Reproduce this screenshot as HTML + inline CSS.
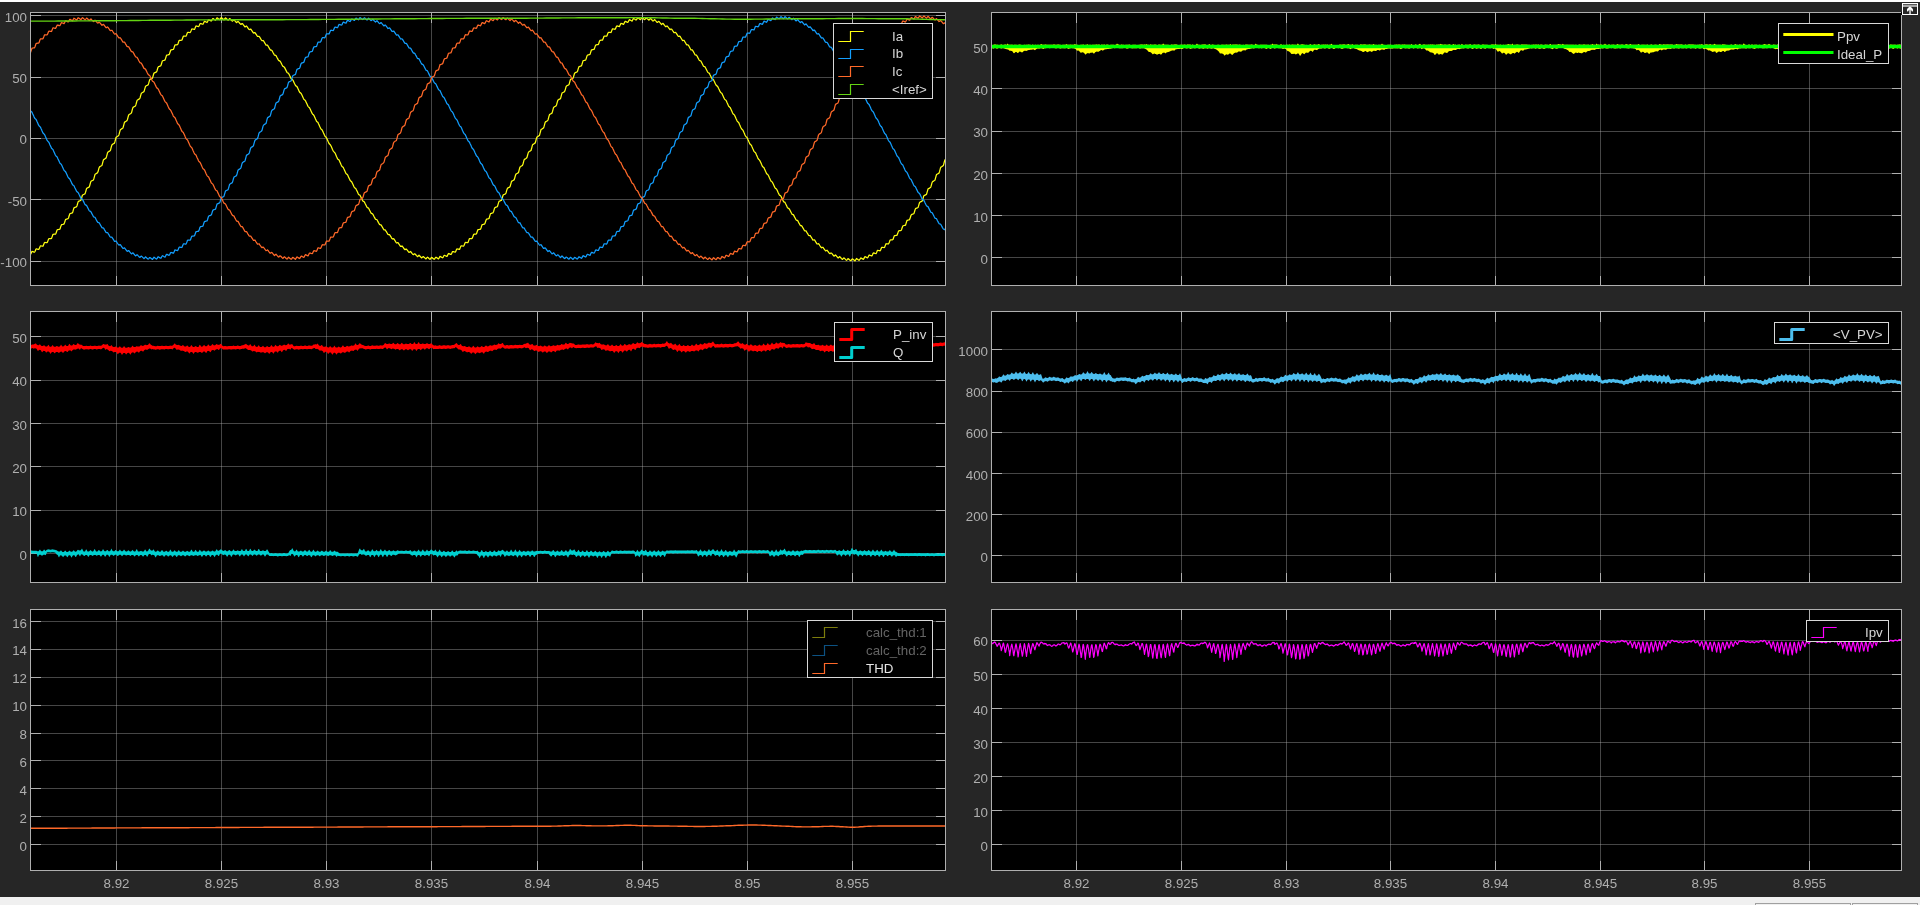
<!DOCTYPE html>
<html lang="en"><head><meta charset="utf-8"><title>Scope</title>
<style>html,body{margin:0;padding:0;background:#262626;overflow:hidden}
body{width:1920px;height:905px;position:relative;font-family:"Liberation Sans", sans-serif}
svg{position:absolute;left:0;top:0;display:block;will-change:transform}
svg text{font-family:"Liberation Sans", sans-serif;white-space:pre}
</style></head><body>
<svg width="1920" height="905" viewBox="0 0 1920 905">
<rect x="0" y="0" width="1920" height="2" fill="#fff"/>
<rect x="0" y="897" width="1920" height="8" fill="#f0f0f0"/>
<g shape-rendering="crispEdges"><rect x="1755.5" y="903.5" width="95" height="4" fill="#f0f0f0" stroke="#a0a0a0"/><rect x="1852.5" y="903.5" width="65" height="4" fill="#f0f0f0" stroke="#a0a0a0"/></g>
<defs>
<clipPath id="a1"><rect x="31" y="13" width="914" height="272"/></clipPath>
<clipPath id="a2"><rect x="31" y="312" width="914" height="270"/></clipPath>
<clipPath id="a3"><rect x="31" y="610" width="914" height="260"/></clipPath>
<clipPath id="a4"><rect x="992" y="13" width="909" height="272"/></clipPath>
<clipPath id="a5"><rect x="992" y="312" width="909" height="270"/></clipPath>
<clipPath id="a6"><rect x="992" y="610" width="909" height="260"/></clipPath>
</defs>
<rect x="30" y="12" width="916" height="274" fill="#000"/>
<g shape-rendering="crispEdges" stroke-width="1" fill="none"><g stroke="#afafaf" stroke-opacity="0.4"><line x1="116.5" y1="13" x2="116.5" y2="285"/><line x1="221.5" y1="13" x2="221.5" y2="285"/><line x1="326.5" y1="13" x2="326.5" y2="285"/><line x1="431.5" y1="13" x2="431.5" y2="285"/><line x1="537.5" y1="13" x2="537.5" y2="285"/><line x1="642.5" y1="13" x2="642.5" y2="285"/><line x1="747.5" y1="13" x2="747.5" y2="285"/><line x1="852.5" y1="13" x2="852.5" y2="285"/><line x1="31" y1="15.5" x2="945" y2="15.5"/><line x1="31" y1="77.5" x2="945" y2="77.5"/><line x1="31" y1="138.5" x2="945" y2="138.5"/><line x1="31" y1="199.5" x2="945" y2="199.5"/><line x1="31" y1="261.5" x2="945" y2="261.5"/></g></g>
<rect x="30" y="311" width="916" height="272" fill="#000"/>
<g shape-rendering="crispEdges" stroke-width="1" fill="none"><g stroke="#afafaf" stroke-opacity="0.4"><line x1="116.5" y1="312" x2="116.5" y2="582"/><line x1="221.5" y1="312" x2="221.5" y2="582"/><line x1="326.5" y1="312" x2="326.5" y2="582"/><line x1="431.5" y1="312" x2="431.5" y2="582"/><line x1="537.5" y1="312" x2="537.5" y2="582"/><line x1="642.5" y1="312" x2="642.5" y2="582"/><line x1="747.5" y1="312" x2="747.5" y2="582"/><line x1="852.5" y1="312" x2="852.5" y2="582"/><line x1="31" y1="336.5" x2="945" y2="336.5"/><line x1="31" y1="380.5" x2="945" y2="380.5"/><line x1="31" y1="423.5" x2="945" y2="423.5"/><line x1="31" y1="466.5" x2="945" y2="466.5"/><line x1="31" y1="510.5" x2="945" y2="510.5"/><line x1="31" y1="553.5" x2="945" y2="553.5"/></g></g>
<rect x="30" y="609" width="916" height="262" fill="#000"/>
<g shape-rendering="crispEdges" stroke-width="1" fill="none"><g stroke="#afafaf" stroke-opacity="0.4"><line x1="116.5" y1="610" x2="116.5" y2="870"/><line x1="221.5" y1="610" x2="221.5" y2="870"/><line x1="326.5" y1="610" x2="326.5" y2="870"/><line x1="431.5" y1="610" x2="431.5" y2="870"/><line x1="537.5" y1="610" x2="537.5" y2="870"/><line x1="642.5" y1="610" x2="642.5" y2="870"/><line x1="747.5" y1="610" x2="747.5" y2="870"/><line x1="852.5" y1="610" x2="852.5" y2="870"/><line x1="31" y1="621.5" x2="945" y2="621.5"/><line x1="31" y1="649.5" x2="945" y2="649.5"/><line x1="31" y1="677.5" x2="945" y2="677.5"/><line x1="31" y1="705.5" x2="945" y2="705.5"/><line x1="31" y1="733.5" x2="945" y2="733.5"/><line x1="31" y1="760.5" x2="945" y2="760.5"/><line x1="31" y1="788.5" x2="945" y2="788.5"/><line x1="31" y1="816.5" x2="945" y2="816.5"/><line x1="31" y1="844.5" x2="945" y2="844.5"/></g></g>
<rect x="991" y="12" width="911" height="274" fill="#000"/>
<g shape-rendering="crispEdges" stroke-width="1" fill="none"><g stroke="#afafaf" stroke-opacity="0.4"><line x1="1076.5" y1="13" x2="1076.5" y2="285"/><line x1="1181.5" y1="13" x2="1181.5" y2="285"/><line x1="1286.5" y1="13" x2="1286.5" y2="285"/><line x1="1390.5" y1="13" x2="1390.5" y2="285"/><line x1="1495.5" y1="13" x2="1495.5" y2="285"/><line x1="1600.5" y1="13" x2="1600.5" y2="285"/><line x1="1704.5" y1="13" x2="1704.5" y2="285"/><line x1="1809.5" y1="13" x2="1809.5" y2="285"/><line x1="992" y1="46.5" x2="1901" y2="46.5"/><line x1="992" y1="88.5" x2="1901" y2="88.5"/><line x1="992" y1="131.5" x2="1901" y2="131.5"/><line x1="992" y1="173.5" x2="1901" y2="173.5"/><line x1="992" y1="215.5" x2="1901" y2="215.5"/><line x1="992" y1="257.5" x2="1901" y2="257.5"/></g></g>
<rect x="991" y="311" width="911" height="272" fill="#000"/>
<g shape-rendering="crispEdges" stroke-width="1" fill="none"><g stroke="#afafaf" stroke-opacity="0.4"><line x1="1076.5" y1="312" x2="1076.5" y2="582"/><line x1="1181.5" y1="312" x2="1181.5" y2="582"/><line x1="1286.5" y1="312" x2="1286.5" y2="582"/><line x1="1390.5" y1="312" x2="1390.5" y2="582"/><line x1="1495.5" y1="312" x2="1495.5" y2="582"/><line x1="1600.5" y1="312" x2="1600.5" y2="582"/><line x1="1704.5" y1="312" x2="1704.5" y2="582"/><line x1="1809.5" y1="312" x2="1809.5" y2="582"/><line x1="992" y1="349.5" x2="1901" y2="349.5"/><line x1="992" y1="391.5" x2="1901" y2="391.5"/><line x1="992" y1="432.5" x2="1901" y2="432.5"/><line x1="992" y1="473.5" x2="1901" y2="473.5"/><line x1="992" y1="514.5" x2="1901" y2="514.5"/><line x1="992" y1="555.5" x2="1901" y2="555.5"/></g></g>
<rect x="991" y="609" width="911" height="262" fill="#000"/>
<g shape-rendering="crispEdges" stroke-width="1" fill="none"><g stroke="#afafaf" stroke-opacity="0.4"><line x1="1076.5" y1="610" x2="1076.5" y2="870"/><line x1="1181.5" y1="610" x2="1181.5" y2="870"/><line x1="1286.5" y1="610" x2="1286.5" y2="870"/><line x1="1390.5" y1="610" x2="1390.5" y2="870"/><line x1="1495.5" y1="610" x2="1495.5" y2="870"/><line x1="1600.5" y1="610" x2="1600.5" y2="870"/><line x1="1704.5" y1="610" x2="1704.5" y2="870"/><line x1="1809.5" y1="610" x2="1809.5" y2="870"/><line x1="992" y1="640.5" x2="1901" y2="640.5"/><line x1="992" y1="674.5" x2="1901" y2="674.5"/><line x1="992" y1="708.5" x2="1901" y2="708.5"/><line x1="992" y1="742.5" x2="1901" y2="742.5"/><line x1="992" y1="776.5" x2="1901" y2="776.5"/><line x1="992" y1="810.5" x2="1901" y2="810.5"/><line x1="992" y1="844.5" x2="1901" y2="844.5"/></g></g>
<g shape-rendering="crispEdges" stroke-width="1" fill="none" stroke="#afafaf"><line x1="116.5" y1="13" x2="116.5" y2="23"/><line x1="116.5" y1="276" x2="116.5" y2="285"/><line x1="221.5" y1="13" x2="221.5" y2="23"/><line x1="221.5" y1="276" x2="221.5" y2="285"/><line x1="326.5" y1="13" x2="326.5" y2="23"/><line x1="326.5" y1="276" x2="326.5" y2="285"/><line x1="431.5" y1="13" x2="431.5" y2="23"/><line x1="431.5" y1="276" x2="431.5" y2="285"/><line x1="537.5" y1="13" x2="537.5" y2="23"/><line x1="537.5" y1="276" x2="537.5" y2="285"/><line x1="642.5" y1="13" x2="642.5" y2="23"/><line x1="642.5" y1="276" x2="642.5" y2="285"/><line x1="747.5" y1="13" x2="747.5" y2="23"/><line x1="747.5" y1="276" x2="747.5" y2="285"/><line x1="852.5" y1="13" x2="852.5" y2="23"/><line x1="852.5" y1="276" x2="852.5" y2="285"/><line x1="31" y1="15.5" x2="41" y2="15.5"/><line x1="936" y1="15.5" x2="945" y2="15.5"/><line x1="31" y1="77.5" x2="41" y2="77.5"/><line x1="936" y1="77.5" x2="945" y2="77.5"/><line x1="31" y1="138.5" x2="41" y2="138.5"/><line x1="936" y1="138.5" x2="945" y2="138.5"/><line x1="31" y1="199.5" x2="41" y2="199.5"/><line x1="936" y1="199.5" x2="945" y2="199.5"/><line x1="31" y1="261.5" x2="41" y2="261.5"/><line x1="936" y1="261.5" x2="945" y2="261.5"/><rect x="30.5" y="12.5" width="915" height="273"/></g>
<g fill="#afafaf" font-size="13.33" text-anchor="end"><text x="27" y="22">100</text><text x="27" y="83">50</text><text x="27" y="144">0</text><text x="27" y="206">-50</text><text x="27" y="267">-100</text></g>
<g shape-rendering="crispEdges" stroke-width="1" fill="none" stroke="#afafaf"><line x1="116.5" y1="312" x2="116.5" y2="322"/><line x1="116.5" y1="573" x2="116.5" y2="582"/><line x1="221.5" y1="312" x2="221.5" y2="322"/><line x1="221.5" y1="573" x2="221.5" y2="582"/><line x1="326.5" y1="312" x2="326.5" y2="322"/><line x1="326.5" y1="573" x2="326.5" y2="582"/><line x1="431.5" y1="312" x2="431.5" y2="322"/><line x1="431.5" y1="573" x2="431.5" y2="582"/><line x1="537.5" y1="312" x2="537.5" y2="322"/><line x1="537.5" y1="573" x2="537.5" y2="582"/><line x1="642.5" y1="312" x2="642.5" y2="322"/><line x1="642.5" y1="573" x2="642.5" y2="582"/><line x1="747.5" y1="312" x2="747.5" y2="322"/><line x1="747.5" y1="573" x2="747.5" y2="582"/><line x1="852.5" y1="312" x2="852.5" y2="322"/><line x1="852.5" y1="573" x2="852.5" y2="582"/><line x1="31" y1="336.5" x2="41" y2="336.5"/><line x1="936" y1="336.5" x2="945" y2="336.5"/><line x1="31" y1="380.5" x2="41" y2="380.5"/><line x1="936" y1="380.5" x2="945" y2="380.5"/><line x1="31" y1="423.5" x2="41" y2="423.5"/><line x1="936" y1="423.5" x2="945" y2="423.5"/><line x1="31" y1="466.5" x2="41" y2="466.5"/><line x1="936" y1="466.5" x2="945" y2="466.5"/><line x1="31" y1="510.5" x2="41" y2="510.5"/><line x1="936" y1="510.5" x2="945" y2="510.5"/><line x1="31" y1="553.5" x2="41" y2="553.5"/><line x1="936" y1="553.5" x2="945" y2="553.5"/><rect x="30.5" y="311.5" width="915" height="271"/></g>
<g fill="#afafaf" font-size="13.33" text-anchor="end"><text x="27" y="343">50</text><text x="27" y="386">40</text><text x="27" y="430">30</text><text x="27" y="473">20</text><text x="27" y="516">10</text><text x="27" y="560">0</text></g>
<g shape-rendering="crispEdges" stroke-width="1" fill="none" stroke="#afafaf"><line x1="116.5" y1="610" x2="116.5" y2="620"/><line x1="116.5" y1="861" x2="116.5" y2="870"/><line x1="221.5" y1="610" x2="221.5" y2="620"/><line x1="221.5" y1="861" x2="221.5" y2="870"/><line x1="326.5" y1="610" x2="326.5" y2="620"/><line x1="326.5" y1="861" x2="326.5" y2="870"/><line x1="431.5" y1="610" x2="431.5" y2="620"/><line x1="431.5" y1="861" x2="431.5" y2="870"/><line x1="537.5" y1="610" x2="537.5" y2="620"/><line x1="537.5" y1="861" x2="537.5" y2="870"/><line x1="642.5" y1="610" x2="642.5" y2="620"/><line x1="642.5" y1="861" x2="642.5" y2="870"/><line x1="747.5" y1="610" x2="747.5" y2="620"/><line x1="747.5" y1="861" x2="747.5" y2="870"/><line x1="852.5" y1="610" x2="852.5" y2="620"/><line x1="852.5" y1="861" x2="852.5" y2="870"/><line x1="31" y1="621.5" x2="41" y2="621.5"/><line x1="936" y1="621.5" x2="945" y2="621.5"/><line x1="31" y1="649.5" x2="41" y2="649.5"/><line x1="936" y1="649.5" x2="945" y2="649.5"/><line x1="31" y1="677.5" x2="41" y2="677.5"/><line x1="936" y1="677.5" x2="945" y2="677.5"/><line x1="31" y1="705.5" x2="41" y2="705.5"/><line x1="936" y1="705.5" x2="945" y2="705.5"/><line x1="31" y1="733.5" x2="41" y2="733.5"/><line x1="936" y1="733.5" x2="945" y2="733.5"/><line x1="31" y1="760.5" x2="41" y2="760.5"/><line x1="936" y1="760.5" x2="945" y2="760.5"/><line x1="31" y1="788.5" x2="41" y2="788.5"/><line x1="936" y1="788.5" x2="945" y2="788.5"/><line x1="31" y1="816.5" x2="41" y2="816.5"/><line x1="936" y1="816.5" x2="945" y2="816.5"/><line x1="31" y1="844.5" x2="41" y2="844.5"/><line x1="936" y1="844.5" x2="945" y2="844.5"/><rect x="30.5" y="609.5" width="915" height="261"/></g>
<g fill="#afafaf" font-size="13.33" text-anchor="end"><text x="27" y="628">16</text><text x="27" y="655">14</text><text x="27" y="683">12</text><text x="27" y="711">10</text><text x="27" y="739">8</text><text x="27" y="767">6</text><text x="27" y="795">4</text><text x="27" y="823">2</text><text x="27" y="851">0</text></g><g fill="#afafaf" font-size="13.33" text-anchor="middle"><text x="116.5" y="888.1">8.92</text><text x="221.5" y="888.1">8.925</text><text x="326.5" y="888.1">8.93</text><text x="431.5" y="888.1">8.935</text><text x="537.5" y="888.1">8.94</text><text x="642.5" y="888.1">8.945</text><text x="747.5" y="888.1">8.95</text><text x="852.5" y="888.1">8.955</text></g>
<g shape-rendering="crispEdges" stroke-width="1" fill="none" stroke="#afafaf"><line x1="1076.5" y1="13" x2="1076.5" y2="23"/><line x1="1076.5" y1="276" x2="1076.5" y2="285"/><line x1="1181.5" y1="13" x2="1181.5" y2="23"/><line x1="1181.5" y1="276" x2="1181.5" y2="285"/><line x1="1286.5" y1="13" x2="1286.5" y2="23"/><line x1="1286.5" y1="276" x2="1286.5" y2="285"/><line x1="1390.5" y1="13" x2="1390.5" y2="23"/><line x1="1390.5" y1="276" x2="1390.5" y2="285"/><line x1="1495.5" y1="13" x2="1495.5" y2="23"/><line x1="1495.5" y1="276" x2="1495.5" y2="285"/><line x1="1600.5" y1="13" x2="1600.5" y2="23"/><line x1="1600.5" y1="276" x2="1600.5" y2="285"/><line x1="1704.5" y1="13" x2="1704.5" y2="23"/><line x1="1704.5" y1="276" x2="1704.5" y2="285"/><line x1="1809.5" y1="13" x2="1809.5" y2="23"/><line x1="1809.5" y1="276" x2="1809.5" y2="285"/><line x1="992" y1="46.5" x2="1002" y2="46.5"/><line x1="1892" y1="46.5" x2="1901" y2="46.5"/><line x1="992" y1="88.5" x2="1002" y2="88.5"/><line x1="1892" y1="88.5" x2="1901" y2="88.5"/><line x1="992" y1="131.5" x2="1002" y2="131.5"/><line x1="1892" y1="131.5" x2="1901" y2="131.5"/><line x1="992" y1="173.5" x2="1002" y2="173.5"/><line x1="1892" y1="173.5" x2="1901" y2="173.5"/><line x1="992" y1="215.5" x2="1002" y2="215.5"/><line x1="1892" y1="215.5" x2="1901" y2="215.5"/><line x1="992" y1="257.5" x2="1002" y2="257.5"/><line x1="1892" y1="257.5" x2="1901" y2="257.5"/><path d="M991.5 12.5 H1901 M1901.5 15 V285.5 H991.5 V12"/></g>
<g fill="#afafaf" font-size="13.33" text-anchor="end"><text x="988" y="53">50</text><text x="988" y="95">40</text><text x="988" y="137">30</text><text x="988" y="180">20</text><text x="988" y="222">10</text><text x="988" y="264">0</text></g>
<g shape-rendering="crispEdges" stroke-width="1" fill="none" stroke="#afafaf"><line x1="1076.5" y1="312" x2="1076.5" y2="322"/><line x1="1076.5" y1="573" x2="1076.5" y2="582"/><line x1="1181.5" y1="312" x2="1181.5" y2="322"/><line x1="1181.5" y1="573" x2="1181.5" y2="582"/><line x1="1286.5" y1="312" x2="1286.5" y2="322"/><line x1="1286.5" y1="573" x2="1286.5" y2="582"/><line x1="1390.5" y1="312" x2="1390.5" y2="322"/><line x1="1390.5" y1="573" x2="1390.5" y2="582"/><line x1="1495.5" y1="312" x2="1495.5" y2="322"/><line x1="1495.5" y1="573" x2="1495.5" y2="582"/><line x1="1600.5" y1="312" x2="1600.5" y2="322"/><line x1="1600.5" y1="573" x2="1600.5" y2="582"/><line x1="1704.5" y1="312" x2="1704.5" y2="322"/><line x1="1704.5" y1="573" x2="1704.5" y2="582"/><line x1="1809.5" y1="312" x2="1809.5" y2="322"/><line x1="1809.5" y1="573" x2="1809.5" y2="582"/><line x1="992" y1="349.5" x2="1002" y2="349.5"/><line x1="1892" y1="349.5" x2="1901" y2="349.5"/><line x1="992" y1="391.5" x2="1002" y2="391.5"/><line x1="1892" y1="391.5" x2="1901" y2="391.5"/><line x1="992" y1="432.5" x2="1002" y2="432.5"/><line x1="1892" y1="432.5" x2="1901" y2="432.5"/><line x1="992" y1="473.5" x2="1002" y2="473.5"/><line x1="1892" y1="473.5" x2="1901" y2="473.5"/><line x1="992" y1="514.5" x2="1002" y2="514.5"/><line x1="1892" y1="514.5" x2="1901" y2="514.5"/><line x1="992" y1="555.5" x2="1002" y2="555.5"/><line x1="1892" y1="555.5" x2="1901" y2="555.5"/><rect x="991.5" y="311.5" width="910" height="271"/></g>
<g fill="#afafaf" font-size="13.33" text-anchor="end"><text x="988" y="356">1000</text><text x="988" y="397">800</text><text x="988" y="438">600</text><text x="988" y="480">400</text><text x="988" y="521">200</text><text x="988" y="562">0</text></g>
<g shape-rendering="crispEdges" stroke-width="1" fill="none" stroke="#afafaf"><line x1="1076.5" y1="610" x2="1076.5" y2="620"/><line x1="1076.5" y1="861" x2="1076.5" y2="870"/><line x1="1181.5" y1="610" x2="1181.5" y2="620"/><line x1="1181.5" y1="861" x2="1181.5" y2="870"/><line x1="1286.5" y1="610" x2="1286.5" y2="620"/><line x1="1286.5" y1="861" x2="1286.5" y2="870"/><line x1="1390.5" y1="610" x2="1390.5" y2="620"/><line x1="1390.5" y1="861" x2="1390.5" y2="870"/><line x1="1495.5" y1="610" x2="1495.5" y2="620"/><line x1="1495.5" y1="861" x2="1495.5" y2="870"/><line x1="1600.5" y1="610" x2="1600.5" y2="620"/><line x1="1600.5" y1="861" x2="1600.5" y2="870"/><line x1="1704.5" y1="610" x2="1704.5" y2="620"/><line x1="1704.5" y1="861" x2="1704.5" y2="870"/><line x1="1809.5" y1="610" x2="1809.5" y2="620"/><line x1="1809.5" y1="861" x2="1809.5" y2="870"/><line x1="992" y1="640.5" x2="1002" y2="640.5"/><line x1="1892" y1="640.5" x2="1901" y2="640.5"/><line x1="992" y1="674.5" x2="1002" y2="674.5"/><line x1="1892" y1="674.5" x2="1901" y2="674.5"/><line x1="992" y1="708.5" x2="1002" y2="708.5"/><line x1="1892" y1="708.5" x2="1901" y2="708.5"/><line x1="992" y1="742.5" x2="1002" y2="742.5"/><line x1="1892" y1="742.5" x2="1901" y2="742.5"/><line x1="992" y1="776.5" x2="1002" y2="776.5"/><line x1="1892" y1="776.5" x2="1901" y2="776.5"/><line x1="992" y1="810.5" x2="1002" y2="810.5"/><line x1="1892" y1="810.5" x2="1901" y2="810.5"/><line x1="992" y1="844.5" x2="1002" y2="844.5"/><line x1="1892" y1="844.5" x2="1901" y2="844.5"/><rect x="991.5" y="609.5" width="910" height="261"/></g>
<g fill="#afafaf" font-size="13.33" text-anchor="end"><text x="988" y="646">60</text><text x="988" y="681">50</text><text x="988" y="715">40</text><text x="988" y="749">30</text><text x="988" y="783">20</text><text x="988" y="817">10</text><text x="988" y="851">0</text></g><g fill="#afafaf" font-size="13.33" text-anchor="middle"><text x="1076.5" y="888.1">8.92</text><text x="1181.5" y="888.1">8.925</text><text x="1286.5" y="888.1">8.93</text><text x="1390.5" y="888.1">8.935</text><text x="1495.5" y="888.1">8.94</text><text x="1600.5" y="888.1">8.945</text><text x="1704.5" y="888.1">8.95</text><text x="1809.5" y="888.1">8.955</text></g>
<polyline clip-path="url(#a1)" points="30.5,254.5 31,253.4 31.5,252.3 32,251.4 32.5,251.6 33,251.7 33.5,251.9 34,252.1 34.5,252.2 35,251.5 35.5,250.3 36,249.1 36.5,248.9 37,249 37.5,249.2 38,249.3 38.5,249.4 39,249.1 39.5,247.9 40,246.7 40.5,245.8 41,245.9 41.5,246 42,246.1 42.5,246.2 43,246.2 43.5,245.1 44,243.8 44.5,242.5 45,242.4 45.5,242.5 46,242.5 46.5,242.6 47,242.6 47.5,242 48,240.6 48.5,239.2 49,238.6 49.5,238.6 50,238.6 50.5,238.6 51,238.6 51.5,238.5 52,237.1 52.5,235.6 53,234.3 53.5,234.3 54,234.2 54.5,234.2 55,234.2 55.5,234.1 56,233.2 56.5,231.7 57,230.2 57.5,229.6 58,229.6 58.5,229.5 59,229.4 59.5,229.3 60,229 60.5,227.4 61,225.9 61.5,224.7 62,224.6 62.5,224.5 63,224.4 63.5,224.2 64,224.1 64.5,222.8 65,221.2 65.5,219.6 66,219.3 66.5,219.1 67,219 67.5,218.8 68,218.7 68.5,218 69,216.3 69.5,214.7 70,213.6 70.5,213.5 71,213.3 71.5,213.1 72,213 72.5,212.8 73,211.2 73.5,209.4 74,207.8 74.5,207.6 75,207.4 75.5,207.2 76,207 76.5,206.8 77,205.7 77.5,204 78,202.2 78.5,201.4 79,201.2 79.5,201 80,200.7 80.5,200.5 81,200.1 81.5,198.3 82,196.5 82.5,195 83,194.8 83.5,194.5 84,194.3 84.5,194 85,193.8 85.5,192.4 86,190.6 86.5,188.7 87,188.1 87.5,187.9 88,187.6 88.5,187.3 89,187.1 89.5,186.3 90,184.5 90.5,182.6 91,181.3 91.5,181 92,180.7 92.5,180.5 93,180.2 93.5,179.9 94,178.2 94.5,176.3 95,174.4 95.5,174 96,173.7 96.5,173.4 97,173.1 97.5,172.8 98,171.8 98.5,169.9 99,168 99.5,166.9 100,166.6 100.5,166.3 101,166 101.5,165.7 102,165.3 102.5,163.3 103,161.4 103.5,159.7 104,159.4 104.5,159.1 105,158.7 105.5,158.4 106,158.1 106.5,156.7 107,154.8 107.5,152.9 108,152.1 108.5,151.7 109,151.4 109.5,151.1 110,150.8 110.5,150.1 111,148.1 111.5,146.2 112,144.7 112.5,144.4 113,144 113.5,143.7 114,143.4 114.5,143.1 115,141.4 115.5,139.5 116,137.5 116.5,137 117,136.7 117.5,136.3 118,136 118.5,135.7 119,134.7 119.5,132.7 120,130.8 120.5,129.6 121,129.3 121.5,128.9 122,128.6 122.5,128.3 123,127.9 123.5,126 124,124.1 124.5,122.2 125,121.9 125.5,121.6 126,121.3 126.5,120.9 127,120.6 127.5,119.4 128,117.4 128.5,115.5 129,114.6 129.5,114.3 130,114 130.5,113.7 131,113.3 131.5,112.8 132,110.9 132.5,108.9 133,107.4 133.5,107.1 134,106.8 134.5,106.5 135,106.2 135.5,105.9 136,104.4 136.5,102.5 137,100.6 137.5,100 138,99.7 138.5,99.4 139,99.1 139.5,98.8 140,98 140.5,96.1 141,94.3 141.5,93 142,92.8 142.5,92.5 143,92.2 143.5,91.9 144,91.7 144.5,89.9 145,88.1 145.5,86.3 146,86 146.5,85.7 147,85.5 147.5,85.2 148,85 148.5,83.9 149,82.1 149.5,80.3 150,79.4 150.5,79.2 151,78.9 151.5,78.7 152,78.5 152.5,78.1 153,76.3 153.5,74.5 154,73 154.5,72.8 155,72.6 155.5,72.4 156,72.2 156.5,72 157,70.7 157.5,69 158,67.3 158.5,66.7 159,66.5 159.5,66.3 160,66.1 160.5,66 161,65.4 161.5,63.7 162,62 162.5,60.8 163,60.7 163.5,60.5 164,60.4 164.5,60.2 165,60.1 165.5,58.6 166,57 166.5,55.4 167,55.1 167.5,55 168,54.9 168.5,54.7 169,54.6 169.5,53.9 170,52.3 170.5,50.7 171,49.9 171.5,49.8 172,49.7 172.5,49.6 173,49.5 173.5,49.4 174,47.9 174.5,46.3 175,44.9 175.5,44.9 176,44.8 176.5,44.8 177,44.7 177.5,44.7 178,43.7 178.5,42.3 179,40.8 179.5,40.3 180,40.3 180.5,40.3 181,40.3 181.5,40.2 182,40 182.5,38.5 183,37.1 183.5,36.1 184,36.1 184.5,36.1 185,36.2 185.5,36.2 186,36.2 186.5,35.2 187,33.8 187.5,32.5 188,32.3 188.5,32.4 189,32.4 189.5,32.5 190,32.6 190.5,32.1 191,30.9 191.5,29.6 192,28.9 192.5,29 193,29.1 193.5,29.2 194,29.3 194.5,29.4 195,28.3 195.5,27.1 196,25.9 196.5,26 197,26.2 197.5,26.3 198,26.5 198.5,26.6 199,26.1 199.5,24.9 200,23.8 200.5,23.5 201,23.6 201.5,23.8 202,24 202.5,24.2 203,24.2 203.5,23.2 204,22.1 204.5,21.3 205,21.5 205.5,21.7 206,22 206.5,22.2 207,22.5 207.5,21.8 208,20.8 208.5,19.8 209,19.8 209.5,20.1 210,20.4 210.5,20.7 211,20.9 211.5,20.9 212,19.9 212.5,19 213,18.6 213.5,18.9 214,19.2 214.5,19.5 215,19.9 215.5,20.2 216,19.5 216.5,18.6 217,17.8 217.5,18.1 218,18.5 218.5,18.8 219,19.2 219.5,19.6 220,19.4 220.5,18.6 221,17.9 221.5,17.7 222,18.1 222.5,18.6 223,19 223.5,19.4 224,19.8 224.5,19.1 225,18.4 225.5,17.8 226,18.3 226.5,18.7 227,19.2 227.5,19.7 228,20.1 228.5,19.9 229,19.3 229.5,18.7 230,18.8 230.5,19.3 231,19.8 231.5,20.4 232,20.9 232.5,21.1 233,20.6 233.5,20 234,19.8 234.5,20.4 235,20.9 235.5,21.5 236,22 236.5,22.6 237,22.3 237.5,21.8 238,21.4 238.5,21.8 239,22.4 239.5,23 240,23.6 240.5,24.2 241,24.4 241.5,24 242,23.6 242.5,23.7 243,24.4 243.5,25 244,25.6 244.5,26.3 245,27 245.5,26.6 246,26.3 246.5,26 247,26.7 247.5,27.4 248,28.1 248.5,28.8 249,29.5 249.5,29.6 250,29.3 250.5,29.1 251,29.4 251.5,30.2 252,30.9 252.5,31.6 253,32.4 253.5,33 254,32.8 254.5,32.6 255,32.6 255.5,33.3 256,34.1 256.5,34.9 257,35.7 257.5,36.4 258,36.5 258.5,36.4 259,36.3 259.5,36.9 260,37.7 260.5,38.5 261,39.3 261.5,40.1 262,40.7 262.5,40.6 263,40.5 263.5,40.8 264,41.7 264.5,42.5 265,43.4 265.5,44.2 266,45.1 266.5,45.1 267,45.1 267.5,45.1 268,46 268.5,46.9 269,47.7 269.5,48.6 270,49.5 270.5,50 271,50 271.5,50.1 272,50.6 272.5,51.5 273,52.5 273.5,53.4 274,54.3 274.5,55.1 275,55.2 275.5,55.3 276,55.6 276.5,56.5 277,57.5 277.5,58.4 278,59.4 278.5,60.3 279,60.7 279.5,60.9 280,61.1 280.5,61.8 281,62.8 281.5,63.8 282,64.8 282.5,65.7 283,66.5 283.5,66.7 284,66.9 284.5,67.4 285,68.4 285.5,69.4 286,70.4 286.5,71.4 287,72.4 287.5,72.8 288,73 288.5,73.3 289,74.2 289.5,75.3 290,76.3 290.5,77.3 291,78.4 291.5,79.1 292,79.3 292.5,79.6 293,80.3 293.5,81.3 294,82.4 294.5,83.5 295,84.5 295.5,85.6 296,85.9 296.5,86.2 297,86.6 297.5,87.6 298,88.7 298.5,89.8 299,90.9 299.5,92 300,92.6 300.5,92.9 301,93.3 301.5,94.1 302,95.2 302.5,96.3 303,97.4 303.5,98.5 304,99.5 304.5,99.8 305,100.2 305.5,100.8 306,101.9 306.5,103 307,104.1 307.5,105.2 308,106.3 308.5,106.9 309,107.3 309.5,107.7 310,108.7 310.5,109.8 311,110.9 311.5,112 312,113.2 312.5,114 313,114.4 313.5,114.8 314,115.6 314.5,116.7 315,117.8 315.5,119 316,120.1 316.5,121.2 317,121.7 317.5,122.1 318,122.5 318.5,123.7 319,124.8 319.5,125.9 320,127.1 320.5,128.2 321,129 321.5,129.4 322,129.8 322.5,130.7 323,131.8 323.5,133 324,134.1 324.5,135.3 325,136.3 325.5,136.8 326,137.2 326.5,137.8 327,138.9 327.5,140 328,141.2 328.5,142.3 329,143.5 329.5,144.1 330,144.5 330.5,145 331,146 331.5,147.1 332,148.2 332.5,149.4 333,150.5 333.5,151.4 334,151.9 334.5,152.3 335,153 335.5,154.1 336,155.2 336.5,156.4 337,157.5 337.5,158.7 338,159.2 338.5,159.6 339,160 339.5,161.1 340,162.2 340.5,163.3 341,164.5 341.5,165.6 342,166.4 342.5,166.8 343,167.2 343.5,167.9 344,169.1 344.5,170.2 345,171.3 345.5,172.4 346,173.5 346.5,173.9 347,174.3 347.5,174.7 348,175.8 348.5,176.9 349,178 349.5,179.1 350,180.2 350.5,180.9 351,181.2 351.5,181.6 352,182.4 352.5,183.5 353,184.6 353.5,185.7 354,186.8 354.5,187.7 355,188 355.5,188.3 356,188.9 356.5,190 357,191 357.5,192.1 358,193.2 358.5,194.2 359,194.7 359.5,195 360,195.2 360.5,196.2 361,197.2 361.5,198.3 362,199.3 362.5,200.4 363,201.1 363.5,201.4 364,201.6 364.5,202.2 365,203.3 365.5,204.3 366,205.3 366.5,206.3 367,207.3 367.5,207.6 368,207.8 368.5,208 369,209 369.5,210 370,211 370.5,212 371,213 371.5,213.5 372,213.7 372.5,213.9 373,214.5 373.5,215.5 374,216.5 374.5,217.4 375,218.4 375.5,219.2 376,219.4 376.5,219.5 377,219.8 377.5,220.7 378,221.6 378.5,222.6 379,223.5 379.5,224.4 380,224.7 380.5,224.8 381,224.9 381.5,225.6 382,226.5 382.5,227.4 383,228.3 383.5,229.2 384,229.8 384.5,229.8 385,229.9 385.5,230.2 386,231.1 386.5,231.9 387,232.8 387.5,233.7 388,234.5 388.5,234.6 389,234.5 389.5,234.5 390,235.3 390.5,236.1 391,236.9 391.5,237.8 392,238.6 392.5,239 393,238.9 393.5,238.7 394,239.1 394.5,239.9 395,240.7 395.5,241.5 396,242.3 396.5,243 397,242.8 397.5,242.7 398,242.6 398.5,243.4 399,244.1 399.5,244.9 400,245.6 400.5,246.4 401,246.5 401.5,246.2 402,246 402.5,246.5 403,247.2 403.5,247.9 404,248.6 404.5,249.3 405,249.7 405.5,249.4 406,249.1 406.5,249.1 407,249.8 407.5,250.5 408,251.1 408.5,251.8 409,252.4 409.5,252.2 410,251.9 410.5,251.5 411,252 411.5,252.6 412,253.3 412.5,253.9 413,254.5 413.5,254.7 414,254.2 414.5,253.8 415,253.8 415.5,254.4 416,255 416.5,255.6 417,256.1 417.5,256.7 418,256.2 418.5,255.7 419,255.2 419.5,255.8 420,256.3 420.5,256.8 421,257.3 421.5,257.9 422,257.7 422.5,257.1 423,256.6 423.5,256.7 424,257.2 424.5,257.6 425,258.1 425.5,258.6 426,258.9 426.5,258.2 427,257.6 427.5,257.1 428,257.6 428.5,258 429,258.5 429.5,258.9 430,259.3 430.5,258.9 431,258.1 431.5,257.4 432,257.6 432.5,258 433,258.4 433.5,258.8 434,259.2 434.5,259.1 435,258.3 435.5,257.5 436,257.2 436.5,257.5 437,257.9 437.5,258.2 438,258.6 438.5,258.9 439,258.1 439.5,257.2 440,256.3 440.5,256.6 441,256.9 441.5,257.2 442,257.5 442.5,257.8 443,257.4 443.5,256.5 444,255.5 444.5,255.3 445,255.5 445.5,255.8 446,256 446.5,256.3 447,256.4 447.5,255.4 448,254.3 448.5,253.5 449,253.7 449.5,253.9 450,254.1 450.5,254.3 451,254.5 451.5,253.8 452,252.7 452.5,251.6 453,251.5 453.5,251.6 454,251.8 454.5,252 455,252.1 455.5,251.9 456,250.7 456.5,249.6 457,248.8 457.5,249 458,249.1 458.5,249.2 459,249.3 459.5,249.4 460,248.4 460.5,247.1 461,245.9 461.5,245.9 462,245.9 462.5,246 463,246.1 463.5,246.2 464,245.6 464.5,244.3 465,243 465.5,242.4 466,242.4 466.5,242.5 467,242.5 467.5,242.5 468,242.5 468.5,241.1 469,239.7 469.5,238.5 470,238.5 470.5,238.5 471,238.5 471.5,238.5 472,238.5 472.5,237.6 473,236.2 473.5,234.7 474,234.2 474.5,234.2 475,234.2 475.5,234.1 476,234.1 476.5,233.7 477,232.2 477.5,230.7 478,229.6 478.5,229.5 479,229.5 479.5,229.4 480,229.3 480.5,229.2 481,228 481.5,226.4 482,224.9 482.5,224.6 483,224.5 483.5,224.3 484,224.2 484.5,224.1 485,223.4 485.5,221.8 486,220.2 486.5,219.2 487,219.1 487.5,219 488,218.8 488.5,218.7 489,218.5 489.5,216.9 490,215.3 490.5,213.6 491,213.5 491.5,213.3 492,213.1 492.5,213 493,212.8 493.5,211.8 494,210.1 494.5,208.3 495,207.6 495.5,207.4 496,207.2 496.5,207 497,206.8 497.5,206.3 498,204.6 498.5,202.9 499,201.4 499.5,201.2 500,201 500.5,200.7 501,200.5 501.5,200.3 502,198.9 502.5,197.1 503,195.3 503.5,194.8 504,194.5 504.5,194.3 505,194 505.5,193.8 506,193 506.5,191.2 507,189.4 507.5,188.2 508,187.9 508.5,187.6 509,187.4 509.5,187.1 510,186.8 510.5,185.1 511,183.3 511.5,181.4 512,181.1 512.5,180.8 513,180.5 513.5,180.2 514,179.9 514.5,178.9 515,177 515.5,175.1 516,174.1 516.5,173.8 517,173.5 517.5,173.2 518,172.9 518.5,172.5 519,170.6 519.5,168.7 520,167 520.5,166.7 521,166.3 521.5,166 522,165.7 522.5,165.4 523,164 523.5,162.1 524,160.2 524.5,159.4 525,159.1 525.5,158.8 526,158.5 526.5,158.1 527,157.4 527.5,155.5 528,153.6 528.5,152.1 529,151.8 529.5,151.5 530,151.1 530.5,150.8 531,150.5 531.5,148.8 532,146.9 532.5,144.9 533,144.4 533.5,144.1 534,143.8 534.5,143.4 535,143.1 535.5,142.1 536,140.1 536.5,138.2 537,137 537.5,136.7 538,136.4 538.5,136 539,135.7 539.5,135.4 540,133.4 540.5,131.5 541,129.6 541.5,129.3 542,129 542.5,128.6 543,128.3 543.5,128 544,126.7 544.5,124.8 545,122.8 545.5,121.9 546,121.6 546.5,121.3 547,121 547.5,120.7 548,120 548.5,118.1 549,116.2 549.5,114.6 550,114.3 550.5,114 551,113.7 551.5,113.4 552,113.1 552.5,111.5 553,109.6 553.5,107.7 554,107.1 554.5,106.8 555,106.5 555.5,106.2 556,105.9 556.5,105 557,103.2 557.5,101.3 558,100 558.5,99.7 559,99.4 559.5,99.1 560,98.9 560.5,98.6 561,96.8 561.5,94.9 562,93.1 562.5,92.8 563,92.5 563.5,92.2 564,92 564.5,91.7 565,90.6 565.5,88.8 566,86.9 566.5,86 567,85.7 567.5,85.5 568,85.2 568.5,85 569,84.6 569.5,82.8 570,81 570.5,79.4 571,79.2 571.5,78.9 572,78.7 572.5,78.5 573,78.2 573.5,76.9 574,75.2 574.5,73.4 575,72.8 575.5,72.6 576,72.4 576.5,72.2 577,72 577.5,71.3 578,69.6 578.5,67.9 579,66.7 579.5,66.5 580,66.3 580.5,66.1 581,66 581.5,65.8 582,64.3 582.5,62.6 583,60.9 583.5,60.7 584,60.5 584.5,60.4 585,60.2 585.5,60.1 586,59.2 586.5,57.6 587,56 587.5,55.1 588,55 588.5,54.9 589,54.7 589.5,54.6 590,54.4 590.5,52.9 591,51.3 591.5,49.8 592,49.8 592.5,49.7 593,49.6 593.5,49.5 594,49.4 594.5,48.4 595,46.9 595.5,45.4 596,44.8 596.5,44.8 597,44.7 597.5,44.7 598,44.6 598.5,44.3 599,42.8 599.5,41.3 600,40.3 600.5,40.3 601,40.2 601.5,40.2 602,40.2 602.5,40.2 603,39.1 603.5,37.7 604,36.3 604.5,36.1 605,36.1 605.5,36.1 606,36.1 606.5,36.2 607,35.7 607.5,34.3 608,33 608.5,32.3 609,32.3 609.5,32.4 610,32.4 610.5,32.5 611,32.6 611.5,31.3 612,30.1 612.5,28.8 613,28.9 613.5,29 614,29.1 614.5,29.2 615,29.3 615.5,28.7 616,27.5 616.5,26.3 617,25.9 617.5,26.1 618,26.2 618.5,26.4 619,26.5 619.5,26.5 620,25.3 620.5,24.2 621,23.3 621.5,23.5 622,23.7 622.5,23.9 623,24.1 623.5,24.3 624,23.6 624.5,22.5 625,21.4 625.5,21.4 626,21.6 626.5,21.8 627,22.1 627.5,22.3 628,22.2 628.5,21.2 629,20.2 629.5,19.7 630,19.9 630.5,20.2 631,20.5 631.5,20.8 632,21.1 632.5,20.3 633,19.3 633.5,18.4 634,18.7 634.5,19 635,19.3 635.5,19.7 636,20 636.5,19.7 637,18.9 637.5,18.1 638,17.9 638.5,18.2 639,18.6 639.5,19 640,19.4 640.5,19.7 641,18.9 641.5,18.1 642,17.5 642.5,17.9 643,18.3 643.5,18.7 644,19.2 644.5,19.6 645,19.3 645.5,18.6 646,17.9 646.5,18 647,18.5 647.5,18.9 648,19.4 648.5,19.9 649,20.1 649.5,19.4 650,18.8 650.5,18.5 651,19 651.5,19.5 652,20 652.5,20.6 653,21.1 653.5,20.7 654,20.2 654.5,19.6 655,20 655.5,20.6 656,21.1 656.5,21.7 657,22.3 657.5,22.4 658,21.9 658.5,21.4 659,21.5 659.5,22.1 660,22.7 660.5,23.3 661,23.9 661.5,24.5 662,24.1 662.5,23.7 663,23.3 663.5,24 664,24.6 664.5,25.3 665,25.9 665.5,26.6 666,26.6 666.5,26.3 667,26 667.5,26.3 668,27 668.5,27.7 669,28.3 669.5,29 670,29.6 670.5,29.3 671,29 671.5,29 672,29.7 672.5,30.5 673,31.2 673.5,31.9 674,32.7 674.5,32.7 675,32.5 675.5,32.3 676,32.9 676.5,33.6 677,34.4 677.5,35.2 678,36 678.5,36.4 679,36.3 679.5,36.2 680,36.4 680.5,37.2 681,38 681.5,38.8 682,39.7 682.5,40.5 683,40.5 683.5,40.4 684,40.3 684.5,41.2 685,42 685.5,42.8 686,43.7 686.5,44.6 687,45 687.5,44.9 688,44.9 688.5,45.4 689,46.3 689.5,47.2 690,48.1 690.5,49 691,49.8 691.5,49.8 692,49.9 692.5,50.1 693,51 693.5,51.9 694,52.8 694.5,53.7 695,54.7 695.5,55 696,55.1 696.5,55.2 697,56 697.5,56.9 698,57.9 698.5,58.8 699,59.8 699.5,60.5 700,60.7 700.5,60.8 701,61.2 701.5,62.2 702,63.2 702.5,64.2 703,65.2 703.5,66.2 704,66.5 704.5,66.7 705,66.9 705.5,67.8 706,68.8 706.5,69.8 707,70.8 707.5,71.8 708,72.5 708.5,72.8 709,73 709.5,73.6 710,74.7 710.5,75.7 711,76.7 711.5,77.8 712,78.8 712.5,79.1 713,79.4 713.5,79.7 714,80.8 714.5,81.8 715,82.9 715.5,84 716,85 716.5,85.6 717,85.9 717.5,86.3 718,87.1 718.5,88.2 719,89.2 719.5,90.3 720,91.4 720.5,92.3 721,92.7 721.5,93 722,93.6 722.5,94.7 723,95.8 723.5,96.9 724,98 724.5,99.1 725,99.6 725.5,100 726,100.3 726.5,101.3 727,102.5 727.5,103.6 728,104.7 728.5,105.8 729,106.6 729.5,107 730,107.4 730.5,108.2 731,109.3 731.5,110.4 732,111.5 732.5,112.7 733,113.8 733.5,114.2 734,114.6 734.5,115.1 735,116.2 735.5,117.3 736,118.5 736.5,119.6 737,120.8 737.5,121.5 738,121.9 738.5,122.4 739,123.2 739.5,124.4 740,125.5 740.5,126.7 741,127.8 741.5,128.8 742,129.3 742.5,129.7 743,130.3 743.5,131.4 744,132.6 744.5,133.7 745,134.9 745.5,136 746,136.7 746.5,137.1 747,137.5 747.5,138.5 748,139.7 748.5,140.8 749,142 749.5,143.1 750,144.1 750.5,144.5 751,144.9 751.5,145.6 752,146.8 752.5,147.9 753,149.1 753.5,150.2 754,151.4 754.5,151.9 755,152.3 755.5,152.7 756,153.8 756.5,155 757,156.1 757.5,157.3 758,158.4 758.5,159.2 759,159.6 759.5,160.1 760,160.9 760.5,162 761,163.1 761.5,164.3 762,165.4 762.5,166.5 763,166.9 763.5,167.3 764,167.8 764.5,168.9 765,170 765.5,171.2 766,172.3 766.5,173.4 767,174.1 767.5,174.5 768,174.8 768.5,175.7 769,176.8 769.5,178 770,179.1 770.5,180.2 771,181.1 771.5,181.5 772,181.8 772.5,182.4 773,183.5 773.5,184.6 774,185.7 774.5,186.8 775,187.9 775.5,188.4 776,188.7 776.5,189 777,190 777.5,191.1 778,192.2 778.5,193.2 779,194.3 779.5,195.1 780,195.4 780.5,195.7 781,196.3 781.5,197.4 782,198.4 782.5,199.5 783,200.5 783.5,201.6 784,201.9 784.5,202.1 785,202.4 785.5,203.5 786,204.5 786.5,205.5 787,206.6 787.5,207.6 788,208.1 788.5,208.4 789,208.6 789.5,209.3 790,210.3 790.5,211.3 791,212.3 791.5,213.3 792,214.2 792.5,214.4 793,214.6 793.5,214.9 794,215.9 794.5,216.9 795,217.8 795.5,218.8 796,219.8 796.5,220.1 797,220.3 797.5,220.4 798,221.2 798.5,222.1 799,223.1 799.5,224 800,224.9 800.5,225.6 801,225.7 801.5,225.7 802,226.2 802.5,227.1 803,228 803.5,228.9 804,229.8 804.5,230.7 805,230.8 805.5,230.8 806,230.8 806.5,231.7 807,232.6 807.5,233.4 808,234.3 808.5,235.2 809,235.6 809.5,235.6 810,235.5 810.5,236 811,236.8 811.5,237.7 812,238.5 812.5,239.3 813,240.1 813.5,240 814,239.9 814.5,239.9 815,240.7 815.5,241.5 816,242.3 816.5,243.1 817,243.9 817.5,244 818,243.9 818.5,243.7 819,244.2 819.5,245 820,245.8 820.5,246.5 821,247.3 821.5,247.8 822,247.5 822.5,247.3 823,247.4 823.5,248.1 824,248.8 824.5,249.5 825,250.2 825.5,250.9 826,250.8 826.5,250.5 827,250.2 827.5,250.8 828,251.5 828.5,252.1 829,252.8 829.5,253.5 830,253.7 830.5,253.3 831,253 831.5,253.1 832,253.7 832.5,254.3 833,255 833.5,255.6 834,256.2 834.5,255.8 835,255.3 835.5,255 836,255.5 836.5,256.1 837,256.7 837.5,257.3 838,257.9 838.5,257.8 839,257.3 839.5,256.7 840,256.9 840.5,257.5 841,258 841.5,258.6 842,259.1 842.5,259.4 843,258.8 843.5,258.2 844,257.9 844.5,258.4 845,258.9 845.5,259.4 846,259.9 846.5,260.3 847,259.9 847.5,259.3 848,258.6 848.5,258.9 849,259.3 849.5,259.8 850,260.2 850.5,260.6 851,260.6 851.5,259.9 852,259.2 852.5,258.9 853,259.3 853.5,259.7 854,260.1 854.5,260.5 855,260.9 855.5,260.1 856,259.3 856.5,258.5 857,258.9 857.5,259.2 858,259.6 858.5,259.9 859,260.3 859.5,259.9 860,259.1 860.5,258.2 861,258 861.5,258.3 862,258.6 862.5,258.9 863,259.2 863.5,259.3 864,258.4 864.5,257.4 865,256.7 865.5,256.9 866,257.2 866.5,257.4 867,257.7 867.5,257.9 868,257.3 868.5,256.2 869,255.2 869.5,255.1 870,255.3 870.5,255.5 871,255.7 871.5,255.9 872,255.8 872.5,254.7 873,253.5 873.5,252.9 874,253.1 874.5,253.2 875,253.4 875.5,253.5 876,253.7 876.5,252.7 877,251.5 877.5,250.3 878,250.4 878.5,250.5 879,250.6 879.5,250.7 880,250.8 880.5,250.3 881,249.1 881.5,247.8 882,247.3 882.5,247.3 883,247.4 883.5,247.5 884,247.6 884.5,247.5 885,246.2 885.5,244.9 886,243.7 886.5,243.8 887,243.8 887.5,243.9 888,243.9 888.5,243.9 889,243 889.5,241.7 890,240.3 890.5,239.9 891,239.9 891.5,239.8 892,239.8 892.5,239.8 893,239.5 893.5,238 894,236.6 894.5,235.5 895,235.5 895.5,235.5 896,235.4 896.5,235.4 897,235.3 897.5,234.1 898,232.6 898.5,231.1 899,230.8 899.5,230.7 900,230.6 900.5,230.6 901,230.5 901.5,229.8 902,228.2 902.5,226.7 903,225.8 903.5,225.7 904,225.5 904.5,225.4 905,225.3 905.5,225.2 906,223.6 906.5,222 907,220.4 907.5,220.3 908,220.1 908.5,220 909,219.8 909.5,219.7 910,218.6 910.5,217 911,215.3 911.5,214.6 912,214.4 912.5,214.2 913,214 913.5,213.8 914,213.4 914.5,211.7 915,210 915.5,208.6 916,208.4 916.5,208.2 917,208 917.5,207.8 918,207.5 918.5,206.2 919,204.4 919.5,202.7 920,202.1 920.5,201.9 921,201.7 921.5,201.4 922,201.2 922.5,200.4 923,198.6 923.5,196.8 924,195.6 924.5,195.4 925,195.1 925.5,194.9 926,194.6 926.5,194.3 927,192.6 927.5,190.8 928,189 928.5,188.6 929,188.4 929.5,188.1 930,187.8 930.5,187.5 931,186.4 931.5,184.6 932,182.7 932.5,181.7 933,181.4 933.5,181.1 934,180.8 934.5,180.5 935,180.1 935.5,178.2 936,176.3 936.5,174.6 937,174.3 937.5,174 938,173.7 938.5,173.4 939,173.1 939.5,171.7 940,169.8 940.5,167.9 941,167.1 941.5,166.8 942,166.5 942.5,166.1 943,165.8 943.5,165.1 944,163.1 944.5,161.2 945,159.8 945.5,159.5 946,159.1" fill="none" stroke="#ffff11" stroke-width="1.25" stroke-linejoin="round" />
<polyline clip-path="url(#a1)" points="30.5,110.9 31,111.3 31.5,111.7 32,112.2 32.5,113.4 33,114.5 33.5,115.6 34,116.8 34.5,117.9 35,118.5 35.5,118.9 36,119.4 36.5,120.3 37,121.5 37.5,122.6 38,123.7 38.5,124.9 39,125.8 39.5,126.2 40,126.7 40.5,127.3 41,128.5 41.5,129.6 42,130.8 42.5,131.9 43,133 43.5,133.6 44,134 44.5,134.4 45,135.5 45.5,136.7 46,137.8 46.5,138.9 47,140.1 47.5,140.9 48,141.4 48.5,141.8 49,142.6 49.5,143.7 50,144.9 50.5,146 51,147.1 51.5,148.3 52,148.7 52.5,149.1 53,149.6 53.5,150.8 54,151.9 54.5,153 55,154.2 55.5,155.3 56,156 56.5,156.4 57,156.8 57.5,157.7 58,158.9 58.5,160 59,161.1 59.5,162.3 60,163.3 60.5,163.7 61,164.1 61.5,164.7 62,165.8 62.5,166.9 63,168 63.5,169.2 64,170.3 64.5,170.8 65,171.2 65.5,171.6 66,172.6 66.5,173.7 67,174.8 67.5,175.9 68,177 68.5,177.9 69,178.2 69.5,178.6 70,179.3 70.5,180.4 71,181.5 71.5,182.6 72,183.6 72.5,184.7 73,185.1 73.5,185.5 74,185.8 74.5,186.9 75,188 75.5,189 76,190.1 76.5,191.2 77,191.8 77.5,192.1 78,192.5 78.5,193.2 79,194.3 79.5,195.3 80,196.4 80.5,197.4 81,198.4 81.5,198.7 82,198.9 82.5,199.3 83,200.4 83.5,201.4 84,202.4 84.5,203.5 85,204.5 85.5,205 86,205.2 86.5,205.4 87,206.3 87.5,207.3 88,208.3 88.5,209.3 89,210.3 89.5,211 90,211.2 90.5,211.4 91,211.9 91.5,212.9 92,213.9 92.5,214.8 93,215.8 93.5,216.8 94,217 94.5,217.2 95,217.3 95.5,218.2 96,219.2 96.5,220.1 97,221.1 97.5,222 98,222.5 98.5,222.6 99,222.7 99.5,223.3 100,224.2 100.5,225.1 101,226 101.5,226.9 102,227.8 102.5,227.8 103,227.9 103.5,228 104,228.9 104.5,229.8 105,230.6 105.5,231.5 106,232.4 106.5,232.7 107,232.7 107.5,232.6 108,233.2 108.5,234.1 109,234.9 109.5,235.8 110,236.6 110.5,237.2 111,237.2 111.5,237.1 112,237.3 112.5,238.1 113,238.9 113.5,239.7 114,240.5 114.5,241.3 115,241.3 115.5,241.2 116,241 116.5,241.7 117,242.5 117.5,243.2 118,244 118.5,244.7 119,245.1 119.5,244.9 120,244.7 120.5,244.9 121,245.7 121.5,246.4 122,247.1 122.5,247.8 123,248.5 123.5,248.3 124,248 124.5,247.8 125,248.5 125.5,249.2 126,249.8 126.5,250.5 127,251.2 127.5,251.3 128,250.9 128.5,250.6 129,250.9 129.5,251.5 130,252.2 130.5,252.8 131,253.4 131.5,253.9 132,253.5 132.5,253.1 133,252.9 133.5,253.5 134,254.1 134.5,254.7 135,255.3 135.5,255.8 136,255.6 136.5,255.2 137,254.7 137.5,255 138,255.6 138.5,256.1 139,256.7 139.5,257.2 140,257.4 140.5,256.8 141,256.3 141.5,256.1 142,256.6 142.5,257.1 143,257.6 143.5,258.1 144,258.6 144.5,258.1 145,257.5 145.5,256.8 146,257.3 146.5,257.7 147,258.2 147.5,258.6 148,259.1 148.5,259 149,258.3 149.5,257.5 150,257.5 150.5,257.9 151,258.3 151.5,258.7 152,259.1 152.5,259.4 153,258.6 153.5,257.8 154,257.2 154.5,257.6 155,258 155.5,258.3 156,258.7 156.5,259.1 157,258.6 157.5,257.7 158,256.9 158.5,256.9 159,257.2 159.5,257.5 160,257.9 160.5,258.2 161,258.1 161.5,257.2 162,256.3 162.5,255.7 163,256 163.5,256.3 164,256.6 164.5,256.8 165,257.1 165.5,256.3 166,255.3 166.5,254.3 167,254.4 167.5,254.6 168,254.9 168.5,255.1 169,255.3 169.5,255 170,253.9 170.5,252.8 171,252.4 171.5,252.5 172,252.7 172.5,252.9 173,253.1 173.5,253.2 174,252.1 174.5,250.9 175,249.9 175.5,250 176,250.2 176.5,250.3 177,250.5 177.5,250.6 178,249.9 178.5,248.7 179,247.5 179.5,247.1 180,247.2 180.5,247.3 181,247.4 181.5,247.5 182,247.3 182.5,246.1 183,244.8 183.5,243.8 184,243.9 184.5,243.9 185,244 185.5,244 186,244.1 186.5,243 187,241.7 187.5,240.3 188,240.1 188.5,240.2 189,240.2 189.5,240.2 190,240.2 190.5,239.7 191,238.3 191.5,236.9 192,236 192.5,236 193,236 193.5,236 194,235.9 194.5,235.9 195,234.5 195.5,233 196,231.6 196.5,231.5 197,231.5 197.5,231.4 198,231.3 198.5,231.3 199,230.4 199.5,228.9 200,227.3 200.5,226.7 201,226.6 201.5,226.5 202,226.4 202.5,226.3 203,226 203.5,224.4 204,222.8 204.5,221.5 205,221.4 205.5,221.3 206,221.1 206.5,221 207,220.9 207.5,219.7 208,218 208.5,216.4 209,215.9 209.5,215.7 210,215.6 210.5,215.4 211,215.2 211.5,214.6 212,212.9 212.5,211.3 213,210.1 213.5,209.9 214,209.7 214.5,209.5 215,209.3 215.5,209.2 216,207.6 216.5,205.9 217,204.1 217.5,203.8 218,203.6 218.5,203.4 219,203.2 219.5,203 220,202 220.5,200.3 221,198.5 221.5,197.5 222,197.3 222.5,197.1 223,196.8 223.5,196.6 224,196.2 224.5,194.4 225,192.6 225.5,191 226,190.7 226.5,190.5 227,190.2 227.5,190 228,189.7 228.5,188.4 229,186.6 229.5,184.7 230,184 230.5,183.7 231,183.4 231.5,183.2 232,182.9 232.5,182.2 233,180.4 233.5,178.5 234,177.1 234.5,176.8 235,176.5 235.5,176.2 236,175.9 236.5,175.6 237,174 237.5,172.1 238,170.2 238.5,169.7 239,169.4 239.5,169.1 240,168.8 240.5,168.5 241,167.5 241.5,165.6 242,163.7 242.5,162.5 243,162.2 243.5,161.9 244,161.6 244.5,161.3 245,160.9 245.5,159 246,157.1 246.5,155.2 247,154.9 247.5,154.6 248,154.3 248.5,153.9 249,153.6 249.5,152.4 250,150.4 250.5,148.5 251,147.6 251.5,147.2 252,146.9 252.5,146.6 253,146.3 253.5,145.7 254,143.7 254.5,141.8 255,140.2 255.5,139.9 256,139.5 256.5,139.2 257,138.9 257.5,138.5 258,137 258.5,135.1 259,133.1 259.5,132.5 260,132.1 260.5,131.8 261,131.5 261.5,131.1 262,130.3 262.5,128.3 263,126.4 263.5,125.1 264,124.8 264.5,124.4 265,124.1 265.5,123.8 266,123.5 266.5,121.7 267,119.7 267.5,117.8 268,117.4 268.5,117.1 269,116.8 269.5,116.5 270,116.2 270.5,115 271,113.1 271.5,111.2 272,110.2 272.5,109.9 273,109.6 273.5,109.3 274,109 274.5,108.5 275,106.6 275.5,104.7 276,103 276.5,102.7 277,102.4 277.5,102.1 278,101.8 278.5,101.6 279,100.2 279.5,98.3 280,96.4 280.5,95.7 281,95.4 281.5,95.2 282,94.9 282.5,94.6 283,93.9 283.5,92.1 284,90.2 284.5,88.9 285,88.6 285.5,88.3 286,88.1 286.5,87.8 287,87.6 287.5,86 288,84.2 288.5,82.3 289,81.9 289.5,81.7 290,81.5 290.5,81.2 291,81 291.5,80.1 292,78.3 292.5,76.5 293,75.5 293.5,75.3 294,75 294.5,74.8 295,74.6 295.5,74.4 296,72.6 296.5,70.9 297,69.3 297.5,69.1 298,68.9 298.5,68.7 299,68.5 299.5,68.3 300,67.2 300.5,65.5 301,63.8 301.5,63.1 302,62.9 302.5,62.8 303,62.6 303.5,62.4 304,62 304.5,60.3 305,58.7 305.5,57.4 306,57.3 306.5,57.1 307,57 307.5,56.9 308,56.7 308.5,55.4 309,53.8 309.5,52.3 310,51.9 310.5,51.8 311,51.7 311.5,51.6 312,51.5 312.5,50.9 313,49.3 313.5,47.8 314,46.8 314.5,46.8 315,46.7 315.5,46.6 316,46.6 316.5,46.5 317,45.1 317.5,43.6 318,42.1 318.5,42.1 319,42 319.5,42 320,42 320.5,42 321,41.2 321.5,39.7 322,38.3 322.5,37.7 323,37.7 323.5,37.7 324,37.7 324.5,37.8 325,37.6 325.5,36.2 326,34.9 326.5,33.8 327,33.8 327.5,33.8 328,33.9 328.5,33.9 329,34 329.5,33.1 330,31.8 330.5,30.5 331,30.2 331.5,30.3 332,30.4 332.5,30.5 333,30.6 333.5,30.3 334,29 334.5,27.8 335,27.1 335.5,27.2 336,27.3 336.5,27.4 337,27.6 337.5,27.7 338,26.7 338.5,25.5 339,24.4 339.5,24.5 340,24.6 340.5,24.8 341,25 341.5,25.1 342,24.7 342.5,23.6 343,22.5 343.5,22.1 344,22.3 344.5,22.6 345,22.8 345.5,23 346,23.2 346.5,22.1 347,21.1 347.5,20.2 348,20.5 348.5,20.7 349,21 349.5,21.3 350,21.5 350.5,21 351,20.1 351.5,19.1 352,19.1 352.5,19.4 353,19.7 353.5,20 354,20.3 354.5,20.3 355,19.5 355.5,18.6 356,18.1 356.5,18.4 357,18.8 357.5,19.1 358,19.5 358.5,19.8 359,19.2 359.5,18.4 360,17.7 360.5,17.9 361,18.3 361.5,18.7 362,19.1 362.5,19.5 363,19.4 363.5,18.7 364,18 364.5,17.8 365,18.2 365.5,18.7 366,19.1 366.5,19.6 367,20 367.5,19.4 368,18.8 368.5,18.2 369,18.6 369.5,19.1 370,19.6 370.5,20.1 371,20.6 371.5,20.5 372,19.9 372.5,19.4 373,19.5 373.5,20 374,20.5 374.5,21.1 375,21.6 375.5,22 376,21.5 376.5,21 377,20.7 377.5,21.3 378,21.9 378.5,22.5 379,23.1 379.5,23.6 380,23.5 380.5,23 381,22.6 381.5,23 382,23.7 382.5,24.3 383,24.9 383.5,25.5 384,25.9 384.5,25.5 385,25.1 385.5,25.2 386,25.8 386.5,26.5 387,27.2 387.5,27.9 388,28.5 388.5,28.3 389,28 389.5,27.8 390,28.4 390.5,29.1 391,29.9 391.5,30.6 392,31.3 392.5,31.5 393,31.3 393.5,31.1 394,31.4 394.5,32.2 395,32.9 395.5,33.7 396,34.4 396.5,35.1 397,35 397.5,34.8 398,34.8 398.5,35.6 399,36.4 399.5,37.2 400,38 400.5,38.8 401,39 401.5,38.9 402,38.8 402.5,39.4 403,40.2 403.5,41 404,41.9 404.5,42.7 405,43.3 405.5,43.3 406,43.3 406.5,43.5 407,44.4 407.5,45.2 408,46.1 408.5,47 409,47.9 409.5,48 410,48 410.5,48.1 411,48.9 411.5,49.8 412,50.7 412.5,51.6 413,52.5 413.5,53.1 414,53.2 414.5,53.2 415,53.7 415.5,54.7 416,55.6 416.5,56.5 417,57.5 417.5,58.4 418,58.6 418.5,58.7 419,58.9 419.5,59.8 420,60.8 420.5,61.8 421,62.8 421.5,63.7 422,64.2 422.5,64.4 423,64.6 423.5,65.3 424,66.3 424.5,67.3 425,68.3 425.5,69.3 426,70.2 426.5,70.4 427,70.6 427.5,71 428,72 428.5,73.1 429,74.1 429.5,75.1 430,76.2 430.5,76.6 431,76.9 431.5,77.1 432,78 432.5,79.1 433,80.1 433.5,81.2 434,82.2 434.5,83 435,83.3 435.5,83.6 436,84.2 436.5,85.3 437,86.4 437.5,87.4 438,88.5 438.5,89.6 439,90 439.5,90.3 440,90.6 440.5,91.7 441,92.8 441.5,93.9 442,95 442.5,96.1 443,96.8 443.5,97.1 444,97.5 444.5,98.3 445,99.4 445.5,100.5 446,101.6 446.5,102.7 447,103.8 447.5,104.1 448,104.5 448.5,105 449,106.2 449.5,107.3 450,108.4 450.5,109.5 451,110.6 451.5,111.2 452,111.6 452.5,112.1 453,113 453.5,114.1 454,115.3 454.5,116.4 455,117.5 455.5,118.4 456,118.9 456.5,119.3 457,120 457.5,121.1 458,122.2 458.5,123.4 459,124.5 459.5,125.6 460,126.2 460.5,126.6 461,127 461.5,128.1 462,129.2 462.5,130.4 463,131.5 463.5,132.7 464,133.5 464.5,133.9 465,134.4 465.5,135.2 466,136.3 466.5,137.4 467,138.6 467.5,139.7 468,140.8 468.5,141.3 469,141.7 469.5,142.2 470,143.4 470.5,144.5 471,145.6 471.5,146.8 472,147.9 472.5,148.6 473,149 473.5,149.5 474,150.4 474.5,151.5 475,152.7 475.5,153.8 476,154.9 476.5,155.9 477,156.3 477.5,156.8 478,157.4 478.5,158.5 479,159.6 479.5,160.8 480,161.9 480.5,163 481,163.6 481.5,164 482,164.4 482.5,165.4 483,166.5 483.5,167.7 484,168.8 484.5,169.9 485,170.7 485.5,171.1 486,171.5 486.5,172.2 487,173.3 487.5,174.5 488,175.6 488.5,176.7 489,177.8 489.5,178.2 490,178.5 490.5,178.9 491,180 491.5,181.1 492,182.2 492.5,183.3 493,184.4 493.5,185.1 494,185.4 494.5,185.7 495,186.5 495.5,187.6 496,188.7 496.5,189.8 497,190.8 497.5,191.8 498,192.1 498.5,192.4 499,192.9 499.5,193.9 500,195 500.5,196 501,197.1 501.5,198.1 502,198.6 502.5,198.9 503,199.2 503.5,200 504,201.1 504.5,202.1 505,203.1 505.5,204.2 506,204.9 506.5,205.2 507,205.4 507.5,205.9 508,206.9 508.5,207.9 509,209 509.5,210 510,211 510.5,211.2 511,211.4 511.5,211.6 512,212.6 512.5,213.5 513,214.5 513.5,215.5 514,216.5 514.5,217 515,217.2 515.5,217.3 516,217.9 516.5,218.8 517,219.8 517.5,220.7 518,221.7 518.5,222.6 519,222.7 519.5,222.8 520,222.9 520.5,223.9 521,224.8 521.5,225.7 522,226.6 522.5,227.5 523,227.9 523.5,227.9 524,227.9 524.5,228.6 525,229.5 525.5,230.3 526,231.2 526.5,232.1 527,232.7 527.5,232.7 528,232.7 528.5,233 529,233.8 529.5,234.6 530,235.5 530.5,236.3 531,237.2 531.5,237.2 532,237.2 532.5,237.1 533,237.8 533.5,238.6 534,239.4 534.5,240.2 535,241 535.5,241.4 536,241.3 536.5,241.1 537,241.4 537.5,242.2 538,243 538.5,243.7 539,244.5 539.5,245.2 540,245 540.5,244.8 541,244.7 541.5,245.4 542,246.1 542.5,246.9 543,247.6 543.5,248.3 544,248.4 544.5,248.2 545,247.9 545.5,248.2 546,248.9 546.5,249.6 547,250.3 547.5,251 548,251.5 548.5,251.1 549,250.8 549.5,250.7 550,251.3 550.5,251.9 551,252.6 551.5,253.2 552,253.8 552.5,253.7 553,253.3 553.5,252.8 554,253.3 554.5,253.9 555,254.5 555.5,255.1 556,255.6 556.5,255.8 557,255.4 557.5,254.9 558,254.8 558.5,255.4 559,255.9 559.5,256.5 560,257 560.5,257.6 561,257.1 561.5,256.5 562,255.9 562.5,256.4 563,257 563.5,257.5 564,258 564.5,258.5 565,258.4 565.5,257.7 566,257.1 566.5,257.1 567,257.6 567.5,258 568,258.5 568.5,258.9 569,259.2 569.5,258.5 570,257.8 570.5,257.3 571,257.7 571.5,258.1 572,258.5 572.5,259 573,259.4 573.5,258.9 574,258.2 574.5,257.4 575,257.5 575.5,257.8 576,258.2 576.5,258.6 577,258.9 577.5,258.9 578,258.1 578.5,257.2 579,256.8 579.5,257.1 580,257.4 580.5,257.7 581,258 581.5,258.3 582,257.6 582.5,256.6 583,255.7 583.5,255.9 584,256.2 584.5,256.4 585,256.7 585.5,257 586,256.7 586.5,255.7 587,254.7 587.5,254.3 588,254.5 588.5,254.7 589,255 589.5,255.2 590,255.4 590.5,254.3 591,253.2 591.5,252.3 592,252.4 592.5,252.6 593,252.8 593.5,253 594,253.2 594.5,252.5 595,251.4 595.5,250.2 596,249.9 596.5,250.1 597,250.2 597.5,250.4 598,250.5 598.5,250.3 599,249.1 599.5,247.9 600,247 600.5,247.2 601,247.3 601.5,247.3 602,247.4 602.5,247.5 603,246.5 603.5,245.2 604,243.9 604.5,243.8 605,243.9 605.5,243.9 606,244 606.5,244 607,243.5 607.5,242.2 608,240.8 608.5,240.1 609,240.1 609.5,240.1 610,240.1 610.5,240.2 611,240.2 611.5,238.8 612,237.4 612.5,236 613,236 613.5,236 614,235.9 614.5,235.9 615,235.9 615.5,235.1 616,233.6 616.5,232.1 617,231.5 617.5,231.4 618,231.4 618.5,231.3 619,231.3 619.5,231 620,229.5 620.5,227.9 621,226.7 621.5,226.6 622,226.5 622.5,226.4 623,226.3 623.5,226.2 624,225 624.5,223.4 625,221.8 625.5,221.4 626,221.3 626.5,221.1 627,221 627.5,220.9 628,220.3 628.5,218.6 629,217 629.5,215.9 630,215.7 630.5,215.6 631,215.4 631.5,215.3 632,215.1 632.5,213.6 633,211.9 633.5,210.2 634,209.9 634.5,209.8 635,209.6 635.5,209.4 636,209.2 636.5,208.3 637,206.5 637.5,204.8 638,203.9 638.5,203.7 639,203.5 639.5,203.2 640,203 640.5,202.7 641,200.9 641.5,199.2 642,197.6 642.5,197.3 643,197.1 643.5,196.9 644,196.6 644.5,196.4 645,195.1 645.5,193.3 646,191.5 646.5,190.8 647,190.5 647.5,190.3 648,190 648.5,189.8 649,189.1 649.5,187.3 650,185.4 650.5,184.1 651,183.8 651.5,183.5 652,183.2 652.5,182.9 653,182.7 653.5,181.1 654,179.2 654.5,177.3 655,176.9 655.5,176.6 656,176.3 656.5,176 657,175.7 657.5,174.7 658,172.8 658.5,170.9 659,169.8 659.5,169.5 660,169.2 660.5,168.9 661,168.6 661.5,168.2 662,166.3 662.5,164.4 663,162.6 663.5,162.3 664,162 664.5,161.6 665,161.3 665.5,161 666,159.7 666.5,157.8 667,155.9 667.5,155 668,154.7 668.5,154.3 669,154 669.5,153.7 670,153.1 670.5,151.1 671,149.2 671.5,147.6 672,147.3 672.5,147 673,146.6 673.5,146.3 674,146 674.5,144.4 675,142.5 675.5,140.5 676,139.9 676.5,139.6 677,139.2 677.5,138.9 678,138.6 678.5,137.7 679,135.7 679.5,133.8 680,132.5 680.5,132.2 681,131.8 681.5,131.5 682,131.2 682.5,130.8 683,129 683.5,127.1 684,125.1 684.5,124.8 685,124.4 685.5,124.1 686,123.8 686.5,123.5 687,122.3 687.5,120.4 688,118.4 688.5,117.4 689,117.1 689.5,116.8 690,116.5 690.5,116.1 691,115.7 691.5,113.7 692,111.8 692.5,110.2 693,109.8 693.5,109.5 694,109.2 694.5,108.9 695,108.6 695.5,107.2 696,105.3 696.5,103.4 697,102.7 697.5,102.4 698,102.1 698.5,101.8 699,101.5 699.5,100.7 700,98.9 700.5,97 701,95.6 701.5,95.3 702,95.1 702.5,94.8 703,94.5 703.5,94.2 704,92.6 704.5,90.7 705,88.9 705.5,88.5 706,88.2 706.5,87.9 707,87.7 707.5,87.4 708,86.4 708.5,84.6 709,82.8 709.5,81.8 710,81.5 710.5,81.3 711,81 711.5,80.8 712,80.5 712.5,78.7 713,76.9 713.5,75.3 714,75 714.5,74.8 715,74.6 715.5,74.4 716,74.1 716.5,73 717,71.2 717.5,69.5 718,68.8 718.5,68.6 719,68.4 719.5,68.2 720,68 720.5,67.5 721,65.8 721.5,64.1 722,62.8 722.5,62.6 723,62.4 723.5,62.2 724,62.1 724.5,61.9 725,60.6 725.5,58.9 726,57.3 726.5,56.9 727,56.7 727.5,56.6 728,56.4 728.5,56.3 729,55.6 729.5,54 730,52.4 730.5,51.5 731,51.3 731.5,51.2 732,51.1 732.5,51 733,50.9 733.5,49.4 734,47.9 734.5,46.3 735,46.3 735.5,46.2 736,46.1 736.5,46 737,46 737.5,45.1 738,43.6 738.5,42.1 739,41.5 739.5,41.5 740,41.4 740.5,41.4 741,41.4 741.5,41.1 742,39.7 742.5,38.3 743,37.1 743.5,37.1 744,37.1 744.5,37.1 745,37.1 745.5,37.1 746,36.1 746.5,34.7 747,33.4 747.5,33.1 748,33.1 748.5,33.2 749,33.2 749.5,33.3 750,32.9 750.5,31.6 751,30.3 751.5,29.5 752,29.6 752.5,29.6 753,29.7 753.5,29.8 754,29.9 754.5,28.8 755,27.5 755.5,26.3 756,26.4 756.5,26.5 757,26.6 757.5,26.7 758,26.9 758.5,26.4 759,25.2 759.5,24 760,23.6 760.5,23.7 761,23.9 761.5,24.1 762,24.2 762.5,24.3 763,23.2 763.5,22.1 764,21.2 764.5,21.4 765,21.6 765.5,21.8 766,22 766.5,22.3 767,21.7 767.5,20.6 768,19.6 768.5,19.5 769,19.7 769.5,20 770,20.3 770.5,20.5 771,20.5 771.5,19.5 772,18.6 772.5,18 773,18.3 773.5,18.6 774,18.9 774.5,19.2 775,19.5 775.5,18.9 776,18 776.5,17.1 777,17.3 777.5,17.7 778,18 778.5,18.4 779,18.7 779.5,18.6 780,17.8 780.5,17 781,16.7 781.5,17.1 782,17.5 782.5,17.9 783,18.3 783.5,18.7 784,18 784.5,17.3 785,16.6 785.5,17.1 786,17.5 786.5,17.9 787,18.4 787.5,18.8 788,18.6 788.5,18 789,17.3 789.5,17.4 790,17.9 790.5,18.4 791,18.9 791.5,19.4 792,19.7 792.5,19.1 793,18.5 793.5,18.2 794,18.7 794.5,19.3 795,19.8 795.5,20.3 796,20.9 796.5,20.6 797,20.1 797.5,19.6 798,20 798.5,20.6 799,21.2 799.5,21.7 800,22.3 800.5,22.6 801,22.1 801.5,21.7 802,21.7 802.5,22.3 803,23 803.5,23.6 804,24.2 804.5,24.9 805,24.6 805.5,24.2 806,23.9 806.5,24.5 807,25.2 807.5,25.8 808,26.5 808.5,27.2 809,27.4 809.5,27.1 810,26.8 810.5,27.1 811,27.8 811.5,28.5 812,29.2 812.5,29.9 813,30.6 813.5,30.3 814,30.1 814.5,30.1 815,30.8 815.5,31.6 816,32.3 816.5,33.1 817,33.8 817.5,34 818,33.8 818.5,33.7 819,34.2 819.5,35 820,35.8 820.5,36.6 821,37.4 821.5,38 822,37.9 822.5,37.8 823,38 823.5,38.9 824,39.7 824.5,40.5 825,41.4 825.5,42.2 826,42.3 826.5,42.3 827,42.3 827.5,43 828,43.9 828.5,44.8 829,45.7 829.5,46.6 830,47.1 830.5,47.1 831,47.1 831.5,47.6 832,48.5 832.5,49.4 833,50.3 833.5,51.2 834,52.1 834.5,52.2 835,52.3 835.5,52.5 836,53.4 836.5,54.3 837,55.3 837.5,56.2 838,57.2 838.5,57.6 839,57.8 839.5,57.9 840,58.6 840.5,59.6 841,60.6 841.5,61.5 842,62.5 842.5,63.3 843,63.5 843.5,63.7 844,64.1 844.5,65.1 845,66.1 845.5,67.1 846,68.1 846.5,69.1 847,69.5 847.5,69.8 848,70 848.5,70.9 849,71.9 849.5,73 850,74 850.5,75 851,75.8 851.5,76.1 852,76.3 852.5,77 853,78 853.5,79.1 854,80.1 854.5,81.2 855,82.2 855.5,82.6 856,82.9 856.5,83.2 857,84.3 857.5,85.4 858,86.5 858.5,87.5 859,88.6 859.5,89.3 860,89.6 860.5,90 861,90.8 861.5,91.9 862,93 862.5,94.1 863,95.2 863.5,96.2 864,96.6 864.5,96.9 865,97.4 865.5,98.6 866,99.7 866.5,100.8 867,101.9 867.5,103 868,103.6 868.5,104 869,104.4 869.5,105.4 870,106.5 870.5,107.6 871,108.8 871.5,109.9 872,110.8 872.5,111.2 873,111.6 873.5,112.3 874,113.4 874.5,114.6 875,115.7 875.5,116.9 876,118 876.5,118.5 877,119 877.5,119.4 878,120.5 878.5,121.6 879,122.8 879.5,123.9 880,125.1 880.5,125.9 881,126.3 881.5,126.8 882,127.6 882.5,128.8 883,129.9 883.5,131.1 884,132.2 884.5,133.3 885,133.8 885.5,134.2 886,134.7 886.5,135.9 887,137.1 887.5,138.2 888,139.4 888.5,140.5 889,141.2 889.5,141.7 890,142.1 890.5,143.1 891,144.2 891.5,145.4 892,146.5 892.5,147.7 893,148.7 893.5,149.1 894,149.5 894.5,150.2 895,151.3 895.5,152.5 896,153.6 896.5,154.8 897,155.9 897.5,156.5 898,156.9 898.5,157.4 899,158.4 899.5,159.6 900,160.7 900.5,161.9 901,163 901.5,163.9 902,164.3 902.5,164.7 903,165.4 903.5,166.6 904,167.7 904.5,168.8 905,170 905.5,171.1 906,171.5 906.5,171.9 907,172.4 907.5,173.5 908,174.6 908.5,175.7 909,176.8 909.5,178 910,178.7 910.5,179 911,179.4 911.5,180.3 912,181.4 912.5,182.5 913,183.6 913.5,184.7 914,185.7 914.5,186 915,186.4 915.5,186.9 916,188 916.5,189.1 917,190.1 917.5,191.2 918,192.3 918.5,192.8 919,193.1 919.5,193.5 920,194.4 920.5,195.4 921,196.5 921.5,197.6 922,198.6 922.5,199.4 923,199.7 923.5,200 924,200.6 924.5,201.6 925,202.7 925.5,203.7 926,204.8 926.5,205.8 927,206.1 927.5,206.4 928,206.6 928.5,207.6 929,208.6 929.5,209.6 930,210.6 930.5,211.7 931,212.3 931.5,212.5 932,212.7 932.5,213.3 933,214.3 933.5,215.3 934,216.3 934.5,217.2 935,218.2 935.5,218.3 936,218.5 936.5,218.7 937,219.7 937.5,220.7 938,221.6 938.5,222.6 939,223.5 939.5,223.9 940,224 940.5,224.1 941,224.8 941.5,225.7 942,226.6 942.5,227.6 943,228.5 943.5,229.2 944,229.2 944.5,229.3 945,229.6 945.5,230.5 946,231.4" fill="none" stroke="#139fff" stroke-width="1.25" stroke-linejoin="round" />
<polyline clip-path="url(#a1)" points="30.5,52.6 31,51.1 31.5,49.5 32,48.2 32.5,48.1 33,48 33.5,47.9 34,47.9 34.5,47.8 35,46.7 35.5,45.2 36,43.7 36.5,43.3 37,43.3 37.5,43.2 38,43.2 38.5,43.1 39,42.7 39.5,41.3 40,39.8 40.5,38.9 41,38.8 41.5,38.8 42,38.8 42.5,38.8 43,38.8 43.5,37.6 44,36.3 44.5,34.9 45,34.8 45.5,34.8 46,34.9 46.5,34.9 47,34.9 47.5,34.4 48,33 48.5,31.7 49,31.1 49.5,31.2 50,31.3 50.5,31.3 51,31.4 51.5,31.5 52,30.2 52.5,28.9 53,27.8 53.5,27.9 54,28 54.5,28.2 55,28.3 55.5,28.4 56,27.7 56.5,26.5 57,25.4 57.5,25.1 58,25.2 58.5,25.4 59,25.6 59.5,25.7 60,25.6 60.5,24.5 61,23.4 61.5,22.6 62,22.8 62.5,23 63,23.2 63.5,23.4 64,23.7 64.5,22.9 65,21.8 65.5,20.8 66,20.8 66.5,21.1 67,21.3 67.5,21.6 68,21.9 68.5,21.6 69,20.7 69.5,19.7 70,19.3 70.5,19.6 71,19.9 71.5,20.2 72,20.5 72.5,20.8 73,19.9 73.5,19 74,18.2 74.5,18.5 75,18.8 75.5,19.2 76,19.5 76.5,19.9 77,19.6 77.5,18.7 78,17.9 78.5,17.8 79,18.2 79.5,18.6 80,19 80.5,19.4 81,19.6 81.5,18.9 82,18.1 82.5,17.6 83,18.1 83.5,18.5 84,18.9 84.5,19.4 85,19.8 85.5,19.4 86,18.8 86.5,18.1 87,18.3 87.5,18.8 88,19.3 88.5,19.8 89,20.2 89.5,20.4 90,19.8 90.5,19.2 91,19 91.5,19.5 92,20.1 92.5,20.6 93,21.1 93.5,21.6 94,21.2 94.5,20.7 95,20.2 95.5,20.7 96,21.3 96.5,21.8 97,22.4 97.5,23 98,23.1 98.5,22.6 99,22.2 99.5,22.3 100,22.9 100.5,23.5 101,24.1 101.5,24.8 102,25.3 102.5,24.9 103,24.6 103.5,24.3 104,25 104.5,25.6 105,26.3 105.5,27 106,27.6 106.5,27.6 107,27.3 107.5,27 108,27.4 108.5,28.1 109,28.8 109.5,29.5 110,30.3 110.5,30.7 111,30.5 111.5,30.3 112,30.3 112.5,31 113,31.8 113.5,32.5 114,33.3 114.5,34 115,34 115.5,33.8 116,33.7 116.5,34.3 117,35.1 117.5,35.9 118,36.7 118.5,37.5 119,37.9 119.5,37.8 120,37.7 120.5,38 121,38.8 121.5,39.7 122,40.5 122.5,41.3 123,42.1 123.5,42.1 124,42.1 124.5,42.1 125,42.9 125.5,43.8 126,44.6 126.5,45.5 127,46.4 127.5,46.7 128,46.7 128.5,46.8 129,47.3 129.5,48.2 130,49.1 130.5,50 131,50.9 131.5,51.7 132,51.7 132.5,51.8 133,52.1 133.5,53 134,53.9 134.5,54.9 135,55.8 135.5,56.7 136,57 136.5,57.2 137,57.3 137.5,58.1 138,59 138.5,60 139,61 139.5,61.9 140,62.6 140.5,62.8 141,63 141.5,63.5 142,64.4 142.5,65.4 143,66.4 143.5,67.4 144,68.4 144.5,68.7 145,68.9 145.5,69.1 146,70.1 146.5,71.1 147,72.2 147.5,73.2 148,74.2 148.5,74.8 149,75.1 149.5,75.3 150,76 150.5,77.1 151,78.1 151.5,79.2 152,80.2 152.5,81.2 153,81.5 153.5,81.8 154,82.2 154.5,83.2 155,84.3 155.5,85.4 156,86.4 156.5,87.5 157,88.1 157.5,88.4 158,88.7 158.5,89.6 159,90.7 159.5,91.8 160,92.9 160.5,93.9 161,94.8 161.5,95.2 162,95.5 162.5,96.1 163,97.2 163.5,98.3 164,99.4 164.5,100.5 165,101.6 165.5,102.1 166,102.5 166.5,102.9 167,103.9 167.5,105 168,106.2 168.5,107.3 169,108.4 169.5,109.2 170,109.6 170.5,110 171,110.8 171.5,111.9 172,113 172.5,114.1 173,115.3 173.5,116.4 174,116.8 174.5,117.2 175,117.7 175.5,118.8 176,119.9 176.5,121.1 177,122.2 177.5,123.4 178,124.1 178.5,124.5 179,124.9 179.5,125.8 180,126.9 180.5,128.1 181,129.2 181.5,130.4 182,131.4 182.5,131.8 183,132.2 183.5,132.9 184,134 184.5,135.1 185,136.3 185.5,137.4 186,138.6 186.5,139.2 187,139.6 187.5,140 188,141.1 188.5,142.2 189,143.3 189.5,144.5 190,145.6 190.5,146.5 191,146.9 191.5,147.4 192,148.1 192.5,149.2 193,150.4 193.5,151.5 194,152.7 194.5,153.8 195,154.3 195.5,154.7 196,155.1 196.5,156.2 197,157.4 197.5,158.5 198,159.6 198.5,160.8 199,161.5 199.5,161.9 200,162.3 200.5,163.2 201,164.3 201.5,165.4 202,166.6 202.5,167.7 203,168.7 203.5,169.1 204,169.5 204.5,170 205,171.1 205.5,172.2 206,173.4 206.5,174.5 207,175.6 207.5,176.2 208,176.5 208.5,176.9 209,177.8 209.5,178.9 210,180 210.5,181.1 211,182.2 211.5,183.1 212,183.5 212.5,183.8 213,184.4 213.5,185.5 214,186.6 214.5,187.7 215,188.7 215.5,189.8 216,190.2 216.5,190.5 217,190.8 217.5,191.9 218,192.9 218.5,194 219,195.1 219.5,196.1 220,196.8 220.5,197.1 221,197.4 221.5,198 222,199.1 222.5,200.1 223,201.2 223.5,202.2 224,203.2 224.5,203.4 225,203.7 225.5,204 226,205 226.5,206 227,207.1 227.5,208.1 228,209.1 228.5,209.6 229,209.8 229.5,210 230,210.7 230.5,211.7 231,212.7 231.5,213.7 232,214.7 232.5,215.4 233,215.6 233.5,215.8 234,216.1 234.5,217.1 235,218.1 235.5,219 236,220 236.5,220.9 237,221.2 237.5,221.3 238,221.4 238.5,222.2 239,223.1 239.5,224.1 240,225 240.5,225.9 241,226.5 241.5,226.5 242,226.6 242.5,227 243,227.9 243.5,228.8 244,229.7 244.5,230.6 245,231.5 245.5,231.5 246,231.5 246.5,231.5 247,232.4 247.5,233.2 248,234.1 248.5,234.9 249,235.8 249.5,236.1 250,236 250.5,236 251,236.5 251.5,237.3 252,238.1 252.5,238.9 253,239.7 253.5,240.4 254,240.3 254.5,240.1 255,240.2 255.5,241 256,241.8 256.5,242.5 257,243.3 257.5,244.1 258,244.1 258.5,244 259,243.8 259.5,244.3 260,245.1 260.5,245.8 261,246.5 261.5,247.3 262,247.7 262.5,247.4 263,247.1 263.5,247.3 264,248 264.5,248.7 265,249.3 265.5,250 266,250.7 266.5,250.5 267,250.2 267.5,249.8 268,250.5 268.5,251.1 269,251.8 269.5,252.4 270,253.1 270.5,253.2 271,252.8 271.5,252.4 272,252.6 272.5,253.2 273,253.8 273.5,254.4 274,255 274.5,255.5 275,255 275.5,254.6 276,254.2 276.5,254.8 277,255.4 277.5,255.9 278,256.5 278.5,257 279,256.9 279.5,256.3 280,255.8 280.5,256 281,256.5 281.5,257 282,257.6 282.5,258.1 283,258.3 283.5,257.7 284,257.1 284.5,256.8 285,257.3 285.5,257.7 286,258.2 286.5,258.7 287,259.1 287.5,258.6 288,257.9 288.5,257.2 289,257.6 289.5,258 290,258.4 290.5,258.8 291,259.2 291.5,259.2 292,258.4 292.5,257.6 293,257.4 293.5,257.8 294,258.2 294.5,258.6 295,258.9 295.5,259.3 296,258.4 296.5,257.6 297,256.9 297.5,257.2 298,257.5 298.5,257.9 299,258.2 299.5,258.5 300,258.1 300.5,257.2 301,256.3 301.5,256.1 302,256.4 302.5,256.7 303,257 303.5,257.3 304,257.3 304.5,256.3 305,255.4 305.5,254.7 306,254.9 306.5,255.2 307,255.4 307.5,255.6 308,255.9 308.5,255.1 309,254 309.5,253 310,253 310.5,253.2 311,253.4 311.5,253.5 312,253.7 312.5,253.4 313,252.3 313.5,251.2 314,250.6 314.5,250.8 315,250.9 315.5,251.1 316,251.2 316.5,251.3 317,250.2 317.5,249 318,247.8 318.5,247.9 319,248 319.5,248.2 320,248.3 320.5,248.4 321,247.7 321.5,246.5 322,245.2 322.5,244.7 323,244.8 323.5,244.8 324,244.9 324.5,245 325,244.9 325.5,243.5 326,242.2 326.5,241.1 327,241.1 327.5,241.2 328,241.2 328.5,241.2 329,241.2 329.5,240.2 330,238.9 330.5,237.4 331,237.1 331.5,237.1 332,237.1 332.5,237.1 333,237.1 333.5,236.6 334,235.2 334.5,233.7 335,232.7 335.5,232.7 336,232.6 336.5,232.6 337,232.5 337.5,232.5 338,231.1 338.5,229.6 339,228.1 339.5,227.9 340,227.8 340.5,227.7 341,227.7 341.5,227.6 342,226.8 342.5,225.2 343,223.6 343.5,222.8 344,222.7 344.5,222.6 345,222.5 345.5,222.3 346,222.1 346.5,220.5 347,218.9 347.5,217.4 348,217.3 348.5,217.1 349,217 349.5,216.8 350,216.7 350.5,215.5 351,213.9 351.5,212.2 352,211.6 352.5,211.4 353,211.2 353.5,211 354,210.8 354.5,210.3 355,208.6 355.5,206.9 356,205.6 356.5,205.4 357,205.2 357.5,204.9 358,204.7 358.5,204.5 359,203.1 359.5,201.3 360,199.5 360.5,199.1 361,198.9 361.5,198.6 362,198.4 362.5,198.2 363,197.3 363.5,195.5 364,193.7 364.5,192.6 365,192.4 365.5,192.1 366,191.9 366.5,191.6 367,191.3 367.5,189.5 368,187.7 368.5,185.9 369,185.7 369.5,185.4 370,185.1 370.5,184.8 371,184.6 371.5,183.4 372,181.5 372.5,179.7 373,178.8 373.5,178.5 374,178.2 374.5,177.9 375,177.6 375.5,177.1 376,175.2 376.5,173.3 377,171.8 377.5,171.5 378,171.1 378.5,170.8 379,170.5 379.5,170.2 380,168.7 380.5,166.8 381,164.9 381.5,164.3 382,164 382.5,163.7 383,163.3 383.5,163 384,162.2 384.5,160.3 385,158.3 385.5,157 386,156.7 386.5,156.4 387,156.1 387.5,155.7 388,155.4 388.5,153.6 389,151.7 389.5,149.8 390,149.4 390.5,149 391,148.7 391.5,148.4 392,148.1 392.5,146.9 393,145 393.5,143 394,142 394.5,141.7 395,141.3 395.5,141 396,140.7 396.5,140.2 397,138.3 397.5,136.3 398,134.6 398.5,134.3 399,133.9 399.5,133.6 400,133.3 400.5,132.9 401,131.5 401.5,129.6 402,127.7 402.5,126.9 403,126.6 403.5,126.2 404,125.9 404.5,125.6 405,124.8 405.5,122.9 406,121 406.5,119.5 407,119.2 407.5,118.9 408,118.6 408.5,118.3 409,117.9 409.5,116.3 410,114.3 410.5,112.4 411,112 411.5,111.6 412,111.3 412.5,111 413,110.7 413.5,109.7 414,107.8 414.5,105.9 415,104.8 415.5,104.5 416,104.2 416.5,103.9 417,103.6 417.5,103.3 418,101.4 418.5,99.5 419,97.7 419.5,97.4 420,97.1 420.5,96.9 421,96.6 421.5,96.3 422,95.1 422.5,93.2 423,91.4 423.5,90.5 424,90.3 424.5,90 425,89.7 425.5,89.5 426,88.9 426.5,87.1 427,85.3 427.5,83.8 428,83.6 428.5,83.3 429,83.1 429.5,82.8 430,82.6 430.5,81.1 431,79.3 431.5,77.6 432,77.1 432.5,76.8 433,76.6 433.5,76.4 434,76.1 434.5,75.4 435,73.6 435.5,71.9 436,70.8 436.5,70.6 437,70.4 437.5,70.2 438,70 438.5,69.8 439,68.1 439.5,66.4 440,64.7 440.5,64.5 441,64.4 441.5,64.2 442,64 442.5,63.9 443,62.9 443.5,61.2 444,59.6 444.5,58.8 445,58.6 445.5,58.5 446,58.4 446.5,58.2 447,57.9 447.5,56.3 448,54.7 448.5,53.3 449,53.2 449.5,53.1 450,53 450.5,52.9 451,52.8 451.5,51.6 452,50.1 452.5,48.5 453,48.1 453.5,48 454,47.9 454.5,47.8 455,47.8 455.5,47.3 456,45.8 456.5,44.3 457,43.3 457.5,43.2 458,43.2 458.5,43.1 459,43.1 459.5,43.1 460,41.8 460.5,40.4 461,38.9 461.5,38.8 462,38.8 462.5,38.8 463,38.8 463.5,38.8 464,38.2 464.5,36.8 465,35.4 465.5,34.7 466,34.8 466.5,34.8 467,34.8 467.5,34.9 468,34.9 468.5,33.5 469,32.2 469.5,31 470,31.1 470.5,31.2 471,31.3 471.5,31.3 472,31.4 472.5,30.7 473,29.4 473.5,28.2 474,27.9 474.5,28 475,28.1 475.5,28.2 476,28.3 476.5,28.2 477,27 477.5,25.8 478,25 478.5,25.1 479,25.3 479.5,25.5 480,25.6 480.5,25.8 481,24.9 481.5,23.8 482,22.7 482.5,22.7 483,22.9 483.5,23.1 484,23.3 484.5,23.6 485,23.3 485.5,22.2 486,21.2 486.5,20.7 487,21 487.5,21.2 488,21.5 488.5,21.7 489,22 489.5,21 490,20.1 490.5,19.2 491,19.4 491.5,19.7 492,20 492.5,20.3 493,20.6 493.5,20.3 494,19.4 494.5,18.5 495,18.4 495.5,18.7 496,19 496.5,19.4 497,19.7 497.5,19.9 498,19.1 498.5,18.3 499,17.7 499.5,18.1 500,18.5 500.5,18.8 501,19.2 501.5,19.6 502,19.2 502.5,18.4 503,17.7 503.5,17.9 504,18.3 504.5,18.7 505,19.2 505.5,19.6 506,19.7 506.5,19 507,18.4 507.5,18.1 508,18.6 508.5,19.1 509,19.6 509.5,20.1 510,20.5 510.5,20 511,19.4 511.5,18.9 512,19.3 512.5,19.9 513,20.4 513.5,20.9 514,21.5 514.5,21.5 515,20.9 515.5,20.4 516,20.5 516.5,21.1 517,21.6 517.5,22.2 518,22.8 518.5,23.3 519,22.8 519.5,22.4 520,22.1 520.5,22.7 521,23.3 521.5,23.9 522,24.5 522.5,25.2 523,25.1 523.5,24.7 524,24.4 524.5,24.7 525,25.4 525.5,26.1 526,26.7 526.5,27.4 527,27.8 527.5,27.5 528,27.2 528.5,27.2 529,27.9 529.5,28.6 530,29.3 530.5,30 531,30.7 531.5,30.6 532,30.4 532.5,30.2 533,30.8 533.5,31.5 534,32.3 534.5,33 535,33.8 535.5,34.1 536,34 536.5,33.8 537,34.1 537.5,34.9 538,35.6 538.5,36.4 539,37.2 539.5,38 540,37.9 540.5,37.8 541,37.7 541.5,38.6 542,39.4 542.5,40.2 543,41 543.5,41.9 544,42.2 544.5,42.1 545,42.1 545.5,42.6 546,43.5 546.5,44.3 547,45.2 547.5,46.1 548,46.8 548.5,46.8 549,46.8 549.5,47 550,47.9 550.5,48.8 551,49.7 551.5,50.6 552,51.5 552.5,51.8 553,51.8 553.5,51.9 554,52.7 554.5,53.6 555,54.5 555.5,55.5 556,56.4 556.5,57.1 557,57.2 557.5,57.3 558,57.8 558.5,58.7 559,59.7 559.5,60.7 560,61.6 560.5,62.6 561,62.8 561.5,63 562,63.1 562.5,64.1 563,65.1 563.5,66.1 564,67.1 564.5,68.1 565,68.7 565.5,68.9 566,69.1 566.5,69.8 567,70.8 567.5,71.8 568,72.8 568.5,73.9 569,74.8 569.5,75.1 570,75.3 570.5,75.7 571,76.7 571.5,77.8 572,78.8 572.5,79.9 573,80.9 573.5,81.4 574,81.7 574.5,82 575,82.9 575.5,84 576,85 576.5,86.1 577,87.2 577.5,88 578,88.3 578.5,88.7 579,89.2 579.5,90.3 580,91.4 580.5,92.5 581,93.6 581.5,94.7 582,95.1 582.5,95.5 583,95.8 583.5,96.9 584,98 584.5,99.1 585,100.2 585.5,101.3 586,102.1 586.5,102.4 587,102.8 587.5,103.6 588,104.7 588.5,105.8 589,106.9 589.5,108 590,109.1 590.5,109.5 591,109.9 591.5,110.4 592,111.5 592.5,112.6 593,113.8 593.5,114.9 594,116 594.5,116.7 595,117.1 595.5,117.5 596,118.4 596.5,119.6 597,120.7 597.5,121.8 598,123 598.5,124 599,124.4 599.5,124.8 600,125.4 600.5,126.6 601,127.7 601.5,128.9 602,130 602.5,131.1 603,131.7 603.5,132.2 604,132.6 604.5,133.6 605,134.8 605.5,135.9 606,137.1 606.5,138.2 607,139.1 607.5,139.5 608,139.9 608.5,140.7 609,141.8 609.5,143 610,144.1 610.5,145.3 611,146.4 611.5,146.9 612,147.3 612.5,147.7 613,148.9 613.5,150 614,151.2 614.5,152.3 615,153.4 615.5,154.2 616,154.6 616.5,155 617,155.9 617.5,157 618,158.1 618.5,159.3 619,160.4 619.5,161.4 620,161.9 620.5,162.3 621,162.8 621.5,163.9 622,165.1 622.5,166.2 623,167.3 623.5,168.4 624,169 624.5,169.4 625,169.8 625.5,170.8 626,171.9 626.5,173 627,174.1 627.5,175.2 628,176.1 628.5,176.5 629,176.9 629.5,177.5 630,178.6 630.5,179.7 631,180.8 631.5,181.9 632,183 632.5,183.4 633,183.8 633.5,184.1 634,185.2 634.5,186.2 635,187.3 635.5,188.4 636,189.5 636.5,190.2 637,190.5 637.5,190.8 638,191.6 638.5,192.6 639,193.7 639.5,194.7 640,195.8 640.5,196.8 641,197.1 641.5,197.4 642,197.7 642.5,198.8 643,199.8 643.5,200.9 644,201.9 644.5,202.9 645,203.5 645.5,203.7 646,204 646.5,204.7 647,205.8 647.5,206.8 648,207.8 648.5,208.8 649,209.6 649.5,209.8 650,210 650.5,210.5 651,211.5 651.5,212.4 652,213.4 652.5,214.4 653,215.4 653.5,215.7 654,215.9 654.5,216 655,216.9 655.5,217.8 656,218.8 656.5,219.7 657,220.7 657.5,221.3 658,221.4 658.5,221.5 659,222 659.5,222.9 660,223.9 660.5,224.8 661,225.7 661.5,226.6 662,226.7 662.5,226.7 663,226.8 663.5,227.7 664,228.6 664.5,229.5 665,230.4 665.5,231.3 666,231.7 666.5,231.7 667,231.7 667.5,232.2 668,233.1 668.5,233.9 669,234.8 669.5,235.6 670,236.3 670.5,236.3 671,236.2 671.5,236.4 672,237.2 672.5,238 673,238.8 673.5,239.6 674,240.4 674.5,240.6 675,240.4 675.5,240.3 676,240.9 676.5,241.7 677,242.5 677.5,243.3 678,244 678.5,244.5 679,244.3 679.5,244.1 680,244.3 680.5,245 681,245.8 681.5,246.5 682,247.2 682.5,248 683,247.8 683.5,247.5 684,247.3 684.5,248 685,248.7 685.5,249.4 686,250.1 686.5,250.8 687,250.9 687.5,250.6 688,250.3 688.5,250.5 689,251.2 689.5,251.8 690,252.5 690.5,253.1 691,253.7 691.5,253.3 692,252.9 692.5,252.6 693,253.3 693.5,253.9 694,254.5 694.5,255.1 695,255.7 695.5,255.6 696,255.1 696.5,254.6 697,254.9 697.5,255.5 698,256.1 698.5,256.6 699,257.2 699.5,257.5 700,256.9 700.5,256.4 701,256.2 701.5,256.7 702,257.2 702.5,257.8 703,258.3 703.5,258.8 704,258.3 704.5,257.7 705,257.1 705.5,257.5 706,258 706.5,258.4 707,258.9 707.5,259.4 708,259.3 708.5,258.7 709,258 709.5,257.8 710,258.3 710.5,258.7 711,259.1 711.5,259.5 712,259.9 712.5,259.2 713,258.4 713.5,257.7 714,258.1 714.5,258.5 715,258.9 715.5,259.3 716,259.6 716.5,259.3 717,258.4 717.5,257.6 718,257.6 718.5,257.9 719,258.2 719.5,258.6 720,258.9 720.5,259 721,258.1 721.5,257.1 722,256.5 722.5,256.8 723,257.1 723.5,257.4 724,257.7 724.5,258 725,257.3 725.5,256.3 726,255.3 726.5,255.3 727,255.6 727.5,255.8 728,256.1 728.5,256.3 729,256.1 729.5,255 730,253.9 730.5,253.4 731,253.6 731.5,253.8 732,254 732.5,254.2 733,254.4 733.5,253.3 734,252.2 734.5,251.1 735,251.3 735.5,251.4 736,251.6 736.5,251.7 737,251.9 737.5,251.3 738,250.1 738.5,248.9 739,248.5 739.5,248.6 740,248.7 740.5,248.8 741,248.9 741.5,248.8 742,247.5 742.5,246.3 743,245.3 743.5,245.3 744,245.4 744.5,245.5 745,245.5 745.5,245.6 746,244.6 746.5,243.3 747,242 747.5,241.7 748,241.7 748.5,241.8 749,241.8 749.5,241.8 750,241.4 750.5,240 751,238.6 751.5,237.7 752,237.7 752.5,237.7 753,237.7 753.5,237.6 754,237.6 754.5,236.3 755,234.9 755.5,233.4 756,233.3 756.5,233.2 757,233.2 757.5,233.1 758,233.1 758.5,232.3 759,230.8 759.5,229.3 760,228.5 760.5,228.4 761,228.3 761.5,228.3 762,228.2 762.5,228 763,226.4 763.5,224.8 764,223.4 764.5,223.3 765,223.2 765.5,223.1 766,222.9 766.5,222.8 767,221.7 767.5,220.1 768,218.4 768.5,217.9 769,217.7 769.5,217.6 770,217.4 770.5,217.2 771,216.7 771.5,215 772,213.4 772.5,212.1 773,211.9 773.5,211.8 774,211.6 774.5,211.4 775,211.2 775.5,209.8 776,208 776.5,206.3 777,205.9 777.5,205.7 778,205.5 778.5,205.3 779,205.1 779.5,204.2 780,202.4 780.5,200.7 781,199.6 781.5,199.4 782,199.2 782.5,198.9 783,198.7 783.5,198.4 784,196.6 784.5,194.8 785,193.1 785.5,192.9 786,192.6 786.5,192.3 787,192.1 787.5,191.8 788,190.6 788.5,188.8 789,187 789.5,186.1 790,185.8 790.5,185.6 791,185.3 791.5,185 792,184.4 792.5,182.6 793,180.7 793.5,179.2 794,178.9 794.5,178.6 795,178.3 795.5,178 796,177.7 796.5,176.2 797,174.3 797.5,172.4 798,171.8 798.5,171.5 799,171.2 799.5,170.9 800,170.6 800.5,169.7 801,167.8 801.5,165.9 802,164.6 802.5,164.3 803,163.9 803.5,163.6 804,163.3 804.5,163 805,161.2 805.5,159.2 806,157.3 806.5,156.9 807,156.6 807.5,156.3 808,155.9 808.5,155.6 809,154.5 809.5,152.5 810,150.6 810.5,149.5 811,149.2 811.5,148.9 812,148.5 812.5,148.2 813,147.7 813.5,145.7 814,143.8 814.5,142.1 815,141.7 815.5,141.4 816,141.1 816.5,140.7 817,140.4 817.5,138.9 818,137 818.5,135 819,134.3 819.5,133.9 820,133.6 820.5,133.3 821,132.9 821.5,132.1 822,130.2 822.5,128.2 823,126.8 823.5,126.5 824,126.1 824.5,125.8 825,125.5 825.5,125.1 826,123.4 826.5,121.5 827,119.5 827.5,119.1 828,118.7 828.5,118.4 829,118.1 829.5,117.7 830,116.7 830.5,114.8 831,112.8 831.5,111.7 832,111.4 832.5,111.1 833,110.7 833.5,110.4 834,110 834.5,108.1 835,106.2 835.5,104.4 836,104.1 836.5,103.8 837,103.5 837.5,103.2 838,102.9 838.5,101.6 839,99.7 839.5,97.8 840,97 840.5,96.7 841,96.4 841.5,96.1 842,95.8 842.5,95.2 843,93.3 843.5,91.5 844,90 844.5,89.7 845,89.4 845.5,89.2 846,88.9 846.5,88.6 847,87.1 847.5,85.3 848,83.4 848.5,82.9 849,82.7 849.5,82.4 850,82.1 850.5,81.9 851,81.1 851.5,79.3 852,77.5 852.5,76.3 853,76.1 853.5,75.8 854,75.6 854.5,75.4 855,75.1 855.5,73.4 856,71.7 856.5,69.9 857,69.7 857.5,69.5 858,69.3 858.5,69.1 859,68.9 859.5,67.8 860,66.1 860.5,64.4 861,63.6 861.5,63.4 862,63.2 862.5,63.1 863,62.9 863.5,62.5 864,60.8 864.5,59.2 865,57.8 865.5,57.6 866,57.5 866.5,57.3 867,57.1 867.5,57 868,55.8 868.5,54.2 869,52.6 869.5,52.1 870,52 870.5,51.8 871,51.7 871.5,51.6 872,51 872.5,49.5 873,47.9 873.5,46.9 874,46.8 874.5,46.7 875,46.6 875.5,46.5 876,46.4 876.5,45.1 877,43.6 877.5,42.1 878,41.9 878.5,41.9 879,41.8 879.5,41.8 880,41.7 880.5,41 881,39.6 881.5,38.1 882,37.4 882.5,37.4 883,37.4 883.5,37.4 884,37.4 884.5,37.3 885,35.9 885.5,34.5 886,33.3 886.5,33.3 887,33.3 887.5,33.4 888,33.4 888.5,33.4 889,32.6 889.5,31.2 890,29.9 890.5,29.6 891,29.6 891.5,29.7 892,29.8 892.5,29.9 893,29.6 893.5,28.4 894,27.1 894.5,26.2 895,26.4 895.5,26.5 896,26.6 896.5,26.7 897,26.8 897.5,25.9 898,24.7 898.5,23.5 899,23.5 899.5,23.6 900,23.8 900.5,23.9 901,24.1 901.5,23.7 902,22.6 902.5,21.5 903,21 903.5,21.2 904,21.4 904.5,21.6 905,21.8 905.5,22 906,21 906.5,19.9 907,19 907.5,19.2 908,19.4 908.5,19.7 909,19.9 909.5,20.2 910,19.7 910.5,18.8 911,17.8 911.5,17.6 912,17.9 912.5,18.2 913,18.5 913.5,18.8 914,18.9 914.5,18 915,17.1 915.5,16.5 916,16.8 916.5,17.2 917,17.5 917.5,17.9 918,18.2 918.5,17.7 919,16.9 919.5,16 920,16.2 920.5,16.6 921,17 921.5,17.4 922,17.7 922.5,17.8 923,17 923.5,16.3 924,16 924.5,16.4 925,16.9 925.5,17.3 926,17.7 926.5,18.2 927,17.6 927.5,16.9 928,16.3 928.5,16.7 929,17.2 929.5,17.7 930,18.2 930.5,18.6 931,18.6 931.5,18 932,17.4 932.5,17.4 933,18 933.5,18.5 934,19 934.5,19.6 935,20 935.5,19.5 936,19 936.5,18.6 937,19.2 937.5,19.7 938,20.3 938.5,20.9 939,21.5 939.5,21.4 940,20.9 940.5,20.5 941,20.8 941.5,21.4 942,22 942.5,22.7 943,23.3 943.5,23.7 944,23.3 944.5,22.9 945,22.9 945.5,23.5 946,24.2" fill="none" stroke="#ff6929" stroke-width="1.25" stroke-linejoin="round" />
<polyline clip-path="url(#a1)" points="30.5,21.1 34.5,21.1 38.5,21.1 42.5,21.1 46.5,21.1 50.5,21.1 54.5,21.1 58.5,21 62.5,21 66.5,21 70.5,21 74.5,21 78.5,20.9 82.5,20.9 86.5,20.9 90.5,20.9 94.5,20.8 98.5,20.8 102.5,20.8 106.5,20.7 110.5,20.7 114.5,20.7 118.5,20.6 122.5,20.6 126.5,20.6 130.5,20.5 134.5,20.5 138.5,20.5 142.5,20.4 146.5,20.4 150.5,20.3 154.5,20.3 158.5,20.3 162.5,20.2 166.5,20.2 170.5,20.2 174.5,20.1 178.5,20.1 182.5,20.1 186.5,20 190.5,20 194.5,20 198.5,19.9 202.5,19.9 206.5,19.9 210.5,19.9 214.5,19.8 218.5,19.8 222.5,19.8 226.5,19.8 230.5,19.8 234.5,19.7 238.5,19.7 242.5,19.7 246.5,19.7 250.5,19.7 254.5,19.7 258.5,19.7 262.5,19.7 266.5,19.7 270.5,19.7 274.5,19.7 278.5,19.7 282.5,19.7 286.5,19.6 290.5,19.6 294.5,19.6 298.5,19.6 302.5,19.6 306.5,19.6 310.5,19.5 314.5,19.5 318.5,19.5 322.5,19.4 326.5,19.4 330.5,19.4 334.5,19.4 338.5,19.3 342.5,19.3 346.5,19.3 350.5,19.2 354.5,19.2 358.5,19.1 362.5,19.1 366.5,19.1 370.5,19 374.5,19 378.5,19 382.5,18.9 386.5,18.9 390.5,18.9 394.5,18.8 398.5,18.8 402.5,18.8 406.5,18.7 410.5,18.7 414.5,18.7 418.5,18.6 422.5,18.6 426.5,18.6 430.5,18.5 434.5,18.5 438.5,18.5 442.5,18.5 446.5,18.4 450.5,18.4 454.5,18.4 458.5,18.4 462.5,18.4 466.5,18.3 470.5,18.3 474.5,18.3 478.5,18.3 482.5,18.3 486.5,18.3 490.5,18.3 494.5,18.3 498.5,18.3 502.5,18.3 506.5,18.3 510.5,18.3 514.5,18.2 518.5,18.2 522.5,18.2 526.5,18.2 530.5,18.1 534.5,18.1 538.5,18.1 542.5,18.1 546.5,18 550.5,18 554.5,18 558.5,18 562.5,17.9 566.5,17.9 570.5,17.9 574.5,17.9 578.5,17.8 582.5,17.8 586.5,17.8 590.5,17.8 594.5,17.8 598.5,17.8 602.5,17.8 606.5,17.8 610.5,17.8 614.5,17.7 618.5,17.7 622.5,17.7 626.5,17.7 630.5,17.6 634.5,17.6 638.5,17.6 642.5,17.6 646.5,17.6 650.5,17.7 654.5,17.8 658.5,17.9 662.5,18 666.5,18 670.5,18.1 674.5,18.2 678.5,18.2 682.5,18.2 686.5,18.2 690.5,18.3 694.5,18.3 698.5,18.4 702.5,18.5 706.5,18.6 710.5,18.7 714.5,18.8 718.5,18.9 722.5,19 726.5,19.1 730.5,19.1 734.5,19.2 738.5,19.2 742.5,19.2 746.5,19.2 750.5,19.2 754.5,19.1 758.5,19.1 762.5,19.1 766.5,19 770.5,19 774.5,19 778.5,18.9 782.5,18.9 786.5,18.9 790.5,18.8 794.5,18.8 798.5,18.8 802.5,18.8 806.5,18.8 810.5,18.8 814.5,18.7 818.5,18.7 822.5,18.7 826.5,18.6 830.5,18.6 834.5,18.6 838.5,18.5 842.5,18.5 846.5,18.5 850.5,18.5 854.5,18.5 858.5,18.5 862.5,18.5 866.5,18.6 870.5,18.6 874.5,18.6 878.5,18.7 882.5,18.7 886.5,18.7 890.5,18.8 894.5,18.8 898.5,18.8 902.5,18.8 906.5,18.8 910.5,18.9 914.5,19 918.5,19.1 922.5,19.2 926.5,19.4 930.5,19.5 934.5,19.6 938.5,19.6 942.5,19.7 946,19.7" fill="none" stroke="#64d413" stroke-width="1.4" stroke-linejoin="round" />
<polygon clip-path="url(#a2)" points="30,345.6 30.5,345.5 31,345.2 31.5,344.7 32,344.6 32.5,344.6 33,344.6 33.5,344.4 34,344.3 34.5,344 35,343.7 35.5,343.4 36,343.5 36.5,344.2 37,344.8 37.5,345 38,345.2 38.5,345.3 39,345 39.5,344.6 40,344.2 40.5,344.9 41,345.5 41.5,345.9 42,346 42.5,346 43,346 43.5,345.6 44,345.2 44.5,345.4 45,345.9 45.5,346.4 46,346.5 46.5,346.5 47,346.6 47.5,345.9 48,345.2 48.5,344.8 49,345.6 49.5,346.4 50,346.8 50.5,346.8 51,346.8 51.5,346.5 52,345.7 52.5,345 53,345.5 53.5,346.2 54,346.8 54.5,346.8 55,346.8 55.5,346.8 56,346.4 56.5,346 57,345.9 57.5,346.3 58,346.6 58.5,346.7 59,346.7 59.5,346.6 60,346.2 60.5,345.4 61,344.6 61.5,345.3 62,346 62.5,346.4 63,346.4 63.5,346.3 64,346.2 64.5,345.5 65,344.7 65.5,344.8 66,345.4 66.5,346 67,346 67.5,345.9 68,345.9 68.5,345.2 69,344.3 69.5,343.8 70,344.5 70.5,345.2 71,345.5 71.5,345.5 72,345.4 72.5,345.2 73,344.6 73.5,344.1 74,344.3 74.5,344.7 75,345 75.5,345 76,344.9 76.5,344.8 77,344.1 77.5,343.3 78,343.1 78.5,343.7 79,344.3 79.5,344.4 80,344.4 80.5,344.7 81,344.7 81.5,344.7 82,344.9 82.5,345.6 83,346 83.5,346.1 84,346.1 84.5,346.1 85,346.1 85.5,345.9 86,345.7 86.5,345.7 87,345.9 87.5,346 88,346 88.5,346 89,346 89.5,345.9 90,345.7 90.5,345.6 91,345.7 91.5,345.9 92,346 92.5,346 93,345.9 93.5,345.9 94,345.8 94.5,345.7 95,345.7 95.5,345.8 96,345.9 96.5,345.9 97,345.9 97.5,345.9 98,345.8 98.5,345.7 99,345.6 99.5,345.7 100,345.8 100.5,345.8 101,345.8 101.5,345.6 102,345.3 102.5,344.8 103,344.1 103.5,344 104,344.2 104.5,344.4 105,344.4 105.5,344.6 106,344.8 106.5,344.4 107,343.9 107.5,343.9 108,344.8 108.5,345.6 109,345.9 109.5,346 110,346.2 110.5,345.9 111,345.5 111.5,345.1 112,345.8 112.5,346.4 113,346.8 113.5,346.9 114,347 114.5,347 115,346.8 115.5,346.5 116,346.6 116.5,347 117,347.4 117.5,347.5 118,347.5 118.5,347.6 119,347.2 119.5,346.6 120,346.3 120.5,346.9 121,347.5 121.5,347.8 122,347.8 122.5,347.8 123,347.5 123.5,346.8 124,346 124.5,346.5 125,347.2 125.5,347.8 126,347.8 126.5,347.7 127,347.7 127.5,347.4 128,347.1 128.5,347 129,347.3 129.5,347.5 130,347.5 130.5,347.5 131,347.4 131.5,347 132,346.3 132.5,345.6 133,346.2 133.5,346.8 134,347.1 134.5,347.1 135,347 135.5,346.9 136,346.5 136.5,346.2 137,346.2 137.5,346.4 138,346.6 138.5,346.5 139,346.4 139.5,346.4 140,345.9 140.5,345.4 141,345 141.5,345.4 142,345.7 142.5,345.9 143,345.8 143.5,345.7 144,345.5 144.5,345.1 145,344.7 145.5,344.7 146,345 146.5,345.2 147,345.1 147.5,345 148,344.9 148.5,344.3 149,343.6 149.5,343.3 150,343.8 150.5,344.3 151,344.9 151.5,345.1 152,345.5 152.5,345.7 153,345.8 153.5,345.8 154,345.9 154.5,346.1 155,346.2 155.5,346.2 156,346.2 156.5,346.2 157,346 157.5,345.7 158,345.7 158.5,345.9 159,346.1 159.5,346.1 160,346.1 160.5,346.1 161,346 161.5,345.8 162,345.7 162.5,345.8 163,346 163.5,346.1 164,346.1 164.5,346 165,346 165.5,345.8 166,345.7 166.5,345.7 167,345.9 167.5,346 168,346 168.5,346 169,346 169.5,345.8 170,345.7 170.5,345.6 171,345.7 171.5,345.8 172,345.7 172.5,345.4 173,345.2 173.5,344.8 174,344.1 174.5,343.5 175,343.5 175.5,344.2 176,344.7 176.5,344.8 177,345 177.5,345.1 178,345 178.5,344.8 179,344.9 179.5,345.3 180,345.6 180.5,345.8 181,345.9 181.5,346 182,345.8 182.5,345.3 183,344.9 183.5,345.5 184,346 184.5,346.4 185,346.5 185.5,346.5 186,346.5 186.5,346 187,345.5 187.5,345.6 188,346.2 188.5,346.8 189,346.8 189.5,346.9 190,346.9 190.5,346.3 191,345.5 191.5,344.9 192,345.7 192.5,346.6 193,347 193.5,347 194,347 194.5,346.8 195,346.4 195.5,346 196,346.2 196.5,346.6 197,346.9 197.5,346.9 198,346.9 198.5,346.9 199,346 199.5,345.1 200,344.8 200.5,345.6 201,346.5 201.5,346.7 202,346.6 202.5,346.6 203,346.2 203.5,345.5 204,344.8 204.5,345.3 205,345.9 205.5,346.3 206,346.3 206.5,346.2 207,346.1 207.5,345.4 208,344.6 208.5,344.6 209,345.2 209.5,345.8 210,345.9 210.5,345.8 211,345.7 211.5,345.3 212,344.6 212.5,344.1 213,344.6 213.5,345.1 214,345.4 214.5,345.3 215,345.3 215.5,345.1 216,344.6 216.5,344.1 217,344.2 217.5,344.5 218,344.9 218.5,344.8 219,344.7 219.5,344.7 220,344.2 220.5,343.7 221,343.9 221.5,344.5 222,345.2 222.5,345.7 223,346 223.5,346.2 224,346.2 224.5,346.1 225,346 225.5,346.1 226,346.2 226.5,346.2 227,346.2 227.5,346.2 228,346.2 228.5,346 229,345.9 229.5,345.9 230,346 230.5,346.1 231,346.1 231.5,346.1 232,346.1 232.5,346 233,345.8 233.5,345.6 234,345.8 234.5,346 235,346 235.5,346 236,346 236.5,346 237,345.7 237.5,345.5 238,345.5 238.5,345.7 239,346 239.5,346 240,345.9 240.5,345.9 241,345.8 241.5,345.6 242,345.3 242.5,345.2 243,345.2 243.5,345.1 244,344.8 244.5,344.6 245,344.4 245.5,343.9 246,343.8 246.5,344.2 247,344.7 247.5,345.1 248,345.2 248.5,345.4 249,345.5 249.5,344.9 250,344.3 250.5,344.3 251,345.1 251.5,345.9 252,346.2 252.5,346.2 253,346.3 253.5,346 254,345.3 254.5,344.6 255,345.4 255.5,346.2 256,346.7 256.5,346.8 257,346.9 257.5,346.8 258,346.1 258.5,345.3 259,345.4 259.5,346.2 260,347 260.5,347.1 261,347.1 261.5,347.1 262,346.7 262.5,346.2 263,345.8 263.5,346.3 264,346.9 264.5,347.2 265,347.2 265.5,347.2 266,347 266.5,346.6 267,346.1 267.5,346.3 268,346.7 268.5,347.1 269,347 269.5,347 270,347 270.5,346.3 271,345.5 271.5,345.1 272,345.8 272.5,346.6 273,346.7 273.5,346.7 274,346.7 274.5,346.3 275,345.5 275.5,344.8 276,345.3 276.5,345.9 277,346.3 277.5,346.3 278,346.2 278.5,346.1 279,345.5 279.5,344.9 280,344.8 280.5,345.3 281,345.8 281.5,345.8 282,345.7 282.5,345.6 283,345.3 283.5,344.9 284,344.4 284.5,344.8 285,345.1 285.5,345.2 286,345.2 286.5,345.1 287,344.9 287.5,344.2 288,343.5 288.5,343.6 289,344.2 289.5,344.7 290,344.6 290.5,344.5 291,344.4 291.5,344.3 292,344.1 292.5,344.4 293,345.3 293.5,346 294,346.2 294.5,346.2 295,346.2 295.5,346.1 296,345.9 296.5,345.7 297,345.8 297.5,346 298,346.1 298.5,346.1 299,346.1 299.5,346.1 300,345.9 300.5,345.7 301,345.6 301.5,345.8 302,346 302.5,346 303,346 303.5,346 304,345.9 304.5,345.6 305,345.4 305.5,345.6 306,345.8 306.5,345.9 307,345.9 307.5,345.9 308,345.8 308.5,345.6 309,345.4 309.5,345.4 310,345.6 310.5,345.8 311,345.8 311.5,345.8 312,345.8 312.5,345.5 313,345 313.5,344.5 314,344.4 314.5,344.5 315,344.5 315.5,344.1 316,344.4 316.5,344.4 317,343.9 317.5,343.4 318,343.9 318.5,344.8 319,345.6 319.5,345.7 320,345.8 320.5,346 321,345.6 321.5,345.1 322,345 322.5,345.7 323,346.4 323.5,346.7 324,346.8 324.5,346.8 325,346.7 325.5,346.5 326,346.2 326.5,346.5 327,347 327.5,347.3 328,347.3 328.5,347.4 329,347.4 329.5,346.8 330,346.2 330.5,346.2 331,346.9 331.5,347.5 332,347.6 332.5,347.6 333,347.6 333.5,347.1 334,346.3 334.5,345.6 335,346.4 335.5,347.2 336,347.6 336.5,347.6 337,347.6 337.5,347.4 338,347 338.5,346.6 339,346.7 339.5,347.1 340,347.4 340.5,347.4 341,347.3 341.5,347.3 342,346.6 342.5,345.7 343,345.3 343.5,346 344,346.8 344.5,347 345,346.9 345.5,346.9 346,346.6 346.5,346.2 347,345.8 347.5,345.9 348,346.2 348.5,346.4 349,346.4 349.5,346.3 350,346.2 350.5,345.9 351,345.5 351.5,345.4 352,345.6 352.5,345.8 353,345.7 353.5,345.6 354,345.6 354.5,345 355,344.1 355.5,343.3 356,344 356.5,344.7 357,345 357.5,345 358,344.9 358.5,344.6 359,343.9 359.5,343.2 360,343.3 360.5,343.8 361,344.3 361.5,344.6 362,344.7 362.5,345 363,345.1 363.5,345.3 364,345.5 364.5,345.8 365,346 365.5,346 366,346 366.5,346 367,345.9 367.5,345.7 368,345.5 368.5,345.6 369,345.8 369.5,345.9 370,345.9 370.5,345.9 371,345.9 371.5,345.6 372,345.4 372.5,345.3 373,345.5 373.5,345.8 374,345.8 374.5,345.8 375,345.8 375.5,345.7 376,345.6 376.5,345.4 377,345.5 377.5,345.6 378,345.7 378.5,345.7 379,345.7 379.5,345.6 380,345.4 380.5,345.2 381,345.2 381.5,345.4 382,345.6 382.5,345.5 383,345.3 383.5,345.1 384,344.5 384.5,343.7 385,342.9 385.5,343.3 386,343.6 386.5,343.9 387,344 387.5,344 388,343.9 388.5,343.7 389,343.4 389.5,343.5 390,343.8 390.5,344.1 391,344.1 391.5,344.1 392,344.1 392.5,343.6 393,343 393.5,342.8 394,343.4 394.5,344 395,344.2 395.5,344.2 396,344.2 396.5,344 397,343.4 397.5,342.9 398,343.3 398.5,343.8 399,344.2 399.5,344.2 400,344.2 400.5,344.2 401,343.5 401.5,342.9 402,342.8 402.5,343.5 403,344.1 403.5,344.2 404,344.2 404.5,344.2 405,344 405.5,343.7 406,343.4 406.5,343.7 407,344 407.5,344.1 408,344.1 408.5,344.1 409,344 409.5,343.4 410,342.9 410.5,343 411,343.6 411.5,344.1 412,344.1 412.5,344.1 413,344.1 413.5,343.4 414,342.6 414.5,342.1 415,342.9 415.5,343.8 416,344.1 416.5,344.1 417,344.1 417.5,343.7 418,342.9 418.5,342.1 419,342.6 419.5,343.4 420,344 420.5,344 421,344 421.5,344 422,343.8 422.5,343.5 423,343.5 423.5,343.7 424,344 424.5,344 425,344 425.5,344 426,343.8 426.5,343.4 427,343 427.5,343.4 428,343.8 428.5,344 429,344 429.5,344 430,344 430.5,343.6 431,343.2 431.5,343.2 432,344 432.5,344.6 433,344.9 433.5,345.3 434,345.6 434.5,345.6 435,345.4 435.5,345.3 436,345.5 436.5,345.7 437,345.8 437.5,345.8 438,345.7 438.5,345.6 439,345.4 439.5,345.1 440,345.2 440.5,345.5 441,345.7 441.5,345.7 442,345.6 442.5,345.6 443,345.4 443.5,345.2 444,345.1 444.5,345.3 445,345.5 445.5,345.6 446,345.6 446.5,345.5 447,345.4 447.5,345.3 448,345.1 448.5,345.2 449,345.4 449.5,345.5 450,345.5 450.5,345.4 451,345.4 451.5,345.2 452,344.9 452.5,344.9 453,344.9 453.5,345 454,344.8 454.5,344.5 455,344.3 455.5,343.8 456,343.3 456.5,343 457,343.6 457.5,344.3 458,344.7 458.5,344.9 459,345 459.5,345 460,344.5 460.5,343.9 461,344.3 461.5,345.2 462,346 462.5,346.1 463,346.2 463.5,346.3 464,346.2 464.5,346 465,346 465.5,346.4 466,346.7 466.5,346.9 467,347 467.5,347 468,346.9 468.5,346.5 469,346.2 469.5,346.5 470,347 470.5,347.3 471,347.4 471.5,347.4 472,347.4 472.5,346.7 473,345.9 473.5,345.8 474,346.6 474.5,347.3 475,347.5 475.5,347.5 476,347.5 476.5,347.2 477,346.7 477.5,346.2 478,346.6 478.5,347.1 479,347.3 479.5,347.3 480,347.3 480.5,347.1 481,346.6 481.5,346.1 482,346.2 482.5,346.6 483,347 483.5,346.9 484,346.9 484.5,346.8 485,346.3 485.5,345.7 486,345.4 486.5,345.8 487,346.2 487.5,346.4 488,346.3 488.5,346.2 489,346 489.5,345.6 490,345.2 490.5,345.3 491,345.5 491.5,345.7 492,345.6 492.5,345.5 493,345.5 493.5,345.1 494,344.7 494.5,344.5 495,344.7 495.5,344.9 496,344.9 496.5,344.8 497,344.7 497.5,344.4 498,343.8 498.5,343.3 499,343.6 499.5,343.9 500,344.1 500.5,344 501,343.9 501.5,343.7 502,343 502.5,342.9 503,343.3 503.5,344.3 504,345 504.5,345.3 505,345.5 505.5,345.4 506,345.3 506.5,345.1 507,344.9 507.5,345.1 508,345.3 508.5,345.4 509,345.3 509.5,345.3 510,345.3 510.5,345.1 511,344.9 511.5,345 512,345.1 512.5,345.2 513,345.2 513.5,345.2 514,345.2 514.5,345 515,344.8 515.5,344.7 516,344.9 516.5,345.1 517,345.1 517.5,345.1 518,345.1 518.5,345 519,344.9 519.5,344.7 520,344.8 520.5,344.9 521,345 521.5,345 522,345 522.5,344.9 523,344.7 523.5,344.2 524,343.9 524.5,343.8 525,343.9 525.5,343.7 526,343.6 526.5,343.3 527,343.2 527.5,342.9 528,342.6 528.5,343.3 529,344 529.5,344.5 530,344.6 530.5,344.7 531,344.7 531.5,344.3 532,343.9 532.5,344.1 533,344.8 533.5,345.4 534,345.5 534.5,345.6 535,345.7 535.5,345.4 536,345 536.5,344.8 537,345.3 537.5,345.8 538,346.1 538.5,346.1 539,346.2 539.5,346.1 540,345.8 540.5,345.5 541,345.7 541.5,346.1 542,346.4 542.5,346.4 543,346.4 543.5,346.4 544,346 544.5,345.5 545,345.4 545.5,345.9 546,346.3 546.5,346.4 547,346.4 547.5,346.4 548,346.1 548.5,345.5 549,345 549.5,345.4 550,345.9 550.5,346.2 551,346.2 551.5,346.1 552,346 552.5,345.7 553,345.3 553.5,345.3 554,345.6 554.5,345.8 555,345.8 555.5,345.7 556,345.7 556.5,345.4 557,345 557.5,344.7 558,345 558.5,345.2 559,345.3 559.5,345.2 560,345.1 560.5,344.9 561,344.4 561.5,344 562,344.1 562.5,344.4 563,344.7 563.5,344.6 564,344.5 564.5,344.4 565,343.8 565.5,343.1 566,342.8 566.5,343.3 567,343.9 567.5,343.9 568,343.9 568.5,343.8 569,343.5 569.5,343.1 570,342.7 570.5,342.9 571,343.1 571.5,343.3 572,343.2 572.5,343.5 573,343.6 573.5,343.5 574,343.7 574.5,344.2 575,344.7 575.5,344.9 576,344.9 576.5,344.9 577,344.8 577.5,344.7 578,344.6 578.5,344.4 579,344.6 579.5,344.7 580,344.8 580.5,344.7 581,344.7 581.5,344.7 582,344.6 582.5,344.4 583,344.5 583.5,344.6 584,344.6 584.5,344.6 585,344.6 585.5,344.6 586,344.4 586.5,344.2 587,344.1 587.5,344.3 588,344.4 588.5,344.5 589,344.5 589.5,344.5 590,344.4 590.5,344.3 591,344.1 591.5,344.2 592,344.3 592.5,344.4 593,344.4 593.5,344.2 594,344 594.5,343.5 595,342.8 595.5,342.3 596,342.5 596.5,342.9 597,342.9 597.5,343.1 598,343.3 598.5,343.2 599,342.9 599.5,342.7 600,343.3 600.5,343.9 601,344.3 601.5,344.4 602,344.5 602.5,344.6 603,344.5 603.5,344.3 604,344.5 604.5,344.8 605,345.2 605.5,345.3 606,345.3 606.5,345.4 607,345 607.5,344.4 608,344.1 608.5,344.8 609,345.4 609.5,345.8 610,345.8 610.5,345.8 611,345.7 611.5,345.1 612,344.5 612.5,344.9 613,345.5 613.5,346 614,346 614.5,346 615,346 615.5,345.6 616,345.2 616.5,345.1 617,345.5 617.5,345.9 618,346 618.5,345.9 619,345.9 619.5,345.5 620,344.8 620.5,344 621,344.6 621.5,345.3 622,345.7 622.5,345.7 623,345.6 623.5,345.5 624,344.7 624.5,343.9 625,343.9 625.5,344.6 626,345.2 626.5,345.2 627,345.2 627.5,345.1 628,344.8 628.5,344.4 629,344 629.5,344.3 630,344.6 630.5,344.7 631,344.6 631.5,344.5 632,344.3 632.5,343.6 633,343 633.5,343.2 634,343.6 634.5,344 635,344 635.5,343.9 636,343.8 636.5,343.2 637,342.5 637.5,342.2 638,342.7 638.5,343.2 639,343.3 639.5,343.2 640,343.1 640.5,342.9 641,342.4 641.5,342 642,342.2 642.5,342.4 643,343 643.5,343.2 644,343.6 644.5,343.9 645,344.1 645.5,344.1 646,344.1 646.5,344.2 647,344.4 647.5,344.4 648,344.4 648.5,344.3 649,344.2 649.5,344 650,343.8 650.5,344 651,344.2 651.5,344.3 652,344.3 652.5,344.2 653,344.2 653.5,343.9 654,343.7 654.5,343.7 655,344 655.5,344.2 656,344.2 656.5,344.1 657,344.1 657.5,344 658,343.8 658.5,343.7 659,343.9 659.5,344 660,344.1 660.5,344 661,344 661.5,343.9 662,343.7 662.5,343.5 663,343.6 663.5,343.8 664,343.8 664.5,343.5 665,343.3 665.5,343 666,342.3 666.5,341.6 667,341.1 667.5,341.9 668,342.7 668.5,343.1 669,343.3 669.5,343.5 670,343.4 670.5,343 671,342.7 671.5,343.3 672,344 672.5,344.4 673,344.6 673.5,344.7 674,344.7 674.5,344.2 675,343.7 675.5,343.8 676,344.6 676.5,345.3 677,345.4 677.5,345.5 678,345.6 678.5,345.1 679,344.3 679.5,343.8 680,344.7 680.5,345.5 681,345.9 681.5,346 682,346 682.5,345.9 683,345.4 683.5,345 684,345.2 684.5,345.7 685,346.1 685.5,346.1 686,346.1 686.5,346.1 687,345.7 687.5,345.2 688,345.1 688.5,345.5 689,345.9 689.5,346 690,346 690.5,346 691,345.7 691.5,345.1 692,344.6 692.5,344.9 693,345.4 693.5,345.7 694,345.7 694.5,345.6 695,345.5 695.5,344.6 696,343.8 696.5,343.7 697,344.4 697.5,345.1 698,345.2 698.5,345.1 699,345 699.5,344.6 700,344 700.5,343.5 701,343.9 701.5,344.3 702,344.5 702.5,344.4 703,344.4 703.5,344.1 704,343.6 704.5,343 705,343 705.5,343.4 706,343.8 706.5,343.7 707,343.6 707.5,343.5 708,343.2 708.5,342.8 709,342.5 709.5,342.7 710,343 710.5,343 711,342.9 711.5,342.8 712,342.4 712.5,341.8 713,341.5 713.5,342 714,342.9 714.5,343.6 715,344 715.5,344.2 716,344.3 716.5,344.2 717,344.1 717.5,344 718,344.1 718.5,344.2 719,344.2 719.5,344.2 720,344.2 720.5,344.1 721,343.8 721.5,343.6 722,343.8 722.5,344 723,344.2 723.5,344.2 724,344.1 724.5,344.1 725,343.9 725.5,343.7 726,343.7 726.5,343.9 727,344.1 727.5,344.1 728,344.1 728.5,344.1 729,343.9 729.5,343.8 730,343.7 730.5,343.8 731,344 731.5,344 732,344 732.5,344 733,343.9 733.5,343.7 734,343.4 734.5,343.2 735,343.2 735.5,343.2 736,342.9 736.5,342.7 737,342.6 737.5,341.8 738,341.5 738.5,341.5 739,342.3 739.5,343.1 740,343.4 740.5,343.6 741,343.8 741.5,343.7 742,343.4 742.5,343.1 743,343.6 743.5,344.1 744,344.5 744.5,344.6 745,344.7 745.5,344.7 746,344.3 746.5,343.8 747,343.9 747.5,344.5 748,345.2 748.5,345.3 749,345.3 749.5,345.4 750,345 750.5,344.5 751,344 751.5,344.7 752,345.3 752.5,345.6 753,345.7 753.5,345.7 754,345.6 754.5,345.3 755,344.9 755.5,345 756,345.4 756.5,345.8 757,345.8 757.5,345.8 758,345.7 758.5,345.3 759,344.8 759.5,344.6 760,345 760.5,345.5 761,345.6 761.5,345.6 762,345.6 762.5,345.2 763,344.3 763.5,343.5 764,344 764.5,344.8 765,345.3 765.5,345.3 766,345.2 766.5,345.1 767,344.2 767.5,343.3 768,343.2 768.5,343.9 769,344.7 769.5,344.8 770,344.7 770.5,344.7 771,344.1 771.5,343.2 772,342.4 772.5,343.2 773,343.9 773.5,344.2 774,344.2 774.5,344.1 775,343.9 775.5,343.2 776,342.4 776.5,342.5 777,343.1 777.5,343.6 778,343.5 778.5,343.5 779,343.4 779.5,342.9 780,342.4 780.5,342.1 781,342.5 781.5,342.8 782,342.9 782.5,342.8 783,342.7 783.5,342.9 784,342.9 784.5,343 785,343.6 785.5,344.2 786,344.5 786.5,344.5 787,344.5 787.5,344.5 788,344.3 788.5,344.1 789,344 789.5,344.2 790,344.4 790.5,344.4 791,344.4 791.5,344.4 792,344.3 792.5,344.2 793,344 793.5,344.1 794,344.3 794.5,344.3 795,344.3 795.5,344.3 796,344.3 796.5,344.1 797,343.9 797.5,343.9 798,344.1 798.5,344.3 799,344.3 799.5,344.2 800,344.2 800.5,344.2 801,344.1 801.5,344 802,344.1 802.5,344.2 803,344.2 803.5,344.2 804,344.1 804.5,343.9 805,343.4 805.5,342.6 806,342.3 806.5,342.5 807,342.9 807.5,342.8 808,342.7 808.5,343 809,342.9 809.5,342.9 810,342.9 810.5,343.3 811,343.7 811.5,344 812,344.1 812.5,344.2 813,344 813.5,343.5 814,342.9 814.5,343.5 815,344.3 815.5,344.9 816,345 816.5,345.1 817,345.1 817.5,344.9 818,344.7 818.5,344.8 819,345.1 819.5,345.4 820,345.5 820.5,345.6 821,345.6 821.5,345.4 822,345 822.5,344.7 823,345.1 823.5,345.6 824,345.8 824.5,345.8 825,345.8 825.5,345.7 826,345.2 826.5,344.6 827,344.8 827.5,345.3 828,345.9 828.5,345.8 829,345.8 829.5,345.8 830,345.3 830.5,344.7 831,344.4 831.5,344.9 832,345.5 832.5,345.7 833,345.6 833.5,345.6 834,345.2 834.5,344.4 835,343.6 835.5,344.1 836,344.8 836.5,345.3 837,345.3 837.5,345.2 838,345.1 838.5,344.3 839,343.5 839.5,343.3 840,344 840.5,344.7 841,344.8 841.5,344.7 842,344.6 842.5,344.2 843,343.4 843.5,342.7 844,343.3 844.5,343.9 845,344.2 845.5,344.1 846,344.1 846.5,343.9 847,343 847.5,342.2 848,342.2 848.5,342.9 849,343.6 849.5,343.5 850,343.5 850.5,343.4 851,343 851.5,342.6 852,342.4 852.5,342.6 853,342.8 853.5,342.9 854,343.3 854.5,343.6 855,343.9 855.5,344.1 856,344.3 856.5,344.5 857,344.6 857.5,344.7 858,344.7 858.5,344.7 859,344.6 859.5,344.5 860,344.4 860.5,344.4 861,344.5 861.5,344.6 862,344.6 862.5,344.6 863,344.6 863.5,344.5 864,344.3 864.5,344.2 865,344.3 865.5,344.4 866,344.5 866.5,344.5 867,344.5 867.5,344.5 868,344.2 868.5,344 869,344 869.5,344.2 870,344.4 870.5,344.4 871,344.4 871.5,344.4 872,344.3 872.5,344.1 873,343.9 873.5,344.1 874,344.3 874.5,344.3 875,344.1 875.5,343.9 876,343.6 876.5,342.9 877,342.1 877.5,342.1 878,342.3 878.5,343 879,343.2 879.5,343.4 880,343.6 880.5,343.4 881,343.2 881.5,343.2 882,343.7 882.5,344.2 883,344.4 883.5,344.5 884,344.6 884.5,344.6 885,344.4 885.5,344.2 886,344.5 886.5,344.9 887,345.2 887.5,345.2 888,345.3 888.5,345.4 889,345.1 889.5,344.8 890,344.8 890.5,345.2 891,345.6 891.5,345.7 892,345.7 892.5,345.8 893,345.4 893.5,344.8 894,344.3 894.5,344.9 895,345.5 895.5,345.9 896,345.9 896.5,345.9 897,345.7 897.5,344.8 898,344 898.5,344.1 899,345 899.5,345.9 900,345.8 900.5,345.8 901,345.8 901.5,345.1 902,344.2 902.5,343.6 903,344.5 903.5,345.3 904,345.6 904.5,345.6 905,345.5 905.5,345.3 906,344.9 906.5,344.5 907,344.7 907.5,344.9 908,345.1 908.5,345 909,344.9 909.5,344.9 910,344.4 910.5,343.9 911,343.7 911.5,344 912,344.3 912.5,344.3 913,344.2 913.5,344.2 914,343.8 914.5,343.3 915,342.8 915.5,343.1 916,343.4 916.5,343.6 917,343.5 917.5,343.4 918,343.2 918.5,342.3 919,341.5 919.5,341.4 920,342.1 920.5,342.8 921,342.7 921.5,342.6 922,342.5 922.5,342 923,341.4 923.5,340.9 924,341.8 924.5,342.4 925,342.9 925.5,343.2 926,343.6 926.5,343.7 927,343.6 927.5,343.4 928,343.4 928.5,343.5 929,343.6 929.5,343.6 930,343.6 930.5,343.5 931,343.3 931.5,343.1 932,343 932.5,343.1 933,343.3 933.5,343.3 934,343.3 934.5,343.3 935,343.2 935.5,343 936,342.8 936.5,342.9 937,343 937.5,343.1 938,343 938.5,343 939,342.9 939.5,342.7 940,342.4 940.5,342.4 941,342.6 941.5,342.7 942,342.7 942.5,342.7 943,342.7 943.5,342.6 944,342.5 944.5,342.3 945,342.3 945.5,342.1 946,341.9 946.5,341.6 946.5,345.6 946,345.4 945.5,345.4 945,345.5 944.5,345.7 944,345.7 943.5,345.8 943,346 942.5,346.3 942,346.2 941.5,346 941,345.9 940.5,345.9 940,346 939.5,346 939,346.2 938.5,346.3 938,346.4 937.5,346.3 937,346.2 936.5,346.2 936,346.3 935.5,346.3 935,346.4 934.5,346.6 934,346.8 933.5,346.7 933,346.6 932.5,346.5 932,346.5 931.5,346.6 931,346.6 930.5,346.7 930,346.9 929.5,346.9 929,346.9 928.5,346.8 928,346.8 927.5,346.8 927,346.9 926.5,347 926,347.2 925.5,347.4 925,346.8 924.5,346 924,345.6 923.5,346.1 923,346.2 922.5,346.5 922,347 921.5,347.6 921,347.6 920.5,347.3 920,347.1 919.5,347.2 919,347.4 918.5,347.5 918,347.9 917.5,348.4 917,348.7 916.5,348.5 916,348.3 915.5,348.3 915,348.5 914.5,348.6 914,349.1 913.5,350 913,351 912.5,350.6 912,349.9 911.5,349.4 911,349.5 910.5,349.6 910,349.7 909.5,350.4 909,351.1 908.5,351.3 908,350.9 907.5,350.3 907,350.3 906.5,350.4 906,350.5 905.5,350.8 905,351.2 904.5,351.5 904,351.3 903.5,351 903,350.9 902.5,350.9 902,350.9 901.5,351.1 901,351.8 900.5,352.5 900,352.4 899.5,351.7 899,351.1 898.5,351.1 898,351.1 897.5,351.1 897,351.7 896.5,352.5 896,353 895.5,352.2 895,351.3 894.5,350.9 894,350.9 893.5,350.8 893,351 892.5,351.6 892,352.2 891.5,351.8 891,351.1 890.5,350.5 890,350.4 889.5,350.3 889,350.2 888.5,350.7 888,351.3 887.5,351.4 887,350.6 886.5,349.8 886,349.5 885.5,349.4 885,349.3 884.5,349.6 884,350.2 883.5,350.8 883,349.9 882.5,349 882,348.3 881.5,348.2 881,348 880.5,347.8 880,348 879.5,348.1 879,347.8 878.5,347.2 878,346.6 877.5,346.1 877,346.3 876.5,346.5 876,347 875.5,347.5 875,347.8 874.5,347.7 874,347.6 873.5,347.5 873,347.5 872.5,347.5 872,347.6 871.5,347.7 871,347.9 870.5,347.9 870,347.7 869.5,347.6 869,347.6 868.5,347.6 868,347.6 867.5,347.7 867,347.8 866.5,347.8 866,347.8 865.5,347.7 865,347.6 864.5,347.6 864,347.7 863.5,347.7 863,347.9 862.5,348 862,347.9 861.5,347.8 861,347.7 860.5,347.7 860,347.7 859.5,347.8 859,348 858.5,348.2 858,348.3 857.5,348 857,347.8 856.5,347.8 856,347.7 855.5,347.4 855,347.3 854.5,347.4 854,347.7 853.5,347.5 853,347.1 852.5,347 852,347.1 851.5,347.2 851,347.5 850.5,348.2 850,348.9 849.5,348.8 849,348.4 848.5,348 848,348.1 847.5,348.2 847,348.3 846.5,348.9 846,349.6 845.5,350 845,349.6 844.5,349.1 844,349 843.5,349.1 843,349.2 842.5,349.6 842,350.5 841.5,351.4 841,351 840.5,350.4 840,349.8 839.5,349.9 839,350 838.5,350.1 838,350.6 837.5,351.1 837,351.3 836.5,350.9 836,350.6 835.5,350.5 835,350.6 834.5,350.7 834,351 833.5,351.4 833,351.9 832.5,351.6 832,351.2 831.5,350.9 831,350.9 830.5,351 830,351.1 829.5,351.5 829,352 828.5,352 828,351.5 827.5,351 827,351 826.5,351 826,351 825.5,351.4 825,352 824.5,352.5 824,351.8 823.5,351.1 823,350.8 822.5,350.7 822,350.7 821.5,350.7 821,350.9 820.5,351.2 820,351 819.5,350.6 819,350.2 818.5,350.1 818,350 817.5,349.9 817,350 816.5,350.1 816,350.1 815.5,349.7 815,349.3 814.5,349.1 814,349 813.5,348.8 813,348.9 812.5,349.1 812,349.3 811.5,348.8 811,348.2 810.5,347.8 810,347.5 809.5,347.3 809,347.1 808.5,347.4 808,347.6 807.5,346.9 807,346.5 806.5,346.2 806,346.4 805.5,346.6 805,346.9 804.5,347.2 804,347.5 803.5,347.6 803,347.5 802.5,347.4 802,347.3 801.5,347.3 801,347.3 800.5,347.4 800,347.6 799.5,347.8 799,347.8 798.5,347.6 798,347.4 797.5,347.4 797,347.4 796.5,347.4 796,347.5 795.5,347.6 795,347.6 794.5,347.5 794,347.5 793.5,347.5 793,347.5 792.5,347.5 792,347.6 791.5,347.7 791,347.9 790.5,347.8 790,347.6 789.5,347.5 789,347.5 788.5,347.5 788,347.6 787.5,347.8 787,348 786.5,348.1 786,347.8 785.5,347.4 785,347 784.5,346.7 784,346.3 783.5,346.5 783,347.6 782.5,348.4 782,347.9 781.5,347.3 781,347.1 780.5,347.2 780,347.3 779.5,347.5 779,348.1 778.5,348.7 778,348.7 777.5,348.4 777,348.1 776.5,348.2 776,348.3 775.5,348.4 775,348.9 774.5,349.4 774,349.8 773.5,349.5 773,349.2 772.5,349.1 772,349.2 771.5,349.3 771,349.7 770.5,350.4 770,351.1 769.5,350.9 769,350.3 768.5,349.9 768,350 767.5,350.1 767,350.2 766.5,350.7 766,351.4 765.5,351.6 765,351.1 764.5,350.6 764,350.6 763.5,350.6 763,350.7 762.5,351 762,351.5 761.5,352 761,351.6 760.5,351.2 760,350.9 759.5,350.9 759,350.9 758.5,351 758,351.5 757.5,352 757,352 756.5,351.5 756,350.9 755.5,350.9 755,350.9 754.5,350.8 754,351 753.5,351.2 753,351.4 752.5,351.1 752,350.7 751.5,350.5 751,350.5 750.5,350.4 750,350.5 749.5,351.2 749,351.8 748.5,351.4 748,350.6 747.5,349.8 747,349.7 746.5,349.6 746,349.5 745.5,350 745,350.6 744.5,350.7 744,349.9 743.5,349 743,348.6 742.5,348.5 742,348.3 741.5,348.3 741,348.5 740.5,348.7 740,348.2 739.5,347.6 739,347.1 738.5,346.8 738,346.6 737.5,346.3 737,346 736.5,346.4 736,346.6 735.5,346.5 735,346.6 734.5,346.8 734,347 733.5,347.1 733,347.2 732.5,347.3 732,347.4 731.5,347.3 731,347.2 730.5,347.1 730,347.1 729.5,347.1 729,347.2 728.5,347.4 728,347.6 727.5,347.6 727,347.4 726.5,347.2 726,347.2 725.5,347.2 725,347.2 724.5,347.4 724,347.6 723.5,347.8 723,347.6 722.5,347.4 722,347.3 721.5,347.3 721,347.3 720.5,347.4 720,347.5 719.5,347.6 719,347.6 718.5,347.5 718,347.4 717.5,347.4 717,347.4 716.5,347.4 716,347.6 715.5,347.8 715,347.7 714.5,347.2 714,346.5 713.5,346.1 713,346 712.5,346.4 712,346.9 711.5,347.5 711,348.1 710.5,347.8 710,347.5 709.5,347.3 709,347.4 708.5,347.6 708,347.8 707.5,348.4 707,348.9 706.5,349 706,348.7 705.5,348.4 705,348.5 704.5,348.7 704,348.8 703.5,349.3 703,349.9 702.5,350.3 702,350 701.5,349.6 701,349.5 700.5,349.6 700,349.7 699.5,350 699,350.7 698.5,351.4 698,351.2 697.5,350.8 697,350.3 696.5,350.4 696,350.5 695.5,350.6 695,351 694.5,351.3 694,351.5 693.5,351.3 693,351 692.5,351 692,351 691.5,351.1 691,351.3 690.5,351.6 690,351.9 689.5,351.7 689,351.4 688.5,351.3 688,351.3 687.5,351.3 687,351.3 686.5,351.9 686,352.5 685.5,352.5 685,351.9 684.5,351.3 684,351.2 683.5,351.1 683,351.1 682.5,351.5 682,352 681.5,352.5 681,351.8 680.5,351.1 680,350.7 679.5,350.6 679,350.5 678.5,350.6 678,351.3 677.5,352 677,351.7 676.5,350.7 676,349.9 675.5,349.7 675,349.6 674.5,349.4 674,349.7 673.5,350 673,350 672.5,349.4 672,348.7 671.5,348.4 671,348.2 670.5,348 670,348.1 669.5,348.5 669,348.9 668.5,348.2 668,347.3 667.5,346.5 667,346.1 666.5,345.7 666,345.9 665.5,346.4 665,346.8 664.5,347 664,347 663.5,347 663,347.1 662.5,347.1 662,347.1 661.5,347.2 661,347.5 660.5,347.7 660,347.5 659.5,347.3 659,347.2 658.5,347.2 658,347.2 657.5,347.2 657,347.3 656.5,347.4 656,347.4 655.5,347.4 655,347.3 654.5,347.3 654,347.3 653.5,347.3 653,347.4 652.5,347.6 652,347.7 651.5,347.6 651,347.4 650.5,347.4 650,347.4 649.5,347.4 649,347.5 648.5,347.7 648,347.9 647.5,347.8 647,347.6 646.5,347.5 646,347.5 645.5,347.5 645,347.4 644.5,347.3 644,347.3 643.5,347.2 643,346.7 642.5,346.6 642,346.6 641.5,346.8 641,346.9 640.5,347.2 640,347.7 639.5,348.2 639,348.1 638.5,347.8 638,347.7 637.5,347.8 637,348 636.5,348.2 636,349.1 635.5,350 635,350.1 634.5,349.4 634,348.8 633.5,348.8 633,349 632.5,349.1 632,349.8 631.5,350.7 631,351.5 630.5,350.8 630,350.1 629.5,349.7 629,349.8 628.5,349.9 628,350.2 627.5,350.9 627,351.6 626.5,351.4 626,350.9 625.5,350.4 625,350.5 624.5,350.6 624,350.7 623.5,351.4 623,352.3 622.5,352.7 622,352 621.5,351.2 621,351 620.5,351 620,351.1 619.5,351.5 619,352.3 618.5,353.2 618,352.6 617.5,351.8 617,351.2 616.5,351.2 616,351.2 615.5,351.2 615,352 614.5,352.8 614,352.8 613.5,352 613,351.2 612.5,351 612,351 611.5,350.9 611,351 610.5,351.2 610,351.4 609.5,351.1 609,350.7 608.5,350.5 608,350.4 607.5,350.3 607,350.3 606.5,350.6 606,350.9 605.5,350.7 605,350.1 604.5,349.6 604,349.5 603.5,349.3 603,349.2 602.5,349.5 602,349.9 601.5,350 601,349.3 600.5,348.5 600,348.1 599.5,347.9 599,347.7 598.5,347.7 598,347.8 597.5,348 597,347.5 596.5,346.4 596,346.2 595.5,346.4 595,346.6 594.5,346.9 594,347.3 593.5,347.6 593,347.7 592.5,347.6 592,347.5 591.5,347.5 591,347.5 590.5,347.6 590,347.6 589.5,347.8 589,347.9 588.5,347.8 588,347.7 587.5,347.6 587,347.7 586.5,347.7 586,347.7 585.5,347.9 585,348.1 584.5,348.1 584,348 583.5,347.8 583,347.8 582.5,347.8 582,347.8 581.5,347.9 581,348.1 580.5,348.2 580,348.1 579.5,347.9 579,347.9 578.5,347.9 578,347.9 577.5,348 577,348.1 576.5,348.2 576,348.2 575.5,348.1 575,347.9 574.5,347.7 574,347.4 573.5,347 573,347.2 572.5,347.7 572,348.4 571.5,347.9 571,347.5 570.5,347.4 570,347.6 569.5,347.7 569,348.1 568.5,348.8 568,349.4 567.5,349.2 567,348.7 566.5,348.5 566,348.6 565.5,348.7 565,348.9 564.5,349.3 564,349.8 563.5,350 563,349.7 562.5,349.5 562,349.6 561.5,349.7 561,349.8 560.5,350.1 560,350.5 559.5,350.8 559,350.6 558.5,350.4 558,350.4 557.5,350.5 557,350.6 556.5,350.8 556,351.5 555.5,352.2 555,352.1 554.5,351.6 554,351 553.5,351.1 553,351.2 552.5,351.2 552,351.7 551.5,352.2 551,352.5 550.5,352.1 550,351.6 549.5,351.5 549,351.5 548.5,351.5 548,351.8 547.5,352.4 547,353.1 546.5,352.7 546,352.1 545.5,351.6 545,351.6 544.5,351.6 544,351.5 543.5,352 543,352.4 542.5,352.4 542,351.9 541.5,351.4 541,351.3 540.5,351.2 540,351.2 539.5,351.4 539,351.7 538.5,352 538,351.5 537.5,351 537,350.7 536.5,350.6 536,350.5 535.5,350.5 535,350.8 534.5,351.1 534,350.9 533.5,350.3 533,349.7 532.5,349.6 532,349.4 531.5,349.3 531,349.6 530.5,350 530,350.3 529.5,349.4 529,348.6 528.5,348.1 528,347.9 527.5,347.7 527,347.7 526.5,348 526,348.2 525.5,348 525,347.5 524.5,347.3 524,347.6 523.5,347.8 523,348 522.5,348.2 522,348.3 521.5,348.4 521,348.3 520.5,348.2 520,348.1 519.5,348.1 519,348.2 518.5,348.3 518,348.4 517.5,348.6 517,348.5 516.5,348.3 516,348.2 515.5,348.3 515,348.3 514.5,348.3 514,348.4 513.5,348.6 513,348.6 512.5,348.5 512,348.4 511.5,348.4 511,348.4 510.5,348.4 510,348.5 509.5,348.7 509,348.9 508.5,348.7 508,348.6 507.5,348.5 507,348.5 506.5,348.5 506,348.6 505.5,348.7 505,348.8 504.5,348.6 504,348.3 503.5,347.8 503,347.5 502.5,347.2 502,347.5 501.5,348 501,348.5 500.5,348.8 500,348.6 499.5,348.4 499,348.4 498.5,348.5 498,348.7 497.5,349 497,349.6 496.5,350.1 496,350 495.5,349.7 495,349.5 494.5,349.7 494,349.8 493.5,350 493,350.5 492.5,351.1 492,351.2 491.5,351 491,350.6 490.5,350.7 490,350.8 489.5,350.9 489,351.3 488.5,351.7 488,352.1 487.5,351.9 487,351.7 486.5,351.6 486,351.7 485.5,351.7 485,352 484.5,352.8 484,353.7 483.5,353.6 483,352.9 482.5,352.2 482,352.3 481.5,352.3 481,352.4 480.5,352.7 480,353.1 479.5,353.3 479,353 478.5,352.7 478,352.6 477.5,352.6 477,352.6 476.5,352.9 476,353.6 475.5,354.2 475,353.8 474.5,353.2 474,352.6 473.5,352.6 473,352.5 472.5,352.5 472,353.1 471.5,353.7 471,353.8 470.5,353.1 470,352.4 469.5,352.2 469,352.1 468.5,352 468,352.1 467.5,352.3 467,352.5 466.5,352.1 466,351.7 465.5,351.4 465,351.2 464.5,351.1 464,351 463.5,351.5 463,352 462.5,351.8 462,351 461.5,350.2 461,349.9 460.5,349.8 460,349.6 459.5,349.5 459,349.6 458.5,349.6 458,349.1 457.5,348.5 457,348.1 456.5,347.8 456,347.1 455.5,347.3 455,347.7 454.5,348.2 454,348.3 453.5,348.3 453,348.3 452.5,348.5 452,348.5 451.5,348.5 451,348.7 450.5,348.9 450,349 449.5,348.8 449,348.6 448.5,348.6 448,348.6 447.5,348.6 447,348.7 446.5,348.8 446,349 445.5,348.9 445,348.8 444.5,348.7 444,348.7 443.5,348.7 443,348.7 442.5,348.9 442,349.1 441.5,349.1 441,348.9 440.5,348.8 440,348.8 439.5,348.8 439,348.8 438.5,348.9 438,349 437.5,349.1 437,349 436.5,348.9 436,348.9 435.5,348.9 435,348.9 434.5,349 434,349.1 433.5,349.3 433,349 432.5,348.3 432,347.5 431.5,347.9 431,347.9 430.5,348 430,348.4 429.5,349 429,349.3 428.5,348.9 428,348.4 427.5,348.2 427,348.3 426.5,348.3 426,348.6 425.5,349.1 425,349.7 424.5,349.4 424,349 423.5,348.6 423,348.6 422.5,348.7 422,348.7 421.5,349.4 421,350 420.5,350.2 420,349.6 419.5,349 419,348.9 418.5,349 418,349 417.5,349.5 417,350.3 416.5,351.1 416,350.4 415.5,349.6 415,349.2 414.5,349.2 414,349.2 413.5,349.3 413,350 412.5,350.7 412,350.7 411.5,350 411,349.3 410.5,349.3 410,349.3 409.5,349.3 409,349.6 408.5,350 408,350.3 407.5,349.9 407,349.5 406.5,349.3 406,349.3 405.5,349.3 405,349.5 404.5,350.1 404,350.6 403.5,350.3 403,349.8 402.5,349.3 402,349.2 401.5,349.2 401,349.2 400.5,349.7 400,350.2 399.5,350.3 399,349.8 398.5,349.2 398,349 397.5,349 397,349 396.5,349.1 396,349.4 395.5,349.7 395,349.3 394.5,349 394,348.7 393.5,348.7 393,348.6 392.5,348.6 392,348.9 391.5,349.2 391,349.1 390.5,348.7 390,348.3 389.5,348.2 389,348.2 388.5,348.1 388,348.5 387.5,349 387,349.4 386.5,348.7 386,348 385.5,347.4 385,347.5 384.5,347.7 384,348 383.5,348.5 383,348.9 382.5,349 382,348.9 381.5,348.7 381,348.7 380.5,348.8 380,348.8 379.5,348.9 379,349.1 378.5,349.1 378,349 377.5,348.9 377,348.8 376.5,348.8 376,348.9 375.5,348.9 375,349 374.5,349.1 374,349.1 373.5,349 373,348.9 372.5,348.9 372,349 371.5,349 371,349.2 370.5,349.4 370,349.5 369.5,349.3 369,349.1 368.5,349 368,349 367.5,349.1 367,349.2 366.5,349.3 366,349.5 365.5,349.4 365,349.2 364.5,349.1 364,349.1 363.5,348.8 363,348.5 362.5,348.3 362,348.3 361.5,348.2 361,348.4 360.5,348.3 360,348.5 359.5,348.6 359,348.7 358.5,349.4 358,350.3 357.5,350.9 357,350.3 356.5,349.7 356,349.5 355.5,349.7 355,349.8 354.5,350.1 354,350.6 353.5,351.1 353,351 352.5,350.7 352,350.5 351.5,350.7 351,350.8 350.5,350.9 350,351.6 349.5,352.3 349,352.6 348.5,352.1 348,351.6 347.5,351.5 347,351.6 346.5,351.7 346,352 345.5,352.5 345,353 344.5,352.7 344,352.4 343.5,352.2 343,352.3 342.5,352.3 342,352.5 341.5,352.9 341,353.4 340.5,353.4 340,353 339.5,352.7 339,352.7 338.5,352.7 338,352.7 337.5,353.3 337,354.1 336.5,354.7 336,354 335.5,353.2 335,352.8 334.5,352.8 334,352.8 333.5,353 333,353.9 332.5,354.7 332,354.3 331.5,353.4 331,352.6 330.5,352.5 330,352.5 329.5,352.4 329,353 328.5,353.7 328,353.9 327.5,353 327,352.2 326.5,351.9 326,351.8 325.5,351.7 325,351.9 324.5,352.6 324,353.2 323.5,352.5 323,351.6 322.5,350.9 322,350.8 321.5,350.6 321,350.5 320.5,350.6 320,350.8 319.5,350.6 319,350.1 318.5,349.5 318,349.3 317.5,349 317,348.8 316.5,348.9 316,349.1 315.5,349.1 315,348.3 314.5,348 314,348 313.5,348.2 313,348.5 312.5,348.7 312,349 311.5,349.2 311,349.2 310.5,349.1 310,348.9 309.5,349 309,349 308.5,349 308,349.1 307.5,349.2 307,349.3 306.5,349.2 306,349.1 305.5,349 305,349.1 304.5,349.1 304,349.1 303.5,349.2 303,349.3 302.5,349.2 302,349.2 301.5,349.1 301,349.1 300.5,349.2 300,349.2 299.5,349.4 299,349.6 298.5,349.7 298,349.5 297.5,349.3 297,349.2 296.5,349.2 296,349.3 295.5,349.4 295,349.6 294.5,349.8 294,349.6 293.5,349.3 293,348.8 292.5,348.5 292,348.1 291.5,348 291,348.8 290.5,349.4 290,349.4 289.5,349.1 289,348.8 288.5,348.9 288,349 287.5,349.1 287,349.8 286.5,350.6 286,351.3 285.5,350.6 285,350 284.5,349.8 284,349.9 283.5,350 283,350.4 282.5,351.3 282,352.2 281.5,351.9 281,351.2 280.5,350.6 280,350.7 279.5,350.8 279,350.9 278.5,351.6 278,352.4 277.5,352.7 277,352.1 276.5,351.6 276,351.5 275.5,351.5 275,351.6 274.5,352.1 274,352.9 273.5,353.8 273,353.2 272.5,352.5 272,352 271.5,352 271,352.1 270.5,352.2 270,352.9 269.5,353.7 269,353.7 268.5,353 268,352.4 267.5,352.3 267,352.3 266.5,352.3 266,352.6 265.5,353 265,353.3 264.5,352.9 264,352.5 263.5,352.3 263,352.3 262.5,352.3 262,352.3 261.5,352.5 261,352.8 260.5,352.6 260,352.3 259.5,352 259,351.9 258.5,351.9 258,351.8 257.5,352.1 257,352.3 256.5,352.4 256,352 255.5,351.5 255,351.3 254.5,351.2 254,351.1 253.5,351.1 253,351.4 252.5,351.6 252,351.2 251.5,350.7 251,350.3 250.5,350.2 250,350 249.5,349.9 249,349.9 248.5,350 248,349.9 247.5,349.4 247,349 246.5,348.7 246,348.5 245.5,348.2 245,348 244.5,348.6 244,349.2 243.5,348.8 243,348.6 242.5,348.7 242,348.9 241.5,349 241,349.1 240.5,349.2 240,349.4 239.5,349.4 239,349.2 238.5,349.1 238,349.1 237.5,349.1 237,349.1 236.5,349.2 236,349.4 235.5,349.4 235,349.3 234.5,349.2 234,349.2 233.5,349.2 233,349.2 232.5,349.3 232,349.4 231.5,349.6 231,349.5 230.5,349.4 230,349.3 229.5,349.3 229,349.3 228.5,349.3 228,349.4 227.5,349.6 227,349.6 226.5,349.5 226,349.4 225.5,349.4 225,349.4 224.5,349.4 224,349.5 223.5,349.6 223,349.6 222.5,349.2 222,348.6 221.5,348.1 221,348 220.5,348.4 220,348.6 219.5,349.3 219,350 218.5,350.1 218,349.6 217.5,349.1 217,349.2 216.5,349.3 216,349.4 215.5,349.8 215,350.3 214.5,350.8 214,350.5 213.5,350.1 213,350 212.5,350.1 212,350.2 211.5,350.5 211,351.4 210.5,352.2 210,352 209.5,351.4 209,350.8 208.5,350.9 208,351 207.5,351 207,351.8 206.5,352.7 206,353.1 205.5,352.4 205,351.7 204.5,351.5 204,351.6 203.5,351.6 203,351.9 202.5,352.5 202,353.1 201.5,352.8 201,352.3 200.5,351.9 200,352 199.5,352 199,352 198.5,352.4 198,352.7 197.5,352.8 197,352.5 196.5,352.2 196,352.1 195.5,352.1 195,352.1 194.5,352.6 194,353.3 193.5,354 193,353.2 192.5,352.5 192,352 191.5,352 191,352 190.5,352.1 190,352.9 189.5,353.6 189,353.3 188.5,352.5 188,351.7 187.5,351.6 187,351.5 186.5,351.4 186,351.7 185.5,352 185,352.1 184.5,351.6 184,351.1 183.5,350.9 183,350.8 182.5,350.7 182,350.6 181.5,350.8 181,351 180.5,350.6 180,350.2 179.5,349.8 179,349.7 178.5,349.5 178,349.4 177.5,349.6 177,349.9 176.5,349.8 176,349.1 175.5,348.5 175,348.1 174.5,347.7 174,347.8 173.5,348.3 173,349 172.5,349.5 172,349.3 171.5,349.1 171,349 170.5,349 170,349 169.5,349.1 169,349.2 168.5,349.2 168,349.2 167.5,349.2 167,349.1 166.5,349.1 166,349.1 165.5,349.1 165,349.2 164.5,349.4 164,349.4 163.5,349.3 163,349.2 162.5,349.2 162,349.2 161.5,349.2 161,349.3 160.5,349.5 160,349.8 159.5,349.7 159,349.5 158.5,349.3 158,349.3 157.5,349.3 157,349.3 156.5,349.5 156,349.7 155.5,349.8 155,349.6 154.5,349.4 154,349.3 153.5,349.4 153,349.2 152.5,349.1 152,349.2 151.5,349.5 151,348.9 150.5,348.7 150,348.4 149.5,348.6 149,348.7 148.5,348.9 148,349.3 147.5,349.8 147,350 146.5,349.8 146,349.5 145.5,349.6 145,349.8 144.5,349.9 144,350.4 143.5,351.2 143,351.8 142.5,351.3 142,350.9 141.5,350.7 141,350.8 140.5,350.9 140,351.2 139.5,351.9 139,352.7 138.5,352.6 138,352.1 137.5,351.6 137,351.7 136.5,351.8 136,351.8 135.5,352.5 135,353.2 134.5,353.6 134,353 133.5,352.5 133,352.3 132.5,352.4 132,352.5 131.5,352.9 131,353.8 130.5,354.7 130,354.2 129.5,353.4 129,352.8 128.5,352.8 128,352.9 127.5,352.9 127,353.6 126.5,354.3 126,354.4 125.5,353.8 125,353.1 124.5,353 124,353 123.5,352.9 123,353.5 122.5,354.3 122,355.1 121.5,354.2 121,353.3 120.5,352.8 120,352.7 119.5,352.7 119,352.8 118.5,353.5 118,354.2 117.5,354 117,353.1 116.5,352.2 116,352.1 115.5,352 115,351.9 114.5,352.1 114,352.3 113.5,352.4 113,351.9 112.5,351.4 112,351.1 111.5,351 111,350.8 110.5,350.8 110,351 109.5,351.2 109,350.8 108.5,350.2 108,349.7 107.5,349.5 107,349.3 106.5,349 106,349.4 105.5,349.8 105,349.6 104.5,348.3 104,347.8 103.5,347.8 103,348 102.5,348.3 102,348.7 101.5,349.1 101,349.4 100.5,349.3 100,349.1 99.5,348.9 99,348.9 98.5,348.9 98,349 97.5,349.2 97,349.4 96.5,349.4 96,349.2 95.5,349 95,349 94.5,349 94,349 93.5,349.2 93,349.4 92.5,349.6 92,349.4 91.5,349.2 91,349.1 90.5,349.1 90,349.1 89.5,349.2 89,349.4 88.5,349.5 88,349.5 87.5,349.3 87,349.2 86.5,349.2 86,349.2 85.5,349.2 85,349.4 84.5,349.6 84,349.8 83.5,349.5 83,349.3 82.5,349 82,348.7 81.5,348.3 81,348.3 80.5,348.7 80,349.8 79.5,349.5 79,348.9 78.5,348.5 78,348.6 77.5,348.8 77,348.9 76.5,349.2 76,349.6 75.5,349.8 75,349.6 74.5,349.5 74,349.5 73.5,349.6 73,349.7 72.5,350.2 72,350.8 71.5,351.4 71,351 70.5,350.5 70,350.3 69.5,350.4 69,350.5 68.5,350.8 68,351.4 67.5,352.1 67,352 66.5,351.5 66,351 65.5,351.1 65,351.2 64.5,351.3 64,351.9 63.5,352.6 63,353.1 62.5,352.5 62,351.9 61.5,351.6 61,351.7 60.5,351.7 60,352 59.5,352.5 59,353 58.5,352.7 58,352.3 57.5,351.9 57,352 56.5,352 56,352 55.5,352.6 55,353.2 54.5,353.3 54,352.7 53.5,352.1 53,352 52.5,351.9 52,351.9 51.5,352.4 51,353.2 50.5,353.9 50,353.1 49.5,352.3 49,351.7 48.5,351.6 48,351.6 47.5,351.6 47,352.1 46.5,352.6 46,352.4 45.5,351.8 45,351.1 44.5,351 44,350.9 43.5,350.8 43,351.3 42.5,351.9 42,352.3 41.5,351.4 41,350.5 40.5,350.1 40,349.9 39.5,349.8 39,349.9 38.5,350.5 38,351 37.5,350.5 37,349.6 36.5,348.8 36,348.6 35.5,348.4 35,348.1 34.5,348.4 34,348.4 33.5,348.7 33,348.3 32.5,348.1 32,348.2 31.5,348.4 31,348.6 30.5,348.8 30,349.1" fill="#ff0000"/>
<polygon clip-path="url(#a2)" points="30,550.8 30.5,550.8 31,550.6 31.5,550.5 32,550.6 32.5,550.7 33,550.8 33.5,550.8 34,550.8 34.5,550.8 35,550.7 35.5,550.7 36,550.7 36.5,550.8 37,551 37.5,551.2 38,551.3 38.5,551.3 39,550.8 39.5,550.1 40,549.5 40.5,550.2 41,550.9 41.5,551.3 42,551.3 42.5,551.3 43,551.1 43.5,550.3 44,549.6 44.5,549.8 45,550.5 45.5,551 46,550.5 46.5,549.9 47,549.7 47.5,549.5 48,549.4 48.5,549.3 49,549.5 49.5,549.6 50,549.7 50.5,549.7 51,549.7 51.5,549.6 52,549.5 52.5,549.3 53,549.4 53.5,549.6 54,549.7 54.5,549.7 55,549.7 55.5,549.9 56,550.2 56.5,550.3 57,550.5 57.5,550.9 58,551.3 58.5,551.4 59,551.5 59.5,551.6 60,551.4 60.5,550.8 61,550.2 61.5,550.9 62,551.6 62.5,551.9 63,551.9 63.5,551.9 64,551.8 64.5,551.2 65,550.6 65.5,550.7 66,551.3 66.5,551.9 67,551.9 67.5,551.9 68,551.8 68.5,551.4 69,550.9 69.5,550.6 70,551.1 70.5,551.6 71,551.8 71.5,551.8 72,551.8 72.5,551.5 73,550.8 73.5,550.2 74,550.5 74.5,551.1 75,551.7 75.5,551.7 76,551.6 76.5,551.5 77,550.8 77.5,550.1 78,549.7 78.5,550 79,550.4 79.5,550.4 80,550.3 80.5,550.4 81,550 81.5,549.2 82,548.4 82.5,549.5 83,550.6 83.5,551.4 84,551.5 84.5,551.5 85,551.4 85.5,550.5 86,549.6 86.5,549.6 87,550.5 87.5,551.4 88,551.5 88.5,551.5 89,551.5 89.5,551 90,550.4 90.5,549.9 91,550.5 91.5,551.1 92,551.4 92.5,551.4 93,551.4 93.5,551.1 94,550.1 94.5,549.1 95,549.4 95.5,550.5 96,551.4 96.5,551.4 97,551.4 97.5,551.4 98,550.8 98.5,550.2 99,549.9 99.5,550.5 100,551.1 100.5,551.4 101,551.3 101.5,551.3 102,550.9 102.5,550 103,549.1 103.5,549.7 104,550.6 104.5,551.3 105,551.3 105.5,551.3 106,551.3 106.5,550.6 107,550 107.5,549.9 108,550.6 108.5,551.2 109,551.3 109.5,551.3 110,551.3 110.5,550.6 111,549.6 111.5,548.6 112,549.7 112.5,550.7 113,551.3 113.5,551.3 114,551.3 114.5,551.2 115,550.5 115.5,549.9 116,550.1 116.5,550.7 117,551.3 117.5,551.3 118,551.3 118.5,551.3 119,550.7 119.5,550 120,549.6 120.5,550.3 121,551 121.5,551.3 122,551.3 122.5,551.3 123,551 123.5,550.3 124,549.6 124.5,550 125,550.7 125.5,551.3 126,551.4 126.5,551.4 127,551.4 127.5,550.9 128,550.4 128.5,550.3 129,550.8 129.5,551.3 130,551.4 130.5,551.4 131,551.4 131.5,551 132,550.4 132.5,549.8 133,550.4 133.5,551 134,551.4 134.5,551.4 135,551.4 135.5,551.3 136,550.2 136.5,549.2 137,549.3 137.5,550.4 138,551.4 138.5,551.5 139,551.5 139.5,551.5 140,551.3 140.5,550.9 141,550.7 141.5,551 142,551.4 142.5,551.5 143,551.5 143.5,551.5 144,551.2 144.5,550.3 145,549.4 145.5,549.7 146,550.7 146.5,551.4 147,551.4 147.5,551.2 148,551 148.5,550.1 149,549.1 149.5,548.6 150,549.3 150.5,550.1 151,550.4 151.5,550.6 152,550.8 152.5,550.6 153,550 153.5,549.2 154,550 154.5,551 155,551.6 155.5,551.7 156,551.7 156.5,551.6 157,551.1 157.5,550.6 158,550.6 158.5,551.1 159,551.6 159.5,551.7 160,551.7 160.5,551.7 161,551.2 161.5,550.5 162,549.8 162.5,550.6 163,551.3 163.5,551.8 164,551.8 164.5,551.8 165,551.6 165.5,551.2 166,550.7 166.5,550.8 167,551.3 167.5,551.8 168,551.8 168.5,551.8 169,551.8 169.5,551 170,550.1 170.5,549.6 171,550.5 171.5,551.5 172,551.8 172.5,551.8 173,551.8 173.5,551.5 174,550.9 174.5,550.2 175,550.6 175.5,551.3 176,551.8 176.5,551.8 177,551.8 177.5,551.8 178,551 178.5,550.3 179,550.2 179.5,550.9 180,551.7 180.5,551.8 181,551.8 181.5,551.8 182,551.5 182.5,550.9 183,550.4 183.5,550.9 184,551.5 184.5,551.8 185,551.8 185.5,551.8 186,551.7 186.5,551.3 187,550.8 187.5,550.9 188,551.3 188.5,551.8 189,551.8 189.5,551.8 190,551.8 190.5,551 191,550 191.5,549.4 192,550.3 192.5,551.3 193,551.7 193.5,551.7 194,551.7 194.5,551.4 195,550.6 195.5,549.8 196,550.2 196.5,551 197,551.7 197.5,551.7 198,551.7 198.5,551.7 199,550.9 199.5,550 200,549.7 200.5,550.6 201,551.4 201.5,551.6 202,551.6 202.5,551.6 203,551.3 203.5,550.8 204,550.3 204.5,550.7 205,551.2 205.5,551.6 206,551.6 206.5,551.6 207,551.5 207.5,551 208,550.5 208.5,550.5 209,551 209.5,551.5 210,551.5 210.5,551.5 211,551.5 211.5,551.2 212,550.7 212.5,550.4 213,550.8 213.5,551.2 214,551.4 214.5,551.4 215,551.4 215.5,551.1 216,550.2 216.5,549.3 217,549.5 217.5,550.3 218,550.9 218.5,550.7 219,550.5 219.5,550.3 220,549.8 220.5,549.4 221,549.2 221.5,549.7 222,550.2 222.5,550.6 223,550.8 223.5,550.9 224,550.8 224.5,550.4 225,549.9 225.5,550.3 226,550.8 226.5,551.2 227,551.2 227.5,551.2 228,551.2 228.5,550.6 229,550.1 229.5,550 230,550.6 230.5,551.1 231,551.2 231.5,551.2 232,551.2 232.5,550.7 233,549.9 233.5,549.2 234,549.9 234.5,550.7 235,551.1 235.5,551.1 236,551.1 236.5,551 237,550.7 237.5,550.3 238,550.4 238.5,550.7 239,551.1 239.5,551.1 240,551.1 240.5,551.1 241,550.4 241.5,549.6 242,549 242.5,549.9 243,550.7 243.5,551 244,551 244.5,551 245,550.7 245.5,549.7 246,548.8 246.5,549.3 247,550.2 247.5,551 248,551 248.5,551 249,551 249.5,550 250,549 250.5,548.7 251,549.7 251.5,550.8 252,551 252.5,551 253,551 253.5,550.6 254,550 254.5,549.4 255,549.9 255.5,550.6 256,551 256.5,551 257,551 257.5,550.9 258,549.9 258.5,548.9 259,549 259.5,550 260,551 260.5,551 261,551 261.5,551 262,550.8 262.5,550.4 263,550.2 263.5,550.5 264,550.9 264.5,551 265,551 265.5,551.1 266,550.8 266.5,550.1 267,549.3 267.5,549.7 268,550.4 268.5,551.4 269,552.2 269.5,553 270,553.4 270.5,553.2 271,553.1 271.5,553 272,553.2 272.5,553.3 273,553.4 273.5,553.4 274,553.4 274.5,553.3 275,553.2 275.5,553.1 276,553.2 276.5,553.3 277,553.4 277.5,553.4 278,553.4 278.5,553.4 279,553.3 279.5,553.2 280,553.2 280.5,553.3 281,553.4 281.5,553.4 282,553.4 282.5,553.4 283,553.3 283.5,553.1 284,552.9 284.5,553.1 285,553.3 285.5,553.4 286,553.4 286.5,553.4 287,553.4 287.5,553.3 288,553.2 288.5,552.7 289,551.8 289.5,550.9 290,550.2 290.5,550.1 291,550.1 291.5,549.4 292,548.6 292.5,548.3 293,549.5 293.5,550.6 294,551.2 294.5,551.3 295,551.4 295.5,551.1 296,550.3 296.5,549.6 297,550.1 297.5,550.9 298,551.5 298.5,551.5 299,551.5 299.5,551.5 300,551.1 300.5,550.7 301,550.6 301.5,551 302,551.5 302.5,551.6 303,551.6 303.5,551.6 304,551.1 304.5,550.4 305,549.7 305.5,550.4 306,551.2 306.5,551.6 307,551.6 307.5,551.6 308,551.5 308.5,550.6 309,549.7 309.5,549.9 310,550.8 310.5,551.6 311,551.7 311.5,551.7 312,551.7 312.5,551 313,550.2 313.5,549.6 314,550.4 314.5,551.3 315,551.7 315.5,551.7 316,551.7 316.5,551.5 317,551 317.5,550.5 318,550.8 318.5,551.3 319,551.7 319.5,551.7 320,551.7 320.5,551.7 321,551.3 321.5,550.8 322,550.7 322.5,551.1 323,551.6 323.5,551.8 324,551.8 324.5,551.8 325,551.5 325.5,551 326,550.6 326.5,551 327,551.4 327.5,551.8 328,551.8 328.5,551.8 329,551.7 329.5,551 330,550.2 330.5,550.2 331,551 331.5,551.7 332,551.8 332.5,551.8 333,551.8 333.5,551.4 334,551 334.5,550.6 335,551.1 335.5,551.5 336,551.7 336.5,551.7 337,551.7 337.5,551.8 338,551.9 338.5,552.5 339,553.1 339.5,553.3 340,553.5 340.5,553.5 341,553.5 341.5,553.5 342,553.4 342.5,553.4 343,553.3 343.5,553.4 344,553.5 344.5,553.5 345,553.5 345.5,553.5 346,553.5 346.5,553.4 347,553.3 347.5,553.3 348,553.4 348.5,553.5 349,553.5 349.5,553.5 350,553.5 350.5,553.4 351,553.2 351.5,553.2 352,553.4 352.5,553.5 353,553.5 353.5,553.5 354,553.5 354.5,553.5 355,553.4 355.5,553.3 356,553.4 356.5,553.5 357,553.5 357.5,553.2 358,552.4 358.5,551.3 359,549.8 359.5,548.7 360,548.6 360.5,549.4 361,550.2 361.5,550.2 362,550.3 362.5,550.5 363,549.9 363.5,549.2 364,548.8 364.5,549.9 365,550.9 365.5,551.4 366,551.4 366.5,551.4 367,551.2 367.5,550.7 368,550.1 368.5,550.4 369,550.9 369.5,551.4 370,551.4 370.5,551.4 371,551.4 371.5,550.5 372,549.6 372.5,549.3 373,550.2 373.5,551.1 374,551.3 374.5,551.3 375,551.3 375.5,551 376,550.4 376.5,549.8 377,550.3 377.5,550.9 378,551.3 378.5,551.3 379,551.3 379.5,551.2 380,550.2 380.5,549.2 381,549.2 381.5,550.2 382,551.2 382.5,551.3 383,551.3 383.5,551.3 384,550.8 384.5,550.1 385,549.5 385.5,550.2 386,550.9 386.5,551.3 387,551.2 387.5,551.2 388,551.1 388.5,550.5 389,549.9 389.5,550.1 390,550.7 390.5,551.2 391,551.2 391.5,551.2 392,551.2 392.5,550.9 393,550.5 393.5,550.3 394,550.7 394.5,551.1 395,551.2 395.5,551.2 396,551.2 396.5,551 397,550.5 397.5,550.2 398,550.6 398.5,550.8 399,550.8 399.5,550.9 400,550.9 400.5,550.8 401,550.8 401.5,550.7 402,550.7 402.5,550.8 403,550.9 403.5,550.9 404,550.9 404.5,550.9 405,550.8 405.5,550.6 406,550.5 406.5,550.6 407,550.8 407.5,550.9 408,550.9 408.5,550.9 409,550.8 409.5,550.7 410,550.2 410.5,550.1 411,550.7 411.5,551.4 412,551.4 412.5,551.4 413,551.4 413.5,551 414,550.7 414.5,550.4 415,550.8 415.5,551.2 416,551.4 416.5,551.4 417,551.4 417.5,551.1 418,550.4 418.5,549.6 419,550.1 419.5,550.9 420,551.5 420.5,551.5 421,551.5 421.5,551.5 422,550.6 422.5,549.7 423,549.5 423.5,550.4 424,551.3 424.5,551.5 425,551.6 425.5,551.6 426,551.1 426.5,550.3 427,549.5 427.5,550.2 428,550.9 428.5,551.3 429,551.1 429.5,550.9 430,550.7 430.5,550 431,549.5 431.5,549.5 432,550 432.5,550.6 433,550.8 433.5,551 434,551.2 434.5,550.8 435,550 435.5,549.5 436,550.5 436.5,551.3 437,551.8 437.5,551.8 438,551.8 438.5,551.5 439,550.5 439.5,549.6 440,550.1 440.5,551 441,551.8 441.5,551.8 442,551.9 442.5,551.9 443,551.4 443.5,550.9 444,550.8 444.5,551.3 445,551.8 445.5,551.9 446,551.9 446.5,551.9 447,551.7 447.5,551.4 448,551 448.5,551.3 449,551.7 449.5,552 450,552 450.5,552 451,551.9 451.5,551.2 452,550.5 452.5,550.5 453,551.2 453.5,551.9 454,552 454.5,552 455,552.1 455.5,551.6 456,550.8 456.5,550.2 457,551 457.5,551.5 458,551.5 458.5,551 459,550.8 459.5,550.8 460,550.6 460.5,550.5 461,550.5 461.5,550.7 462,550.8 462.5,550.8 463,550.8 463.5,550.8 464,550.7 464.5,550.5 465,550.4 465.5,550.6 466,550.8 466.5,550.9 467,550.9 467.5,550.9 468,550.8 468.5,550.6 469,550.4 469.5,550.5 470,550.7 470.5,550.9 471,550.9 471.5,550.9 472,550.9 472.5,550.7 473,550.5 473.5,550.5 474,550.7 474.5,550.8 475,550.9 475.5,550.9 476,550.9 476.5,551 477,550.9 477.5,550.6 478,551.2 478.5,551.8 479,552.2 479.5,552.2 480,552.2 480.5,551.9 481,551 481.5,550 482,550.2 482.5,551.1 483,552.1 483.5,552.1 484,552.1 484.5,552.1 485,551.8 485.5,551.3 486,551.1 486.5,551.5 487,551.9 487.5,552.1 488,552.1 488.5,552.1 489,551.8 489.5,551.2 490,550.6 490.5,550.9 491,551.5 491.5,552.1 492,552.1 492.5,552.1 493,552 493.5,551.3 494,550.6 494.5,550.4 495,551.1 495.5,551.8 496,552 496.5,552 497,552 497.5,551.6 498,550.9 498.5,550.2 499,550.6 499.5,551 500,551.2 500.5,551 501,550.8 501.5,550.6 502,550.1 502.5,549.8 503,550 503.5,550.6 504,551.3 504.5,551.5 505,551.6 505.5,551.7 506,551.4 506.5,550.8 507,550.3 507.5,551 508,551.6 508.5,551.9 509,551.8 509.5,551.8 510,551.5 510.5,550.5 511,549.5 511.5,549.9 512,550.9 512.5,551.8 513,551.8 513.5,551.8 514,551.8 514.5,550.9 515,549.8 515.5,549.4 516,550.4 516.5,551.4 517,551.7 517.5,551.7 518,551.7 518.5,551.4 519,550.6 519.5,549.8 520,550.4 520.5,551.1 521,551.7 521.5,551.7 522,551.7 522.5,551.7 523,551.3 523.5,550.9 524,550.8 524.5,551.2 525,551.6 525.5,551.7 526,551.7 526.5,551.6 527,551.4 527.5,550.9 528,550.5 528.5,550.9 529,551.4 529.5,551.6 530,551.6 530.5,551.6 531,551.5 531.5,550.9 532,550.3 532.5,550.5 533,551 533.5,551.6 534,551.6 534.5,551.6 535,551.6 535.5,551.3 536,550.9 536.5,550.8 537,551 537.5,551 538,551 538.5,551 539,551 539.5,550.9 540,550.8 540.5,550.7 541,550.8 541.5,550.9 542,551 542.5,551 543,551 543.5,551 544,550.8 544.5,550.6 545,550.6 545.5,550.8 546,551 546.5,551 547,551 547.5,551 548,551 548.5,550.9 549,550.7 549.5,551 550,551.4 550.5,551.6 551,551.6 551.5,551.6 552,551.5 552.5,550.7 553,550 553.5,550.1 554,550.8 554.5,551.6 555,551.7 555.5,551.7 556,551.7 556.5,551.3 557,550.8 557.5,550.5 558,551 558.5,551.5 559,551.7 559.5,551.7 560,551.7 560.5,551.4 561,550.7 561.5,549.9 562,550.3 562.5,551.1 563,551.7 563.5,551.7 564,551.7 564.5,551.8 565,551.1 565.5,550.4 566,550.1 566.5,550.8 567,551.6 567.5,551.8 568,551.7 568.5,551.6 569,551 569.5,549.9 570,548.8 570.5,549.3 571,550.1 571.5,550.6 572,550.6 572.5,550.6 573,550.6 573.5,550 574,549.4 574.5,549.6 575,550.6 575.5,551.6 576,551.8 576.5,551.9 577,551.9 577.5,551.3 578,550.5 578.5,549.8 579,550.6 579.5,551.5 580,552 580.5,552 581,552 581.5,551.8 582,551.2 582.5,550.6 583,550.8 583.5,551.4 584,552 584.5,552 585,552 585.5,552.1 586,551.4 586.5,550.5 587,550.1 587.5,551 588,551.8 588.5,552.1 589,552.1 589.5,552.1 590,551.8 590.5,551.1 591,550.5 591.5,550.9 592,551.6 592.5,552.1 593,552.2 593.5,552.2 594,552.1 594.5,551.5 595,550.9 595.5,550.8 596,551.5 596.5,552.1 597,552.2 597.5,552.2 598,552.2 598.5,552 599,551.6 599.5,551.3 600,551.6 600.5,552 601,552.2 601.5,552.2 602,552.2 602.5,552.1 603,551.5 603.5,551 604,551.1 604.5,551.7 605,552.2 605.5,552.3 606,552.3 606.5,552.3 607,551.7 607.5,551.1 608,550.7 608.5,551.3 609,552 609.5,552.3 610,552.3 610.5,552 611,551.4 611.5,550.8 612,550.6 612.5,550.6 613,550.8 613.5,550.9 614,550.9 614.5,550.9 615,550.9 615.5,550.7 616,550.5 616.5,550.5 617,550.6 617.5,550.8 618,550.9 618.5,550.9 619,550.9 619.5,550.8 620,550.6 620.5,550.4 621,550.6 621.5,550.7 622,550.9 622.5,550.9 623,550.9 623.5,550.8 624,550.7 624.5,550.6 625,550.6 625.5,550.7 626,550.8 626.5,550.8 627,550.8 627.5,550.8 628,550.8 628.5,550.7 629,550.6 629.5,550.7 630,550.8 630.5,550.8 631,550.8 631.5,550.8 632,550.8 632.5,550.6 633,550.5 633.5,550.6 634,550.7 634.5,551 635,551.5 635.5,551.9 636,552.1 636.5,551.2 637,550.2 637.5,549.7 638,550.7 638.5,551.6 639,551.8 639.5,551.7 640,551.5 640.5,551 641,550.2 641.5,549.5 642,549.8 642.5,550.3 643,550.7 643.5,550.9 644,551.1 644.5,551.3 645,550.6 645.5,549.8 646,549.9 646.5,550.8 647,551.7 647.5,551.9 648,551.9 648.5,551.9 649,551.4 649.5,550.8 650,550.2 650.5,550.8 651,551.5 651.5,551.8 652,551.8 652.5,551.8 653,551.6 653.5,551 654,550.3 654.5,550.4 655,551.1 655.5,551.8 656,551.7 656.5,551.7 657,551.7 657.5,551.2 658,550.5 658.5,550.1 659,550.8 659.5,551.4 660,551.7 660.5,551.7 661,551.7 661.5,551.5 662,551 662.5,550.5 663,550.8 663.5,551.2 664,551.6 664.5,551.6 665,551.6 665.5,551.4 666,550.8 666.5,550.5 667,550.5 667.5,550.5 668,550.6 668.5,550.7 669,550.7 669.5,550.6 670,550.6 670.5,550.5 671,550.3 671.5,550.4 672,550.6 672.5,550.6 673,550.6 673.5,550.6 674,550.6 674.5,550.4 675,550.2 675.5,550.2 676,550.4 676.5,550.6 677,550.6 677.5,550.6 678,550.6 678.5,550.6 679,550.5 679.5,550.4 680,550.5 680.5,550.6 681,550.6 681.5,550.6 682,550.6 682.5,550.6 683,550.5 683.5,550.5 684,550.5 684.5,550.6 685,550.6 685.5,550.6 686,550.6 686.5,550.6 687,550.5 687.5,550.3 688,550.2 688.5,550.4 689,550.5 689.5,550.6 690,550.6 690.5,550.6 691,550.5 691.5,550.3 692,550.1 692.5,550.3 693,550.5 693.5,550.6 694,550.6 694.5,550.6 695,550.6 695.5,550.4 696,550.2 696.5,550 697,550.3 697.5,551.2 698,551.4 698.5,551.4 699,551.4 699.5,550.8 700,549.9 700.5,549.2 701,550.1 701.5,551 702,551.4 702.5,551.4 703,551.4 703.5,551.3 704,550.8 704.5,550.3 705,550.5 705.5,551 706,551.5 706.5,551.5 707,551.5 707.5,551.5 708,550.6 708.5,549.7 709,549.1 709.5,549.9 710,550.7 710.5,550.9 711,550.7 711.5,550.5 712,550.1 712.5,549.5 713,548.9 713.5,549.4 714,550.1 714.5,550.8 715,551 715.5,551.2 716,551.3 716.5,550.6 717,549.8 717.5,549.7 718,550.6 718.5,551.4 719,551.6 719.5,551.6 720,551.6 720.5,551 721,550 721.5,549 722,550 722.5,551 723,551.6 723.5,551.7 724,551.7 724.5,551.5 725,550.7 725.5,549.9 726,550 726.5,550.9 727,551.7 727.5,551.7 728,551.7 728.5,551.7 729,551.4 729.5,551.1 730,550.8 730.5,551.2 731,551.6 731.5,551.7 732,551.8 732.5,551.8 733,551.4 733.5,550.5 734,549.6 734.5,550.1 735,551 735.5,551.8 736,551.8 736.5,551.8 737,551.8 737.5,551 738,550.2 738.5,550.1 739,550.3 739.5,550.4 740,550.4 740.5,550.4 741,550.4 741.5,550.4 742,550.2 742.5,550.1 743,550.2 743.5,550.3 744,550.4 744.5,550.4 745,550.4 745.5,550.4 746,550.2 746.5,550 747,550 747.5,550.2 748,550.4 748.5,550.4 749,550.4 749.5,550.4 750,550.3 750.5,550.2 751,550.1 751.5,550.2 752,550.3 752.5,550.4 753,550.4 753.5,550.4 754,550.4 754.5,550.3 755,550.2 755.5,550.2 756,550.3 756.5,550.4 757,550.4 757.5,550.4 758,550.4 758.5,550.2 759,550.1 759.5,550 760,550.2 760.5,550.3 761,550.4 761.5,550.4 762,550.4 762.5,550.3 763,550.2 763.5,550.1 764,550.2 764.5,550.3 765,550.4 765.5,550.4 766,550.4 766.5,550.4 767,550.2 767.5,550.1 768,550.1 768.5,550.4 769,551 769.5,551.6 770,551.8 770.5,551.8 771,551.3 771.5,550.5 772,549.7 772.5,550.5 773,551.3 773.5,551.8 774,551.8 774.5,551.8 775,551.5 775.5,550.5 776,549.4 776.5,549.7 777,550.7 777.5,551.7 778,551.7 778.5,551.7 779,551.6 779.5,550.9 780,550 780.5,549.3 781,549.9 781.5,550.4 782,550.5 782.5,550.4 783,550.3 783.5,550 784,549.2 784.5,548.4 785,549.2 785.5,550.3 786,551.3 786.5,551.4 787,551.5 787.5,551.5 788,551.1 788.5,550.7 789,550.6 789.5,551 790,551.4 790.5,551.5 791,551.5 791.5,551.5 792,551.2 792.5,550.6 793,550 793.5,550.5 794,551.1 794.5,551.4 795,551.4 795.5,551.4 796,551.3 796.5,550.9 797,550.4 797.5,550.4 798,550.9 798.5,551.3 799,551.4 799.5,551.4 800,551.4 800.5,551.1 801,550.7 801.5,550.5 802,550.8 802.5,551 803,550.8 803.5,550.4 804,550.3 804.5,550.2 805,550 805.5,549.8 806,549.9 806.5,550.1 807,550.3 807.5,550.3 808,550.3 808.5,550.3 809,550.1 809.5,550 810,550 810.5,550.1 811,550.2 811.5,550.3 812,550.3 812.5,550.3 813,550.2 813.5,550.1 814,550.1 814.5,550.1 815,550.2 815.5,550.3 816,550.2 816.5,550.2 817,550.2 817.5,550 818,549.8 818.5,549.8 819,550 819.5,550.2 820,550.2 820.5,550.2 821,550.2 821.5,550.2 822,550 822.5,549.9 823,550.1 823.5,550.2 824,550.2 824.5,550.2 825,550.2 825.5,550.2 826,550 826.5,549.8 827,549.9 827.5,550 828,550.2 828.5,550.2 829,550.2 829.5,550.2 830,550.1 830.5,549.9 831,549.8 831.5,550 832,550.2 832.5,550.2 833,550.2 833.5,550.2 834,550.2 834.5,550 835,549.8 835.5,549.9 836,550.2 836.5,550.9 837,551 837.5,551 838,551 838.5,550.6 839,550.3 839.5,550.2 840,550.6 840.5,551 841,551 841.5,551.1 842,551.1 842.5,550.5 843,549.7 843.5,548.9 844,549.7 844.5,550.6 845,551.1 845.5,551.1 846,551.1 846.5,551 847,550.4 847.5,549.8 848,549.9 848.5,550.5 849,551 849.5,551 850,550.9 850.5,550.8 851,549.8 851.5,548.6 852,547.7 852.5,548.5 853,549.4 853.5,549.9 854,550 854.5,550.1 855,550.1 855.5,549.5 856,548.8 856.5,549.4 857,550.4 857.5,551.1 858,551.2 858.5,551.2 859,551.2 859.5,550.8 860,550.4 860.5,550.2 861,550.7 861.5,551.1 862,551.3 862.5,551.3 863,551.3 863.5,551 864,550.5 864.5,549.9 865,550.4 865.5,550.9 866,551.3 866.5,551.3 867,551.3 867.5,551.3 868,550.6 868.5,550 869,550 869.5,550.7 870,551.3 870.5,551.4 871,551.4 871.5,551.4 872,550.9 872.5,550.1 873,549.5 873.5,550.3 874,551.1 874.5,551.5 875,551.5 875.5,551.5 876,551.3 876.5,550.5 877,549.7 877.5,550 878,550.8 878.5,551.5 879,551.5 879.5,551.5 880,551.5 880.5,550.8 881,550 881.5,549.6 882,550.4 882.5,551.3 883,551.6 883.5,551.6 884,551.6 884.5,551.4 885,551.1 885.5,550.8 886,551 886.5,551.4 887,551.6 887.5,551.6 888,551.6 888.5,551.6 889,550.9 889.5,550.2 890,550.2 890.5,550.8 891,551.5 891.5,551.7 892,551.7 892.5,551.7 893,551.2 893.5,550.4 894,549.6 894.5,550.4 895,551.2 895.5,551.7 896,551.7 896.5,551.9 897,552.4 897.5,552.8 898,553.1 898.5,553.1 899,553.2 899.5,553.3 900,553.3 900.5,553.3 901,553.3 901.5,553.2 902,553.2 902.5,553.1 903,553.2 903.5,553.3 904,553.3 904.5,553.3 905,553.3 905.5,553.3 906,553.2 906.5,553.1 907,553.1 907.5,553.2 908,553.3 908.5,553.3 909,553.3 909.5,553.3 910,553.2 910.5,553.2 911,553.1 911.5,553.2 912,553.3 912.5,553.3 913,553.3 913.5,553.3 914,553.2 914.5,553 915,552.9 915.5,553 916,553.2 916.5,553.3 917,553.3 917.5,553.3 918,553.3 918.5,553.1 919,552.9 919.5,553 920,553.1 920.5,553.3 921,553.3 921.5,553.3 922,553.3 922.5,553.3 923,553.2 923.5,553.2 924,553.2 924.5,553.3 925,553.3 925.5,553.3 926,553.3 926.5,553.3 927,553.1 927.5,552.9 928,553 928.5,553.2 929,553.3 929.5,553.4 930,553.4 930.5,553.4 931,553.3 931.5,553.2 932,553.2 932.5,553.3 933,553.3 933.5,553.4 934,553.4 934.5,553.4 935,553.3 935.5,553.2 936,553 936.5,553.1 937,553.3 937.5,553.4 938,553.4 938.5,553.4 939,553.4 939.5,553.2 940,553.1 940.5,553.1 941,553.2 941.5,553.4 942,553.4 942.5,553.4 943,553.4 943.5,553.2 944,553.1 944.5,552.9 945,553.1 945.5,553.3 946,553.4 946.5,553.4 946.5,556.4 946,556.2 945.5,556.1 945,556 944.5,556 944,556 943.5,556 943,556.1 942.5,556.3 942,556.2 941.5,556.1 941,556 940.5,556 940,556 939.5,556 939,556.1 938.5,556.1 938,556.2 937.5,556.1 937,556 936.5,556 936,556 935.5,556 935,556.1 934.5,556.2 934,556.4 933.5,556.3 933,556.1 932.5,556 932,556 931.5,556 931,556 930.5,556.1 930,556.3 929.5,556.3 929,556.1 928.5,556 928,555.9 927.5,555.9 927,555.9 926.5,556.1 926,556.3 925.5,556.4 925,556.2 924.5,556 924,555.9 923.5,555.9 923,555.9 922.5,556 922,556.1 921.5,556.2 921,556.2 920.5,556.1 920,555.9 919.5,555.9 919,555.9 918.5,555.9 918,556.1 917.5,556.2 917,556.3 916.5,556.1 916,556 915.5,555.9 915,555.9 914.5,555.9 914,556 913.5,556 913,556.1 912.5,556 912,556 911.5,555.9 911,555.9 910.5,555.9 910,555.9 909.5,556.1 909,556.3 908.5,556.3 908,556.1 907.5,556 907,555.9 906.5,555.9 906,555.9 905.5,556 905,556.1 904.5,556.2 904,556.1 903.5,556 903,555.9 902.5,555.9 902,555.9 901.5,555.9 901,556.1 900.5,556.2 900,556.1 899.5,556 899,555.9 898.5,555.9 898,555.9 897.5,555.8 897,556 896.5,556.6 896,557.3 895.5,556.4 895,555.6 894.5,555.2 894,555.2 893.5,555.2 893,555.4 892.5,556.1 892,556.8 891.5,556.4 891,555.7 890.5,555.2 890,555.1 889.5,555.1 889,555.1 888.5,555.6 888,556.1 887.5,556.3 887,555.8 886.5,555.2 886,555.1 885.5,555.1 885,555.1 884.5,555.6 884,556.4 883.5,557.3 883,556.5 882.5,555.7 882,555.1 881.5,555.1 881,555.1 880.5,555.2 880,556 879.5,556.8 879,556.8 878.5,555.9 878,555.1 877.5,555 877,555 876.5,555 876,555.4 875.5,556 875,556.4 874.5,555.8 874,555.2 873.5,554.9 873,554.9 872.5,554.9 872,555.2 871.5,556 871,556.9 870.5,556.5 870,555.7 869.5,554.9 869,554.9 868.5,554.9 868,554.9 867.5,555.2 867,555.6 866.5,555.8 866,555.4 865.5,555 865,554.8 864.5,554.8 864,554.8 863.5,555.1 863,555.7 862.5,556.3 862,555.8 861.5,555.2 861,554.8 860.5,554.8 860,554.7 859.5,554.8 859,555.6 858.5,556.4 858,556.5 857.5,555.6 857,554.7 856.5,554.4 856,554.3 855.5,554.1 855,554.2 854.5,554.6 854,554.9 853.5,554.3 853,553.7 852.5,553.5 852,553.7 851.5,553.9 851,554.3 850.5,555.4 850,556.5 849.5,556.4 849,555.5 848.5,554.6 848,554.6 847.5,554.6 847,554.6 846.5,555 846,555.6 845.5,555.9 845,555.4 844.5,554.8 844,554.6 843.5,554.6 843,554.6 842.5,554.9 842,555.8 841.5,556.7 841,556.2 840.5,555.3 840,554.5 839.5,554.5 839,554.5 838.5,554.5 838,555 837.5,555.5 837,555.6 836.5,554.8 836,553.7 835.5,553.1 835,552.8 834.5,552.8 834,552.9 833.5,552.9 833,553 832.5,552.9 832,552.9 831.5,552.8 831,552.8 830.5,552.8 830,552.8 829.5,552.9 829,553 828.5,553 828,552.9 827.5,552.8 827,552.8 826.5,552.8 826,552.8 825.5,552.9 825,553.1 824.5,553.2 824,553.1 823.5,552.9 823,552.8 822.5,552.8 822,552.8 821.5,552.9 821,553 820.5,553.1 820,553 819.5,552.9 819,552.8 818.5,552.8 818,552.8 817.5,552.8 817,552.9 816.5,553.1 816,553.1 815.5,553 815,552.9 814.5,552.9 814,552.9 813.5,552.9 813,552.9 812.5,553.1 812,553.2 811.5,553.1 811,553 810.5,552.9 810,552.9 809.5,552.9 809,552.9 808.5,553 808,553.1 807.5,553.1 807,553 806.5,552.9 806,552.9 805.5,552.9 805,552.9 804.5,553 804,553.2 803.5,554 803,554.8 802.5,555 802,554.8 801.5,554.8 801,554.8 800.5,555.1 800,556 799.5,557 799,556.7 798.5,555.8 798,554.9 797.5,554.9 797,554.9 796.5,554.9 796,555.5 795.5,556.1 795,556.5 794.5,555.8 794,555.2 793.5,555 793,555 792.5,555 792,555.2 791.5,555.6 791,555.9 790.5,555.7 790,555.3 789.5,555 789,555 788.5,555 788,555.1 787.5,555.8 787,556.5 786.5,556.6 786,555.7 785.5,554.8 785,554.4 784.5,554.2 784,554 783.5,554.1 783,554.5 782.5,554.9 782,554.7 781.5,554.5 781,554.5 780.5,554.7 780,554.9 779.5,555.1 779,555.7 778.5,556.3 778,556.2 777.5,555.7 777,555.2 776.5,555.2 776,555.2 775.5,555.2 775,555.9 774.5,556.6 774,557.1 773.5,556.4 773,555.6 772.5,555.3 772,555.3 771.5,555.3 771,555.5 770.5,556.1 770,556.6 769.5,555.8 769,554.4 768.5,553.3 768,553 767.5,553 767,553 766.5,553 766,553.1 765.5,553.2 765,553.1 764.5,553 764,553 763.5,553 763,553 762.5,553.1 762,553.2 761.5,553.4 761,553.3 760.5,553.1 760,553 759.5,553 759,553 758.5,553 758,553.2 757.5,553.4 757,553.4 756.5,553.2 756,553 755.5,553 755,553 754.5,553 754,553.1 753.5,553.2 753,553.3 752.5,553.2 752,553.1 751.5,553 751,553 750.5,553 750,553.1 749.5,553.2 749,553.4 748.5,553.3 748,553.2 747.5,553 747,553 746.5,553 746,553 745.5,553.1 745,553.3 744.5,553.3 744,553.2 743.5,553.1 743,553 742.5,553 742,553 741.5,553.1 741,553.3 740.5,553.5 740,553.3 739.5,553.2 739,553 738.5,553.4 738,554.2 737.5,555 737,556.3 736.5,557.3 736,557.4 735.5,556.4 735,555.4 734.5,555.3 734,555.3 733.5,555.3 733,555.5 732.5,555.8 732,556.2 731.5,555.8 731,555.4 730.5,555.2 730,555.2 729.5,555.2 729,555.4 728.5,556.4 728,557.3 727.5,557 727,556.1 726.5,555.2 726,555.2 725.5,555.2 725,555.2 724.5,555.9 724,556.8 723.5,557.3 723,556.4 722.5,555.5 722,555.1 721.5,555.1 721,555.1 720.5,555.5 720,556.3 719.5,557.1 719,556.6 718.5,555.8 718,555.1 717.5,555 717,555 716.5,554.9 716,555.4 715.5,555.8 715,555.7 714.5,554.9 714,554.2 713.5,553.9 713,553.7 712.5,553.7 712,554.3 711.5,555.4 711,556.4 710.5,555.8 710,555.2 709.5,554.7 709,554.8 708.5,554.9 708,555.1 707.5,556 707,556.8 706.5,556.7 706,555.9 705.5,555 705,555 704.5,555 704,554.9 703.5,555.6 703,556.4 702.5,557 702,556.2 701.5,555.3 701,554.9 700.5,554.9 700,554.9 699.5,555.2 699,555.9 698.5,556.6 698,556.3 697.5,555.2 697,554 696.5,553.4 696,553.2 695.5,553.2 695,553.3 694.5,553.5 694,553.5 693.5,553.4 693,553.2 692.5,553.2 692,553.2 691.5,553.2 691,553.2 690.5,553.3 690,553.4 689.5,553.3 689,553.3 688.5,553.2 688,553.2 687.5,553.2 687,553.2 686.5,553.3 686,553.4 685.5,553.4 685,553.3 684.5,553.2 684,553.2 683.5,553.2 683,553.2 682.5,553.3 682,553.3 681.5,553.4 681,553.3 680.5,553.3 680,553.2 679.5,553.2 679,553.2 678.5,553.3 678,553.4 677.5,553.5 677,553.5 676.5,553.3 676,553.2 675.5,553.2 675,553.2 674.5,553.2 674,553.4 673.5,553.6 673,553.7 672.5,553.5 672,553.3 671.5,553.2 671,553.2 670.5,553.2 670,553.3 669.5,553.4 669,553.5 668.5,553.4 668,553.3 667.5,553.3 667,553.3 666.5,553.5 666,554.2 665.5,555.5 665,556.7 664.5,556.9 664,556.1 663.5,555.3 663,555.1 662.5,555.1 662,555.1 661.5,555.7 661,556.5 660.5,557.3 660,556.5 659.5,555.7 659,555.2 658.5,555.2 658,555.2 657.5,555.4 657,556.3 656.5,557.1 656,557 655.5,556.1 655,555.3 654.5,555.3 654,555.3 653.5,555.3 653,556 652.5,556.9 652,557.4 651.5,556.6 651,555.7 650.5,555.3 650,555.4 649.5,555.4 649,555.6 648.5,556.3 648,557 647.5,556.6 647,555.9 646.5,555.3 646,555.3 645.5,555.2 645,555 644.5,555.4 644,555.8 643.5,555.8 643,555 642.5,554.4 642,554.2 641.5,554.4 641,554.6 640.5,555.2 640,556.3 639.5,557.3 639,556.7 638.5,556 638,555.5 637.5,555.5 637,555.6 636.5,555.7 636,556.6 635.5,557 635,555.7 634.5,554.1 634,553.4 633.5,553.4 633,553.4 632.5,553.4 632,553.5 631.5,553.7 631,553.8 630.5,553.7 630,553.5 629.5,553.4 629,553.4 628.5,553.4 628,553.5 627.5,553.6 627,553.7 626.5,553.7 626,553.6 625.5,553.4 625,553.4 624.5,553.5 624,553.5 623.5,553.5 623,553.6 622.5,553.7 622,553.6 621.5,553.5 621,553.5 620.5,553.5 620,553.5 619.5,553.5 619,553.7 618.5,553.9 618,553.7 617.5,553.6 617,553.5 616.5,553.5 616,553.5 615.5,553.5 615,553.6 614.5,553.8 614,553.8 613.5,553.6 613,553.5 612.5,553.5 612,553.5 611.5,553.8 611,554.8 610.5,556.1 610,557.1 609.5,556.6 609,556.1 608.5,555.8 608,555.8 607.5,555.8 607,556 606.5,557 606,558 605.5,557.7 605,556.7 604.5,555.7 604,555.7 603.5,555.7 603,555.7 602.5,556.5 602,557.4 601.5,557.9 601,557 600.5,556.1 600,555.7 599.5,555.7 599,555.7 598.5,556.1 598,557 597.5,558 597,557.4 596.5,556.5 596,555.7 595.5,555.7 595,555.7 594.5,555.7 594,556 593.5,556.4 593,556.5 592.5,556.1 592,555.7 591.5,555.6 591,555.6 590.5,555.6 590,556.2 589.5,557.1 589,558 588.5,557.1 588,556.2 587.5,555.6 587,555.6 586.5,555.6 586,555.7 585.5,556.3 585,556.9 584.5,556.8 584,556.2 583.5,555.6 583,555.5 582.5,555.5 582,555.5 581.5,556.1 581,556.9 580.5,557.5 580,556.7 579.5,555.8 579,555.5 578.5,555.5 578,555.4 577.5,555.7 577,556.4 576.5,557.1 576,556.7 575.5,555.9 575,555.1 574.5,554.9 574,554.7 573.5,554.4 573,554.7 572.5,555 572,555.1 571.5,554.7 571,554.4 570.5,554.5 570,554.7 569.5,554.9 569,555.6 568.5,556.7 568,557.8 567.5,557 567,556 566.5,555.3 566,555.3 565.5,555.3 565,555.3 564.5,555.7 564,556.1 563.5,556.1 563,555.7 562.5,555.3 562,555.2 561.5,555.2 561,555.2 560.5,555.4 560,555.7 559.5,556 559,555.7 558.5,555.4 558,555.2 557.5,555.2 557,555.2 556.5,555.4 556,556.3 555.5,557.2 555,557 554.5,556 554,555.1 553.5,555.1 553,555.1 552.5,555.1 552,555.7 551.5,556.3 551,556.7 550.5,556 550,555.4 549.5,554.9 549,554.4 548.5,553.8 548,553.6 547.5,553.8 547,553.9 546.5,553.8 546,553.7 545.5,553.6 545,553.6 544.5,553.6 544,553.6 543.5,553.7 543,553.9 542.5,553.9 542,553.8 541.5,553.6 541,553.6 540.5,553.6 540,553.6 539.5,553.7 539,553.8 538.5,554 538,553.8 537.5,554 537,554.3 536.5,554.9 536,555.1 535.5,555.3 535,556.2 534.5,557.1 534,557 533.5,556 533,555.1 532.5,555.1 532,555.1 531.5,555.1 531,555.8 530.5,556.6 530,557.2 529.5,556.3 529,555.5 528.5,555.1 528,555.1 527.5,555.1 527,555.3 526.5,555.8 526,556.4 525.5,556.1 525,555.6 524.5,555.2 524,555.2 523.5,555.2 523,555.2 522.5,556.1 522,557 521.5,557.3 521,556.4 520.5,555.5 520,555.2 519.5,555.2 519,555.2 518.5,555.7 518,556.7 517.5,557.7 517,556.9 516.5,555.9 516,555.3 515.5,555.3 515,555.3 514.5,555.3 514,555.8 513.5,556.3 513,556.3 512.5,555.8 512,555.4 511.5,555.3 511,555.3 510.5,555.3 510,555.6 509.5,555.9 509,556.2 508.5,555.9 508,555.5 507.5,555.4 507,555.4 506.5,555.3 506,555.6 505.5,556.3 505,557.1 504.5,556.6 504,555.6 503.5,554.6 503,554.4 502.5,554.2 502,554.1 501.5,555.1 501,556.2 500.5,556.9 500,556.1 499.5,555.3 499,555.1 498.5,555.3 498,555.4 497.5,555.6 497,556.1 496.5,556.6 496,556.3 495.5,555.9 495,555.5 494.5,555.5 494,555.5 493.5,555.6 493,556.1 492.5,556.7 492,556.8 491.5,556.2 491,555.7 490.5,555.6 490,555.6 489.5,555.6 489,556.1 488.5,556.9 488,557.6 487.5,556.9 487,556.1 486.5,555.6 486,555.6 485.5,555.6 485,555.8 484.5,556.9 484,557.9 483.5,557.7 483,556.6 482.5,555.6 482,555.6 481.5,555.6 481,555.6 480.5,556.5 480,557.6 479.5,558.2 479,557.1 478.5,556.1 478,555.7 477.5,555.3 477,554.6 476.5,553.9 476,553.7 475.5,553.8 475,553.7 474.5,553.6 474,553.5 473.5,553.5 473,553.5 472.5,553.5 472,553.5 471.5,553.6 471,553.6 470.5,553.6 470,553.5 469.5,553.5 469,553.5 468.5,553.5 468,553.5 467.5,553.7 467,553.9 466.5,553.7 466,553.6 465.5,553.4 465,553.4 464.5,553.4 464,553.5 463.5,553.5 463,553.6 462.5,553.6 462,553.5 461.5,553.4 461,553.4 460.5,553.4 460,553.4 459.5,553.5 459,553.5 458.5,554 458,554.8 457.5,555.4 457,555.6 456.5,555.6 456,555.6 455.5,555.8 455,556.7 454.5,557.6 454,557.2 453.5,556.3 453,555.5 452.5,555.5 452,555.5 451.5,555.5 451,556 450.5,556.5 450,556.7 449.5,556.2 449,555.6 448.5,555.5 448,555.5 447.5,555.4 447,555.8 446.5,556.6 446,557.3 445.5,556.7 445,556 444.5,555.4 444,555.4 443.5,555.4 443,555.4 442.5,556.3 442,557.1 441.5,557.2 441,556.3 440.5,555.4 440,555.3 439.5,555.3 439,555.3 438.5,555.9 438,556.7 437.5,557.5 437,556.6 436.5,555.7 436,555.2 435.5,555.1 435,555 434.5,555 434,555.3 433.5,555.6 433,555.2 432.5,554.5 432,553.9 431.5,553.9 431,553.9 430.5,554 430,554.9 429.5,555.8 429,556.4 428.5,555.8 428,555.2 427.5,555 427,555 426.5,555.1 426,555.2 425.5,555.5 425,555.9 424.5,555.7 424,555.3 423.5,555 423,555 422.5,555 422,555 421.5,555.8 421,556.6 420.5,556.7 420,555.9 419.5,555.1 419,555 418.5,554.9 418,554.9 417.5,555.5 417,556.5 416.5,557.5 416,556.5 415.5,555.5 415,554.9 414.5,554.9 414,554.9 413.5,554.9 413,555.3 412.5,555.7 412,555.6 411.5,555.2 411,554.9 410.5,554.6 410,554.2 409.5,553.7 409,553.6 408.5,553.7 408,553.8 407.5,553.7 407,553.5 406.5,553.5 406,553.5 405.5,553.5 405,553.5 404.5,553.7 404,553.8 403.5,553.7 403,553.6 402.5,553.5 402,553.5 401.5,553.5 401,553.5 400.5,553.5 400,553.6 399.5,553.6 399,553.5 398.5,553.7 398,554.1 397.5,554.5 397,554.7 396.5,554.9 396,555.3 395.5,555.6 395,555.3 394.5,555 394,554.7 393.5,554.7 393,554.7 392.5,554.8 392,555.4 391.5,556.1 391,556.1 390.5,555.4 390,554.8 389.5,554.7 389,554.7 388.5,554.7 388,555.4 387.5,556.5 387,557.3 386.5,556.3 386,555.3 385.5,554.8 385,554.8 384.5,554.8 384,555.1 383.5,556.1 383,557.2 382.5,556.8 382,555.8 381.5,554.8 381,554.8 380.5,554.8 380,554.8 379.5,555.7 379,556.7 378.5,557.2 378,556.2 377.5,555.2 377,554.8 376.5,554.8 376,554.8 375.5,555.3 375,556.3 374.5,557.3 374,556.6 373.5,555.6 373,554.9 372.5,554.9 372,554.9 371.5,554.9 371,556 370.5,557 370,557.2 369.5,556.1 369,555.1 368.5,554.9 368,554.9 367.5,554.9 367,555.2 366.5,555.5 366,555.9 365.5,555.5 365,555 364.5,554.7 364,554.6 363.5,554.4 363,554.3 362.5,554.6 362,555 361.5,554.8 361,554.2 360.5,553.8 360,554 359.5,554.2 359,554.4 358.5,555.6 358,556.5 357.5,556.7 357,556.4 356.5,556.2 356,556.1 355.5,556.1 355,556.1 354.5,556.2 354,556.3 353.5,556.4 353,556.4 352.5,556.2 352,556.1 351.5,556.1 351,556.1 350.5,556.1 350,556.3 349.5,556.4 349,556.5 348.5,556.3 348,556.1 347.5,556.1 347,556.1 346.5,556.1 346,556.2 345.5,556.3 345,556.5 344.5,556.3 344,556.2 343.5,556.1 343,556.1 342.5,556.1 342,556.1 341.5,556.2 341,556.2 340.5,556.2 340,556.2 339.5,556.1 339,556.1 338.5,556 338,555.7 337.5,555.8 337,556.4 336.5,557 336,556.3 335.5,555.6 335,555.2 334.5,555.2 334,555.3 333.5,555.4 333,555.7 332.5,556 332,555.9 331.5,555.5 331,555.3 330.5,555.3 330,555.3 329.5,555.3 329,555.6 328.5,556.1 328,556.2 327.5,555.8 327,555.4 326.5,555.3 326,555.3 325.5,555.3 325,555.4 324.5,555.8 324,556.1 323.5,555.9 323,555.5 322.5,555.3 322,555.3 321.5,555.2 321,555.3 320.5,555.8 320,556.3 319.5,556.3 319,555.8 318.5,555.3 318,555.2 317.5,555.2 317,555.2 316.5,555.6 316,556.1 315.5,556.6 315,556 314.5,555.5 314,555.2 313.5,555.2 313,555.2 312.5,555.4 312,556.4 311.5,557.3 311,557 310.5,556.1 310,555.2 309.5,555.2 309,555.2 308.5,555.1 308,555.5 307.5,555.9 307,556.1 306.5,555.7 306,555.3 305.5,555.1 305,555.1 304.5,555.1 304,555.4 303.5,556.1 303,556.8 302.5,556.3 302,555.6 301.5,555.1 301,555 300.5,555 300,555 299.5,556 299,557 298.5,557.2 298,556.2 297.5,555.2 297,555 296.5,555 296,555 295.5,555.4 295,556.1 294.5,556.8 294,555.9 293.5,555 293,554.3 292.5,554.1 292,553.8 291.5,553.9 291,554.8 290.5,555.9 290,555.9 289.5,555.2 289,555.1 288.5,555.7 288,556 287.5,556 287,556.1 286.5,556.2 286,556.2 285.5,556.1 285,556 284.5,556 284,556 283.5,556 283,556 282.5,556.2 282,556.3 281.5,556.2 281,556.1 280.5,556 280,556 279.5,556 279,556 278.5,556.2 278,556.4 277.5,556.4 277,556.3 276.5,556.1 276,556 275.5,556 275,556 274.5,556 274,556.1 273.5,556.2 273,556.1 272.5,556.1 272,556 271.5,556 271,556 270.5,556 270,556.1 269.5,556 269,555.7 268.5,555.1 268,554.6 267.5,554.6 267,554.6 266.5,554.6 266,555.2 265.5,556 265,556.8 264.5,555.9 264,555 263.5,554.5 263,554.5 262.5,554.5 262,554.7 261.5,555.2 261,555.7 260.5,555.5 260,555 259.5,554.5 259,554.5 258.5,554.5 258,554.5 257.5,555 257,555.5 256.5,555.8 256,555.2 255.5,554.7 255,554.5 254.5,554.5 254,554.5 253.5,554.8 253,555.4 252.5,556.1 252,555.6 251.5,555 251,554.5 250.5,554.5 250,554.5 249.5,554.5 249,555.4 248.5,556.2 248,556.3 247.5,555.5 247,554.7 246.5,554.5 246,554.5 245.5,554.5 245,555 244.5,555.8 244,556.6 243.5,555.8 243,555 242.5,554.5 242,554.5 241.5,554.5 241,554.7 240.5,555.6 240,556.5 239.5,556.3 239,555.5 238.5,554.6 238,554.6 237.5,554.6 237,554.6 236.5,554.9 236,555.2 235.5,555.4 235,555.1 234.5,554.8 234,554.6 233.5,554.6 233,554.6 232.5,555 232,556 231.5,557.1 231,556.5 230.5,555.5 230,554.7 229.5,554.7 229,554.7 228.5,554.7 228,555.6 227.5,556.5 227,556.8 226.5,555.9 226,555 225.5,554.7 225,554.7 224.5,554.6 224,554.8 223.5,555 223,555.2 222.5,554.7 222,554.1 221.5,553.7 221,553.5 220.5,553.5 220,553.7 219.5,554.8 219,555.9 218.5,556.1 218,555.4 217.5,554.7 217,554.7 216.5,554.8 216,554.9 215.5,555.5 215,556.5 214.5,557.2 214,556.3 213.5,555.4 213,554.9 212.5,555 212,555 211.5,555.3 211,556.2 210.5,557.1 210,556.7 209.5,555.8 209,555 208.5,555 208,555 207.5,555 207,555.6 206.5,556.2 206,556.5 205.5,555.9 205,555.3 204.5,555.1 204,555.1 203.5,555.1 203,555.5 202.5,556.2 202,557 201.5,556.4 201,555.7 200.5,555.1 200,555.1 199.5,555.2 199,555.2 198.5,555.5 198,555.9 197.5,555.9 197,555.6 196.5,555.2 196,555.2 195.5,555.2 195,555.2 194.5,555.4 194,555.8 193.5,556.1 193,555.8 192.5,555.4 192,555.2 191.5,555.2 191,555.2 190.5,555.4 190,555.8 189.5,556.2 189,556.1 188.5,555.7 188,555.3 187.5,555.3 187,555.3 186.5,555.3 186,555.7 185.5,556.3 185,556.6 184.5,556 184,555.5 183.5,555.3 183,555.3 182.5,555.3 182,555.5 181.5,555.9 181,556.2 180.5,556 180,555.6 179.5,555.3 179,555.3 178.5,555.3 178,555.3 177.5,556.1 177,556.9 176.5,557.1 176,556.3 175.5,555.5 175,555.3 174.5,555.3 174,555.3 173.5,555.7 173,556.4 172.5,557.1 172,556.4 171.5,555.7 171,555.3 170.5,555.3 170,555.3 169.5,555.4 169,556 168.5,556.6 168,556.5 167.5,555.9 167,555.3 166.5,555.3 166,555.3 165.5,555.3 165,555.8 164.5,556.4 164,556.9 163.5,556.2 163,555.6 162.5,555.2 162,555.2 161.5,555.2 161,555.4 160.5,555.8 160,556.1 159.5,556 159,555.6 158.5,555.2 158,555.2 157.5,555.2 157,555.2 156.5,556.1 156,557.1 155.5,557.5 155,556.4 154.5,555.4 154,555 153.5,554.9 153,554.7 152.5,554.8 152,555.1 151.5,555.4 151,554.8 150.5,554.2 150,553.8 149.5,553.9 149,554.1 148.5,554.4 148,555.5 147.5,556.5 147,556.7 146.5,555.9 146,555.1 145.5,555 145,555 144.5,555 144,555.5 143.5,556.2 143,556.8 142.5,556.1 142,555.4 141.5,555 141,555 140.5,555 140,555.2 139.5,555.8 139,556.4 138.5,556.2 138,555.6 137.5,555 137,555 136.5,555 136,554.9 135.5,555.5 135,556.2 134.5,556.6 134,555.9 133.5,555.2 133,554.9 132.5,554.9 132,554.9 131.5,555.1 131,555.6 130.5,556.1 130,555.8 129.5,555.3 129,554.9 128.5,554.9 128,554.9 127.5,554.9 127,555.2 126.5,555.5 126,555.6 125.5,555.3 125,554.9 124.5,554.8 124,554.8 123.5,554.8 123,555.2 122.5,555.7 122,556.2 121.5,555.7 121,555.1 120.5,554.8 120,554.8 119.5,554.8 119,554.9 118.5,555.5 118,556 117.5,555.9 117,555.4 116.5,554.8 116,554.8 115.5,554.8 115,554.8 114.5,555.2 114,555.6 113.5,555.9 113,555.4 112.5,555 112,554.8 111.5,554.8 111,554.8 110.5,555.1 110,556.1 109.5,557 109,556.5 108.5,555.6 108,554.8 107.5,554.8 107,554.8 106.5,554.8 106,555.7 105.5,556.5 105,556.8 104.5,555.9 104,555.1 103.5,554.8 103,554.8 102.5,554.8 102,555.3 101.5,556.1 101,556.8 100.5,556.2 100,555.4 99.5,554.9 99,554.9 98.5,554.9 98,554.9 97.5,555.3 97,555.7 96.5,555.7 96,555.3 95.5,554.9 95,554.9 94.5,554.9 94,554.9 93.5,555.2 93,555.7 92.5,556.1 92,555.6 91.5,555.2 91,555 90.5,555 90,555 89.5,555.2 89,556.1 88.5,556.9 88,556.6 87.5,555.8 87,555 86.5,555 86,555 85.5,555 85,555.4 84.5,555.9 84,556.1 83.5,555.5 83,554.9 82.5,554.6 82,554.4 81.5,554.2 81,554.5 80.5,555.4 80,556.4 79.5,555.7 79,554.8 78.5,554.2 78,554.5 77.5,554.7 77,554.9 76.5,555.9 76,556.9 75.5,557 75,556.2 74.5,555.3 74,555.2 73.5,555.2 73,555.3 72.5,555.9 72,556.8 71.5,557.7 71,556.8 70.5,555.8 70,555.3 69.5,555.3 69,555.3 68.5,555.5 68,556.4 67.5,557.2 67,557 66.5,556.2 66,555.4 65.5,555.4 65,555.4 64.5,555.4 64,556 63.5,556.8 63,557.2 62.5,556.5 62,555.7 61.5,555.4 61,555.4 60.5,555.3 60,555.6 59.5,556.5 59,557.4 58.5,556.7 58,555.6 57.5,554.8 57,554.7 56.5,554.3 56,553.4 55.5,552.9 55,552.5 54.5,552.6 54,552.4 53.5,552.3 53,552.3 52.5,552.3 52,552.3 51.5,552.3 51,552.4 50.5,552.5 50,552.4 49.5,552.3 49,552.3 48.5,552.3 48,552.3 47.5,552.3 47,552.5 46.5,553.3 46,554.7 45.5,555.3 45,554.8 44.5,554.8 44,554.8 43.5,554.8 43,555.1 42.5,555.5 42,555.8 41.5,555.4 41,555 40.5,554.8 40,554.8 39.5,554.8 39,555.1 38.5,556.1 38,557.2 37.5,556.2 37,554.6 36.5,553.6 36,553.4 35.5,553.4 35,553.4 34.5,553.6 34,553.8 33.5,553.8 33,553.6 32.5,553.5 32,553.4 31.5,553.4 31,553.4 30.5,553.5 30,553.5" fill="#00cfcf"/>
<polyline clip-path="url(#a3)" points="30.5,828.3 32.5,828.3 34.5,828.3 36.5,828.3 38.5,828.3 40.5,828.3 42.5,828.2 44.5,828.2 46.5,828.2 48.5,828.2 50.5,828.2 52.5,828.2 54.5,828.2 56.5,828.2 58.5,828.2 60.5,828.2 62.5,828.2 64.5,828.2 66.5,828.2 68.5,828.1 70.5,828.1 72.5,828.1 74.5,828.1 76.5,828.1 78.5,828.1 80.5,828.1 82.5,828.1 84.5,828.1 86.5,828.1 88.5,828.1 90.5,828.1 92.5,828 94.5,828 96.5,828 98.5,828 100.5,828 102.5,828 104.5,828 106.5,828 108.5,828 110.5,828 112.5,828 114.5,828 116.5,827.9 118.5,827.9 120.5,827.9 122.5,827.9 124.5,827.9 126.5,827.9 128.5,827.9 130.5,827.9 132.5,827.9 134.5,827.9 136.5,827.9 138.5,827.9 140.5,827.9 142.5,827.8 144.5,827.8 146.5,827.8 148.5,827.8 150.5,827.8 152.5,827.8 154.5,827.8 156.5,827.8 158.5,827.8 160.5,827.8 162.5,827.8 164.5,827.8 166.5,827.7 168.5,827.7 170.5,827.7 172.5,827.7 174.5,827.7 176.5,827.7 178.5,827.7 180.5,827.7 182.5,827.7 184.5,827.7 186.5,827.7 188.5,827.7 190.5,827.6 192.5,827.6 194.5,827.6 196.5,827.6 198.5,827.6 200.5,827.6 202.5,827.6 204.5,827.6 206.5,827.6 208.5,827.6 210.5,827.6 212.5,827.6 214.5,827.6 216.5,827.5 218.5,827.5 220.5,827.5 222.5,827.5 224.5,827.5 226.5,827.5 228.5,827.5 230.5,827.5 232.5,827.5 234.5,827.5 236.5,827.5 238.5,827.5 240.5,827.4 242.5,827.4 244.5,827.4 246.5,827.4 248.5,827.4 250.5,827.4 252.5,827.4 254.5,827.4 256.5,827.4 258.5,827.4 260.5,827.4 262.5,827.4 264.5,827.3 266.5,827.3 268.5,827.3 270.5,827.3 272.5,827.3 274.5,827.3 276.5,827.3 278.5,827.3 280.5,827.3 282.5,827.3 284.5,827.3 286.5,827.3 288.5,827.3 290.5,827.2 292.5,827.2 294.5,827.2 296.5,827.2 298.5,827.2 300.5,827.2 302.5,827.2 304.5,827.2 306.5,827.2 308.5,827.2 310.5,827.2 312.5,827.2 314.5,827.1 316.5,827.1 318.5,827.1 320.5,827.1 322.5,827.1 324.5,827.1 326.5,827.1 328.5,827.1 330.5,827.1 332.5,827.1 334.5,827.1 336.5,827.1 338.5,827 340.5,827 342.5,827 344.5,827 346.5,827 348.5,827 350.5,827 352.5,827 354.5,827 356.5,827 358.5,827 360.5,827 362.5,827 364.5,826.9 366.5,826.9 368.5,826.9 370.5,826.9 372.5,826.9 374.5,826.9 376.5,826.9 378.5,826.9 380.5,826.9 382.5,826.9 384.5,826.9 386.5,826.9 388.5,826.8 390.5,826.8 392.5,826.8 394.5,826.8 396.5,826.8 398.5,826.8 400.5,826.8 402.5,826.8 404.5,826.8 406.5,826.8 408.5,826.8 410.5,826.8 412.5,826.7 414.5,826.7 416.5,826.7 418.5,826.7 420.5,826.7 422.5,826.7 424.5,826.7 426.5,826.7 428.5,826.7 430.5,826.7 432.5,826.7 434.5,826.7 436.5,826.7 438.5,826.6 440.5,826.6 442.5,826.6 444.5,826.6 446.5,826.6 448.5,826.6 450.5,826.6 452.5,826.6 454.5,826.6 456.5,826.6 458.5,826.6 460.5,826.6 462.5,826.5 464.5,826.5 466.5,826.5 468.5,826.5 470.5,826.5 472.5,826.5 474.5,826.5 476.5,826.5 478.5,826.5 480.5,826.5 482.5,826.5 484.5,826.5 486.5,826.4 488.5,826.4 490.5,826.4 492.5,826.4 494.5,826.4 496.5,826.4 498.5,826.4 500.5,826.4 502.5,826.4 504.5,826.4 506.5,826.4 508.5,826.4 510.5,826.4 512.5,826.3 514.5,826.3 516.5,826.3 518.5,826.3 520.5,826.3 522.5,826.3 524.5,826.3 526.5,826.3 528.5,826.3 530.5,826.3 532.5,826.3 534.5,826.3 536.5,826.2 538.5,826.2 540.5,826.2 542.5,826.2 544.5,826.2 546.5,826.2 548.5,826.2 550.5,826.2 552.5,826.1 554.5,826.1 556.5,826.1 558.5,826 560.5,826 562.5,825.9 564.5,825.8 566.5,825.7 568.5,825.7 570.5,825.6 572.5,825.5 574.5,825.5 576.5,825.5 578.5,825.5 580.5,825.5 582.5,825.6 584.5,825.6 586.5,825.7 588.5,825.8 590.5,825.8 592.5,825.9 594.5,825.9 596.5,825.9 598.5,825.9 600.5,825.9 602.5,825.9 604.5,825.9 606.5,825.9 608.5,825.8 610.5,825.8 612.5,825.7 614.5,825.6 616.5,825.5 618.5,825.5 620.5,825.4 622.5,825.4 624.5,825.3 626.5,825.3 628.5,825.3 630.5,825.3 632.5,825.4 634.5,825.4 636.5,825.5 638.5,825.6 640.5,825.7 642.5,825.7 644.5,825.8 646.5,825.8 648.5,825.9 650.5,825.9 652.5,825.9 654.5,826 656.5,826 658.5,826 660.5,826 662.5,826 664.5,826 666.5,826 668.5,826 670.5,826.1 672.5,826.1 674.5,826.1 676.5,826.1 678.5,826.2 680.5,826.2 682.5,826.2 684.5,826.3 686.5,826.3 688.5,826.4 690.5,826.4 692.5,826.4 694.5,826.5 696.5,826.5 698.5,826.5 700.5,826.5 702.5,826.5 704.5,826.5 706.5,826.4 708.5,826.4 710.5,826.4 712.5,826.3 714.5,826.2 716.5,826.2 718.5,826.1 720.5,826 722.5,826 724.5,825.9 726.5,825.8 728.5,825.7 730.5,825.7 732.5,825.6 734.5,825.5 736.5,825.4 738.5,825.3 740.5,825.2 742.5,825.2 744.5,825.1 746.5,825.1 748.5,825 750.5,825 752.5,825 754.5,825 756.5,825 758.5,825.1 760.5,825.1 762.5,825.2 764.5,825.3 766.5,825.4 768.5,825.5 770.5,825.5 772.5,825.6 774.5,825.7 776.5,825.8 778.5,825.9 780.5,826 782.5,826.1 784.5,826.1 786.5,826.2 788.5,826.3 790.5,826.4 792.5,826.5 794.5,826.6 796.5,826.7 798.5,826.7 800.5,826.8 802.5,826.9 804.5,826.9 806.5,826.9 808.5,826.9 810.5,826.9 812.5,826.8 814.5,826.8 816.5,826.7 818.5,826.7 820.5,826.6 822.5,826.5 824.5,826.4 826.5,826.4 828.5,826.4 830.5,826.3 832.5,826.3 834.5,826.4 836.5,826.5 838.5,826.5 840.5,826.7 842.5,826.8 844.5,826.9 846.5,827 848.5,827.1 850.5,827.2 852.5,827.2 854.5,827.2 856.5,827.1 858.5,827 860.5,826.8 862.5,826.7 864.5,826.5 866.5,826.4 868.5,826.3 870.5,826.2 872.5,826.1 874.5,826.1 876.5,826.1 878.5,826 880.5,826 882.5,826 884.5,826 886.5,826 888.5,826 890.5,826 892.5,826 894.5,826 896.5,826 898.5,826 900.5,826 902.5,826 904.5,826 906.5,826 908.5,826 910.5,826 912.5,826 914.5,826 916.5,826 918.5,826 920.5,826 922.5,826 924.5,826 926.5,826 928.5,826 930.5,826 932.5,826 934.5,826 936.5,826 938.5,826 940.5,826 942.5,826 944.5,826 946.5,826" fill="none" stroke="#ff6929" stroke-width="1.4" stroke-linejoin="round" />
<polygon clip-path="url(#a4)" points="991,44.5 991.5,44.6 992,44.9 992.5,44.9 993,44.9 993.5,44.7 994,44.7 994.5,44.4 995,44.2 995.5,44.5 996,44.7 996.5,44.7 997,44.7 997.5,44.7 998,44.7 998.5,44.9 999,44.9 999.5,44.9 1000,44.7 1000.5,44.7 1001,44.6 1001.5,44.6 1002,44.6 1002.5,44.9 1003,44.9 1003.5,44.9 1004,44.6 1004.5,44.7 1005,44.6 1005.5,44.6 1006,44.6 1006.5,44.9 1007,44.4 1007.5,43.5 1008,44 1008.5,44.7 1009,44.8 1009.5,44.8 1010,44.8 1010.5,44.7 1011,44.7 1011.5,44.7 1012,44.6 1012.5,44.7 1013,44.9 1013.5,44.9 1014,44.7 1014.5,44.7 1015,44.7 1015.5,44.8 1016,44.7 1016.5,44.8 1017,44.9 1017.5,44.9 1018,44.7 1018.5,44.7 1019,44.7 1019.5,44.6 1020,44.4 1020.5,44.7 1021,44.8 1021.5,44.9 1022,44.9 1022.5,44.9 1023,44.9 1023.5,44.9 1024,44.8 1024.5,44.7 1025,44.8 1025.5,44.9 1026,44.7 1026.5,44.7 1027,44.7 1027.5,44.7 1028,44.7 1028.5,44.6 1029,44.6 1029.5,44.7 1030,44.7 1030.5,44.7 1031,44.9 1031.5,44.9 1032,44.9 1032.5,44.6 1033,44.6 1033.5,44.9 1034,44.9 1034.5,44.9 1035,44.8 1035.5,44.8 1036,44.8 1036.5,44.9 1037,44.9 1037.5,44.8 1038,44.8 1038.5,44.8 1039,44.9 1039.5,44.9 1040,44.8 1040.5,44.6 1041,44.2 1041.5,44.1 1042,44.5 1042.5,44.7 1043,44.8 1043.5,44.8 1044,44.7 1044.5,44.7 1045,44.6 1045.5,44.4 1046,44.5 1046.5,44.7 1047,44.7 1047.5,44.7 1048,44.8 1048.5,44.8 1049,44.7 1049.5,44.8 1050,44.8 1050.5,44.8 1051,44.8 1051.5,44.8 1052,44.7 1052.5,44.7 1053,44.7 1053.5,44.4 1054,44.3 1054.5,44.5 1055,44.7 1055.5,44.7 1056,44.8 1056.5,44.8 1057,44.7 1057.5,44.5 1058,44.4 1058.5,44.5 1059,44.6 1059.5,44.8 1060,44.8 1060.5,44.8 1061,44.9 1061.5,44.9 1062,44.9 1062.5,44.7 1063,44.7 1063.5,44.8 1064,44.8 1064.5,44.8 1065,44.8 1065.5,44.8 1066,44.5 1066.5,44.1 1067,44.5 1067.5,44.7 1068,44.7 1068.5,44.7 1069,44.8 1069.5,44.8 1070,44.7 1070.5,44.6 1071,44.7 1071.5,44.7 1072,44.8 1072.5,44.8 1073,44.8 1073.5,44.8 1074,44.7 1074.5,44.3 1075,44 1075.5,44.5 1076,44.8 1076.5,44.8 1077,44.8 1077.5,44.8 1078,44.9 1078.5,44.9 1079,44.9 1079.5,44.9 1080,44.9 1080.5,44.8 1081,44.8 1081.5,44.8 1082,44.7 1082.5,44.7 1083,44.5 1083.5,44.4 1084,44.7 1084.5,44.9 1085,44.9 1085.5,44.8 1086,44.8 1086.5,44.8 1087,44.5 1087.5,44.2 1088,44.5 1088.5,44.9 1089,44.9 1089.5,44.8 1090,44.8 1090.5,44.8 1091,44.9 1091.5,44.9 1092,44.8 1092.5,44.8 1093,44.8 1093.5,44.7 1094,44.7 1094.5,44.7 1095,44.8 1095.5,44.8 1096,44.5 1096.5,44.6 1097,44.6 1097.5,44.7 1098,44.7 1098.5,44.6 1099,44.6 1099.5,44.6 1100,44.9 1100.5,44.9 1101,44.9 1101.5,44.6 1102,44.6 1102.5,44.8 1103,44.8 1103.5,44.8 1104,44.6 1104.5,44.5 1105,44.8 1105.5,44.9 1106,44.9 1106.5,44.6 1107,44.6 1107.5,44.6 1108,44.7 1108.5,44.7 1109,44.9 1109.5,44.9 1110,44.9 1110.5,44.8 1111,44.8 1111.5,44.7 1112,44.7 1112.5,44.7 1113,44.8 1113.5,44.8 1114,44.8 1114.5,44.9 1115,44.9 1115.5,44.8 1116,44.8 1116.5,44.2 1117,43.5 1117.5,44.1 1118,44.6 1118.5,44.6 1119,44.6 1119.5,44.9 1120,44.9 1120.5,44.9 1121,44.6 1121.5,44.6 1122,44.8 1122.5,44.8 1123,44.8 1123.5,44.7 1124,44.7 1124.5,44.9 1125,44.9 1125.5,44.8 1126,44.8 1126.5,44.8 1127,44.8 1127.5,44.8 1128,44.8 1128.5,44.7 1129,44.6 1129.5,44.5 1130,44.8 1130.5,44.9 1131,44.9 1131.5,44.9 1132,44.9 1132.5,44.8 1133,44.8 1133.5,44.8 1134,44.7 1134.5,44.8 1135,44.8 1135.5,44.8 1136,44.8 1136.5,44.9 1137,44.9 1137.5,44.9 1138,44.8 1138.5,44.9 1139,44.7 1139.5,44.7 1140,44.7 1140.5,44.6 1141,44.6 1141.5,44.6 1142,44.5 1142.5,44.5 1143,44.7 1143.5,44.7 1144,44.6 1144.5,44.6 1145,44.6 1145.5,44.8 1146,44.4 1146.5,44.1 1147,44.4 1147.5,44.7 1148,44.8 1148.5,44.8 1149,44.8 1149.5,44.9 1150,44.7 1150.5,44.2 1151,44.4 1151.5,44.7 1152,44.7 1152.5,44.7 1153,44.7 1153.5,44.8 1154,44.7 1154.5,44.5 1155,44.5 1155.5,44.6 1156,44.8 1156.5,44.8 1157,44.9 1157.5,44.9 1158,44.9 1158.5,44.6 1159,44.5 1159.5,44.5 1160,44.7 1160.5,44.7 1161,44.8 1161.5,44.8 1162,44.8 1162.5,44.4 1163,43.6 1163.5,43.7 1164,44.5 1164.5,44.8 1165,44.8 1165.5,44.8 1166,44.8 1166.5,44.8 1167,44.8 1167.5,44.7 1168,44.7 1168.5,44.7 1169,44.9 1169.5,44.9 1170,44.9 1170.5,44.9 1171,44.8 1171.5,44.5 1172,44.5 1172.5,44.7 1173,44.7 1173.5,44.7 1174,44.6 1174.5,44.6 1175,44.6 1175.5,44.4 1176,44.3 1176.5,44.5 1177,44.7 1177.5,44.7 1178,44.9 1178.5,44.9 1179,44.9 1179.5,44.9 1180,44.8 1180.5,44.7 1181,44.7 1181.5,44.7 1182,44.7 1182.5,44.7 1183,44.8 1183.5,44.8 1184,44.7 1184.5,44.5 1185,44.6 1185.5,44.7 1186,44.9 1186.5,44.9 1187,44.6 1187.5,44.6 1188,44.6 1188.5,44.6 1189,44.7 1189.5,44.6 1190,44.6 1190.5,44.6 1191,44.9 1191.5,44.9 1192,44.8 1192.5,44.5 1193,44.5 1193.5,44.9 1194,44.9 1194.5,44.9 1195,44.9 1195.5,44.9 1196,44.7 1196.5,44 1197,43.6 1197.5,44.2 1198,44.7 1198.5,44.7 1199,44.7 1199.5,44.7 1200,44.9 1200.5,44.9 1201,44.8 1201.5,44.8 1202,44.8 1202.5,44.6 1203,44.6 1203.5,44.6 1204,44.6 1204.5,44.5 1205,44.2 1205.5,44.4 1206,44.7 1206.5,44.9 1207,44.9 1207.5,44.9 1208,44.7 1208.5,44.7 1209,44.4 1209.5,44.1 1210,44.4 1210.5,44.9 1211,44.9 1211.5,44.9 1212,44.6 1212.5,44.6 1213,44.8 1213.5,44.7 1214,44.7 1214.5,44.9 1215,44.9 1215.5,44.9 1216,44.9 1216.5,44.9 1217,44.9 1217.5,44.8 1218,44.8 1218.5,44.8 1219,44.8 1219.5,44.9 1220,44.9 1220.5,44.9 1221,44.9 1221.5,44.8 1222,44.6 1222.5,44.7 1223,44.7 1223.5,44.8 1224,44.8 1224.5,44.8 1225,44.9 1225.5,44.8 1226,44.6 1226.5,44.5 1227,44.7 1227.5,44.7 1228,44.7 1228.5,44.7 1229,44.7 1229.5,44.7 1230,44.4 1230.5,44.1 1231,44.4 1231.5,44.9 1232,44.9 1232.5,44.6 1233,44.6 1233.5,44.6 1234,44.7 1234.5,44.6 1235,44.6 1235.5,44.6 1236,44.6 1236.5,44.6 1237,44.6 1237.5,44.6 1238,44.9 1238.5,44.8 1239,44.4 1239.5,44.5 1240,44.7 1240.5,44.8 1241,44.8 1241.5,44.9 1242,44.9 1242.5,44.9 1243,44.8 1243.5,44.8 1244,44.9 1244.5,44.9 1245,44.9 1245.5,44.6 1246,44.6 1246.5,44.6 1247,44.7 1247.5,44.6 1248,44.8 1248.5,44.8 1249,44.8 1249.5,44.8 1250,44.8 1250.5,44.8 1251,44.6 1251.5,44.5 1252,44.6 1252.5,44.7 1253,44.7 1253.5,44.9 1254,44.9 1254.5,44.9 1255,44.6 1255.5,43.8 1256,43.7 1256.5,44.5 1257,44.8 1257.5,44.7 1258,44.7 1258.5,44.9 1259,44.9 1259.5,44.9 1260,44.7 1260.5,44.7 1261,44.7 1261.5,44.7 1262,44.7 1262.5,44.7 1263,44.7 1263.5,44.7 1264,44.7 1264.5,44.7 1265,44.8 1265.5,44.8 1266,44.8 1266.5,44.7 1267,44.7 1267.5,44.9 1268,44.9 1268.5,44.9 1269,44.9 1269.5,44.9 1270,44.9 1270.5,44.7 1271,44.7 1271.5,44.8 1272,44.3 1272.5,43.6 1273,44 1273.5,44.7 1274,44.6 1274.5,44.6 1275,44.6 1275.5,44.6 1276,44.6 1276.5,44.4 1277,44.6 1277.5,44.8 1278,44.9 1278.5,44.9 1279,44.9 1279.5,44.9 1280,44.9 1280.5,44.5 1281,44.1 1281.5,44.4 1282,44.9 1282.5,44.9 1283,44.9 1283.5,44.7 1284,44.7 1284.5,44.9 1285,44.9 1285.5,44.9 1286,44.7 1286.5,44.7 1287,44.7 1287.5,44.7 1288,44.7 1288.5,44.9 1289,44.6 1289.5,44.4 1290,44.7 1290.5,44.9 1291,44.7 1291.5,44.7 1292,44.7 1292.5,44.6 1293,44.6 1293.5,44.7 1294,44.8 1294.5,44.8 1295,44.8 1295.5,44.8 1296,44.8 1296.5,44.9 1297,44.8 1297.5,43.8 1298,43.5 1298.5,44.3 1299,44.9 1299.5,44.9 1300,44.8 1300.5,44.8 1301,44.8 1301.5,44.5 1302,44 1302.5,44.4 1303,44.6 1303.5,44.6 1304,44.7 1304.5,44.7 1305,44.7 1305.5,44.9 1306,44.9 1306.5,44.8 1307,44.9 1307.5,44.9 1308,44.9 1308.5,44.9 1309,44.9 1309.5,44.7 1310,44.3 1310.5,44.3 1311,44.6 1311.5,44.9 1312,44.9 1312.5,44.9 1313,44.7 1313.5,44.7 1314,44.5 1314.5,44.3 1315,44.4 1315.5,44.8 1316,44.8 1316.5,44.8 1317,44.7 1317.5,44.7 1318,44.6 1318.5,44.2 1319,43.9 1319.5,44.5 1320,44.9 1320.5,44.9 1321,44.8 1321.5,44.8 1322,44.8 1322.5,44.7 1323,44.5 1323.5,44.5 1324,44.7 1324.5,44.8 1325,44.6 1325.5,44.6 1326,44.8 1326.5,44.7 1327,44.4 1327.5,44.4 1328,44.8 1328.5,44.9 1329,44.8 1329.5,44.8 1330,44.7 1330.5,44.7 1331,44.1 1331.5,43.7 1332,44.3 1332.5,44.9 1333,44.9 1333.5,44.9 1334,44.9 1334.5,44.9 1335,44.9 1335.5,44.9 1336,44.9 1336.5,44.9 1337,44.9 1337.5,44.9 1338,44.9 1338.5,44.9 1339,44.9 1339.5,44.6 1340,44.4 1340.5,44.6 1341,44.8 1341.5,44.8 1342,44.6 1342.5,44.6 1343,44.7 1343.5,44.4 1344,44 1344.5,44.4 1345,44.8 1345.5,44.7 1346,44.7 1346.5,44.7 1347,44.7 1347.5,44.6 1348,44.1 1348.5,44.1 1349,44.6 1349.5,44.7 1350,44.7 1350.5,44.7 1351,44.8 1351.5,44.8 1352,44.6 1352.5,44.2 1353,44.5 1353.5,44.9 1354,44.9 1354.5,44.9 1355,44.8 1355.5,44.8 1356,44.8 1356.5,44.8 1357,44.8 1357.5,44.7 1358,44.7 1358.5,44.9 1359,44.9 1359.5,44.9 1360,44.8 1360.5,44.4 1361,44.1 1361.5,44.6 1362,44.9 1362.5,44.6 1363,44.6 1363.5,44.6 1364,44.6 1364.5,44.4 1365,44.3 1365.5,44.4 1366,44.8 1366.5,44.7 1367,44.7 1367.5,44.7 1368,44.7 1368.5,44.7 1369,44.6 1369.5,44.6 1370,44.6 1370.5,44.7 1371,44.7 1371.5,44.8 1372,44.8 1372.5,44.8 1373,44.4 1373.5,44.1 1374,44.3 1374.5,44.8 1375,44.9 1375.5,44.8 1376,44.8 1376.5,44.8 1377,44.9 1377.5,44.9 1378,44.7 1378.5,44.8 1379,44.8 1379.5,44.8 1380,44.8 1380.5,44.8 1381,44.7 1381.5,44.2 1382,43.6 1382.5,44.2 1383,44.7 1383.5,44.7 1384,44.7 1384.5,44.9 1385,44.9 1385.5,44.9 1386,44.9 1386.5,44.9 1387,44.9 1387.5,44.7 1388,44.7 1388.5,44.7 1389,44.7 1389.5,44.7 1390,44.7 1390.5,44.7 1391,44.8 1391.5,44.9 1392,44.9 1392.5,44.9 1393,44.9 1393.5,44.9 1394,44.9 1394.5,44.8 1395,44.6 1395.5,44.7 1396,44.7 1396.5,44.6 1397,44.6 1397.5,44.8 1398,44.8 1398.5,44.6 1399,44.4 1399.5,44.6 1400,44.7 1400.5,44.8 1401,44.8 1401.5,44.7 1402,44.7 1402.5,44.6 1403,44.6 1403.5,44.8 1404,44.6 1404.5,44.6 1405,44.6 1405.5,44.8 1406,44.8 1406.5,44.8 1407,44.8 1407.5,44.8 1408,44.8 1408.5,44.8 1409,44.8 1409.5,44.8 1410,44.8 1410.5,44.9 1411,44.4 1411.5,44 1412,44.6 1412.5,44.9 1413,44.9 1413.5,44.9 1414,44.9 1414.5,44.9 1415,44.7 1415.5,44.3 1416,44.4 1416.5,44.8 1417,44.9 1417.5,44.9 1418,44.9 1418.5,44.7 1419,44.6 1419.5,44.1 1420,43.8 1420.5,44.3 1421,44.9 1421.5,44.9 1422,44.9 1422.5,44.8 1423,44.8 1423.5,44.5 1424,44.3 1424.5,44.4 1425,44.8 1425.5,44.8 1426,44.8 1426.5,44.8 1427,44.8 1427.5,44.7 1428,44.7 1428.5,44.6 1429,44.8 1429.5,44.8 1430,44.6 1430.5,44.6 1431,44.6 1431.5,44.7 1432,44.6 1432.5,44.6 1433,44.6 1433.5,44.7 1434,44.7 1434.5,44.7 1435,44.7 1435.5,44.9 1436,44.9 1436.5,44.6 1437,44.6 1437.5,44.7 1438,44.6 1438.5,44.6 1439,44.6 1439.5,44.6 1440,44.6 1440.5,44.1 1441,43.7 1441.5,44.4 1442,44.6 1442.5,44.6 1443,44.8 1443.5,44.8 1444,44.8 1444.5,44.6 1445,44.4 1445.5,44.5 1446,44.8 1446.5,44.8 1447,44.7 1447.5,44.7 1448,44.7 1448.5,44.6 1449,44.4 1449.5,44.3 1450,44.6 1450.5,44.7 1451,44.9 1451.5,44.9 1452,44.9 1452.5,44.8 1453,44.3 1453.5,44 1454,44.4 1454.5,44.9 1455,44.6 1455.5,44.6 1456,44.9 1456.5,44.9 1457,44.9 1457.5,44.8 1458,44.8 1458.5,44.8 1459,44.6 1459.5,44.6 1460,44.9 1460.5,44.9 1461,44.9 1461.5,44.3 1462,43.8 1462.5,44.4 1463,44.9 1463.5,44.9 1464,44.9 1464.5,44.9 1465,44.9 1465.5,44.6 1466,44.6 1466.5,44.7 1467,44.8 1467.5,44.8 1468,44.7 1468.5,44.7 1469,44.7 1469.5,44.6 1470,44.2 1470.5,44.2 1471,44.7 1471.5,44.9 1472,44.9 1472.5,44.9 1473,44.8 1473.5,44.8 1474,44.6 1474.5,44.4 1475,44.6 1475.5,44.7 1476,44.7 1476.5,44.7 1477,44.7 1477.5,44.7 1478,44.6 1478.5,44.4 1479,44.4 1479.5,44.8 1480,44.9 1480.5,44.9 1481,44.9 1481.5,44.9 1482,44.8 1482.5,44.6 1483,44.4 1483.5,44.5 1484,44.7 1484.5,44.7 1485,44.8 1485.5,44.8 1486,44.8 1486.5,44.8 1487,44.7 1487.5,44.8 1488,44.9 1488.5,44.9 1489,44.9 1489.5,44.9 1490,44.9 1490.5,44.9 1491,44.8 1491.5,44.5 1492,44.6 1492.5,44.6 1493,44.6 1493.5,44.6 1494,44.8 1494.5,44.8 1495,44.5 1495.5,44.1 1496,44.4 1496.5,44.7 1497,44.7 1497.5,44.7 1498,44.7 1498.5,44.7 1499,44.9 1499.5,44.8 1500,44.8 1500.5,44.6 1501,44.7 1501.5,44.9 1502,44.9 1502.5,44.9 1503,44.8 1503.5,44.8 1504,44.7 1504.5,44.9 1505,44.9 1505.5,44.8 1506,44.8 1506.5,44.8 1507,44.7 1507.5,44.4 1508,44 1508.5,44.1 1509,44.5 1509.5,44.6 1510,44.6 1510.5,44.6 1511,44.8 1511.5,44.7 1512,44.1 1512.5,43.6 1513,44.4 1513.5,44.9 1514,44.9 1514.5,44.7 1515,44.7 1515.5,44.7 1516,44.7 1516.5,44.6 1517,44.6 1517.5,44.6 1518,44.6 1518.5,44.8 1519,44.8 1519.5,44.8 1520,44.9 1520.5,44.9 1521,44.6 1521.5,44.6 1522,44.6 1522.5,44.6 1523,44.6 1523.5,44.6 1524,44.8 1524.5,44.6 1525,44.5 1525.5,44.6 1526,44.8 1526.5,44.6 1527,44.6 1527.5,44.8 1528,44.8 1528.5,44.7 1529,44.7 1529.5,44.7 1530,44.8 1530.5,44.9 1531,44.9 1531.5,44.7 1532,44.7 1532.5,44.7 1533,44.7 1533.5,44.5 1534,44.5 1534.5,44.7 1535,44.7 1535.5,44.6 1536,44.6 1536.5,44.6 1537,44.7 1537.5,44.7 1538,44.6 1538.5,44.6 1539,44.6 1539.5,44.9 1540,44.9 1540.5,44.6 1541,44.6 1541.5,44.5 1542,44.7 1542.5,44.8 1543,44.9 1543.5,44.9 1544,44.9 1544.5,44.8 1545,44.8 1545.5,44.6 1546,44.6 1546.5,44.7 1547,44.8 1547.5,44.8 1548,44.8 1548.5,44.9 1549,44.9 1549.5,44.6 1550,44 1550.5,43.9 1551,44.5 1551.5,44.9 1552,44.9 1552.5,44.8 1553,44.8 1553.5,44.8 1554,44.8 1554.5,44.7 1555,44.7 1555.5,44.7 1556,44.7 1556.5,44.8 1557,44.8 1557.5,44.6 1558,44.4 1558.5,44 1559,44.1 1559.5,44.5 1560,44.6 1560.5,44.6 1561,44.6 1561.5,44.7 1562,44.7 1562.5,44.1 1563,43.8 1563.5,44.4 1564,44.8 1564.5,44.8 1565,44.8 1565.5,44.8 1566,44.8 1566.5,44.8 1567,44.6 1567.5,44.7 1568,44.8 1568.5,44.8 1569,44.8 1569.5,44.7 1570,44.7 1570.5,44.7 1571,44.7 1571.5,44.7 1572,44.7 1572.5,44.7 1573,44.8 1573.5,44.8 1574,44.8 1574.5,44.9 1575,44.8 1575.5,44.7 1576,44.7 1576.5,44.8 1577,44.9 1577.5,44.9 1578,44.9 1578.5,44.7 1579,44.6 1579.5,44.5 1580,44.5 1580.5,44.7 1581,44.8 1581.5,44.8 1582,44.8 1582.5,44.8 1583,44.8 1583.5,44.4 1584,44.2 1584.5,44.5 1585,44.7 1585.5,44.7 1586,44.8 1586.5,44.8 1587,44.8 1587.5,44.7 1588,44.4 1588.5,44.5 1589,44.9 1589.5,44.9 1590,44.8 1590.5,44.8 1591,44.8 1591.5,44.7 1592,44.3 1592.5,44.1 1593,44.5 1593.5,44.7 1594,44.7 1594.5,44.7 1595,44.7 1595.5,44.9 1596,44.4 1596.5,43.6 1597,44.1 1597.5,44.7 1598,44.6 1598.5,44.6 1599,44.8 1599.5,44.8 1600,44.7 1600.5,44.4 1601,44.4 1601.5,44.6 1602,44.9 1602.5,44.9 1603,44.7 1603.5,44.7 1604,44.7 1604.5,44.2 1605,43.6 1605.5,44.2 1606,44.7 1606.5,44.7 1607,44.9 1607.5,44.9 1608,44.9 1608.5,44.5 1609,44.3 1609.5,44.6 1610,44.9 1610.5,44.9 1611,44.7 1611.5,44.7 1612,44.7 1612.5,44.7 1613,44.6 1613.5,44.6 1614,44.7 1614.5,44.8 1615,44.9 1615.5,44.9 1616,44.7 1616.5,44.7 1617,44.4 1617.5,44 1618,44.3 1618.5,44.8 1619,44.8 1619.5,44.8 1620,44.7 1620.5,44.7 1621,44.7 1621.5,44.4 1622,44.4 1622.5,44.6 1623,44.7 1623.5,44.7 1624,44.9 1624.5,44.9 1625,44.8 1625.5,44.5 1626,44.1 1626.5,44.3 1627,44.6 1627.5,44.6 1628,44.7 1628.5,44.7 1629,44.9 1629.5,44.6 1630,43.9 1630.5,43.9 1631,44.5 1631.5,44.7 1632,44.7 1632.5,44.7 1633,44.8 1633.5,44.8 1634,44.8 1634.5,44.7 1635,44.7 1635.5,44.8 1636,44.8 1636.5,44.8 1637,44.7 1637.5,44.7 1638,44.5 1638.5,43.9 1639,44.2 1639.5,44.8 1640,44.9 1640.5,44.9 1641,44.7 1641.5,44.7 1642,44.7 1642.5,44.7 1643,44.6 1643.5,44.7 1644,44.7 1644.5,44.7 1645,44.7 1645.5,44.7 1646,44.9 1646.5,44.7 1647,44.6 1647.5,44.6 1648,44.8 1648.5,44.9 1649,44.9 1649.5,44.9 1650,44.8 1650.5,44.8 1651,44.6 1651.5,44.6 1652,44.6 1652.5,44.9 1653,44.9 1653.5,44.9 1654,44.7 1654.5,44.7 1655,44.7 1655.5,44.6 1656,44.7 1656.5,44.8 1657,44.8 1657.5,44.9 1658,44.9 1658.5,44.9 1659,44.4 1659.5,44 1660,44.2 1660.5,44.5 1661,44.6 1661.5,44.7 1662,44.7 1662.5,44.7 1663,44.7 1663.5,44.3 1664,44.2 1664.5,44.6 1665,44.8 1665.5,44.6 1666,44.6 1666.5,44.6 1667,44.6 1667.5,44.5 1668,44.3 1668.5,44.5 1669,44.8 1669.5,44.6 1670,44.6 1670.5,44.6 1671,44.6 1671.5,44.6 1672,44.6 1672.5,44.6 1673,44.7 1673.5,44.9 1674,44.9 1674.5,44.7 1675,44.7 1675.5,44.7 1676,44.3 1676.5,44 1677,44.3 1677.5,44.6 1678,44.6 1678.5,44.6 1679,44.6 1679.5,44.6 1680,44.8 1680.5,44.6 1681,44.3 1681.5,44.5 1682,44.6 1682.5,44.8 1683,44.8 1683.5,44.9 1684,44.9 1684.5,44.9 1685,44.6 1685.5,44.6 1686,44.6 1686.5,44.9 1687,44.9 1687.5,44.8 1688,44.8 1688.5,44.6 1689,44.3 1689.5,44.5 1690,44.6 1690.5,44.6 1691,44.6 1691.5,44.6 1692,44.6 1692.5,44.5 1693,44.5 1693.5,44.5 1694,44.7 1694.5,44.8 1695,44.8 1695.5,44.8 1696,44.8 1696.5,44.9 1697,44.8 1697.5,44.7 1698,44.7 1698.5,44.8 1699,44.8 1699.5,44.6 1700,44.6 1700.5,44.8 1701,44.6 1701.5,44.3 1702,44.2 1702.5,44.5 1703,44.9 1703.5,44.9 1704,44.9 1704.5,44.8 1705,44.8 1705.5,44.4 1706,44.1 1706.5,44.5 1707,44.6 1707.5,44.6 1708,44.6 1708.5,44.7 1709,44.7 1709.5,44.4 1710,44 1710.5,44.2 1711,44.7 1711.5,44.8 1712,44.8 1712.5,44.8 1713,44.8 1713.5,44.7 1714,44.1 1714.5,43.8 1715,44.2 1715.5,44.6 1716,44.7 1716.5,44.7 1717,44.7 1717.5,44.8 1718,44.7 1718.5,44.7 1719,44.8 1719.5,44.8 1720,44.8 1720.5,44.8 1721,44.8 1721.5,44.9 1722,44.8 1722.5,44.3 1723,44.3 1723.5,44.5 1724,44.6 1724.5,44.6 1725,44.6 1725.5,44.8 1726,44.8 1726.5,44.9 1727,44.8 1727.5,44.9 1728,44.9 1728.5,44.9 1729,44.9 1729.5,44.9 1730,44.9 1730.5,44.8 1731,44.5 1731.5,44.6 1732,44.8 1732.5,44.9 1733,44.9 1733.5,44.9 1734,44.9 1734.5,44.6 1735,44.2 1735.5,44.1 1736,44.5 1736.5,44.7 1737,44.8 1737.5,44.8 1738,44.8 1738.5,44.9 1739,44.7 1739.5,44.4 1740,44.5 1740.5,44.7 1741,44.8 1741.5,44.8 1742,44.9 1742.5,44.9 1743,44.6 1743.5,43.5 1744,43.4 1744.5,44.2 1745,44.7 1745.5,44.7 1746,44.9 1746.5,44.9 1747,44.9 1747.5,44.9 1748,44.9 1748.5,44.6 1749,44.6 1749.5,44.6 1750,44.9 1750.5,44.9 1751,44.9 1751.5,44.6 1752,44.4 1752.5,44.6 1753,44.9 1753.5,44.9 1754,44.7 1754.5,44.7 1755,44.7 1755.5,44.7 1756,44.6 1756.5,44.7 1757,44.8 1757.5,44.9 1758,44.9 1758.5,44.9 1759,44.8 1759.5,44.8 1760,44.8 1760.5,44.9 1761,44.9 1761.5,44.9 1762,44.9 1762.5,44.9 1763,44.6 1763.5,44.6 1764,44.5 1764.5,44.1 1765,43.9 1765.5,44.6 1766,44.8 1766.5,44.8 1767,44.7 1767.5,44.7 1768,44.7 1768.5,44.3 1769,43.8 1769.5,44.3 1770,44.8 1770.5,44.8 1771,44.9 1771.5,44.9 1772,44.9 1772.5,44.9 1773,44.8 1773.5,44.5 1774,44.6 1774.5,44.7 1775,44.7 1775.5,44.7 1776,44.9 1776.5,44.9 1777,44.8 1777.5,44.6 1778,44.6 1778.5,44.6 1779,44.6 1779.5,44.6 1780,44.6 1780.5,44.6 1781,44.3 1781.5,43.7 1782,43.9 1782.5,44.5 1783,44.7 1783.5,44.7 1784,44.6 1784.5,44.6 1785,44.8 1785.5,44.6 1786,44.6 1786.5,44.8 1787,44.9 1787.5,44.7 1788,44.7 1788.5,44.7 1789,44.8 1789.5,44.6 1790,44.3 1790.5,44.5 1791,44.8 1791.5,44.9 1792,44.9 1792.5,44.9 1793,44.9 1793.5,44.7 1794,44.1 1794.5,44 1795,44.4 1795.5,44.7 1796,44.7 1796.5,44.7 1797,44.7 1797.5,44.7 1798,44.5 1798.5,44.2 1799,44.5 1799.5,44.9 1800,44.9 1800.5,44.7 1801,44.7 1801.5,44.7 1802,44.7 1802.5,44.3 1803,44.4 1803.5,44.6 1804,44.7 1804.5,44.9 1805,44.9 1805.5,44.9 1806,44.7 1806.5,44.3 1807,44.1 1807.5,44.4 1808,44.7 1808.5,44.6 1809,44.6 1809.5,44.6 1810,44.9 1810.5,44.9 1811,44.7 1811.5,44.7 1812,44.7 1812.5,44.7 1813,44.7 1813.5,44.8 1814,44.8 1814.5,44.8 1815,44.7 1815.5,44.7 1816,44.7 1816.5,44.6 1817,44.6 1817.5,44.9 1818,44.9 1818.5,44.9 1819,44.5 1819.5,44.2 1820,44.5 1820.5,44.8 1821,44.8 1821.5,44.6 1822,44.6 1822.5,44.6 1823,44.7 1823.5,44.6 1824,44.7 1824.5,44.7 1825,44.7 1825.5,44.8 1826,44.8 1826.5,44.8 1827,44.8 1827.5,44.6 1828,44.3 1828.5,44.5 1829,44.7 1829.5,44.7 1830,44.7 1830.5,44.8 1831,44.8 1831.5,44.7 1832,44.6 1832.5,44.6 1833,44.8 1833.5,44.8 1834,44.8 1834.5,44.9 1835,44.9 1835.5,44.9 1836,44.6 1836.5,44.6 1837,44.8 1837.5,44.9 1838,44.9 1838.5,44.8 1839,44.8 1839.5,44.9 1840,44.8 1840.5,44.7 1841,44.6 1841.5,44.7 1842,44.7 1842.5,44.8 1843,44.8 1843.5,44.8 1844,44.7 1844.5,44.3 1845,44.3 1845.5,44.7 1846,44.7 1846.5,44.7 1847,44.7 1847.5,44.6 1848,44.6 1848.5,44.5 1849,44.5 1849.5,44.5 1850,44.7 1850.5,44.7 1851,44.7 1851.5,44.9 1852,44.9 1852.5,44.2 1853,43.5 1853.5,43.7 1854,44.7 1854.5,44.9 1855,44.9 1855.5,44.9 1856,44.9 1856.5,44.9 1857,44.6 1857.5,44.5 1858,44.6 1858.5,44.8 1859,44.8 1859.5,44.8 1860,44.8 1860.5,44.9 1861,44.8 1861.5,44.6 1862,44.7 1862.5,44.8 1863,44.7 1863.5,44.7 1864,44.7 1864.5,44.7 1865,44.6 1865.5,44.4 1866,44.3 1866.5,44.7 1867,44.6 1867.5,44.6 1868,44.6 1868.5,44.7 1869,44.7 1869.5,44.7 1870,44.5 1870.5,44.7 1871,44.9 1871.5,44.9 1872,44.9 1872.5,44.9 1873,44.9 1873.5,44.6 1874,44.4 1874.5,44.4 1875,44.6 1875.5,44.7 1876,44.7 1876.5,44.7 1877,44.7 1877.5,44.8 1878,44.6 1878.5,44.5 1879,44.7 1879.5,44.9 1880,44.9 1880.5,44.9 1881,44.9 1881.5,44.8 1882,44.7 1882.5,44.4 1883,44.5 1883.5,44.6 1884,44.6 1884.5,44.6 1885,44.8 1885.5,44.8 1886,44.8 1886.5,44.8 1887,44.8 1887.5,44.9 1888,44.7 1888.5,44.7 1889,44.9 1889.5,44.9 1890,44.9 1890.5,44.5 1891,44.3 1891.5,44.7 1892,44.8 1892.5,44.8 1893,44.8 1893.5,44.8 1894,44.8 1894.5,44.7 1895,44.5 1895.5,44.7 1896,44.9 1896.5,44.9 1897,44.7 1897.5,44.7 1898,44.7 1898.5,44.7 1899,44.5 1899.5,44.5 1900,44.6 1900.5,44.7 1901,44.8 1901.5,44.8 1901.5,49 1901,48.7 1900.5,48.5 1900,48.2 1899.5,48.2 1899,48 1898.5,48 1898,48.2 1897.5,48.6 1897,48.5 1896.5,48.1 1896,48 1895.5,48 1895,48 1894.5,48.1 1894,48.6 1893.5,48.8 1893,48.9 1892.5,48.4 1892,48.2 1891.5,48.1 1891,48.1 1890.5,48.1 1890,48.2 1889.5,48.4 1889,48.6 1888.5,48.4 1888,48.2 1887.5,48.3 1887,48.3 1886.5,48.3 1886,48.1 1885.5,48.1 1885,48.2 1884.5,48.4 1884,48.3 1883.5,48.2 1883,48.2 1882.5,48.2 1882,48.2 1881.5,48.3 1881,48.6 1880.5,48.8 1880,48.7 1879.5,48.6 1879,48.5 1878.5,48.6 1878,48.7 1877.5,48.8 1877,49 1876.5,49.2 1876,49.2 1875.5,49 1875,48.8 1874.5,48.9 1874,48.9 1873.5,49 1873,49.3 1872.5,49.7 1872,49.9 1871.5,49.8 1871,49.4 1870.5,49.3 1870,49.4 1869.5,49.5 1869,49.6 1868.5,50.2 1868,50.6 1867.5,50.6 1867,50.5 1866.5,50.3 1866,50.4 1865.5,50.5 1865,50.5 1864.5,50.8 1864,51.2 1863.5,51.4 1863,51.2 1862.5,51.1 1862,51.1 1861.5,51 1861,51 1860.5,51.2 1860,51.4 1859.5,51.7 1859,51.4 1858.5,51.3 1858,51 1857.5,50.9 1857,50.9 1856.5,51 1856,50.9 1855.5,51.1 1855,51.2 1854.5,51 1854,51.1 1853.5,51.2 1853,51.1 1852.5,51 1852,50.7 1851.5,50.8 1851,51 1850.5,50.6 1850,50.3 1849.5,50.1 1849,49.9 1848.5,49.6 1848,49.5 1847.5,49.4 1847,49.4 1846.5,49.1 1846,48.8 1845.5,48.4 1845,48.3 1844.5,48.5 1844,48.5 1843.5,48.6 1843,48.7 1842.5,48.8 1842,48.5 1841.5,48.3 1841,48.1 1840.5,48.2 1840,48.2 1839.5,48.5 1839,48.6 1838.5,48.9 1838,48.9 1837.5,48.6 1837,48.2 1836.5,48.2 1836,48.2 1835.5,48.2 1835,48.5 1834.5,48.7 1834,48.8 1833.5,48.6 1833,48.3 1832.5,48.1 1832,48.1 1831.5,48.2 1831,48.3 1830.5,48.4 1830,48.4 1829.5,48.3 1829,48.3 1828.5,48.3 1828,48.3 1827.5,48.2 1827,48.3 1826.5,48.5 1826,48.5 1825.5,48.4 1825,48.5 1824.5,48.3 1824,48.2 1823.5,48.2 1823,48.2 1822.5,48.2 1822,48.3 1821.5,48.3 1821,48.1 1820.5,48 1820,48 1819.5,48 1819,48 1818.5,48.2 1818,48.4 1817.5,48.6 1817,48.3 1816.5,48.2 1816,48.2 1815.5,48.1 1815,48.1 1814.5,48.2 1814,48.4 1813.5,48.6 1813,48.5 1812.5,48.4 1812,48.3 1811.5,48.3 1811,48.3 1810.5,48.2 1810,48.3 1809.5,48.3 1809,48.4 1808.5,48.5 1808,48.8 1807.5,48.8 1807,48.9 1806.5,48.9 1806,49 1805.5,49.1 1805,49.3 1804.5,49.3 1804,49.3 1803.5,49.1 1803,49.3 1802.5,49.4 1802,49.4 1801.5,49.6 1801,49.8 1800.5,50 1800,49.8 1799.5,49.7 1799,49.8 1798.5,49.8 1798,49.9 1797.5,50.7 1797,51.3 1796.5,51.9 1796,51.8 1795.5,51.4 1795,50.7 1794.5,50.7 1794,50.8 1793.5,51.2 1793,51.4 1792.5,51.7 1792,51.9 1791.5,51.7 1791,51.5 1790.5,51.3 1790,51.3 1789.5,51.3 1789,51.6 1788.5,52.2 1788,52.6 1787.5,52.2 1787,52.3 1786.5,51.9 1786,51.6 1785.5,51.6 1785,51.9 1784.5,52.2 1784,52.8 1783.5,52.5 1783,51.8 1782.5,51.4 1782,50.9 1781.5,50.8 1781,50.6 1780.5,50.9 1780,50.8 1779.5,50.8 1779,50.5 1778.5,49.8 1778,49.3 1777.5,49.1 1777,48.9 1776.5,49 1776,48.9 1775.5,49.2 1775,49 1774.5,48.7 1774,48.4 1773.5,48.3 1773,48 1772.5,48 1772,48 1771.5,48.1 1771,48.1 1770.5,48.2 1770,48.1 1769.5,48.1 1769,48 1768.5,48 1768,48 1767.5,48.2 1767,48.2 1766.5,48.2 1766,48.2 1765.5,48.1 1765,48.2 1764.5,48.2 1764,48.3 1763.5,48.3 1763,48.4 1762.5,48.2 1762,48.2 1761.5,48.1 1761,48 1760.5,48 1760,48 1759.5,48 1759,48 1758.5,48.3 1758,48.3 1757.5,48 1757,48 1756.5,48 1756,48.2 1755.5,48.4 1755,48.6 1754.5,48.9 1754,48.8 1753.5,48.6 1753,48.4 1752.5,48.3 1752,48.1 1751.5,48.1 1751,48.1 1750.5,48.2 1750,48.2 1749.5,48.3 1749,48.2 1748.5,48.2 1748,48 1747.5,48 1747,48.3 1746.5,48.4 1746,48.6 1745.5,48.5 1745,48.3 1744.5,48.2 1744,48.2 1743.5,48.2 1743,48.2 1742.5,48.3 1742,48.3 1741.5,48.3 1741,48.3 1740.5,48.5 1740,48.5 1739.5,48.6 1739,48.4 1738.5,48.7 1738,49.2 1737.5,49.5 1737,49.3 1736.5,49.1 1736,49 1735.5,49 1735,49 1734.5,49.2 1734,49.4 1733.5,49.6 1733,49.7 1732.5,49.6 1732,49.6 1731.5,49.5 1731,49.6 1730.5,49.7 1730,50 1729.5,50.3 1729,50.5 1728.5,50.4 1728,50.7 1727.5,50.6 1727,50.7 1726.5,50.8 1726,51 1725.5,51.5 1725,51.9 1724.5,51.9 1724,51.2 1723.5,51.1 1723,51.1 1722.5,51.2 1722,51.2 1721.5,52.1 1721,52.1 1720.5,52.1 1720,52 1719.5,51.6 1719,51.5 1718.5,51.8 1718,51.8 1717.5,52.6 1717,52.6 1716.5,53 1716,52.7 1715.5,51.7 1715,51.3 1714.5,51.5 1714,51.5 1713.5,51.7 1713,51.8 1712.5,52 1712,51.7 1711.5,51.3 1711,51.1 1710.5,50.7 1710,50.5 1709.5,50.3 1709,50.6 1708.5,50.6 1708,50.3 1707.5,49.8 1707,49.5 1706.5,49.2 1706,49 1705.5,48.7 1705,48.8 1704.5,49 1704,49.2 1703.5,48.9 1703,48.5 1702.5,48.1 1702,48 1701.5,48.3 1701,48.3 1700.5,48.5 1700,48.4 1699.5,48.5 1699,48.4 1698.5,48.2 1698,48.1 1697.5,48.1 1697,48.1 1696.5,48.3 1696,48.5 1695.5,48.7 1695,48.6 1694.5,48.3 1694,48 1693.5,48.3 1693,48.3 1692.5,48.1 1692,48.2 1691.5,48.3 1691,48.5 1690.5,48.4 1690,48.2 1689.5,48.1 1689,48.1 1688.5,48 1688,48.1 1687.5,48.1 1687,48.4 1686.5,48.4 1686,48.2 1685.5,48.2 1685,48.2 1684.5,48.1 1684,48.2 1683.5,48.3 1683,48.4 1682.5,48.3 1682,48.3 1681.5,48.2 1681,48.2 1680.5,48 1680,48 1679.5,48.4 1679,48.5 1678.5,48.6 1678,48.4 1677.5,48.2 1677,48.1 1676.5,48.2 1676,48.2 1675.5,48.1 1675,48.3 1674.5,48.4 1674,48.6 1673.5,48.4 1673,48.2 1672.5,48.2 1672,48.2 1671.5,48.5 1671,48.7 1670.5,48.9 1670,48.8 1669.5,48.7 1669,48.7 1668.5,48.7 1668,48.7 1667.5,48.7 1667,49.1 1666.5,49.5 1666,49.8 1665.5,49.7 1665,49.6 1664.5,49.4 1664,49.5 1663.5,49.4 1663,49.6 1662.5,50.1 1662,50.3 1661.5,50.4 1661,49.8 1660.5,49.8 1660,49.8 1659.5,49.9 1659,50 1658.5,51 1658,51.3 1657.5,51.6 1657,51.4 1656.5,51.3 1656,51.3 1655.5,51.4 1655,51.5 1654.5,51.7 1654,52 1653.5,52.2 1653,52.3 1652.5,52.3 1652,52.5 1651.5,52.6 1651,52.6 1650.5,52.6 1650,53.2 1649.5,53.8 1649,54 1648.5,53.4 1648,52.8 1647.5,52.4 1647,52.5 1646.5,52.5 1646,52.6 1645.5,52.9 1645,53.1 1644.5,52.9 1644,52.2 1643.5,52 1643,51.8 1642.5,51.7 1642,52.2 1641.5,52.4 1641,52.5 1640.5,52.2 1640,51.2 1639.5,50.7 1639,50.3 1638.5,50.1 1638,49.8 1637.5,50.1 1637,50.3 1636.5,50.3 1636,49.6 1635.5,49 1635,48.7 1634.5,48.5 1634,48.4 1633.5,48.4 1633,48.3 1632.5,48.3 1632,48.3 1631.5,48.3 1631,48.1 1630.5,48.1 1630,48.2 1629.5,48.2 1629,48.2 1628.5,48.4 1628,48.4 1627.5,48.2 1627,48.2 1626.5,48.2 1626,48.1 1625.5,48.1 1625,48.2 1624.5,48.1 1624,48.1 1623.5,48.1 1623,48.1 1622.5,48.1 1622,48 1621.5,48 1621,48.3 1620.5,48.4 1620,48.5 1619.5,48.2 1619,48.1 1618.5,48 1618,48.3 1617.5,48.3 1617,48.2 1616.5,48.3 1616,48.4 1615.5,48.6 1615,48.5 1614.5,48.4 1614,48.2 1613.5,48.2 1613,48 1612.5,48.1 1612,48.1 1611.5,48.2 1611,48.2 1610.5,48.1 1610,48 1609.5,48 1609,48.2 1608.5,48.2 1608,48.4 1607.5,48.5 1607,48.6 1606.5,48.6 1606,48.4 1605.5,48.3 1605,48 1604.5,48 1604,48.1 1603.5,48.2 1603,48.4 1602.5,48.4 1602,48.3 1601.5,48.3 1601,48.4 1600.5,48.4 1600,48.6 1599.5,48.8 1599,49 1598.5,49.1 1598,49 1597.5,48.9 1597,48.9 1596.5,49 1596,49.3 1595.5,49.6 1595,49.6 1594.5,49.9 1594,49.9 1593.5,49.8 1593,49.7 1592.5,49.8 1592,49.9 1591.5,49.8 1591,50.2 1590.5,50.5 1590,50.6 1589.5,50.9 1589,50.9 1588.5,50.9 1588,51 1587.5,51.3 1587,51.6 1586.5,52 1586,52.4 1585.5,52.4 1585,52.2 1584.5,52 1584,52.1 1583.5,52.3 1583,52.5 1582.5,52.9 1582,53.2 1581.5,53.3 1581,53.3 1580.5,53 1580,52.9 1579.5,52.9 1579,52.4 1578.5,52.6 1578,52.9 1577.5,53 1577,53 1576.5,52.7 1576,52.5 1575.5,52.7 1575,52.7 1574.5,53.4 1574,53.7 1573.5,54 1573,53.6 1572.5,53.3 1572,52.7 1571.5,52.2 1571,51.9 1570.5,51.8 1570,52 1569.5,52 1569,51.6 1568.5,50.8 1568,50.3 1567.5,50.1 1567,49.8 1566.5,49.4 1566,49.1 1565.5,49.1 1565,49.2 1564.5,48.8 1564,48.4 1563.5,48.2 1563,48.1 1562.5,48.1 1562,48.1 1561.5,48.1 1561,48 1560.5,48 1560,48 1559.5,48.1 1559,48.1 1558.5,48.1 1558,48.2 1557.5,48.4 1557,48.7 1556.5,48.8 1556,48.6 1555.5,48.4 1555,48.2 1554.5,48.1 1554,48.1 1553.5,48.4 1553,48.8 1552.5,49.2 1552,49.1 1551.5,48.7 1551,48.3 1550.5,48.2 1550,48.2 1549.5,48.1 1549,48.1 1548.5,48.2 1548,48.1 1547.5,48 1547,48 1546.5,48.1 1546,48.1 1545.5,48.2 1545,48.4 1544.5,48.7 1544,49 1543.5,48.8 1543,48.5 1542.5,48.2 1542,48.2 1541.5,48.2 1541,48.3 1540.5,48.7 1540,48.8 1539.5,48.8 1539,48.7 1538.5,48.4 1538,48.3 1537.5,48.1 1537,48.2 1536.5,48.3 1536,48.6 1535.5,48.8 1535,48.5 1534.5,48.3 1534,48 1533.5,48.3 1533,48.3 1532.5,48.3 1532,48.4 1531.5,48.5 1531,48.3 1530.5,48.3 1530,48.4 1529.5,48.5 1529,48.6 1528.5,48.8 1528,49 1527.5,49.1 1527,49.3 1526.5,49.3 1526,49.4 1525.5,49.4 1525,49.5 1524.5,49.6 1524,49.9 1523.5,50.4 1523,50.8 1522.5,50.8 1522,50.3 1521.5,50.2 1521,50.3 1520.5,50.6 1520,51.2 1519.5,51.9 1519,52.7 1518.5,52.9 1518,52.3 1517.5,51.9 1517,51.7 1516.5,51.9 1516,52.4 1515.5,52.7 1515,53.2 1514.5,53.7 1514,53.2 1513.5,53.1 1513,53 1512.5,53.2 1512,53.3 1511.5,54 1511,54.2 1510.5,54.3 1510,54.2 1509.5,53.7 1509,53.4 1508.5,53.3 1508,53.3 1507.5,53.4 1507,54 1506.5,54.6 1506,55 1505.5,54 1505,53.5 1504.5,53.1 1504,52.8 1503.5,52.8 1503,53 1502.5,53.4 1502,53.6 1501.5,53.1 1501,52.3 1500.5,51.7 1500,51.3 1499.5,51 1499,51.2 1498.5,51.6 1498,51.7 1497.5,51.4 1497,50.7 1496.5,49.9 1496,49.2 1495.5,48.9 1495,48.6 1494.5,48.6 1494,48.7 1493.5,48.9 1493,48.6 1492.5,48.3 1492,48.1 1491.5,48.1 1491,48.2 1490.5,48.2 1490,48.2 1489.5,48.3 1489,48.3 1488.5,48.3 1488,48.1 1487.5,48.1 1487,48 1486.5,48 1486,48.2 1485.5,48.7 1485,48.8 1484.5,48.5 1484,48.3 1483.5,48.2 1483,48 1482.5,48 1482,48.2 1481.5,48.7 1481,49.1 1480.5,48.7 1480,48.4 1479.5,48 1479,48.3 1478.5,48.3 1478,48.1 1477.5,48.4 1477,48.7 1476.5,48.8 1476,48.5 1475.5,48.2 1475,48.1 1474.5,48.1 1474,48.1 1473.5,48.4 1473,48.8 1472.5,49 1472,48.8 1471.5,48.4 1471,48.1 1470.5,48.1 1470,48 1469.5,48 1469,48.2 1468.5,48.4 1468,48.4 1467.5,48.5 1467,48.3 1466.5,48.2 1466,48.1 1465.5,48.1 1465,48.1 1464.5,48.2 1464,48.3 1463.5,48.4 1463,48.4 1462.5,48.3 1462,48.4 1461.5,48.4 1461,48.4 1460.5,48.7 1460,49 1459.5,49.2 1459,49.1 1458.5,48.9 1458,49 1457.5,49.1 1457,49.3 1456.5,49.6 1456,50 1455.5,50 1455,50.1 1454.5,49.9 1454,49.8 1453.5,50 1453,50.1 1452.5,50.4 1452,50.7 1451.5,51 1451,51.1 1450.5,51.1 1450,51 1449.5,51.1 1449,51.2 1448.5,51.4 1448,52.1 1447.5,52.7 1447,53 1446.5,52.9 1446,52.6 1445.5,52.6 1445,52.8 1444.5,52.3 1444,52.9 1443.5,53.5 1443,54.1 1442.5,54.7 1442,54.5 1441.5,54.3 1441,54.3 1440.5,54 1440,54.1 1439.5,54.4 1439,54.7 1438.5,54.6 1438,53.6 1437.5,53.4 1437,53.3 1436.5,53.3 1436,54.3 1435.5,54.6 1435,54.8 1434.5,55 1434,53.8 1433.5,53.3 1433,52.9 1432.5,52.8 1432,52.6 1431.5,52.5 1431,52.5 1430.5,52.3 1430,52.2 1429.5,51.7 1429,51.3 1428.5,50.9 1428,50.5 1427.5,50.4 1427,50.4 1426.5,50.4 1426,50.2 1425.5,49.5 1425,48.9 1424.5,48.6 1424,48.4 1423.5,48.3 1423,48.4 1422.5,48.6 1422,49.2 1421.5,49 1421,48.6 1420.5,48 1420,48 1419.5,48.2 1419,48.2 1418.5,48.3 1418,48.4 1417.5,48.4 1417,48.3 1416.5,48 1416,48 1415.5,48 1415,48 1414.5,48 1414,48.4 1413.5,48.4 1413,48.2 1412.5,48.1 1412,48.1 1411.5,48 1411,48 1410.5,48.1 1410,48.4 1409.5,48.6 1409,48.7 1408.5,48.5 1408,48.3 1407.5,48.2 1407,48.2 1406.5,48.2 1406,48.3 1405.5,48.4 1405,48.3 1404.5,48.2 1404,48.1 1403.5,48.1 1403,48.1 1402.5,48.2 1402,48.4 1401.5,48.8 1401,49.2 1400.5,48.9 1400,48.7 1399.5,48.3 1399,48.3 1398.5,48.3 1398,48.3 1397.5,48.4 1397,48.3 1396.5,48.3 1396,48.4 1395.5,48.3 1395,48.2 1394.5,48.2 1394,48.2 1393.5,48.2 1393,48.4 1392.5,48.6 1392,48.7 1391.5,48.5 1391,48.4 1390.5,48.4 1390,48.5 1389.5,48.4 1389,48.5 1388.5,48.6 1388,48.6 1387.5,48.7 1387,48.9 1386.5,49 1386,49 1385.5,48.9 1385,49.3 1384.5,49.8 1384,50 1383.5,49.8 1383,49.6 1382.5,49.4 1382,49.5 1381.5,49.5 1381,49.8 1380.5,50.1 1380,50.6 1379.5,50.5 1379,50.2 1378.5,49.9 1378,49.9 1377.5,50 1377,50.2 1376.5,50.7 1376,51 1375.5,51.1 1375,50.9 1374.5,50.7 1374,50.7 1373.5,50.8 1373,50.9 1372.5,51.4 1372,51.7 1371.5,52 1371,51.5 1370.5,51.3 1370,51.2 1369.5,51.2 1369,51.3 1368.5,51.7 1368,52 1367.5,52.3 1367,52 1366.5,51.7 1366,51.3 1365.5,51.1 1365,51.1 1364.5,51.5 1364,51.7 1363.5,51.9 1363,52 1362.5,51.7 1362,51.4 1361.5,51 1361,50.9 1360.5,50.7 1360,50.6 1359.5,50.4 1359,50.4 1358.5,50 1358,49.9 1357.5,49.5 1357,49.3 1356.5,49.1 1356,48.9 1355.5,48.8 1355,48.8 1354.5,48.5 1354,48.3 1353.5,48.1 1353,48.3 1352.5,48.3 1352,48.3 1351.5,48.4 1351,48.8 1350.5,49.3 1350,49 1349.5,48.5 1349,48.3 1348.5,48.3 1348,48.2 1347.5,48.2 1347,48.3 1346.5,48.1 1346,48.1 1345.5,48.1 1345,48 1344.5,48 1344,48.3 1343.5,48.3 1343,48.5 1342.5,48.7 1342,48.9 1341.5,48.7 1341,48.4 1340.5,48.2 1340,48.1 1339.5,48.1 1339,48.1 1338.5,48.2 1338,48.2 1337.5,48.1 1337,48.1 1336.5,48 1336,48.1 1335.5,48.1 1335,48.4 1334.5,48.7 1334,49 1333.5,49 1333,48.6 1332.5,48.3 1332,48.1 1331.5,48.1 1331,48.1 1330.5,48.3 1330,48.6 1329.5,48.8 1329,48.7 1328.5,48.4 1328,48.2 1327.5,48.1 1327,48 1326.5,48 1326,48.1 1325.5,48.6 1325,48.6 1324.5,48.4 1324,48.3 1323.5,48.2 1323,48.1 1322.5,48.2 1322,48.3 1321.5,48.5 1321,48.7 1320.5,48.6 1320,48.6 1319.5,48.5 1319,48.7 1318.5,48.9 1318,49.2 1317.5,49.7 1317,50.2 1316.5,50.1 1316,49.9 1315.5,49.7 1315,49.7 1314.5,49.8 1314,49.9 1313.5,50.7 1313,51.4 1312.5,52 1312,51.3 1311.5,51 1311,50.7 1310.5,50.8 1310,51.1 1309.5,51.5 1309,51.9 1308.5,52.5 1308,53.1 1307.5,52.8 1307,52.6 1306.5,52.7 1306,52.6 1305.5,52.9 1305,53.6 1304.5,54.3 1304,54.1 1303.5,53.8 1303,53.5 1302.5,53.1 1302,53.3 1301.5,54.1 1301,54.8 1300.5,55.5 1300,56.1 1299.5,55 1299,54.3 1298.5,53.6 1298,53.6 1297.5,53.4 1297,53.8 1296.5,54.2 1296,54.3 1295.5,54.5 1295,54.1 1294.5,53.8 1294,53.7 1293.5,53.9 1293,53.8 1292.5,54 1292,54.1 1291.5,54.1 1291,53.4 1290.5,52.8 1290,52.2 1289.5,51.9 1289,51.3 1288.5,51.2 1288,51.2 1287.5,51.1 1287,50.6 1286.5,49.8 1286,49.2 1285.5,48.9 1285,48.7 1284.5,48.5 1284,48.7 1283.5,48.8 1283,48.9 1282.5,48.7 1282,48.4 1281.5,48.2 1281,48.2 1280.5,48.2 1280,48.2 1279.5,48.2 1279,48.2 1278.5,48.2 1278,48.1 1277.5,48 1277,48 1276.5,48 1276,48.1 1275.5,48.2 1275,48.4 1274.5,48.4 1274,48.3 1273.5,48.1 1273,48 1272.5,48 1272,48 1271.5,48.3 1271,48.8 1270.5,49.1 1270,48.6 1269.5,48.4 1269,48.1 1268.5,48.1 1268,48.1 1267.5,48.2 1267,48.6 1266.5,48.9 1266,48.7 1265.5,48.4 1265,48.2 1264.5,48.1 1264,48.1 1263.5,48 1263,48.1 1262.5,48.1 1262,48.4 1261.5,48.3 1261,48.3 1260.5,48.1 1260,48.1 1259.5,48.2 1259,48.2 1258.5,48.2 1258,48.1 1257.5,48.1 1257,48.1 1256.5,48.1 1256,48.1 1255.5,48.1 1255,48.1 1254.5,48.2 1254,48.4 1253.5,48.5 1253,48.3 1252.5,48.3 1252,48.3 1251.5,48.4 1251,48.5 1250.5,48.7 1250,48.8 1249.5,49 1249,48.9 1248.5,49 1248,49 1247.5,49.3 1247,49.4 1246.5,49.6 1246,50.1 1245.5,50.6 1245,50.6 1244.5,50.3 1244,50.2 1243.5,50.2 1243,50.4 1242.5,50.5 1242,51 1241.5,51.4 1241,51.8 1240.5,51.7 1240,51.5 1239.5,51.4 1239,51.5 1238.5,51.5 1238,51.8 1237.5,52.3 1237,52.7 1236.5,52.5 1236,52.7 1235.5,52.6 1235,52.7 1234.5,53 1234,53.3 1233.5,53.7 1233,54.3 1232.5,55 1232,54.7 1231.5,54.5 1231,54.3 1230.5,53.5 1230,53.5 1229.5,53.6 1229,53.9 1228.5,54.2 1228,54.9 1227.5,54.6 1227,54.4 1226.5,54.3 1226,54.5 1225.5,54.7 1225,55.2 1224.5,55.8 1224,54.9 1223.5,54.3 1223,53.8 1222.5,53.4 1222,53.9 1221.5,53.3 1221,53.3 1220.5,53.5 1220,53.4 1219.5,52.7 1219,51.8 1218.5,51.2 1218,50.9 1217.5,50.2 1217,50 1216.5,49.6 1216,49.4 1215.5,49.1 1215,49.1 1214.5,48.7 1214,48.5 1213.5,48.3 1213,48.3 1212.5,48.4 1212,48.6 1211.5,48.8 1211,48.6 1210.5,48.4 1210,48.3 1209.5,48.3 1209,48.3 1208.5,48.2 1208,48.4 1207.5,48.7 1207,48.5 1206.5,48.3 1206,48.2 1205.5,48.2 1205,48.2 1204.5,48.3 1204,48.5 1203.5,48.7 1203,48.7 1202.5,48.5 1202,48.3 1201.5,48.2 1201,48.3 1200.5,48.3 1200,48.5 1199.5,48.5 1199,48.7 1198.5,48.3 1198,48.1 1197.5,48 1197,48.1 1196.5,48.1 1196,48.1 1195.5,48.3 1195,48.4 1194.5,48.2 1194,48.2 1193.5,48.1 1193,48.2 1192.5,48.2 1192,48.2 1191.5,48.4 1191,48.7 1190.5,48.9 1190,48.6 1189.5,48.4 1189,48 1188.5,48 1188,48.2 1187.5,48.3 1187,48.4 1186.5,48.4 1186,48.3 1185.5,48.2 1185,48.1 1184.5,48.1 1184,48.1 1183.5,48.2 1183,48.4 1182.5,48.9 1182,49 1181.5,48.9 1181,48.7 1180.5,48.7 1180,48.8 1179.5,48.9 1179,48.9 1178.5,49.1 1178,49.1 1177.5,49.1 1177,49.2 1176.5,49.3 1176,49.3 1175.5,49.6 1175,50 1174.5,50.4 1174,50.7 1173.5,50.4 1173,50.3 1172.5,50.4 1172,50.5 1171.5,50.7 1171,50.8 1170.5,51.1 1170,51.4 1169.5,51.6 1169,51.7 1168.5,51.9 1168,51.9 1167.5,52.2 1167,52.2 1166.5,52.5 1166,53.1 1165.5,53.6 1165,53.1 1164.5,52.8 1164,52.6 1163.5,52.7 1163,52.8 1162.5,53.1 1162,53.8 1161.5,54.3 1161,54.8 1160.5,54.4 1160,54 1159.5,53.7 1159,54 1158.5,54 1158,54.2 1157.5,54.6 1157,54.8 1156.5,54.5 1156,54.1 1155.5,53.9 1155,53.9 1154.5,53.5 1154,53.6 1153.5,54.1 1153,54.3 1152.5,54.3 1152,53.6 1151.5,52.9 1151,52.4 1150.5,52.2 1150,51.9 1149.5,51.9 1149,51.9 1148.5,51.8 1148,51.1 1147.5,50.6 1147,50 1146.5,49.5 1146,49.2 1145.5,48.9 1145,48.7 1144.5,48.5 1144,48.3 1143.5,48.3 1143,48.2 1142.5,48.2 1142,48.2 1141.5,48.3 1141,48.3 1140.5,48.5 1140,48.6 1139.5,48.4 1139,48.2 1138.5,48 1138,48 1137.5,48 1137,48.2 1136.5,48.2 1136,48.2 1135.5,48.2 1135,48.2 1134.5,48.2 1134,48.2 1133.5,48.3 1133,48.3 1132.5,48.4 1132,48.3 1131.5,48.3 1131,48.2 1130.5,48.1 1130,48.1 1129.5,48.1 1129,48.1 1128.5,48.3 1128,48.4 1127.5,48.6 1127,48.7 1126.5,48.5 1126,48.3 1125.5,48 1125,48 1124.5,48 1124,48 1123.5,48.1 1123,48.3 1122.5,48.3 1122,48.3 1121.5,48.2 1121,48.2 1120.5,48.2 1120,48.3 1119.5,48.3 1119,48.2 1118.5,48.1 1118,48.1 1117.5,48.1 1117,48.1 1116.5,48 1116,48.1 1115.5,48.1 1115,48.3 1114.5,48.3 1114,48 1113.5,48 1113,48 1112.5,48.2 1112,48.3 1111.5,48.5 1111,48.6 1110.5,48.7 1110,48.8 1109.5,48.8 1109,48.8 1108.5,49 1108,49.1 1107.5,49 1107,49.1 1106.5,49.2 1106,49.3 1105.5,49.3 1105,49.4 1104.5,49.6 1104,49.7 1103.5,50.2 1103,50.4 1102.5,50.7 1102,50.1 1101.5,50.1 1101,50.3 1100.5,50.3 1100,50.9 1099.5,51.1 1099,51.4 1098.5,51.8 1098,51.8 1097.5,51.7 1097,51.6 1096.5,51.5 1096,51.9 1095.5,52.1 1095,52.5 1094.5,53.2 1094,53.4 1093.5,53.4 1093,53 1092.5,52.6 1092,52.6 1091.5,52.7 1091,52.8 1090.5,52.7 1090,52.9 1089.5,53.4 1089,53.4 1088.5,53.2 1088,53 1087.5,53.2 1087,53.2 1086.5,53.8 1086,54.3 1085.5,54.7 1085,54.1 1084.5,53.5 1084,53.1 1083.5,52.5 1083,52.4 1082.5,52.3 1082,52.3 1081.5,52.5 1081,53.1 1080.5,52.6 1080,51.9 1079.5,51.5 1079,50.7 1078.5,50.6 1078,50.7 1077.5,50.6 1077,50.7 1076.5,50 1076,49.5 1075.5,49 1075,48.8 1074.5,48.6 1074,48.5 1073.5,48.3 1073,48.3 1072.5,48.3 1072,48.2 1071.5,48.1 1071,48.2 1070.5,48.2 1070,48.2 1069.5,48.5 1069,48.8 1068.5,48.9 1068,48.6 1067.5,48.4 1067,48 1066.5,48 1066,48 1065.5,48.3 1065,48.4 1064.5,48.3 1064,48.3 1063.5,48.2 1063,48.2 1062.5,48.2 1062,48.1 1061.5,48.2 1061,48.4 1060.5,48.4 1060,48.5 1059.5,48.3 1059,48.3 1058.5,48.1 1058,48.1 1057.5,48.1 1057,48.2 1056.5,48.2 1056,48.4 1055.5,48.3 1055,48.2 1054.5,48.1 1054,48 1053.5,48 1053,48 1052.5,48.1 1052,48.1 1051.5,48.1 1051,48.1 1050.5,48 1050,48.2 1049.5,48.2 1049,48 1048.5,48 1048,48.1 1047.5,48.1 1047,48 1046.5,48 1046,48.3 1045.5,48.3 1045,48.2 1044.5,48.3 1044,48.6 1043.5,49 1043,48.9 1042.5,48.6 1042,48.4 1041.5,48.3 1041,48.3 1040.5,48.3 1040,48.5 1039.5,48.6 1039,48.7 1038.5,48.6 1038,48.6 1037.5,48.6 1037,48.8 1036.5,48.9 1036,49.2 1035.5,49.7 1035,50.2 1034.5,50.1 1034,49.7 1033.5,49.3 1033,49.4 1032.5,49.5 1032,49.6 1031.5,49.7 1031,49.8 1030.5,49.8 1030,49.8 1029.5,49.9 1029,49.9 1028.5,50.1 1028,50.2 1027.5,50.4 1027,50.6 1026.5,51 1026,51 1025.5,50.8 1025,50.8 1024.5,50.8 1024,51 1023.5,51.2 1023,51.7 1022.5,52.3 1022,52.4 1021.5,52.2 1021,51.9 1020.5,51.7 1020,51.6 1019.5,51.6 1019,52.2 1018.5,52.6 1018,53.1 1017.5,52.9 1017,52.4 1016.5,51.9 1016,52 1015.5,52 1015,52.5 1014.5,53 1014,53.3 1013.5,53 1013,52.3 1012.5,51.6 1012,51.1 1011.5,51 1011,50.7 1010.5,50.8 1010,50.8 1009.5,50.7 1009,50.3 1008.5,49.8 1008,49.5 1007.5,49.4 1007,49.3 1006.5,49.2 1006,49.1 1005.5,49 1005,48.7 1004.5,48.6 1004,48.4 1003.5,48.2 1003,48.1 1002.5,48.2 1002,48.3 1001.5,48.5 1001,48.5 1000.5,48.2 1000,48.1 999.5,48.1 999,48.1 998.5,48.1 998,48.3 997.5,48.6 997,48.7 996.5,48.5 996,48.2 995.5,48 995,48 994.5,48 994,48.4 993.5,48.6 993,48.4 992.5,48.3 992,48.2 991.5,48.1 991,48" fill="#ffff00"/>
<polyline clip-path="url(#a4)" points="991,46.5 1902,46.5" fill="none" stroke="#00ff00" stroke-width="3.3" stroke-linejoin="round" />
<polygon clip-path="url(#a5)" points="991,377.5 991.5,378 992,378.5 992.5,378.7 993,378.8 993.5,378.9 994,378.9 994.5,378.7 995,378.5 995.5,378.3 996,378.5 996.5,378.5 997,378.3 997.5,378.1 998,377.8 998.5,377.2 999,376.6 999.5,376.5 1000,376.8 1000.5,377.1 1001,376.9 1001.5,376.8 1002,376.6 1002.5,375.8 1003,374.8 1003.5,374.3 1004,374.9 1004.5,375.6 1005,375.7 1005.5,375.6 1006,375.4 1006.5,375.1 1007,374.6 1007.5,374.1 1008,374.3 1008.5,374.5 1009,374.7 1009.5,374.5 1010,374.4 1010.5,374.3 1011,373.5 1011.5,372.8 1012,372.6 1012.5,373.2 1013,373.8 1013.5,373.8 1014,373.7 1014.5,373.7 1015,373.1 1015.5,372.2 1016,371.4 1016.5,372.2 1017,372.9 1017.5,373.4 1018,373.4 1018.5,373.3 1019,373.2 1019.5,372.5 1020,371.7 1020.5,371.9 1021,372.7 1021.5,373.5 1022,373.5 1022.5,373.6 1023,373.6 1023.5,372.9 1024,372 1024.5,371.4 1025,372.4 1025.5,373.4 1026,373.8 1026.5,373.9 1027,373.9 1027.5,373.6 1028,372.7 1028.5,371.8 1029,372.4 1029.5,373.3 1030,374.1 1030.5,374.1 1031,374.2 1031.5,374.2 1032,373.4 1032.5,372.5 1033,372.3 1033.5,373.2 1034,374.2 1034.5,374.4 1035,374.5 1035.5,374.5 1036,374.1 1036.5,373.4 1037,372.7 1037.5,373.4 1038,374.2 1038.5,374.7 1039,374.7 1039.5,374.8 1040,374.7 1040.5,374.3 1041,374 1041.5,375.4 1042,377 1042.5,378.4 1043,378.7 1043.5,378.6 1044,378.5 1044.5,378.1 1045,377.6 1045.5,377.2 1046,377.5 1046.5,377.8 1047,377.9 1047.5,377.9 1048,377.8 1048.5,377.6 1049,377.2 1049.5,376.7 1050,376.8 1050.5,377.2 1051,377.5 1051.5,377.5 1052,377.4 1052.5,377.4 1053,377.1 1053.5,376.8 1054,376.7 1054.5,377 1055,377.4 1055.5,377.6 1056,377.6 1056.5,377.7 1057,377.6 1057.5,377.4 1058,377.2 1058.5,377.5 1059,377.9 1059.5,378.2 1060,378.3 1060.5,378.4 1061,378.5 1061.5,378.2 1062,377.9 1062.5,377.9 1063,378.4 1063.5,379 1064,379.3 1064.5,379.4 1065,379.1 1065.5,378.6 1066,377.9 1066.5,377.3 1067,377.6 1067.5,377.9 1068,378.1 1068.5,377.9 1069,377.7 1069.5,377.5 1070,376.9 1070.5,376.4 1071,376.3 1071.5,376.5 1072,376.7 1072.5,376.6 1073,376.4 1073.5,376.2 1074,375.9 1074.5,375.4 1075,375.1 1075.5,375.3 1076,375.4 1076.5,375.4 1077,375.3 1077.5,375.1 1078,374.9 1078.5,374.4 1079,373.9 1079.5,374 1080,374.3 1080.5,374.5 1081,374.4 1081.5,374.3 1082,374.2 1082.5,373.3 1083,372.5 1083.5,372.2 1084,372.9 1084.5,373.6 1085,373.8 1085.5,373.7 1086,373.7 1086.5,373.1 1087,372.1 1087.5,371.1 1088,372 1088.5,372.9 1089,373.5 1089.5,373.5 1090,373.6 1090.5,373.5 1091,372.8 1091.5,372.1 1092,372.2 1092.5,373 1093,373.8 1093.5,373.8 1094,373.9 1094.5,373.9 1095,373.6 1095.5,373.3 1096,373.1 1096.5,373.5 1097,373.9 1097.5,374.1 1098,374.1 1098.5,374.2 1099,374.1 1099.5,373.8 1100,373.5 1100.5,373.7 1101,374 1101.5,374.4 1102,374.4 1102.5,374.5 1103,374.5 1103.5,373.6 1104,372.5 1104.5,372.2 1105,373.3 1105.5,374.4 1106,374.7 1106.5,374.7 1107,374.8 1107.5,374.3 1108,373.4 1108.5,372.4 1109,373.3 1109.5,374.3 1110,375 1110.5,375 1111,375.6 1111.5,376.7 1112,377.3 1112.5,378.2 1113,378.1 1113.5,378.4 1114,378.6 1114.5,378.5 1115,378.5 1115.5,378.4 1116,378.1 1116.5,377.8 1117,377.5 1117.5,377.7 1118,377.8 1118.5,377.9 1119,377.8 1119.5,377.8 1120,377.7 1120.5,377.5 1121,377.3 1121.5,377.4 1122,377.5 1122.5,377.6 1123,377.6 1123.5,377.6 1124,377.6 1124.5,377.5 1125,377.3 1125.5,377.3 1126,377.5 1126.5,377.8 1127,377.9 1127.5,378 1128,378.1 1128.5,378 1129,377.7 1129.5,377.4 1130,377.8 1130.5,378.3 1131,378.7 1131.5,378.8 1132,379 1132.5,379.1 1133,378.9 1133.5,378.6 1134,378.7 1134.5,379.2 1135,379.2 1135.5,379.1 1136,378.9 1136.5,378.7 1137,378.2 1137.5,377.4 1138,376.7 1138.5,377.1 1139,377.5 1139.5,377.7 1140,377.5 1140.5,377.4 1141,377.1 1141.5,376.5 1142,375.9 1142.5,375.8 1143,376.1 1143.5,376.4 1144,376.2 1144.5,376.1 1145,376 1145.5,375.6 1146,375.1 1146.5,374.7 1147,374.9 1147.5,375.1 1148,375.2 1148.5,375.1 1149,374.9 1149.5,374.6 1150,373.9 1150.5,373.2 1151,373.4 1151.5,373.9 1152,374.4 1152.5,374.3 1153,374.2 1153.5,374.1 1154,373.5 1154.5,372.9 1155,372.6 1155.5,373.2 1156,373.7 1156.5,373.8 1157,373.8 1157.5,373.7 1158,373.4 1158.5,372.7 1159,372.1 1159.5,372.7 1160,373.4 1160.5,373.8 1161,373.9 1161.5,373.9 1162,373.9 1162.5,373.4 1163,373 1163.5,373.1 1164,373.6 1164.5,374.1 1165,374.1 1165.5,374.2 1166,374.2 1166.5,373.7 1167,373.1 1167.5,372.6 1168,373.3 1168.5,374 1169,374.4 1169.5,374.5 1170,374.5 1170.5,374.4 1171,374 1171.5,373.7 1172,373.9 1172.5,374.3 1173,374.7 1173.5,374.8 1174,374.8 1174.5,374.8 1175,374.4 1175.5,373.8 1176,373.6 1176.5,374.2 1177,374.8 1177.5,375 1178,375.1 1178.5,375.1 1179,374.8 1179.5,374 1180,373.3 1180.5,373.9 1181,375.7 1181.5,377.3 1182,378.4 1182.5,379.1 1183,379 1183.5,378.5 1184,378 1184.5,377.9 1185,378.2 1185.5,378.5 1186,378.5 1186.5,378.4 1187,378.3 1187.5,378 1188,377.6 1188.5,377.2 1189,377.5 1189.5,377.8 1190,377.9 1190.5,377.9 1191,377.9 1191.5,377.8 1192,377.4 1192.5,377.1 1193,377.2 1193.5,377.5 1194,377.9 1194.5,377.9 1195,377.9 1195.5,378 1196,377.7 1196.5,377.4 1197,377.2 1197.5,377.7 1198,378.2 1198.5,378.4 1199,378.5 1199.5,378.6 1200,378.6 1200.5,378.4 1201,378.2 1201.5,378.5 1202,378.9 1202.5,379.3 1203,379.5 1203.5,379.6 1204,379.7 1204.5,379.3 1205,378.2 1205.5,377.9 1206,378.3 1206.5,378.8 1207,378.7 1207.5,378.5 1208,378.4 1208.5,378 1209,377.6 1209.5,377.1 1210,377.2 1210.5,377.3 1211,377.4 1211.5,377.2 1212,377 1212.5,376.8 1213,376.1 1213.5,375.3 1214,375.2 1214.5,375.7 1215,376.1 1215.5,376 1216,375.9 1216.5,375.7 1217,375.2 1217.5,374.6 1218,374.1 1218.5,374.5 1219,374.9 1219.5,375 1220,374.9 1220.5,374.8 1221,374.5 1221.5,373.9 1222,373.2 1222.5,373.4 1223,373.9 1223.5,374.3 1224,374.3 1224.5,374.2 1225,374.1 1225.5,373.5 1226,372.9 1226.5,372.6 1227,373.2 1227.5,373.8 1228,373.9 1228.5,373.9 1229,373.9 1229.5,373.7 1230,373.2 1230.5,372.6 1231,373.1 1231.5,373.7 1232,374.2 1232.5,374.2 1233,374.2 1233.5,374.2 1234,373.7 1234.5,373.2 1235,373.2 1235.5,373.8 1236,374.4 1236.5,374.5 1237,374.5 1237.5,374.6 1238,374.1 1238.5,373.4 1239,372.9 1239.5,373.6 1240,374.4 1240.5,374.8 1241,374.8 1241.5,374.8 1242,374.8 1242.5,374.4 1243,374.1 1243.5,374.2 1244,374.7 1244.5,375.1 1245,375.1 1245.5,375.1 1246,375.2 1246.5,374.5 1247,373.7 1247.5,373.4 1248,374.2 1248.5,375 1249,375.4 1249.5,375.4 1250,375.4 1250.5,375.1 1251,375.5 1251.5,376.2 1252,378.1 1252.5,379 1253,379.2 1253.5,379.1 1254,379 1254.5,378.9 1255,378.4 1255.5,377.9 1256,377.8 1256.5,378.1 1257,378.4 1257.5,378.4 1258,378.3 1258.5,378.3 1259,378.1 1259.5,377.9 1260,377.8 1260.5,377.9 1261,378 1261.5,378.1 1262,378 1262.5,378 1263,378 1263.5,377.6 1264,377.2 1264.5,377.3 1265,377.8 1265.5,378.2 1266,378.3 1266.5,378.3 1267,378.4 1267.5,378.2 1268,377.8 1268.5,377.7 1269,378.2 1269.5,378.7 1270,379 1270.5,379.1 1271,379.2 1271.5,379.2 1272,379 1272.5,378.8 1273,379.1 1273.5,379.5 1274,380 1274.5,380.1 1275,379.6 1275.5,379.4 1276,378.9 1276.5,378.4 1277,378.1 1277.5,378.2 1278,378.4 1278.5,378.4 1279,378.2 1279.5,378 1280,377.6 1280.5,377 1281,376.4 1281.5,376.6 1282,376.9 1282.5,377 1283,376.9 1283.5,376.7 1284,376.5 1284.5,375.7 1285,374.9 1285.5,374.8 1286,375.3 1286.5,375.8 1287,375.8 1287.5,375.6 1288,375.5 1288.5,375.2 1289,374.7 1289.5,374.3 1290,374.6 1290.5,374.8 1291,374.9 1291.5,374.8 1292,374.7 1292.5,374.5 1293,373.7 1293.5,373 1294,373.2 1294.5,373.8 1295,374.3 1295.5,374.3 1296,374.2 1296.5,374.2 1297,373.5 1297.5,372.6 1298,372.2 1298.5,373 1299,373.9 1299.5,374.2 1300,374.2 1300.5,374.3 1301,374.1 1301.5,373.7 1302,373.3 1302.5,373.6 1303,374.1 1303.5,374.5 1304,374.5 1304.5,374.6 1305,374.5 1305.5,373.6 1306,372.8 1306.5,372.7 1307,373.7 1307.5,374.6 1308,374.8 1308.5,374.8 1309,374.9 1309.5,374.3 1310,373.4 1310.5,372.5 1311,373.5 1311.5,374.5 1312,375.1 1312.5,375.1 1313,375.2 1313.5,375 1314,374.1 1314.5,373.2 1315,373.4 1315.5,374.4 1316,375.4 1316.5,375.4 1317,375.4 1317.5,375.5 1318,374.9 1318.5,374.1 1319,373.7 1319.5,374.5 1320,375.3 1320.5,376.1 1321,377.2 1321.5,378.3 1322,379.3 1322.5,379 1323,378.5 1323.5,378.6 1324,378.9 1324.5,379.1 1325,379 1325.5,378.9 1326,378.8 1326.5,378.4 1327,378.1 1327.5,377.9 1328,378.2 1328.5,378.4 1329,378.4 1329.5,378.4 1330,378.3 1330.5,378.1 1331,377.8 1331.5,377.4 1332,377.7 1332.5,378 1333,378.2 1333.5,378.3 1334,378.3 1334.5,378.3 1335,377.9 1335.5,377.6 1336,377.7 1336.5,378.1 1337,378.6 1337.5,378.7 1338,378.8 1338.5,378.9 1339,378.7 1339.5,378.5 1340,378.4 1340.5,378.8 1341,379.3 1341.5,379.6 1342,379.7 1342.5,379.8 1343,379.9 1343.5,379.7 1344,379.6 1344.5,379.4 1345,379.5 1345.5,379.5 1346,379.4 1346.5,379.2 1347,379 1347.5,378.4 1348,377.7 1348.5,377.3 1349,377.6 1349.5,378 1350,378 1350.5,377.8 1351,377.6 1351.5,377.3 1352,376.7 1352.5,376.1 1353,376.3 1353.5,376.6 1354,376.7 1354.5,376.6 1355,376.4 1355.5,376.2 1356,375.3 1356.5,374.5 1357,374.3 1357.5,374.9 1358,375.6 1358.5,375.5 1359,375.4 1359.5,375.3 1360,374.8 1360.5,374.1 1361,373.4 1361.5,373.9 1362,374.5 1362.5,374.8 1363,374.7 1363.5,374.7 1364,374.5 1364.5,374.1 1365,373.8 1365.5,373.8 1366,374.1 1366.5,374.4 1367,374.3 1367.5,374.3 1368,374.3 1368.5,373.7 1369,373.1 1369.5,372.8 1370,373.5 1370.5,374.2 1371,374.5 1371.5,374.5 1372,374.5 1372.5,374.2 1373,373.2 1373.5,372.3 1374,373 1374.5,374 1375,374.8 1375.5,374.8 1376,374.8 1376.5,374.8 1377,374.3 1377.5,373.8 1378,373.7 1378.5,374.3 1379,374.9 1379.5,375.1 1380,375.1 1380.5,375.1 1381,375 1381.5,374.6 1382,374.3 1382.5,374.7 1383,375.1 1383.5,375.4 1384,375.4 1384.5,375.4 1385,375.4 1385.5,375.1 1386,374.7 1386.5,374.8 1387,375.2 1387.5,375.6 1388,375.7 1388.5,375.7 1389,375.7 1389.5,375 1390,374.1 1390.5,374.5 1391,376.7 1391.5,378.6 1392,379.7 1392.5,379.6 1393,379.5 1393.5,379.3 1394,379.1 1394.5,378.9 1395,378.8 1395.5,378.9 1396,378.9 1396.5,378.8 1397,378.8 1397.5,378.7 1398,378.4 1398.5,378 1399,377.9 1399.5,378.1 1400,378.4 1400.5,378.4 1401,378.4 1401.5,378.4 1402,378.3 1402.5,378.1 1403,377.9 1403.5,378.1 1404,378.3 1404.5,378.5 1405,378.5 1405.5,378.6 1406,378.6 1406.5,378.4 1407,378.2 1407.5,378.3 1408,378.7 1408.5,379 1409,379.1 1409.5,379.2 1410,379.4 1410.5,379.2 1411,378.9 1411.5,378.7 1412,379.2 1412.5,379.7 1413,380.1 1413.5,380.2 1414,380.4 1414.5,379.9 1415,379.4 1415.5,379 1416,378.9 1416.5,379 1417,379.1 1417.5,378.9 1418,378.7 1418.5,378.6 1419,377.9 1419.5,377.2 1420,376.8 1420.5,377.2 1421,377.5 1421.5,377.6 1422,377.4 1422.5,377.2 1423,376.8 1423.5,376 1424,375.3 1424.5,375.6 1425,376 1425.5,376.4 1426,376.2 1426.5,376.1 1427,375.9 1427.5,375.2 1428,374.4 1428.5,374.2 1429,374.8 1429.5,375.3 1430,375.3 1430.5,375.2 1431,375.1 1431.5,374.8 1432,374.4 1432.5,374.1 1433,374.3 1433.5,374.6 1434,374.7 1434.5,374.6 1435,374.6 1435.5,374.4 1436,373.9 1436.5,373.4 1437,373.4 1437.5,373.9 1438,374.4 1438.5,374.4 1439,374.4 1439.5,374.5 1440,374 1440.5,373.3 1441,373 1441.5,373.7 1442,374.4 1442.5,374.7 1443,374.7 1443.5,374.8 1444,374.5 1444.5,374 1445,373.4 1445.5,373.8 1446,374.4 1446.5,375 1447,375 1447.5,375 1448,375.1 1448.5,374.7 1449,374.3 1449.5,374.3 1450,374.7 1450.5,375.1 1451,375.3 1451.5,375.3 1452,375.3 1452.5,375.1 1453,374.8 1453.5,374.4 1454,374.8 1454.5,375.2 1455,375.5 1455.5,375.6 1456,375.6 1456.5,375.6 1457,375 1457.5,374.5 1458,374.6 1458.5,375.2 1459,375.8 1459.5,375.9 1460,375.9 1460.5,377 1461,377.9 1461.5,378.9 1462,379.3 1462.5,379.4 1463,379.5 1463.5,379.4 1464,379.3 1464.5,379.2 1465,379.1 1465.5,378.8 1466,378.5 1466.5,378.5 1467,378.6 1467.5,378.7 1468,378.7 1468.5,378.6 1469,378.6 1469.5,378.3 1470,377.9 1470.5,377.8 1471,378.1 1471.5,378.3 1472,378.4 1472.5,378.4 1473,378.4 1473.5,378.3 1474,378.1 1474.5,377.9 1475,378.1 1475.5,378.5 1476,378.7 1476.5,378.8 1477,378.8 1477.5,378.9 1478,378.8 1478.5,378.6 1479,378.7 1479.5,379.1 1480,379.4 1480.5,379.6 1481,379.7 1481.5,379.8 1482,379.7 1482.5,379.3 1483,379 1483.5,379.6 1484,380.2 1484.5,380 1485,379.8 1485.5,379.6 1486,379.3 1486.5,378.5 1487,377.8 1487.5,377.8 1488,378.2 1488.5,378.5 1489,378.4 1489.5,378.2 1490,378 1490.5,377.6 1491,377.1 1491.5,376.7 1492,376.9 1492.5,377.1 1493,377.1 1493.5,376.9 1494,376.8 1494.5,376.5 1495,376.1 1495.5,375.7 1496,375.7 1496.5,375.9 1497,376 1497.5,375.9 1498,375.7 1498.5,375.6 1499,374.7 1499.5,373.8 1500,373.6 1500.5,374.2 1501,375 1501.5,375 1502,375 1502.5,374.9 1503,374.5 1503.5,373.9 1504,373.3 1504.5,373.8 1505,374.3 1505.5,374.5 1506,374.5 1506.5,374.5 1507,374.2 1507.5,373.2 1508,372.1 1508.5,372.3 1509,373.4 1509.5,374.5 1510,374.5 1510.5,374.6 1511,374.6 1511.5,374.1 1512,373.4 1512.5,372.9 1513,373.7 1513.5,374.5 1514,374.8 1514.5,374.8 1515,374.9 1515.5,374.6 1516,373.6 1516.5,372.7 1517,373.2 1517.5,374.2 1518,375.1 1518.5,375.1 1519,375.2 1519.5,375.2 1520,374.4 1520.5,373.6 1521,373.4 1521.5,374.2 1522,375.1 1522.5,375.4 1523,375.4 1523.5,375.5 1524,375 1524.5,374.1 1525,373.2 1525.5,374 1526,375 1526.5,375.7 1527,375.7 1527.5,375.7 1528,375.7 1528.5,374.8 1529,373.9 1529.5,373.9 1530,375.2 1530.5,377.3 1531,378.5 1531.5,379.6 1532,379.7 1532.5,379.5 1533,379.2 1533.5,379 1534,379 1534.5,379.1 1535,379.1 1535.5,379 1536,378.9 1536.5,378.8 1537,378.6 1537.5,378.4 1538,378.4 1538.5,378.5 1539,378.5 1539.5,378.5 1540,378.5 1540.5,378.4 1541,378.2 1541.5,377.8 1542,377.7 1542.5,378 1543,378.3 1543.5,378.5 1544,378.5 1544.5,378.5 1545,378.5 1545.5,378.3 1546,378.1 1546.5,378.4 1547,378.7 1547.5,378.9 1548,379 1548.5,379.1 1549,379.2 1549.5,379 1550,378.8 1550.5,378.8 1551,379.3 1551.5,379.8 1552,379.9 1552.5,380.1 1553,380.2 1553.5,380 1554,379.1 1554.5,378.4 1555,378.8 1555.5,379.2 1556,379.3 1556.5,379.2 1557,379 1557.5,378.7 1558,378.2 1558.5,377.7 1559,377.6 1559.5,377.7 1560,377.9 1560.5,377.8 1561,377.6 1561.5,377.5 1562,376.9 1562.5,376.3 1563,375.8 1563.5,376.1 1564,376.5 1564.5,376.6 1565,376.4 1565.5,376.3 1566,375.8 1566.5,374.8 1567,373.9 1567.5,374.2 1568,374.9 1568.5,375.5 1569,375.4 1569.5,375.3 1570,375.2 1570.5,374.7 1571,374.1 1571.5,373.9 1572,374.3 1572.5,374.7 1573,374.7 1573.5,374.7 1574,374.6 1574.5,374.2 1575,373.5 1575.5,372.8 1576,373.4 1576.5,374 1577,374.4 1577.5,374.4 1578,374.4 1578.5,374.3 1579,373.4 1579.5,372.6 1580,372.7 1580.5,373.6 1581,374.5 1581.5,374.6 1582,374.6 1582.5,374.7 1583,374.2 1583.5,373.6 1584,373.1 1584.5,373.8 1585,374.5 1585.5,374.9 1586,374.9 1586.5,374.9 1587,374.8 1587.5,374.5 1588,374.1 1588.5,374.3 1589,374.7 1589.5,375.1 1590,375.2 1590.5,375.2 1591,375.2 1591.5,374.3 1592,373.3 1592.5,373 1593,374 1593.5,375.1 1594,375.4 1594.5,375.5 1595,375.5 1595.5,375.2 1596,374.4 1596.5,373.7 1597,374.3 1597.5,375.1 1598,375.8 1598.5,375.9 1599,376 1599.5,376.1 1600,376.1 1600.5,376.9 1601,378.4 1601.5,380.1 1602,380.4 1602.5,380.4 1603,380.3 1603.5,380.2 1604,380 1604.5,379.8 1605,379.6 1605.5,379.6 1606,379.7 1606.5,379.7 1607,379.6 1607.5,379.5 1608,379.4 1608.5,379.1 1609,378.9 1609.5,378.9 1610,379.1 1610.5,379.3 1611,379.3 1611.5,379.3 1612,379.3 1612.5,379.1 1613,378.8 1613.5,378.7 1614,379 1614.5,379.3 1615,379.4 1615.5,379.5 1616,379.6 1616.5,379.6 1617,379.5 1617.5,379.4 1618,379.6 1618.5,379.9 1619,380.1 1619.5,380.2 1620,380.3 1620.5,380.5 1621,380.1 1621.5,379.7 1622,379.7 1622.5,380.3 1623,381 1623.5,381.2 1624,380.9 1624.5,380.7 1625,380.3 1625.5,379.9 1626,379.4 1626.5,379.5 1627,379.6 1627.5,379.6 1628,379.4 1628.5,379.3 1629,379 1629.5,378.3 1630,377.6 1630.5,377.5 1631,377.9 1631.5,378.3 1632,378.1 1632.5,378 1633,377.8 1633.5,377 1634,376.1 1634.5,375.3 1635,376 1635.5,376.7 1636,377 1636.5,376.8 1637,376.7 1637.5,376.5 1638,375.9 1638.5,375.3 1639,375.5 1639.5,375.8 1640,376.1 1640.5,376 1641,375.9 1641.5,375.8 1642,374.9 1642.5,373.9 1643,373.6 1643.5,374.4 1644,375.2 1644.5,375.4 1645,375.4 1645.5,375.3 1646,375.1 1646.5,374.6 1647,374.1 1647.5,374.4 1648,374.9 1648.5,375.3 1649,375.3 1649.5,375.4 1650,375.3 1650.5,374.9 1651,374.4 1651.5,374.4 1652,375 1652.5,375.5 1653,375.6 1653.5,375.6 1654,375.7 1654.5,375.3 1655,374.8 1655.5,374.4 1656,375 1656.5,375.6 1657,375.9 1657.5,375.9 1658,375.9 1658.5,375.8 1659,375.3 1659.5,374.8 1660,375 1660.5,375.6 1661,376.1 1661.5,376.2 1662,376.2 1662.5,376.2 1663,375.6 1663.5,374.8 1664,374.4 1664.5,375.3 1665,376.1 1665.5,376.5 1666,376.5 1666.5,376.5 1667,376.1 1667.5,375.3 1668,374.4 1668.5,375.1 1669,376 1669.5,376.7 1670,377.7 1670.5,378.8 1671,379.9 1671.5,380.2 1672,379.7 1672.5,379.6 1673,379.8 1673.5,380.1 1674,380.1 1674.5,380 1675,379.9 1675.5,379.6 1676,379.2 1676.5,378.7 1677,379 1677.5,379.3 1678,379.5 1678.5,379.4 1679,379.4 1679.5,379.3 1680,379 1680.5,378.8 1681,378.8 1681.5,379.1 1682,379.3 1682.5,379.3 1683,379.3 1683.5,379.3 1684,379.2 1684.5,379.1 1685,379 1685.5,379.3 1686,379.5 1686.5,379.7 1687,379.8 1687.5,379.8 1688,379.8 1688.5,379.4 1689,379.1 1689.5,379.5 1690,380 1690.5,380.5 1691,380.6 1691.5,380.8 1692,380.9 1692.5,380.7 1693,380.4 1693.5,380.4 1694,380.3 1694.5,380.5 1695,380.5 1695.5,380.3 1696,380.1 1696.5,379.5 1697,378.6 1697.5,377.8 1698,378.2 1698.5,378.7 1699,379.1 1699.5,378.9 1700,378.7 1700.5,378.5 1701,377.6 1701.5,376.7 1702,376.5 1702.5,377.1 1703,377.7 1703.5,377.6 1704,377.5 1704.5,377.3 1705,376.8 1705.5,376.1 1706,375.5 1706.5,376 1707,376.4 1707.5,376.6 1708,376.5 1708.5,376.4 1709,376 1709.5,375.2 1710,374.4 1710.5,374.6 1711,375.2 1711.5,375.8 1712,375.7 1712.5,375.7 1713,375.6 1713.5,374.7 1714,373.6 1714.5,373.2 1715,374.1 1715.5,375 1716,375.3 1716.5,375.3 1717,375.3 1717.5,375 1718,374.4 1718.5,373.8 1719,374.3 1719.5,374.9 1720,375.4 1720.5,375.4 1721,375.5 1721.5,375.5 1722,374.8 1722.5,374.1 1723,374.1 1723.5,374.8 1724,375.6 1724.5,375.7 1725,375.8 1725.5,375.8 1726,375.2 1726.5,374.2 1727,373.4 1727.5,374.4 1728,375.4 1728.5,376 1729,376 1729.5,376.1 1730,375.9 1730.5,375.4 1731,374.8 1731.5,375 1732,375.6 1732.5,376.3 1733,376.3 1733.5,376.3 1734,376.4 1734.5,376.1 1735,375.8 1735.5,375.7 1736,376 1736.5,376.4 1737,376.6 1737.5,376.6 1738,376.6 1738.5,376.4 1739,375.8 1739.5,375.4 1740,377.1 1740.5,378.9 1741,380.3 1741.5,380.6 1742,380.5 1742.5,380.4 1743,379.8 1743.5,379.3 1744,379.1 1744.5,379.5 1745,379.8 1745.5,379.8 1746,379.7 1746.5,379.6 1747,379.4 1747.5,378.9 1748,378.5 1748.5,378.8 1749,379.1 1749.5,379.3 1750,379.3 1750.5,379.3 1751,379.2 1751.5,379.1 1752,378.9 1752.5,378.9 1753,379.1 1753.5,379.3 1754,379.4 1754.5,379.4 1755,379.5 1755.5,379.3 1756,379 1756.5,378.8 1757,379.2 1757.5,379.7 1758,380 1758.5,380.1 1759,380.2 1759.5,380.2 1760,380.1 1760.5,379.9 1761,380.1 1761.5,380.5 1762,380.9 1762.5,381.1 1763,381.2 1763.5,380.9 1764,380.2 1764.5,379.4 1765,378.9 1765.5,379.4 1766,379.9 1766.5,379.9 1767,379.7 1767.5,379.5 1768,379 1768.5,378.2 1769,377.4 1769.5,377.8 1770,378.2 1770.5,378.5 1771,378.4 1771.5,378.2 1772,378 1772.5,377.6 1773,377.2 1773.5,377 1774,377.1 1774.5,377.3 1775,377.2 1775.5,377 1776,376.9 1776.5,376.3 1777,375.5 1777.5,374.7 1778,375.3 1778.5,375.9 1779,376.2 1779.5,376.1 1780,376 1780.5,375.7 1781,374.9 1781.5,374 1782,374.2 1782.5,374.9 1783,375.6 1783.5,375.5 1784,375.5 1784.5,375.4 1785,374.7 1785.5,373.9 1786,373.5 1786.5,374.2 1787,375 1787.5,375.2 1788,375.3 1788.5,375.3 1789,375.1 1789.5,374.7 1790,374.2 1790.5,374.6 1791,375.1 1791.5,375.5 1792,375.6 1792.5,375.6 1793,375.6 1793.5,375.2 1794,374.8 1794.5,374.8 1795,375.3 1795.5,375.7 1796,375.8 1796.5,375.9 1797,375.9 1797.5,375.4 1798,374.6 1798.5,373.9 1799,374.7 1799.5,375.6 1800,376.1 1800.5,376.1 1801,376.2 1801.5,376.1 1802,375.6 1802.5,375.2 1803,375.3 1803.5,375.8 1804,376.4 1804.5,376.4 1805,376.4 1805.5,376.5 1806,376 1806.5,375.4 1807,375 1807.5,375.7 1808,376.4 1808.5,376.7 1809,376.7 1809.5,377.3 1810,378.2 1810.5,378.9 1811,379.9 1811.5,380 1812,380.2 1812.5,380.3 1813,380.2 1813.5,380.1 1814,380 1814.5,379.6 1815,379.1 1815.5,378.9 1816,379.2 1816.5,379.5 1817,379.5 1817.5,379.5 1818,379.4 1818.5,379.3 1819,379.1 1819.5,378.9 1820,379 1820.5,379.1 1821,379.2 1821.5,379.2 1822,379.3 1822.5,379.2 1823,378.9 1823.5,378.7 1824,378.7 1824.5,379.1 1825,379.5 1825.5,379.5 1826,379.6 1826.5,379.7 1827,379.6 1827.5,379.4 1828,379.4 1828.5,379.7 1829,380.1 1829.5,380.3 1830,380.4 1830.5,380.5 1831,380.5 1831.5,380.2 1832,379.8 1832.5,380.1 1833,380.7 1833.5,380.8 1834,380.7 1834.5,380.5 1835,380.3 1835.5,379.6 1836,378.8 1836.5,378.3 1837,378.8 1837.5,379.2 1838,379.3 1838.5,379.1 1839,378.9 1839.5,378.4 1840,377.7 1840.5,376.9 1841,377.2 1841.5,377.6 1842,377.9 1842.5,377.8 1843,377.6 1843.5,377.5 1844,376.7 1844.5,375.9 1845,375.7 1845.5,376.2 1846,376.7 1846.5,376.7 1847,376.6 1847.5,376.5 1848,375.9 1848.5,375.1 1849,374.3 1849.5,374.9 1850,375.5 1850.5,375.9 1851,375.8 1851.5,375.7 1852,375.5 1852.5,374.9 1853,374.4 1853.5,374.4 1854,374.9 1854.5,375.3 1855,375.3 1855.5,375.2 1856,375.2 1856.5,374.5 1857,373.6 1857.5,373.2 1858,374.1 1858.5,374.9 1859,375.3 1859.5,375.3 1860,375.4 1860.5,375.1 1861,374.5 1861.5,373.8 1862,374.3 1862.5,375 1863,375.6 1863.5,375.6 1864,375.6 1864.5,375.7 1865,375.1 1865.5,374.6 1866,374.5 1866.5,375.1 1867,375.7 1867.5,375.9 1868,375.9 1868.5,375.9 1869,375.7 1869.5,375.2 1870,374.8 1870.5,375.3 1871,375.8 1871.5,376.1 1872,376.2 1872.5,376.2 1873,376.1 1873.5,375.6 1874,375 1874.5,375.1 1875,375.7 1875.5,376.4 1876,376.4 1876.5,376.5 1877,376.5 1877.5,376.3 1878,376 1878.5,375.8 1879,376.4 1879.5,377.8 1880,379.2 1880.5,380.4 1881,381.2 1881.5,381 1882,380.5 1882.5,380 1883,380.1 1883.5,380.4 1884,380.7 1884.5,380.6 1885,380.5 1885.5,380.4 1886,380.1 1886.5,379.8 1887,379.7 1887.5,379.8 1888,380 1888.5,380 1889,380 1889.5,380 1890,379.9 1890.5,379.7 1891,379.5 1891.5,379.6 1892,379.8 1892.5,380 1893,380 1893.5,380 1894,380 1894.5,379.8 1895,379.6 1895.5,379.7 1896,380 1896.5,380.4 1897,380.5 1897.5,380.6 1898,380.7 1898.5,380.7 1899,380.7 1899.5,380.6 1900,380.9 1900.5,381.2 1901,381.4 1901.5,381.5 1902,381.6 1902.5,381.6 1902.5,385.1 1902,385.4 1901.5,385.6 1901,385 1900.5,384.4 1900,384.1 1899.5,384 1899,383.9 1898.5,383.9 1898,384.1 1897.5,384.2 1897,384 1896.5,383.6 1896,383.3 1895.5,383.2 1895,383.2 1894.5,383.1 1894,383.3 1893.5,383.5 1893,383.5 1892.5,383.3 1892,383 1891.5,382.9 1891,382.9 1890.5,382.9 1890,383.1 1889.5,383.4 1889,383.8 1888.5,383.6 1888,383.3 1887.5,383.1 1887,383.2 1886.5,383.3 1886,383.4 1885.5,383.6 1885,383.9 1884.5,384 1884,383.9 1883.5,383.8 1883,383.9 1882.5,384 1882,384.1 1881.5,384.3 1881,384.6 1880.5,384.6 1880,384 1879.5,383.1 1879,382.4 1878.5,382.3 1878,382.2 1877.5,382.3 1877,383 1876.5,383.7 1876,383.5 1875.5,382.6 1875,381.8 1874.5,381.7 1874,381.7 1873.5,381.7 1873,382.3 1872.5,383.1 1872,383.6 1871.5,382.7 1871,381.8 1870.5,381.5 1870,381.4 1869.5,381.4 1869,381.6 1868.5,382.1 1868,382.6 1867.5,382.2 1867,381.7 1866.5,381.2 1866,381.2 1865.5,381.1 1865,381.1 1864.5,382 1864,382.9 1863.5,383.1 1863,382.1 1862.5,381.1 1862,380.9 1861.5,380.9 1861,380.8 1860.5,381.1 1860,381.6 1859.5,382.1 1859,381.6 1858.5,381 1858,380.6 1857.5,380.6 1857,380.6 1856.5,380.6 1856,381.1 1855.5,381.5 1855,381.4 1854.5,381 1854,380.6 1853.5,380.6 1853,380.6 1852.5,380.6 1852,381 1851.5,381.5 1851,381.8 1850.5,381.4 1850,381 1849.5,380.9 1849,381 1848.5,381.1 1848,381.4 1847.5,382.2 1847,383 1846.5,382.7 1846,382.1 1845.5,381.6 1845,381.7 1844.5,381.8 1844,381.9 1843.5,382.7 1843,383.5 1842.5,383.8 1842,383.2 1841.5,382.6 1841,382.6 1840.5,382.7 1840,382.8 1839.5,383.1 1839,383.6 1838.5,384 1838,383.9 1837.5,383.7 1837,383.6 1836.5,383.8 1836,383.9 1835.5,384.1 1835,384.9 1834.5,385.7 1834,385.8 1833.5,385.3 1833,384.3 1832.5,384.1 1832,383.9 1831.5,383.8 1831,384 1830.5,384.2 1830,384.4 1829.5,383.9 1829,383.4 1828.5,383.1 1828,383 1827.5,382.9 1827,382.8 1826.5,382.9 1826,383.1 1825.5,382.9 1825,382.7 1824.5,382.4 1824,382.4 1823.5,382.3 1823,382.3 1822.5,382.6 1822,383.1 1821.5,383.3 1821,382.8 1820.5,382.4 1820,382.3 1819.5,382.3 1819,382.3 1818.5,382.5 1818,382.9 1817.5,383.3 1817,383.1 1816.5,382.9 1816,382.7 1815.5,382.7 1815,382.8 1814.5,382.9 1814,383.4 1813.5,383.9 1813,384.1 1812.5,383.8 1812,383.5 1811.5,383.5 1811,383.6 1810.5,383.2 1810,382.9 1809.5,382.9 1809,383.1 1808.5,382.7 1808,382.3 1807.5,382 1807,382 1806.5,381.9 1806,382 1805.5,382.5 1805,382.9 1804.5,382.8 1804,382.3 1803.5,381.7 1803,381.7 1802.5,381.7 1802,381.6 1801.5,381.9 1801,382.3 1800.5,382.6 1800,382.1 1799.5,381.6 1799,381.4 1798.5,381.4 1798,381.4 1797.5,381.7 1797,382.7 1796.5,383.7 1796,383.1 1795.5,382 1795,381.2 1794.5,381.1 1794,381.1 1793.5,381.1 1793,382 1792.5,383 1792,383.3 1791.5,382.2 1791,381.1 1790.5,380.9 1790,380.8 1789.5,380.8 1789,381.3 1788.5,382.2 1788,383.1 1787.5,382.2 1787,381.3 1786.5,380.6 1786,380.6 1785.5,380.6 1785,380.7 1784.5,381.6 1784,382.5 1783.5,382.4 1783,381.6 1782.5,380.8 1782,380.7 1781.5,380.8 1781,380.8 1780.5,381.2 1780,381.7 1779.5,382.1 1779,381.7 1778.5,381.3 1778,381.2 1777.5,381.3 1777,381.4 1776.5,381.7 1776,382.6 1775.5,383.5 1775,383.3 1774.5,382.6 1774,382 1773.5,382.1 1773,382.2 1772.5,382.3 1772,383.1 1771.5,383.9 1771,384.3 1770.5,383.7 1770,383.1 1769.5,383 1769,383.2 1768.5,383.3 1768,383.7 1767.5,384.3 1767,384.9 1766.5,384.7 1766,384.4 1765.5,384.2 1765,384.3 1764.5,384.4 1764,384.6 1763.5,385.2 1763,385.1 1762.5,385 1762,384.4 1761.5,383.9 1761,383.7 1760.5,383.5 1760,383.4 1759.5,383.4 1759,383.5 1758.5,383.6 1758,383.3 1757.5,383 1757,382.8 1756.5,382.7 1756,382.6 1755.5,382.6 1755,382.8 1754.5,383 1754,382.9 1753.5,382.6 1753,382.3 1752.5,382.3 1752,382.3 1751.5,382.3 1751,382.4 1750.5,382.6 1750,382.7 1749.5,382.6 1749,382.4 1748.5,382.4 1748,382.5 1747.5,382.5 1747,382.7 1746.5,383 1746,383.4 1745.5,383.3 1745,383.1 1744.5,383 1744,383.1 1743.5,383.2 1743,383.3 1742.5,383.8 1742,384.3 1741.5,384.4 1741,384 1740.5,383.2 1740,382.7 1739.5,382.2 1739,382.1 1738.5,382.4 1738,382.8 1737.5,383.3 1737,382.8 1736.5,382.3 1736,381.9 1735.5,381.9 1735,381.8 1734.5,381.9 1734,382.2 1733.5,382.5 1733,382.4 1732.5,382 1732,381.6 1731.5,381.6 1731,381.6 1730.5,381.5 1730,381.8 1729.5,382.1 1729,382.4 1728.5,382 1728,381.5 1727.5,381.3 1727,381.3 1726.5,381.3 1726,381.3 1725.5,381.6 1725,381.9 1724.5,381.7 1724,381.4 1723.5,381.1 1723,381 1722.5,381 1722,381 1721.5,381.3 1721,381.6 1720.5,381.7 1720,381.3 1719.5,380.9 1719,380.7 1718.5,380.7 1718,380.7 1717.5,381.1 1717,381.9 1716.5,382.7 1716,382 1715.5,381.2 1715,380.6 1714.5,380.6 1714,380.6 1713.5,380.7 1713,381 1712.5,381.4 1712,381.4 1711.5,381.1 1711,380.9 1710.5,380.9 1710,381 1709.5,381 1709,381.5 1708.5,382.1 1708,382.6 1707.5,382.2 1707,381.7 1706.5,381.5 1706,381.6 1705.5,381.7 1705,381.9 1704.5,382.4 1704,382.8 1703.5,382.8 1703,382.6 1702.5,382.3 1702,382.4 1701.5,382.6 1701,382.7 1700.5,383.5 1700,384.4 1699.5,384.9 1699,384.2 1698.5,383.6 1698,383.5 1697.5,383.6 1697,383.8 1696.5,384.1 1696,384.6 1695.5,385.1 1695,385 1694.5,384.8 1694,384.6 1693.5,384.3 1693,384.2 1692.5,384 1692,384.3 1691.5,384.4 1691,384.3 1690.5,383.8 1690,383.4 1689.5,383.3 1689,383.2 1688.5,383 1688,383.2 1687.5,383.4 1687,383.7 1686.5,383.2 1686,382.8 1685.5,382.5 1685,382.5 1684.5,382.4 1684,382.4 1683.5,382.7 1683,383 1682.5,382.9 1682,382.6 1681.5,382.3 1681,382.3 1680.5,382.3 1680,382.3 1679.5,382.6 1679,383 1678.5,383.3 1678,383 1677.5,382.7 1677,382.6 1676.5,382.7 1676,382.7 1675.5,382.9 1675,383.2 1674.5,383.5 1674,383.5 1673.5,383.4 1673,383.3 1672.5,383.4 1672,383.5 1671.5,383.6 1671,383.7 1670.5,383.8 1670,383.7 1669.5,382.9 1669,382.2 1668.5,382.1 1668,382 1667.5,382 1667,382.4 1666.5,383.2 1666,384.1 1665.5,383.3 1665,382.4 1664.5,381.8 1664,381.7 1663.5,381.7 1663,381.8 1662.5,382.8 1662,383.9 1661.5,383.8 1661,382.7 1660.5,381.6 1660,381.5 1659.5,381.4 1659,381.4 1658.5,382.1 1658,383.1 1657.5,383.9 1657,382.8 1656.5,381.7 1656,381.2 1655.5,381.2 1655,381.1 1654.5,381.3 1654,381.9 1653.5,382.5 1653,382.2 1652.5,381.6 1652,380.9 1651.5,380.9 1651,380.9 1650.5,380.8 1650,381.4 1649.5,382.1 1649,382.4 1648.5,381.6 1648,380.9 1647.5,380.6 1647,380.6 1646.5,380.6 1646,380.8 1645.5,381.3 1645,381.8 1644.5,381.4 1644,381 1643.5,380.7 1643,380.7 1642.5,380.7 1642,380.8 1641.5,381.8 1641,382.8 1640.5,382.9 1640,382 1639.5,381.2 1639,381.1 1638.5,381.2 1638,381.2 1637.5,381.5 1637,381.9 1636.5,382.2 1636,382 1635.5,381.8 1635,381.8 1634.5,381.9 1634,382 1633.5,382.3 1633,382.9 1632.5,383.6 1632,383.5 1631.5,383.1 1631,382.7 1630.5,382.9 1630,383 1629.5,383.1 1629,383.6 1628.5,384.1 1628,384.4 1627.5,384.2 1627,383.9 1626.5,383.9 1626,384.1 1625.5,384.2 1625,384.5 1624.5,385.1 1624,385.6 1623.5,384.9 1623,384.4 1622.5,384 1622,383.8 1621.5,383.7 1621,383.6 1620.5,383.6 1620,383.7 1619.5,383.6 1619,383.3 1618.5,383 1618,382.9 1617.5,382.8 1617,382.7 1616.5,382.8 1616,382.9 1615.5,383 1615,382.7 1614.5,382.5 1614,382.4 1613.5,382.3 1613,382.3 1612.5,382.3 1612,382.7 1611.5,383.1 1611,383.1 1610.5,382.7 1610,382.3 1609.5,382.3 1609,382.4 1608.5,382.4 1608,382.8 1607.5,383.3 1607,383.6 1606.5,383.3 1606,383 1605.5,382.8 1605,382.9 1604.5,383 1604,383.2 1603.5,383.4 1603,383.7 1602.5,383.7 1602,383.6 1601.5,383.5 1601,383 1600.5,382.5 1600,381.9 1599.5,382.1 1599,382.5 1598.5,382.5 1598,381.9 1597.5,381.3 1597,381 1596.5,381 1596,381 1595.5,381.2 1595,381.7 1594.5,382.1 1594,381.7 1593.5,381.2 1593,380.8 1592.5,380.7 1592,380.7 1591.5,380.7 1591,381.2 1590.5,381.6 1590,381.6 1589.5,381.1 1589,380.6 1588.5,380.5 1588,380.4 1587.5,380.4 1587,380.9 1586.5,381.7 1586,382.3 1585.5,381.5 1585,380.7 1584.5,380.2 1584,380.2 1583.5,380.1 1583,380.2 1582.5,380.7 1582,381.1 1581.5,380.9 1581,380.4 1580.5,379.9 1580,379.9 1579.5,379.9 1579,379.8 1578.5,380.5 1578,381.3 1577.5,381.7 1577,380.9 1576.5,380 1576,379.7 1575.5,379.7 1575,379.7 1574.5,380.1 1574,381.1 1573.5,382 1573,381.4 1572.5,380.5 1572,379.9 1571.5,379.9 1571,380 1570.5,380.1 1570,381 1569.5,381.9 1569,382.1 1568.5,381.3 1568,380.6 1567.5,380.5 1567,380.6 1566.5,380.7 1566,381.1 1565.5,381.8 1565,382.4 1564.5,382 1564,381.5 1563.5,381.3 1563,381.4 1562.5,381.5 1562,381.7 1561.5,382.3 1561,382.9 1560.5,382.9 1560,382.6 1559.5,382.3 1559,382.4 1558.5,382.6 1558,382.7 1557.5,383.4 1557,384.2 1556.5,384.8 1556,384.2 1555.5,383.7 1555,383.6 1554.5,383.7 1554,383.9 1553.5,383.5 1553,383.7 1552.5,383.8 1552,383.5 1551.5,383.1 1551,382.7 1550.5,382.6 1550,382.5 1549.5,382.3 1549,382.6 1548.5,383 1548,383 1547.5,382.5 1547,382 1546.5,381.8 1546,381.7 1545.5,381.6 1545,381.8 1544.5,382.1 1544,382.4 1543.5,382.1 1543,381.7 1542.5,381.4 1542,381.4 1541.5,381.4 1541,381.5 1540.5,381.8 1540,382.1 1539.5,382.1 1539,381.9 1538.5,381.6 1538,381.7 1537.5,381.7 1537,381.8 1536.5,382.1 1536,382.5 1535.5,382.8 1535,382.6 1534.5,382.4 1534,382.3 1533.5,382.4 1533,382.5 1532.5,382.7 1532,383.3 1531.5,383.8 1531,383.5 1530.5,382.6 1530,381.4 1529.5,381.3 1529,381.2 1528.5,381.2 1528,381.8 1527.5,382.4 1527,382.7 1526.5,382 1526,381.3 1525.5,381 1525,381 1524.5,380.9 1524,381.3 1523.5,382 1523,382.8 1522.5,382.2 1522,381.3 1521.5,380.7 1521,380.7 1520.5,380.7 1520,380.7 1519.5,381.6 1519,382.5 1518.5,382.6 1518,381.6 1517.5,380.6 1517,380.4 1516.5,380.4 1516,380.4 1515.5,380.6 1515,381 1514.5,381.4 1514,380.9 1513.5,380.4 1513,380.1 1512.5,380.1 1512,380.1 1511.5,380.3 1511,381.1 1510.5,382 1510,381.7 1509.5,380.8 1509,379.9 1508.5,379.8 1508,379.8 1507.5,379.8 1507,380.4 1506.5,381.1 1506,381.5 1505.5,380.8 1505,380.1 1504.5,379.8 1504,379.8 1503.5,379.9 1503,380.1 1502.5,380.6 1502,381.1 1501.5,380.9 1501,380.4 1500.5,380.1 1500,380.2 1499.5,380.2 1499,380.3 1498.5,380.9 1498,381.5 1497.5,381.7 1497,381.2 1496.5,380.8 1496,380.8 1495.5,380.9 1495,381 1494.5,381.6 1494,382.6 1493.5,383.5 1493,382.8 1492.5,382.1 1492,381.7 1491.5,381.8 1491,382 1490.5,382.2 1490,383 1489.5,383.8 1489,383.8 1488.5,383.3 1488,382.8 1487.5,382.9 1487,383.1 1486.5,383.2 1486,383.8 1485.5,384.5 1485,385 1484.5,384.6 1484,383.7 1483.5,383.3 1483,383.2 1482.5,383.1 1482,383.1 1481.5,383.5 1481,383.7 1480.5,383.4 1480,382.8 1479.5,382.3 1479,382.2 1478.5,382.1 1478,382 1477.5,382.2 1477,382.3 1476.5,382.3 1476,382 1475.5,381.7 1475,381.6 1474.5,381.5 1474,381.5 1473.5,381.7 1473,382 1472.5,382.3 1472,382 1471.5,381.7 1471,381.4 1470.5,381.5 1470,381.5 1469.5,381.6 1469,382 1468.5,382.4 1468,382.5 1467.5,382.2 1467,381.9 1466.5,381.9 1466,382 1465.5,382.1 1465,382.4 1464.5,382.8 1464,383.2 1463.5,382.9 1463,382.7 1462.5,382.6 1462,382.7 1461.5,382.6 1461,382.2 1460.5,382.1 1460,382.1 1459.5,381.9 1459,381.5 1458.5,381.2 1458,381.2 1457.5,381.1 1457,381.1 1456.5,381.5 1456,382 1455.5,382.2 1455,381.7 1454.5,381.1 1454,380.9 1453.5,380.8 1453,380.8 1452.5,381.2 1452,382.2 1451.5,383.2 1451,382.5 1450.5,381.4 1450,380.6 1449.5,380.6 1449,380.5 1448.5,380.5 1448,381.5 1447.5,382.6 1447,382.7 1446.5,381.6 1446,380.5 1445.5,380.3 1445,380.3 1444.5,380.2 1444,380.6 1443.5,381.3 1443,381.9 1442.5,381.2 1442,380.5 1441.5,380 1441,380 1440.5,379.9 1440,380 1439.5,380.6 1439,381.2 1438.5,381.1 1438,380.4 1437.5,379.8 1437,379.8 1436.5,379.7 1436,379.7 1435.5,380.2 1435,380.7 1434.5,381.1 1434,380.6 1433.5,380.1 1433,379.9 1432.5,379.9 1432,379.9 1431.5,380.1 1431,380.6 1430.5,381 1430,380.9 1429.5,380.6 1429,380.3 1428.5,380.4 1428,380.5 1427.5,380.5 1427,381.4 1426.5,382.3 1426,382.7 1425.5,381.9 1425,381.2 1424.5,381.1 1424,381.2 1423.5,381.4 1423,381.8 1422.5,382.6 1422,383.4 1421.5,382.9 1421,382.4 1420.5,382.1 1420,382.2 1419.5,382.4 1419,382.6 1418.5,383.3 1418,384 1417.5,384.1 1417,383.7 1416.5,383.3 1416,383.3 1415.5,383.5 1415,383.6 1414.5,384.2 1414,384.5 1413.5,384.8 1413,384 1412.5,383.3 1412,382.8 1411.5,382.7 1411,382.6 1410.5,382.6 1410,382.8 1409.5,383 1409,382.8 1408.5,382.3 1408,381.9 1407.5,381.8 1407,381.8 1406.5,381.7 1406,381.9 1405.5,382.2 1405,382.4 1404.5,381.9 1404,381.6 1403.5,381.4 1403,381.4 1402.5,381.4 1402,381.6 1401.5,382 1401,382.4 1400.5,382.1 1400,381.7 1399.5,381.5 1399,381.5 1398.5,381.6 1398,381.7 1397.5,382 1397,382.4 1396.5,382.5 1396,382.3 1395.5,382.1 1395,382.1 1394.5,382.2 1394,382.3 1393.5,382.5 1393,382.8 1392.5,383 1392,383 1391.5,382.5 1391,381.9 1390.5,381.5 1390,381.2 1389.5,381.3 1389,381.9 1388.5,382.5 1388,382.3 1387.5,381.7 1387,381 1386.5,381 1386,380.9 1385.5,380.9 1385,381.5 1384.5,382.2 1384,382.7 1383.5,381.8 1383,381 1382.5,380.7 1382,380.6 1381.5,380.6 1381,380.8 1380.5,381.5 1380,382.1 1379.5,381.7 1379,381 1378.5,380.4 1378,380.4 1377.5,380.3 1377,380.3 1376.5,380.9 1376,381.5 1375.5,381.6 1375,380.9 1374.5,380.3 1374,380.1 1373.5,380.1 1373,380 1372.5,380.4 1372,381.2 1371.5,381.9 1371,381.2 1370.5,380.3 1370,379.8 1369.5,379.8 1369,379.7 1368.5,379.8 1368,380.2 1367.5,380.6 1367,380.6 1366.5,380.1 1366,379.7 1365.5,379.7 1365,379.7 1364.5,379.7 1364,380.2 1363.5,380.9 1363,381.4 1362.5,380.7 1362,380.2 1361.5,379.9 1361,380 1360.5,380 1360,380.3 1359.5,381.2 1359,382 1358.5,381.7 1358,381 1357.5,380.5 1357,380.6 1356.5,380.6 1356,380.7 1355.5,381.4 1355,382 1354.5,382.3 1354,381.9 1353.5,381.4 1353,381.4 1352.5,381.5 1352,381.6 1351.5,382.1 1351,382.9 1350.5,383.8 1350,383.3 1349.5,382.8 1349,382.4 1348.5,382.6 1348,382.7 1347.5,382.9 1347,383.6 1346.5,384.3 1346,384.4 1345.5,384 1345,383.6 1344.5,383.7 1344,383.2 1343.5,383.1 1343,383.2 1342.5,383.3 1342,383.4 1341.5,383 1341,382.6 1340.5,382.3 1340,382.2 1339.5,382.1 1339,382 1338.5,382.1 1338,382.2 1337.5,382.1 1337,381.8 1336.5,381.5 1336,381.5 1335.5,381.4 1335,381.4 1334.5,381.5 1334,381.7 1333.5,381.8 1333,381.6 1332.5,381.3 1332,381.2 1331.5,381.2 1331,381.3 1330.5,381.4 1330,381.8 1329.5,382.2 1329,382 1328.5,381.7 1328,381.5 1327.5,381.6 1327,381.7 1326.5,381.7 1326,382.2 1325.5,382.7 1325,382.9 1324.5,382.6 1324,382.3 1323.5,382.3 1323,382.4 1322.5,382.5 1322,382.8 1321.5,382.9 1321,383.4 1320.5,382.5 1320,381.6 1319.5,381 1319,381 1318.5,380.9 1318,381 1317.5,381.5 1317,382 1316.5,381.8 1316,381.3 1315.5,380.7 1315,380.7 1314.5,380.7 1314,380.6 1313.5,381.1 1313,381.7 1312.5,382.1 1312,381.4 1311.5,380.7 1311,380.4 1310.5,380.4 1310,380.3 1309.5,380.6 1309,381.5 1308.5,382.4 1308,381.9 1307.5,380.9 1307,380.1 1306.5,380.1 1306,380.1 1305.5,380 1305,380.8 1304.5,381.6 1304,381.8 1303.5,381 1303,380.1 1302.5,379.8 1302,379.8 1301.5,379.7 1301,380.2 1300.5,381.1 1300,382 1299.5,381.2 1299,380.2 1298.5,379.5 1298,379.5 1297.5,379.5 1297,379.6 1296.5,380.4 1296,381.2 1295.5,381.2 1295,380.4 1294.5,379.6 1294,379.6 1293.5,379.6 1293,379.6 1292.5,380.2 1292,380.9 1291.5,381.6 1291,380.9 1290.5,380.2 1290,379.9 1289.5,380 1289,380.1 1288.5,380.3 1288,381.1 1287.5,381.8 1287,381.6 1286.5,381.1 1286,380.6 1285.5,380.7 1285,380.8 1284.5,380.9 1284,381.4 1283.5,382 1283,382.3 1282.5,382 1282,381.7 1281.5,381.6 1281,381.8 1280.5,381.9 1280,382.3 1279.5,383.1 1279,383.9 1278.5,383.6 1278,383.1 1277.5,382.7 1277,382.8 1276.5,383 1276,383.2 1275.5,383.9 1275,384.6 1274.5,384.4 1274,383.7 1273.5,383 1273,382.7 1272.5,382.6 1272,382.5 1271.5,382.6 1271,382.9 1270.5,383.1 1270,382.6 1269.5,382.1 1269,381.8 1268.5,381.7 1268,381.6 1267.5,381.5 1267,381.6 1266.5,381.7 1266,381.6 1265.5,381.4 1265,381.2 1264.5,381.1 1264,381.1 1263.5,381.1 1263,381.3 1262.5,381.6 1262,381.8 1261.5,381.5 1261,381.2 1260.5,381.1 1260,381.1 1259.5,381.2 1259,381.3 1258.5,381.6 1258,382 1257.5,381.9 1257,381.7 1256.5,381.6 1256,381.6 1255.5,381.7 1255,381.8 1254.5,382.1 1254,382.5 1253.5,382.6 1253,382.5 1252.5,382.4 1252,382.2 1251.5,381.8 1251,381.3 1250.5,381.1 1250,381.4 1249.5,381.8 1249,381.4 1248.5,381 1248,380.7 1247.5,380.7 1247,380.6 1246.5,380.7 1246,381.4 1245.5,382.1 1245,382 1244.5,381.3 1244,380.5 1243.5,380.4 1243,380.3 1242.5,380.3 1242,380.6 1241.5,381 1241,381.3 1240.5,380.8 1240,380.3 1239.5,380.1 1239,380.1 1238.5,380 1238,380.2 1237.5,381 1237,381.7 1236.5,381.3 1236,380.5 1235.5,379.8 1235,379.8 1234.5,379.7 1234,379.7 1233.5,380.4 1233,381.2 1232.5,381.5 1232,380.7 1231.5,379.8 1231,379.5 1230.5,379.5 1230,379.4 1229.5,379.8 1229,380.5 1228.5,381.2 1228,380.6 1227.5,379.8 1227,379.3 1226.5,379.3 1226,379.3 1225.5,379.4 1225,380.3 1224.5,381.2 1224,381.3 1223.5,380.4 1223,379.5 1222.5,379.5 1222,379.5 1221.5,379.6 1221,380.1 1220.5,380.8 1220,381.4 1219.5,380.8 1219,380.2 1218.5,380 1218,380 1217.5,380.1 1217,380.3 1216.5,380.7 1216,381.1 1215.5,381.1 1215,380.9 1214.5,380.7 1214,380.8 1213.5,381 1213,381.1 1212.5,381.8 1212,382.6 1211.5,383 1211,382.5 1210.5,382 1210,381.8 1209.5,382 1209,382.1 1208.5,382.5 1208,383.4 1207.5,384.2 1207,383.9 1206.5,383.3 1206,383 1205.5,383.1 1205,383.2 1204.5,382.9 1204,383 1203.5,383.1 1203,383 1202.5,382.6 1202,382.3 1201.5,382.1 1201,382 1200.5,381.8 1200,381.9 1199.5,382.1 1199,382.3 1198.5,381.9 1198,381.5 1197.5,381.2 1197,381.2 1196.5,381.1 1196,381.1 1195.5,381.3 1195,381.6 1194.5,381.5 1194,381.2 1193.5,380.9 1193,380.8 1192.5,380.8 1192,380.8 1191.5,381.2 1191,381.6 1190.5,381.9 1190,381.5 1189.5,381.2 1189,381 1188.5,381.1 1188,381.1 1187.5,381.3 1187,381.7 1186.5,382.1 1186,382 1185.5,381.8 1185,381.6 1184.5,381.7 1184,381.8 1183.5,381.9 1183,382.4 1182.5,382.9 1182,383 1181.5,382.3 1181,381.2 1180.5,380.7 1180,380.6 1179.5,380.6 1179,381 1178.5,381.7 1178,382.5 1177.5,381.8 1177,380.9 1176.5,380.4 1176,380.3 1175.5,380.3 1175,380.4 1174.5,381.3 1174,382.2 1173.5,382.2 1173,381.2 1172.5,380.2 1172,380 1171.5,380 1171,380 1170.5,380.7 1170,381.7 1169.5,382.5 1169,381.4 1168.5,380.3 1168,379.8 1167.5,379.7 1167,379.7 1166.5,379.9 1166,380.8 1165.5,381.6 1165,381.3 1164.5,380.3 1164,379.5 1163.5,379.4 1163,379.4 1162.5,379.4 1162,379.9 1161.5,380.6 1161,380.9 1160.5,380.2 1160,379.4 1159.5,379.2 1159,379.1 1158.5,379.1 1158,379.4 1157.5,380.1 1157,380.7 1156.5,380.2 1156,379.6 1155.5,379.1 1155,379.1 1154.5,379.1 1154,379.2 1153.5,379.9 1153,380.6 1152.5,380.8 1152,380.1 1151.5,379.5 1151,379.4 1150.5,379.5 1150,379.5 1149.5,380 1149,380.6 1148.5,381.2 1148,380.7 1147.5,380.3 1147,380 1146.5,380.1 1146,380.2 1145.5,380.5 1145,381.4 1144.5,382.4 1144,382.3 1143.5,381.6 1143,380.9 1142.5,381 1142,381.1 1141.5,381.3 1141,381.7 1140.5,382.2 1140,382.5 1139.5,382.3 1139,382.1 1138.5,382.1 1138,382.2 1137.5,382.4 1137,382.7 1136.5,383.5 1136,384.3 1135.5,384.1 1135,383.6 1134.5,382.6 1134,382.5 1133.5,382.3 1133,382.2 1132.5,382.3 1132,382.3 1131.5,382.2 1131,381.9 1130.5,381.6 1130,381.5 1129.5,381.4 1129,381.3 1128.5,381.3 1128,381.4 1127.5,381.4 1127,381.2 1126.5,381 1126,380.8 1125.5,380.8 1125,380.7 1124.5,380.7 1124,380.9 1123.5,381.1 1123,381.1 1122.5,380.9 1122,380.6 1121.5,380.6 1121,380.7 1120.5,380.7 1120,380.9 1119.5,381.3 1119,381.6 1118.5,381.3 1118,381.1 1117.5,381 1117,381.1 1116.5,381.2 1116,381.4 1115.5,381.9 1115,382.4 1114.5,382.3 1114,382 1113.5,381.7 1113,381.8 1112.5,382 1112,381.5 1111.5,381.3 1111,381.2 1110.5,381.2 1110,380.8 1109.5,380.5 1109,380.3 1108.5,380.3 1108,380.3 1107.5,380.7 1107,381.6 1106.5,382.5 1106,381.8 1105.5,380.8 1105,380 1104.5,380 1104,380 1103.5,380 1103,380.9 1102.5,381.7 1102,381.7 1101.5,380.8 1101,379.9 1100.5,379.7 1100,379.7 1099.5,379.6 1099,380.1 1098.5,380.7 1098,381.3 1097.5,380.5 1097,379.8 1096.5,379.4 1096,379.4 1095.5,379.4 1095,379.6 1094.5,380.5 1094,381.4 1093.5,381.1 1093,380.1 1092.5,379.2 1092,379.1 1091.5,379.1 1091,379 1090.5,379.8 1090,380.6 1089.5,381.1 1089,380.2 1088.5,379.2 1088,378.9 1087.5,378.9 1087,378.9 1086.5,379.1 1086,379.6 1085.5,380.1 1085,379.8 1084.5,379.3 1084,379 1083.5,379 1083,379 1082.5,379.1 1082,380.1 1081.5,381 1081,381.3 1080.5,380.4 1080,379.6 1079.5,379.4 1079,379.5 1078.5,379.6 1078,380.2 1077.5,381 1077,381.9 1076.5,381.2 1076,380.5 1075.5,380.2 1075,380.3 1074.5,380.4 1074,380.6 1073.5,381.3 1073,382 1072.5,382 1072,381.6 1071.5,381.1 1071,381.2 1070.5,381.4 1070,381.5 1069.5,382.1 1069,382.9 1068.5,383.4 1068,382.9 1067.5,382.5 1067,382.3 1066.5,382.5 1066,382.6 1065.5,383 1065,383.6 1064.5,383.5 1064,383.1 1063.5,382.5 1063,382 1062.5,381.9 1062,381.7 1061.5,381.6 1061,381.7 1060.5,381.9 1060,381.9 1059.5,381.5 1059,381.1 1058.5,381 1058,380.9 1057.5,380.8 1057,380.9 1056.5,381.1 1056,381.3 1055.5,381 1055,380.7 1054.5,380.5 1054,380.5 1053.5,380.4 1053,380.5 1052.5,380.7 1052,381 1051.5,381 1051,380.8 1050.5,380.5 1050,380.6 1049.5,380.6 1049,380.7 1048.5,381 1048,381.4 1047.5,381.8 1047,381.5 1046.5,381.2 1046,381.1 1045.5,381.2 1045,381.3 1044.5,381.5 1044,382 1043.5,382.5 1043,382.5 1042.5,382.1 1042,381.2 1041.5,380.8 1041,380.4 1040.5,380.2 1040,380.6 1039.5,381 1039,381.2 1038.5,380.7 1038,380.2 1037.5,380 1037,380 1036.5,380 1036,380.4 1035.5,381.4 1035,382.4 1034.5,381.6 1034,380.6 1033.5,379.7 1033,379.7 1032.5,379.7 1032,379.7 1031.5,380.6 1031,381.5 1030.5,381.6 1030,380.6 1029.5,379.6 1029,379.4 1028.5,379.4 1028,379.4 1027.5,379.9 1027,380.8 1026.5,381.7 1026,380.7 1025.5,379.7 1025,379.2 1024.5,379.1 1024,379.1 1023.5,379.3 1023,380.2 1022.5,381.2 1022,380.9 1021.5,379.9 1021,378.9 1020.5,378.8 1020,378.8 1019.5,378.8 1019,379.3 1018.5,379.9 1018,380.3 1017.5,379.6 1017,379 1016.5,378.7 1016,378.7 1015.5,378.7 1015,378.9 1014.5,379.5 1014,380 1013.5,379.7 1013,379.3 1012.5,378.9 1012,379 1011.5,379 1011,379.1 1010.5,379.8 1010,380.5 1009.5,380.8 1009,380.2 1008.5,379.6 1008,379.6 1007.5,379.6 1007,379.7 1006.5,380.1 1006,380.6 1005.5,381.1 1005,380.9 1004.5,380.5 1004,380.4 1003.5,380.5 1003,380.6 1002.5,380.8 1002,381.7 1001.5,382.5 1001,382.5 1000.5,382 1000,381.5 999.5,381.5 999,381.7 998.5,381.8 998,382.2 997.5,382.6 997,383 996.5,382.8 996,382.7 995.5,382.7 995,382.3 994.5,382.2 994,382.2 993.5,382.4 993,382.6 992.5,382.3 992,381.8 991.5,381.4 991,381.3" fill="#4dbeee"/>
<polyline clip-path="url(#a6)" points="991.5,643.3 991.9,643.2 992.2,643.6 992.5,643.3 992.9,643.6 993.2,643.2 993.6,642.6 994,642.5 994.3,641.9 994.6,642.5 995,642.2 995.4,642.6 995.7,643.2 996,644.1 996.4,644.5 996.8,645.4 997.1,646.3 997.5,646 997.8,645.2 998.1,644.5 998.5,644.2 998.9,643.1 999.2,643.2 999.5,643.5 999.9,644.3 1000.2,645.3 1000.6,646.6 1001,648.3 1001.3,650.6 1001.6,649.5 1002,648.2 1002.4,646.6 1002.7,645.4 1003,643.9 1003.4,643.1 1003.8,644.3 1004.1,646.1 1004.5,647.8 1004.8,649.7 1005.1,652.1 1005.5,652.3 1005.9,650.6 1006.2,649.2 1006.5,647.6 1006.9,645.8 1007.2,644.6 1007.6,643.7 1008,645.1 1008.3,646.6 1008.6,648.1 1009,650.5 1009.4,652.2 1009.7,655.7 1010,653.5 1010.4,650.9 1010.8,649 1011.1,646.7 1011.5,645.2 1011.8,644.1 1012.1,645.4 1012.5,647.5 1012.9,649.4 1013.2,652.1 1013.5,654.7 1013.9,655.8 1014.2,653.4 1014.6,651.3 1015,649.3 1015.3,647 1015.6,645.3 1016,643.8 1016.4,645.5 1016.7,647.2 1017,649.5 1017.4,651.6 1017.8,653.7 1018.1,656.9 1018.5,654.4 1018.8,651.5 1019.1,649.4 1019.5,647.1 1019.9,645.1 1020.2,643.7 1020.5,645.5 1020.9,647 1021.2,649.2 1021.6,651.5 1022,654.2 1022.3,656.2 1022.6,655.4 1023,652.6 1023.4,650.2 1023.7,647.7 1024,645.6 1024.4,643.7 1024.8,645.2 1025.1,647.2 1025.5,649.7 1025.8,652 1026.2,654 1026.5,656.5 1026.8,653.7 1027.2,651.1 1027.5,648.9 1027.9,646.8 1028.2,644.8 1028.6,643.3 1029,644.7 1029.3,646.3 1029.7,648.1 1030,650.2 1030.3,651.9 1030.7,653.7 1031,651.5 1031.4,649.5 1031.8,647.2 1032.1,646 1032.5,644.5 1032.8,643.5 1033.2,644.3 1033.5,645.2 1033.8,646.4 1034.2,647.4 1034.5,649 1034.9,649.8 1035.2,648.5 1035.6,647 1036,645.6 1036.3,644.5 1036.7,643.3 1037,642.6 1037.3,643.1 1037.7,643.7 1038,644.5 1038.4,644.9 1038.8,645.9 1039.1,646.2 1039.5,644.6 1039.8,644 1040.2,643.4 1040.5,642.9 1040.8,642.4 1041.2,642.1 1041.5,642.4 1041.9,642.5 1042.2,642.8 1042.6,642.9 1043,643.3 1043.3,643.9 1043.7,643.8 1044,644 1044.3,643.5 1044.7,643.4 1045,643.9 1045.4,643.6 1045.8,643.6 1046.1,644.1 1046.5,644.1 1046.8,644.8 1047.2,645.4 1047.5,645.6 1047.8,645.4 1048.2,645 1048.5,645 1048.9,644.7 1049.2,645 1049.6,644.8 1050,645.1 1050.3,645 1050.7,645.2 1051,645.8 1051.3,646.2 1051.7,646.3 1052,646.2 1052.4,645.9 1052.8,645.7 1053.1,645.2 1053.5,645.1 1053.8,644.9 1054.2,644.8 1054.5,644.9 1054.8,645.2 1055.2,645.4 1055.5,645.8 1055.9,646.1 1056.2,645.6 1056.6,645.6 1057,645.3 1057.3,645 1057.7,644.4 1058,644.1 1058.3,644.1 1058.7,644.1 1059,644.2 1059.4,644.6 1059.8,644.8 1060.1,644.9 1060.5,644.4 1060.8,644.2 1061.2,643.9 1061.5,643.1 1061.8,643.1 1062.2,643 1062.5,642.9 1062.9,642.9 1063.2,642.8 1063.6,642.6 1064,643.1 1064.3,642.9 1064.7,644.1 1065,644.2 1065.3,643.6 1065.7,643.3 1066,643.3 1066.4,642.8 1066.8,642.8 1067.1,643.4 1067.5,644.3 1067.8,645.7 1068.2,646.9 1068.5,647.8 1068.8,648.1 1069.2,647.3 1069.5,646.1 1069.9,645 1070.2,644.1 1070.6,643 1071,643.5 1071.3,645.2 1071.7,646.5 1072,648.1 1072.3,650.2 1072.7,652 1073,651.1 1073.4,649.5 1073.8,647.6 1074.1,646.2 1074.5,644.8 1074.8,643.6 1075.2,644.4 1075.5,645.7 1075.8,647.6 1076.2,649.5 1076.5,652.2 1076.9,654.4 1077.2,654.5 1077.6,652.2 1078,650.1 1078.3,647.7 1078.7,646 1079,644.1 1079.3,644.9 1079.7,646.9 1080,648.9 1080.4,651.8 1080.8,654.5 1081.1,657.4 1081.5,657.2 1081.8,653.9 1082.2,651.3 1082.5,648.9 1082.8,646.4 1083.2,644.3 1083.5,645.2 1083.9,647.4 1084.2,650.2 1084.6,652.7 1085,656.2 1085.3,659.3 1085.7,655 1086,652.8 1086.3,650.3 1086.7,648.1 1087,646.2 1087.4,644.7 1087.8,645 1088.1,646.9 1088.5,648.9 1088.8,651.2 1089.2,653.7 1089.5,656.1 1089.8,657.5 1090.2,654.3 1090.5,651.7 1090.9,648.9 1091.2,646.6 1091.6,644.8 1092,644.9 1092.3,647.1 1092.7,649.7 1093,652.2 1093.3,654.5 1093.7,657.3 1094,656.7 1094.4,653.5 1094.8,650.8 1095.1,648.1 1095.5,646.2 1095.8,644.5 1096.2,645 1096.5,646.4 1096.8,648.8 1097.2,651 1097.5,653.1 1097.9,655.9 1098.2,653.7 1098.6,650.9 1099,649.2 1099.3,646.9 1099.7,645.2 1100,644.2 1100.3,644.4 1100.7,645.2 1101,646.8 1101.4,648.4 1101.8,649.8 1102.1,651.3 1102.5,651.5 1102.8,649.7 1103.2,647.4 1103.5,646 1103.8,644.5 1104.2,643.2 1104.5,643.5 1104.9,644.6 1105.2,645.6 1105.6,646.4 1106,648 1106.3,648.8 1106.7,648.5 1107,646.5 1107.3,645.4 1107.7,644.1 1108,643.7 1108.4,642.7 1108.8,642.7 1109.1,643.3 1109.5,644 1109.8,644.3 1110.2,644.2 1110.5,644.2 1110.8,644.2 1111.2,642.7 1111.5,642.8 1111.9,642.3 1112.2,642.3 1112.6,642.6 1113,642.6 1113.3,642.7 1113.7,643.6 1114,643.8 1114.3,644.2 1114.7,644.2 1115,644.7 1115.4,644.1 1115.8,644.5 1116.1,644.2 1116.5,644 1116.8,644.1 1117.2,644.5 1117.5,644.3 1117.8,644.5 1118.2,645.1 1118.5,645.2 1118.9,645.4 1119.2,645.5 1119.6,645.3 1120,645.2 1120.3,645.1 1120.7,645 1121,645.1 1121.3,644.9 1121.7,645.2 1122,645.2 1122.4,645.5 1122.8,645.6 1123.1,645.9 1123.5,645.8 1123.8,645.9 1124.2,645.6 1124.5,645.1 1124.8,645.1 1125.2,645.1 1125.5,644.6 1125.9,645.1 1126.2,645 1126.6,645.2 1127,645.5 1127.3,645.4 1127.7,645.4 1128,645.2 1128.3,645 1128.7,644.3 1129,644.3 1129.4,644 1129.8,643.8 1130.1,643.7 1130.5,643.7 1130.8,643.6 1131.2,643.8 1131.5,643.8 1131.8,644.1 1132.2,643.4 1132.5,643 1132.9,642.6 1133.2,642.7 1133.6,642.4 1134,642.2 1134.3,641.9 1134.7,642.9 1135,643.4 1135.3,644.1 1135.7,644.7 1136,645.7 1136.4,645.3 1136.8,645.2 1137.1,644.6 1137.5,643.8 1137.8,643 1138.2,643.4 1138.5,643.9 1138.8,645 1139.2,646.1 1139.5,647.9 1139.9,649.7 1140.2,648.9 1140.6,647.7 1141,646.8 1141.3,645.4 1141.7,644.5 1142,643.5 1142.3,643.6 1142.7,644.5 1143,645.8 1143.4,647.6 1143.8,649.4 1144.1,651.5 1144.5,654.5 1144.8,652.5 1145.2,650.3 1145.5,648.3 1145.8,646.4 1146.2,644.4 1146.5,644.1 1146.9,646.4 1147.2,648.1 1147.6,651 1148,653.8 1148.3,656.6 1148.7,655.7 1149,653.4 1149.3,650.9 1149.7,648.8 1150,646.8 1150.4,644.6 1150.8,644.5 1151.1,646.3 1151.5,648.7 1151.8,651.1 1152.2,653.8 1152.5,656.6 1152.8,658.2 1153.2,655.2 1153.5,652.4 1153.9,649.5 1154.2,646.9 1154.6,644.9 1155,644.6 1155.3,646.4 1155.7,649.3 1156,651.8 1156.3,654.8 1156.7,657.9 1157,658.4 1157.4,655.2 1157.8,652.1 1158.1,649.9 1158.5,647.4 1158.8,645.2 1159.2,644.7 1159.5,646.7 1159.8,648.6 1160.2,651.6 1160.5,654 1160.9,656.8 1161.2,657.8 1161.6,655.1 1162,651.9 1162.3,649.6 1162.7,647.4 1163,645.1 1163.3,644.4 1163.7,646.2 1164,648.5 1164.4,650.9 1164.8,653.2 1165.1,655.8 1165.5,657.5 1165.8,654.5 1166.2,651.7 1166.5,649.3 1166.8,646.7 1167.2,644.9 1167.5,643.9 1167.9,645.6 1168.2,647.7 1168.6,650 1169,652.3 1169.3,654.5 1169.7,655.8 1170,653.1 1170.3,650.4 1170.7,648.1 1171,645.8 1171.4,644.6 1171.8,643.6 1172.1,645.4 1172.5,646.9 1172.8,648 1173.2,649.9 1173.5,651.8 1173.8,652.1 1174.2,649.7 1174.5,647.7 1174.9,646 1175.2,645 1175.6,643.5 1176,643.3 1176.3,643.8 1176.7,644.9 1177,646 1177.3,646.3 1177.7,647.5 1178,647.2 1178.4,646.2 1178.8,645 1179.1,643.9 1179.5,643.6 1179.8,642.8 1180.2,642.3 1180.5,642.5 1180.8,642.9 1181.2,642.4 1181.5,642.7 1181.9,643 1182.2,643.4 1182.6,643.3 1183,643.5 1183.3,642.9 1183.7,643.3 1184,643.3 1184.3,643 1184.7,643.7 1185,643.9 1185.4,644.4 1185.8,644.3 1186.1,644.8 1186.5,645 1186.8,645.2 1187.2,644.9 1187.5,644.6 1187.8,644.6 1188.2,644.4 1188.5,644.3 1188.9,644.5 1189.2,645.2 1189.6,645.1 1190,645.8 1190.3,645.7 1190.7,645.9 1191,645.8 1191.3,645.4 1191.7,645.4 1192,645.5 1192.4,645.3 1192.8,645.2 1193.1,645.2 1193.5,645.6 1193.8,645.8 1194.2,645.7 1194.5,646 1194.8,645.8 1195.2,645.9 1195.5,645.4 1195.9,645.3 1196.2,645 1196.6,644.6 1197,644.2 1197.3,644.8 1197.7,644.4 1198,644.8 1198.3,644.8 1198.7,644.9 1199,645.2 1199.4,645 1199.8,644.2 1200.1,644.1 1200.5,643.6 1200.8,643.4 1201.2,643.1 1201.5,643 1201.8,643 1202.2,643.1 1202.5,643.6 1202.9,643.4 1203.2,643.3 1203.6,643.3 1204,643 1204.3,642.3 1204.7,642.6 1205,642.5 1205.3,642.3 1205.7,642.8 1206,643.2 1206.4,644 1206.8,644.8 1207.1,645.9 1207.5,648 1207.8,647.3 1208.2,646.3 1208.5,645.4 1208.8,644.6 1209.2,643.6 1209.5,643 1209.9,643.8 1210.2,645.2 1210.6,647.2 1211,648.5 1211.3,650.7 1211.7,652.3 1212,650.9 1212.3,648.9 1212.7,647.3 1213,645.8 1213.4,644.5 1213.8,643.6 1214.1,645.2 1214.5,646.9 1214.8,649 1215.2,650.8 1215.5,653.4 1215.8,653.4 1216.2,651.7 1216.5,649.7 1216.9,648 1217.2,646.1 1217.6,644.9 1218,644.2 1218.3,645.4 1218.7,647.1 1219,649.1 1219.3,650.8 1219.7,653 1220,657.6 1220.4,655.2 1220.8,652.6 1221.1,650.3 1221.5,647.8 1221.8,645.7 1222.2,644.4 1222.5,645.8 1222.8,648.1 1223.2,650.4 1223.5,653.6 1223.9,656.3 1224.2,661.4 1224.6,657.9 1225,654.4 1225.3,651.2 1225.7,648.4 1226,646.2 1226.3,644.4 1226.7,646 1227,648.5 1227.4,651.7 1227.8,654.9 1228.1,658.2 1228.5,659.9 1228.8,656.9 1229.2,653.4 1229.5,650.7 1229.8,648.2 1230.2,646.2 1230.5,644.4 1230.9,646.2 1231.2,648.2 1231.6,650.5 1232,653.3 1232.3,656.6 1232.7,659.4 1233,656.5 1233.3,653.2 1233.7,650.6 1234,648.1 1234.4,645.7 1234.8,644 1235.1,645.7 1235.5,648 1235.8,649.9 1236.2,652.3 1236.5,655 1236.8,657.7 1237.2,654.6 1237.5,651.6 1237.9,649.5 1238.2,647.2 1238.6,645.2 1239,643.6 1239.3,645.3 1239.7,646.5 1240,648.6 1240.3,650.2 1240.7,652.1 1241,654.3 1241.4,650.6 1241.8,649.1 1242.1,647.1 1242.5,645.4 1242.8,644.2 1243.2,643.4 1243.5,644.2 1243.8,645.4 1244.2,646 1244.5,647.2 1244.9,648.2 1245.2,649.7 1245.6,648.5 1246,646.9 1246.3,645.5 1246.7,644.5 1247,643.8 1247.3,643.1 1247.7,643.5 1248,644.2 1248.4,644.8 1248.8,644.9 1249.1,645.3 1249.5,646.1 1249.8,644.9 1250.2,643.7 1250.5,643.5 1250.8,642.8 1251.2,642 1251.5,641.9 1251.9,642.1 1252.2,642.3 1252.6,642.8 1253,643.2 1253.3,644 1253.7,643.9 1254,644.3 1254.3,643.8 1254.7,643.8 1255,644 1255.4,643.9 1255.8,643.7 1256.1,643.7 1256.5,644.2 1256.8,644.4 1257.2,645.1 1257.5,645 1257.8,645.4 1258.2,645.7 1258.5,645 1258.9,645.1 1259.2,645.2 1259.6,645 1260,644.5 1260.3,644.7 1260.7,644.9 1261,645.6 1261.3,645.5 1261.7,646 1262,646.4 1262.4,645.9 1262.8,645.6 1263.1,645.8 1263.5,645.4 1263.8,645 1264.2,645.1 1264.5,644.9 1264.8,645 1265.2,645 1265.5,645.6 1265.9,645.9 1266.2,645.9 1266.6,645.8 1267,645 1267.3,644.8 1267.7,644.6 1268,644.7 1268.3,644.4 1268.7,644.1 1269,644 1269.4,644.2 1269.8,644.4 1270.1,644.7 1270.5,644.4 1270.8,644.5 1271.2,644.1 1271.5,643.8 1271.8,643.4 1272.2,643 1272.5,642.5 1272.9,642.4 1273.2,642.5 1273.6,642.8 1274,642.4 1274.3,642.6 1274.7,644.4 1275,644.2 1275.3,644 1275.7,643.7 1276,643.6 1276.4,643.1 1276.8,643.1 1277.1,643.3 1277.5,644.2 1277.8,644.7 1278.2,645.8 1278.5,647.2 1278.8,649 1279.2,648.8 1279.5,647.6 1279.9,646.4 1280.2,645.4 1280.6,644.4 1281,643.5 1281.3,644.1 1281.7,645.5 1282,647 1282.3,648.6 1282.7,651.1 1283,653.1 1283.4,651.2 1283.8,649.5 1284.1,648.1 1284.5,646.3 1284.8,644.9 1285.2,643.7 1285.5,644.3 1285.8,646.2 1286.2,647.9 1286.5,649.8 1286.9,652.2 1287.2,655 1287.6,654.6 1288,652.1 1288.3,650.2 1288.7,648 1289,646.2 1289.3,644 1289.7,645 1290,647.2 1290.4,649.5 1290.8,652.2 1291.1,654.5 1291.5,657.6 1291.8,656.6 1292.2,653.8 1292.5,651.6 1292.8,648.8 1293.2,646.7 1293.5,644.5 1293.9,645.5 1294.2,647.4 1294.6,649.9 1295,653 1295.3,656.1 1295.7,658.8 1296,658.2 1296.3,655 1296.7,651.8 1297,649.1 1297.4,646.5 1297.8,644.5 1298.1,645.2 1298.5,647.7 1298.8,650.3 1299.2,652.9 1299.5,655.8 1299.8,659.2 1300.2,658.7 1300.5,655.1 1300.9,652 1301.2,649.1 1301.6,646.9 1302,644.7 1302.3,645 1302.7,647.2 1303,649.9 1303.3,652.7 1303.7,655.7 1304,658.3 1304.4,656.8 1304.8,654 1305.1,651 1305.5,648.4 1305.8,646.1 1306.2,644.7 1306.5,644.7 1306.8,646.7 1307.2,648.7 1307.5,651 1307.9,653.6 1308.2,656 1308.6,655 1309,652.1 1309.3,649.9 1309.7,647.4 1310,645.3 1310.3,644.3 1310.7,644.3 1311,646 1311.4,647.4 1311.8,649.4 1312.1,650.9 1312.5,652.5 1312.8,650.7 1313.2,649.1 1313.5,647.4 1313.8,646 1314.2,644.2 1314.5,643.5 1314.9,643.5 1315.2,644.4 1315.6,645.2 1316,646.2 1316.3,647.3 1316.7,648.4 1317,647.1 1317.3,646.1 1317.7,645.2 1318,644.4 1318.4,643.2 1318.8,642.6 1319.1,643.1 1319.5,643.5 1319.8,643.5 1320.2,643.5 1320.5,644.2 1320.8,644 1321.2,643.2 1321.5,642.9 1321.9,643 1322.2,642.5 1322.6,642.9 1323,642.5 1323.3,642.8 1323.7,643.3 1324,643.7 1324.3,643.6 1324.7,644 1325,644.5 1325.4,644.7 1325.8,644.5 1326.1,644.2 1326.5,644.2 1326.8,644.4 1327.2,644.4 1327.5,644 1327.8,644.6 1328.2,645 1328.5,644.9 1328.9,645.6 1329.2,645.5 1329.6,645.9 1330,645.6 1330.3,645.5 1330.7,645.2 1331,645.1 1331.3,645 1331.7,645 1332,645.3 1332.4,645.4 1332.8,645.6 1333.1,645.6 1333.5,646.1 1333.8,646 1334.2,645.6 1334.5,645.7 1334.8,645.4 1335.2,645 1335.5,644.6 1335.9,644.8 1336.2,644.6 1336.6,644.8 1337,645.1 1337.3,645 1337.7,645.4 1338,645.3 1338.3,644.7 1338.7,644.7 1339,644.1 1339.4,644.2 1339.8,643.9 1340.1,643.6 1340.5,643.4 1340.8,643.7 1341.2,643.7 1341.5,644.1 1341.8,643.7 1342.2,644 1342.5,643.7 1342.9,643.2 1343.2,642.9 1343.6,642.2 1344,642.4 1344.3,641.9 1344.7,643 1345,643.4 1345.3,643.4 1345.7,644.5 1346,645.3 1346.4,645.3 1346.8,645 1347.1,644.8 1347.5,643.9 1347.8,643.8 1348.2,642.9 1348.5,643.2 1348.8,643.5 1349.2,644.6 1349.5,646 1349.9,646.8 1350.2,648.2 1350.6,649.1 1351,647.8 1351.3,646.5 1351.7,645.5 1352,644.4 1352.3,643.8 1352.7,643.6 1353,644.8 1353.4,645.8 1353.8,647.8 1354.1,649.2 1354.5,651.5 1354.8,651.2 1355.2,649.5 1355.5,648.3 1355.8,646.6 1356.2,645.2 1356.5,644.2 1356.9,643.6 1357.2,645.4 1357.6,646.7 1358,648.4 1358.3,650.6 1358.7,652.4 1359,654.3 1359.3,651.9 1359.7,649.7 1360,648 1360.4,645.9 1360.8,644.2 1361.1,644.2 1361.5,645.4 1361.8,647.8 1362.2,649.6 1362.5,652.3 1362.8,655 1363.2,654.5 1363.5,652.3 1363.9,649.9 1364.2,647.7 1364.6,645.9 1365,644.3 1365.3,644.3 1365.7,645.7 1366,647.6 1366.3,649.9 1366.7,651.7 1367,654.1 1367.4,653.8 1367.8,651.3 1368.1,649.3 1368.5,647.6 1368.8,645.7 1369.2,644.4 1369.5,644 1369.8,645.5 1370.2,647.1 1370.5,648.7 1370.9,650.9 1371.2,652.8 1371.6,654.9 1372,652.9 1372.3,650.1 1372.7,647.9 1373,645.9 1373.3,644.6 1373.7,644.3 1374,645.6 1374.4,647.2 1374.8,649 1375.1,650.8 1375.5,653.3 1375.8,653.3 1376.2,651 1376.5,649.1 1376.8,647.2 1377.2,645.8 1377.5,644.3 1377.9,643.6 1378.2,645.1 1378.6,646 1379,647.8 1379.3,649.2 1379.7,650.7 1380,651.3 1380.3,649.9 1380.7,647.6 1381,646.4 1381.4,645.2 1381.8,643.6 1382.1,643.2 1382.5,644.4 1382.8,645.3 1383.2,646.5 1383.5,647.8 1383.8,648.5 1384.2,649.2 1384.5,647.7 1384.9,646.1 1385.2,645.4 1385.6,644.3 1386,643.4 1386.3,642.7 1386.7,643.8 1387,644.4 1387.3,644.8 1387.7,645.6 1388,646 1388.4,645.8 1388.8,644.8 1389.1,644.1 1389.5,643.3 1389.8,643 1390.2,642.8 1390.5,642.6 1390.8,642.9 1391.2,642.4 1391.5,642.5 1391.9,643 1392.2,643.3 1392.6,643.8 1393,643.5 1393.3,643.3 1393.7,643.5 1394,643.6 1394.3,643.1 1394.7,643.6 1395,643.3 1395.4,643.8 1395.8,644.1 1396.1,644.7 1396.5,645.2 1396.8,645.3 1397.2,644.9 1397.5,645.2 1397.8,644.7 1398.2,644.5 1398.5,644.9 1398.9,644.7 1399.2,644.9 1399.6,645.2 1400,645.6 1400.3,645.6 1400.7,646.1 1401,646.2 1401.3,646.1 1401.7,645.6 1402,645.6 1402.4,645.3 1402.8,645 1403.1,644.8 1403.5,645.2 1403.8,645.1 1404.2,645.7 1404.5,645.5 1404.8,645.6 1405.2,645.7 1405.5,645.9 1405.9,645.3 1406.2,644.9 1406.6,644.6 1407,644.3 1407.3,644.5 1407.7,644.6 1408,644.7 1408.3,644.8 1408.7,644.5 1409,645 1409.4,644.9 1409.8,644.8 1410.1,644.4 1410.5,644.1 1410.8,643.3 1411.2,643.5 1411.5,643.3 1411.8,643.3 1412.2,642.8 1412.5,643 1412.9,643 1413.2,643 1413.6,643.5 1414,643.1 1414.3,642.6 1414.7,643.4 1415,643.1 1415.3,642.6 1415.7,642.3 1416,642.8 1416.4,643.8 1416.8,644.2 1417.1,645.3 1417.5,646.5 1417.8,647 1418.2,646.5 1418.5,645.8 1418.8,645.3 1419.2,644.2 1419.5,643.4 1419.9,643.3 1420.2,643.9 1420.6,645.2 1421,646.3 1421.3,647.5 1421.7,649.4 1422,651.1 1422.3,649.9 1422.7,648.2 1423,647 1423.4,645.5 1423.8,644.1 1424.1,643.7 1424.5,644.3 1424.8,646.3 1425.2,647.8 1425.5,649.7 1425.8,652 1426.2,655 1426.5,653 1426.9,650.3 1427.2,648.6 1427.6,646.6 1428,645.1 1428.3,643.6 1428.7,645.2 1429,647.1 1429.3,649.7 1429.7,651.9 1430,655 1430.4,654 1430.8,652 1431.1,650.3 1431.5,648.3 1431.8,646.3 1432.2,645.1 1432.5,643.7 1432.8,645.4 1433.2,647 1433.5,648.9 1433.9,650.9 1434.2,653 1434.6,656 1435,653.6 1435.3,651.6 1435.7,648.9 1436,647.3 1436.3,645 1436.7,643.8 1437,645.2 1437.4,647.5 1437.8,649.3 1438.1,651.5 1438.5,654.2 1438.8,656.5 1439.2,654.1 1439.5,651.6 1439.8,649.4 1440.2,647.3 1440.5,645.4 1440.9,643.9 1441.2,645.2 1441.6,646.9 1442,649.3 1442.3,651.4 1442.7,653.8 1443,655.8 1443.3,653.8 1443.7,651.5 1444,649.1 1444.4,646.7 1444.8,645.1 1445.1,644.1 1445.5,644.9 1445.8,646.5 1446.2,648.4 1446.5,650.6 1446.8,652.8 1447.2,654.5 1447.5,653.7 1447.9,651.1 1448.2,648.8 1448.6,646.8 1449,644.7 1449.3,643.5 1449.7,644.5 1450,646.6 1450.3,648.2 1450.7,649.6 1451,652 1451.4,653.3 1451.8,651.3 1452.1,649.5 1452.5,647.5 1452.8,645.8 1453.2,644.2 1453.5,643.1 1453.8,644.1 1454.2,644.9 1454.5,646.1 1454.9,647.4 1455.2,648.3 1455.6,649.6 1456,647.5 1456.3,646.2 1456.7,645 1457,644.2 1457.3,643.3 1457.7,642.6 1458,643.2 1458.4,643.5 1458.8,644.2 1459.1,644.7 1459.5,644.8 1459.8,645.1 1460.2,644.5 1460.5,643.6 1460.8,643 1461.2,642.3 1461.5,642.4 1461.9,642.4 1462.2,642.6 1462.6,643 1463,643.2 1463.3,643.6 1463.7,643.8 1464,644.1 1464.3,644.2 1464.7,643.8 1465,643.9 1465.4,644.1 1465.8,644 1466.1,643.9 1466.5,643.9 1466.8,644.3 1467.2,644.6 1467.5,645 1467.8,645.2 1468.2,645.7 1468.5,645.8 1468.9,645.2 1469.2,645.3 1469.6,645.2 1470,644.9 1470.3,644.8 1470.7,645.3 1471,644.9 1471.3,645.4 1471.7,645.5 1472,646.1 1472.4,646.4 1472.8,646 1473.1,645.5 1473.5,645.6 1473.8,645.3 1474.2,645.2 1474.5,644.9 1474.8,645.1 1475.2,645.3 1475.5,645.3 1475.9,645.3 1476.2,645.8 1476.6,645.6 1477,645.6 1477.3,645.1 1477.7,645 1478,644.3 1478.3,644.6 1478.7,644 1479,643.8 1479.4,643.9 1479.8,644.1 1480.1,644 1480.5,644.3 1480.8,644.4 1481.2,644.3 1481.5,643.7 1481.8,643.3 1482.2,642.9 1482.5,642.9 1482.9,642.7 1483.2,642.4 1483.6,642.3 1484,642.7 1484.3,642.5 1484.7,643.6 1485,644.4 1485.3,644.8 1485.7,644.6 1486,644.2 1486.4,643.6 1486.8,643.2 1487.1,642.6 1487.5,643.4 1487.8,643.8 1488.2,644.9 1488.5,646.1 1488.8,647.5 1489.2,648.7 1489.5,648.3 1489.9,647.4 1490.2,646.1 1490.6,645.5 1491,644.1 1491.3,643.5 1491.7,643.7 1492,645 1492.3,646.5 1492.7,648.3 1493,650.2 1493.4,652.2 1493.8,652.4 1494.1,650.3 1494.5,648.5 1494.8,646.7 1495.2,645.2 1495.5,643.8 1495.8,644.6 1496.2,646.3 1496.5,648.3 1496.9,651 1497.2,653.6 1497.6,655.9 1498,653.2 1498.3,651.2 1498.7,649.2 1499,647 1499.3,645.7 1499.7,644.2 1500,644.4 1500.4,646.1 1500.8,648.7 1501.1,650.7 1501.5,652.9 1501.8,655.3 1502.2,654 1502.5,651.8 1502.8,649.9 1503.2,647.6 1503.5,645.6 1503.9,644.6 1504.2,645.1 1504.6,646.5 1504.9,648.9 1505.3,651 1505.7,653.6 1506,656.1 1506.3,656.5 1506.7,653.7 1507,651.1 1507.4,648.2 1507.8,646.3 1508.1,644.5 1508.4,645.2 1508.8,647 1509.2,649.5 1509.5,651.8 1509.8,654.3 1510.2,657.1 1510.5,656.8 1510.9,654 1511.2,650.9 1511.6,648.6 1511.9,646.1 1512.3,644.4 1512.7,644.9 1513,646.9 1513.3,649.4 1513.7,651.3 1514,654.4 1514.4,656.9 1514.8,653.6 1515.1,651.4 1515.4,649.4 1515.8,647.1 1516.2,645.5 1516.5,644.4 1516.8,644.2 1517.2,645.9 1517.5,647.5 1517.9,648.8 1518.2,650.9 1518.6,652.7 1518.9,654.4 1519.3,651.5 1519.7,649.5 1520,647.1 1520.3,645.3 1520.7,644.1 1521,643.8 1521.4,645.6 1521.8,647.1 1522.1,648.5 1522.4,650.5 1522.8,651.8 1523.2,650.6 1523.5,648.7 1523.8,647.2 1524.2,645.4 1524.5,644.3 1524.9,643.3 1525.2,643.5 1525.6,644.5 1525.9,645 1526.3,646.3 1526.7,646.9 1527,647.7 1527.3,646.9 1527.7,645.9 1528,645.1 1528.4,644.1 1528.8,643.5 1529.1,642.7 1529.4,642.7 1529.8,643 1530.2,643.4 1530.5,643.6 1530.8,643.8 1531.2,642.7 1531.5,643.2 1531.9,643.2 1532.2,643 1532.6,642.6 1532.9,642.7 1533.3,642.5 1533.7,642.8 1534,643.5 1534.3,643.7 1534.7,644 1535,644.5 1535.4,644.9 1535.8,644.8 1536.1,644.7 1536.4,644.6 1536.8,644.6 1537.2,644.4 1537.5,644.4 1537.8,644.2 1538.2,644.8 1538.5,644.9 1538.9,645.4 1539.2,645.3 1539.6,645.6 1539.9,645.6 1540.3,645.8 1540.7,645.7 1541,645.4 1541.3,645.1 1541.7,645.2 1542,645.2 1542.4,645.3 1542.8,645.3 1543.1,645.5 1543.4,645.8 1543.8,645.9 1544.2,646 1544.5,645.8 1544.8,645.7 1545.2,645 1545.5,645 1545.9,644.5 1546.2,644.5 1546.6,645 1546.9,644.9 1547.3,645.3 1547.7,645.1 1548,645 1548.3,645.1 1548.7,644.9 1549,644.8 1549.4,644.5 1549.8,643.9 1550.1,643.6 1550.4,643.2 1550.8,643.6 1551.2,643.4 1551.5,643.4 1551.8,643.4 1552.2,643.5 1552.5,643.8 1552.9,643.1 1553.2,643.2 1553.6,642.3 1553.9,642.5 1554.3,641.7 1554.7,642.2 1555,643 1555.3,643.1 1555.7,644 1556,644.4 1556.4,645.2 1556.8,646.4 1557.1,645.9 1557.4,645.3 1557.8,644.6 1558.2,643.5 1558.5,643.2 1558.8,643.3 1559.2,644 1559.5,645.3 1559.9,646.3 1560.2,648.2 1560.6,649.8 1560.9,648.8 1561.3,647.7 1561.7,646.9 1562,645.9 1562.3,644.4 1562.7,643.6 1563,643.7 1563.4,644.5 1563.8,646.3 1564.1,647.6 1564.4,649.1 1564.8,651.2 1565.2,652.3 1565.5,650.5 1565.8,648.9 1566.2,646.9 1566.5,645.7 1566.9,644.1 1567.2,644.1 1567.6,645.5 1567.9,647.2 1568.3,649.2 1568.7,651.6 1569,654.1 1569.3,656.1 1569.7,653.4 1570,650.8 1570.4,648.4 1570.8,646.8 1571.1,644.8 1571.4,644.5 1571.8,646.1 1572.2,648.5 1572.5,651.2 1572.8,653.9 1573.2,656.7 1573.5,657.1 1573.9,654.4 1574.2,652 1574.6,649.1 1574.9,647 1575.3,644.9 1575.7,644.7 1576,646.5 1576.3,648.5 1576.7,650.9 1577,653.9 1577.4,656.9 1577.8,657.2 1578.1,654.5 1578.4,651.9 1578.8,648.8 1579.2,647 1579.5,645.1 1579.8,644.6 1580.2,646.2 1580.5,648.2 1580.9,650.9 1581.2,653.4 1581.6,656 1581.9,654.9 1582.3,652.2 1582.7,649.8 1583,648 1583.3,646.3 1583.7,644.4 1584,644.3 1584.4,645.8 1584.8,647 1585.1,649 1585.4,650.9 1585.8,652.8 1586.2,654.8 1586.5,652.3 1586.8,650.2 1587.2,648.1 1587.5,646 1587.9,644.2 1588.2,644.1 1588.6,645.4 1588.9,646.6 1589.3,648.6 1589.7,650.5 1590,652.3 1590.3,651.5 1590.7,649.6 1591,647.9 1591.4,646.1 1591.8,644.8 1592.1,643.7 1592.4,643.6 1592.8,644.2 1593.2,645.4 1593.5,646.3 1593.8,647.5 1594.2,648.3 1594.5,648.6 1594.9,647.8 1595.2,646.1 1595.6,644.8 1595.9,644.2 1596.3,643.5 1596.7,642.7 1597,643.4 1597.3,643.8 1597.7,644.4 1598,644.5 1598.4,644.9 1598.8,645.4 1599.1,644.3 1599.4,643.1 1599.8,642.4 1600.2,641.5 1600.5,641.3 1600.8,640.9 1601.2,640.7 1601.5,640.7 1601.9,641 1602.2,641.4 1602.6,641.3 1602.9,641.4 1603.3,641.3 1603.7,641.1 1604,640.9 1604.3,640.7 1604.7,640.9 1605,641.1 1605.4,641.1 1605.8,641.6 1606.1,641.8 1606.4,641.6 1606.8,642.2 1607.2,642.3 1607.5,641.9 1607.8,642.2 1608.2,641.6 1608.5,641.7 1608.9,641.6 1609.2,641.7 1609.6,641.7 1609.9,641.8 1610.3,642 1610.7,642.1 1611,642.8 1611.3,643 1611.7,642.3 1612,642 1612.4,641.9 1612.8,641.8 1613.1,641.9 1613.4,641.9 1613.8,641.9 1614.2,641.6 1614.5,642.3 1614.8,642.4 1615.2,642.6 1615.5,642.9 1615.9,642.1 1616.2,641.9 1616.6,642 1616.9,641.9 1617.3,641.5 1617.7,641.2 1618,641.5 1618.3,641.7 1618.7,641.4 1619,641.7 1619.4,641.9 1619.8,641.9 1620.1,641.8 1620.4,641.4 1620.8,641.1 1621.2,640.8 1621.5,640.9 1621.8,640.3 1622.2,640.8 1622.5,640.6 1622.9,640.7 1623.2,641.4 1623.6,641.1 1623.9,641.6 1624.3,641.3 1624.7,642 1625,641.3 1625.3,641.3 1625.7,640.8 1626,641.1 1626.4,641.5 1626.8,641.8 1627.1,642.4 1627.4,643.1 1627.8,644.3 1628.2,644.8 1628.5,644.3 1628.8,643.4 1629.2,642.8 1629.5,642 1629.9,641.8 1630.2,641.3 1630.6,641.7 1630.9,643 1631.3,643.6 1631.7,644.8 1632,646 1632.3,647.7 1632.7,646.8 1633,645.4 1633.4,644.1 1633.8,643.2 1634.1,642.1 1634.4,641.8 1634.8,642.2 1635.2,644 1635.5,644.9 1635.8,647 1636.2,648.6 1636.5,648.5 1636.9,647.3 1637.2,645.9 1637.6,644.6 1637.9,643.4 1638.3,642.4 1638.7,642.1 1639,643 1639.3,644.1 1639.7,645 1640,646.7 1640.4,648.7 1640.8,653 1641.1,651.1 1641.4,648.7 1641.8,647 1642.2,644.5 1642.5,643.3 1642.8,641.9 1643.2,643.1 1643.5,644.8 1643.9,647.4 1644.2,649.5 1644.6,651.8 1644.9,651.6 1645.3,650 1645.7,647.7 1646,646.1 1646.3,644.2 1646.7,642.8 1647,642.2 1647.4,643.2 1647.8,644.4 1648.1,645.9 1648.4,647.8 1648.8,650 1649.2,652.9 1649.5,650.5 1649.8,648.3 1650.2,646.6 1650.5,644.8 1650.9,643.3 1651.2,642 1651.6,642.9 1651.9,644.4 1652.3,646.5 1652.7,648.2 1653,650.4 1653.3,652 1653.7,650.1 1654,647.8 1654.4,646.2 1654.8,644.6 1655.1,642.9 1655.4,641.5 1655.8,643.1 1656.2,644.1 1656.5,645.9 1656.8,647.1 1657.2,648.7 1657.5,650.8 1657.9,649.8 1658.2,647.6 1658.6,645.8 1658.9,644.2 1659.3,642.4 1659.7,641.6 1660,642.5 1660.3,643.8 1660.7,645 1661,646.8 1661.4,648.3 1661.8,649.9 1662.1,647.9 1662.4,646.4 1662.8,644.6 1663.2,643.5 1663.5,641.9 1663.8,641.6 1664.2,642.2 1664.5,642.9 1664.9,643.8 1665.2,644.8 1665.6,645.7 1665.9,646.3 1666.3,645.4 1666.7,643.8 1667,642.8 1667.3,641.9 1667.7,641.3 1668,641.2 1668.4,641 1668.8,641.5 1669.1,642.2 1669.4,642.3 1669.8,642.5 1670.2,643.1 1670.5,642.4 1670.8,641.8 1671.2,640.8 1671.5,640.3 1671.9,640.6 1672.2,640.5 1672.6,640.3 1672.9,640.5 1673.3,641 1673.7,641.3 1674,641.5 1674.3,641.7 1674.7,641.7 1675,641.4 1675.4,641.5 1675.8,641.5 1676.1,641 1676.4,641.2 1676.8,641.4 1677.2,641.3 1677.5,641.9 1677.8,642.2 1678.2,642.2 1678.5,642.5 1678.9,642.6 1679.2,642.2 1679.6,641.9 1679.9,642.1 1680.3,641.8 1680.7,641.5 1681,641.5 1681.3,641.8 1681.7,642 1682,642.6 1682.4,642.7 1682.8,643 1683.1,642.8 1683.4,642.6 1683.8,641.9 1684.2,641.9 1684.5,642 1684.8,641.8 1685.2,641.5 1685.5,641.7 1685.9,642 1686.2,642 1686.6,642.3 1686.9,642.3 1687.3,642.3 1687.7,642 1688,641.5 1688.3,641.3 1688.7,641.6 1689,641.3 1689.4,641.4 1689.8,641.3 1690.1,641.6 1690.4,641.8 1690.8,641.9 1691.2,641.6 1691.5,641.8 1691.8,641.2 1692.2,641.2 1692.5,640.7 1692.9,640.6 1693.2,640.6 1693.6,640.4 1693.9,640.3 1694.3,640.6 1694.7,641.7 1695,642.5 1695.3,642.8 1695.7,642.7 1696,642.6 1696.4,642 1696.8,641.9 1697.1,641.7 1697.4,641 1697.8,641.2 1698.2,641.9 1698.5,642.7 1698.8,643.3 1699.2,644.3 1699.5,645.4 1699.9,646 1700.2,645.1 1700.6,644 1700.9,643 1701.3,642 1701.7,641.5 1702,642.1 1702.3,643.1 1702.7,644.4 1703,645.9 1703.4,647.4 1703.8,649.5 1704.1,647.2 1704.4,646 1704.8,644.9 1705.2,643.7 1705.5,642.5 1705.8,641.6 1706.2,642 1706.5,643.3 1706.9,644.5 1707.2,646.1 1707.6,647.4 1707.9,649.4 1708.3,649.6 1708.7,647.6 1709,646.2 1709.3,644.6 1709.7,643.1 1710,642.3 1710.4,642.4 1710.8,644.1 1711.1,645.3 1711.4,647.1 1711.8,649.6 1712.2,651.4 1712.5,649 1712.8,647.6 1713.2,646 1713.5,644.7 1713.9,643 1714.2,642 1714.6,642.9 1714.9,644 1715.3,645.1 1715.7,646.8 1716,648.5 1716.3,650.6 1716.7,652.1 1717,650 1717.4,647.8 1717.8,645.6 1718.1,643.9 1718.4,642.4 1718.8,642.9 1719.2,644.4 1719.5,646.4 1719.8,648.4 1720.2,650.7 1720.5,652.6 1720.9,650 1721.2,647.6 1721.6,646.4 1721.9,644.7 1722.3,643.3 1722.7,642.4 1723,642.5 1723.3,643.6 1723.7,645.2 1724,646.7 1724.4,648.1 1724.8,649.6 1725.1,648.9 1725.4,647.2 1725.8,645.8 1726.2,644.1 1726.5,642.9 1726.8,642 1727.2,642.2 1727.5,643.1 1727.9,644.6 1728.2,645.8 1728.6,646.9 1728.9,648.2 1729.3,647.7 1729.7,646.2 1730,644.8 1730.3,643.7 1730.7,642.6 1731,641.5 1731.4,642.1 1731.8,642.6 1732.1,643.8 1732.4,644.8 1732.8,645.9 1733.2,646.4 1733.5,646 1733.8,645.1 1734.2,643.5 1734.5,642.6 1734.9,642 1735.2,641.4 1735.6,641.7 1735.9,642.1 1736.3,642.6 1736.7,643.5 1737,643.8 1737.3,644.3 1737.7,644.3 1738,643.2 1738.4,642.4 1738.8,641.9 1739.1,641.2 1739.4,641.2 1739.8,641.1 1740.2,641.2 1740.5,641.2 1740.8,641.5 1741.2,640.9 1741.5,641.3 1741.9,641.4 1742.2,641.4 1742.6,641.3 1742.9,640.9 1743.3,640.7 1743.7,640.7 1744,641 1744.3,640.9 1744.7,641.2 1745,641.7 1745.4,641.6 1745.8,642 1746.1,642.4 1746.4,642.1 1746.8,641.8 1747.2,641.4 1747.5,641.7 1747.8,641.5 1748.2,641.6 1748.5,641.9 1748.9,642.1 1749.2,642 1749.6,642.1 1749.9,642.5 1750.3,642.6 1750.7,642.4 1751,642 1751.3,641.8 1751.7,641.9 1752,641.7 1752.4,641.6 1752.8,642.1 1753.1,642.1 1753.4,641.9 1753.8,642.4 1754.2,642.8 1754.5,642.5 1754.8,642.5 1755.2,641.8 1755.5,641.8 1755.9,641.9 1756.2,641.5 1756.6,641.6 1756.9,641.4 1757.3,641.7 1757.7,641.9 1758,641.9 1758.3,642.4 1758.7,642.2 1759,642.2 1759.4,641.7 1759.8,641.3 1760.1,640.9 1760.4,640.7 1760.8,641 1761.2,640.7 1761.5,640.8 1761.8,641 1762.2,641.4 1762.5,641.7 1762.9,641.6 1763.2,641.4 1763.6,640.6 1763.9,640.3 1764.3,640.5 1764.7,640.7 1765,641 1765.3,641.1 1765.7,641.5 1766,642.2 1766.4,642.8 1766.8,644.2 1767.1,644.4 1767.4,643.7 1767.8,643.2 1768.2,642.5 1768.5,641.7 1768.8,641.6 1769.2,641.4 1769.5,642.4 1769.9,643.1 1770.2,644.3 1770.6,645.4 1770.9,646.7 1771.3,648.2 1771.7,646.9 1772,645.4 1772.3,644.5 1772.7,643.2 1773,641.9 1773.4,641.9 1773.8,643.3 1774.1,644.5 1774.4,646.5 1774.8,648 1775.2,650.2 1775.5,651.1 1775.8,649 1776.2,647.2 1776.5,645.8 1776.9,643.9 1777.2,642.6 1777.6,642.1 1777.9,643.5 1778.3,645.5 1778.7,647.5 1779,650.4 1779.3,652.5 1779.7,650.9 1780,648.8 1780.4,647.2 1780.8,645.5 1781.1,643.9 1781.4,642.4 1781.8,642.2 1782.2,643.9 1782.5,645.3 1782.8,647 1783.2,649 1783.5,651.2 1783.9,653.9 1784.2,651.3 1784.6,649.2 1784.9,646.7 1785.3,644.5 1785.7,643.1 1786,642.3 1786.3,644.1 1786.7,646.5 1787,648.4 1787.4,651.1 1787.8,653.9 1788.1,655.1 1788.4,651.9 1788.8,649.4 1789.2,647.2 1789.5,644.8 1789.8,643.3 1790.2,642.4 1790.5,644.5 1790.9,646.3 1791.2,648.4 1791.6,651 1791.9,653.3 1792.3,654.9 1792.7,651.8 1793,649.6 1793.3,647 1793.7,644.6 1794,642.7 1794.4,642.4 1794.8,643.8 1795.1,646.1 1795.4,647.8 1795.8,650.2 1796.2,652.5 1796.5,653 1796.8,650.7 1797.2,648.2 1797.5,646.2 1797.9,644.2 1798.2,642.5 1798.6,642 1798.9,643.1 1799.3,644.8 1799.7,646.8 1800,648.3 1800.3,650.3 1800.7,648.5 1801,647.1 1801.4,645.5 1801.8,644.2 1802.1,642.9 1802.4,641.7 1802.8,641.5 1803.2,642.2 1803.5,643 1803.8,644.3 1804.2,645 1804.5,646 1804.9,646.8 1805.2,645.4 1805.6,644.3 1805.9,643.3 1806.3,642 1806.7,641.3 1807,640.9 1807.3,641.8 1807.7,642.3 1808,642.6 1808.4,643.1 1808.8,643.7 1809.1,643.7 1809.4,642.7 1809.8,642.4 1810.2,641.5 1810.5,641.3 1810.8,640.7 1811.2,639.9 1811.5,640.6 1811.9,640.8 1812.2,641 1812.6,640.9 1812.9,641.2 1813.3,641.5 1813.7,641.3 1814,641.2 1814.3,641.1 1814.7,640.8 1815,640.9 1815.4,641 1815.8,641 1816.1,641.6 1816.4,641.7 1816.8,642.1 1817.2,642.1 1817.5,642.4 1817.8,642.3 1818.2,641.9 1818.5,641.5 1818.9,641.9 1819.2,641.7 1819.6,641.4 1819.9,641.4 1820.3,642.1 1820.7,642.2 1821,642.1 1821.3,642.4 1821.7,642.5 1822,642.7 1822.4,642.1 1822.8,642.3 1823.1,642 1823.4,641.4 1823.8,641.7 1824.2,641.7 1824.5,642 1824.8,642.3 1825.2,642.2 1825.5,642.2 1825.9,642.9 1826.2,642.3 1826.6,642.3 1826.9,641.9 1827.3,641.7 1827.7,641.6 1828,641.3 1828.3,641.3 1828.7,641.2 1829,641.8 1829.4,641.8 1829.8,642 1830.1,642.3 1830.4,641.6 1830.8,641.7 1831.2,640.9 1831.5,641.1 1831.8,640.9 1832.2,640.4 1832.5,640.7 1832.9,641 1833.2,641 1833.6,641.1 1833.9,641 1834.3,641 1834.7,642 1835,641.9 1835.3,641.5 1835.7,641.3 1836,640.9 1836.4,641 1836.8,641.4 1837.1,641.8 1837.4,642.6 1837.8,643.7 1838.2,644.7 1838.5,645.2 1838.8,644.2 1839.2,643.5 1839.5,643.2 1839.9,642.1 1840.2,641.7 1840.6,641.2 1840.9,642.1 1841.3,642.8 1841.7,643.9 1842,644.7 1842.3,646.2 1842.7,648.7 1843,647.3 1843.4,646.2 1843.8,644.9 1844.1,643.2 1844.4,642.2 1844.8,641.5 1845.2,642.4 1845.5,643.7 1845.8,645.4 1846.2,647.2 1846.5,649.4 1846.9,650.8 1847.2,648.9 1847.6,647.3 1847.9,645.7 1848.3,644.1 1848.7,642.5 1849,641.6 1849.3,642.7 1849.7,644.9 1850,646.5 1850.4,648.1 1850.8,650.7 1851.1,651 1851.4,649 1851.8,647 1852.2,645.7 1852.5,644.1 1852.8,642.7 1853.2,642 1853.5,642.7 1853.9,644.7 1854.2,646.1 1854.6,647.9 1854.9,649.9 1855.3,651.6 1855.7,649.4 1856,647.6 1856.3,645.8 1856.7,644.1 1857,643.2 1857.4,642.2 1857.8,642.9 1858.1,644.3 1858.4,646.2 1858.8,648.1 1859.2,650 1859.5,651.8 1859.8,650.1 1860.2,648.2 1860.5,646.3 1860.9,644.3 1861.2,642.8 1861.6,642.1 1861.9,642.8 1862.3,644.2 1862.7,645.9 1863,647.5 1863.3,649.6 1863.7,651 1864,650.5 1864.4,648.5 1864.8,646.5 1865.1,644.6 1865.4,642.9 1865.8,641.8 1866.2,642.9 1866.5,644.2 1866.8,645.8 1867.2,647.4 1867.5,649.3 1867.9,651.4 1868.2,647.7 1868.6,646.3 1868.9,644.5 1869.3,643.2 1869.7,642.4 1870,641 1870.3,641.6 1870.7,642.9 1871,643.8 1871.4,645.3 1871.8,646 1872.1,647.7 1872.4,647 1872.8,645.4 1873.2,643.8 1873.5,642.4 1873.8,641.6 1874.2,640.8 1874.5,641.2 1874.9,642 1875.2,642.9 1875.6,643.9 1875.9,644.8 1876.3,645.6 1876.7,644 1877,643 1877.3,642.1 1877.7,641.4 1878,640.6 1878.4,640 1878.8,640.2 1879.1,640.7 1879.4,641.2 1879.8,641.8 1880.2,642 1880.5,642.1 1880.8,641.6 1881.2,640.3 1881.5,639.9 1881.9,639.9 1882.2,639.3 1882.6,639.6 1882.9,639.7 1883.3,639.8 1883.7,640.2 1884,640.7 1884.3,640.7 1884.7,641.1 1885,640.7 1885.4,640.6 1885.8,640.7 1886.1,640 1886.4,640 1886.8,640.2 1887.2,640.2 1887.5,640.2 1887.8,640.8 1888.2,640.8 1888.5,641.2 1888.9,641.4 1889.2,641.3 1889.6,641.1 1889.9,640.8 1890.3,640.4 1890.7,640.3 1891,640.6 1891.3,640.5 1891.7,640.4 1892,641 1892.4,640.8 1892.8,641 1893.1,641.5 1893.4,641.1 1893.8,641 1894.2,640.8 1894.5,640.3 1894.8,640.3 1895.2,639.9 1895.5,640.2 1895.9,640.4 1896.2,640.2 1896.6,640.6 1896.9,640.5 1897.3,641 1897.7,641 1898,640.5 1898.3,640.3 1898.7,640.1 1899,639.5 1899.4,639.8 1899.8,639.6 1900.1,639.4 1900.4,639.9 1900.8,639.8 1901.2,639.8 1901.5,640.4 1901.8,640" fill="none" stroke="#ff00ff" stroke-width="1.2" stroke-linejoin="round" />
<rect x="833.5" y="23.5" width="99" height="75" fill="#000" stroke="#d9d9d9" stroke-width="1" shape-rendering="crispEdges"/>
<path d="M838.3 41.5 H850.5 V31.5 H863.7" stroke="#ffff11" stroke-width="1.2" fill="none"/>
<text x="892" y="41.1" fill="#d6d6d6" font-size="13.33">Ia</text>
<path d="M838.3 58.5 H850.5 V49.5 H863.7" stroke="#139fff" stroke-width="1.2" fill="none"/>
<text x="892" y="58.1" fill="#d6d6d6" font-size="13.33">Ib</text>
<path d="M838.3 76.5 H850.5 V66.5 H863.7" stroke="#ff6929" stroke-width="1.2" fill="none"/>
<text x="892" y="76.2" fill="#d6d6d6" font-size="13.33">Ic</text>
<path d="M838.3 94.5 H850.5 V84.5 H863.7" stroke="#64d413" stroke-width="1.2" fill="none"/>
<text x="892" y="94.1" fill="#d6d6d6" font-size="13.33">&lt;Iref&gt;</text>
<rect x="834.5" y="322.5" width="98" height="39" fill="#000" stroke="#d9d9d9" stroke-width="1" shape-rendering="crispEdges"/>
<path d="M839.3 339.5 H851.7 V329.5 H864.7" stroke="#ff0000" stroke-width="3" fill="none" stroke-linejoin="round"/>
<text x="893" y="339.1" fill="#d6d6d6" font-size="13.33">P_inv</text>
<path d="M839.3 357.5 H851.7 V347.5 H864.7" stroke="#00cfcf" stroke-width="3" fill="none" stroke-linejoin="round"/>
<text x="893" y="357.1" fill="#d6d6d6" font-size="13.33">Q</text>
<rect x="807.5" y="620.5" width="125" height="57" fill="#000" stroke="#d9d9d9" stroke-width="1" shape-rendering="crispEdges"/>
<path d="M812.3 637.5 H824.5 V627.5 H837.7" stroke="#7d7d0c" stroke-width="1.2" fill="none"/>
<text x="866" y="637.1" fill="#646464" font-size="13.33">calc_thd:1</text>
<path d="M812.3 655.5 H824.5 V645.5 H837.7" stroke="#0c5283" stroke-width="1.2" fill="none"/>
<text x="866" y="655.1" fill="#646464" font-size="13.33">calc_thd:2</text>
<path d="M812.3 673.5 H824.5 V663.5 H837.7" stroke="#ff6929" stroke-width="1.2" fill="none"/>
<text x="866" y="673.1" fill="#e6e6e6" font-size="13.33">THD</text>
<rect x="1778.5" y="23.5" width="110" height="40" fill="#000" stroke="#d9d9d9" stroke-width="1" shape-rendering="crispEdges"/>
<line x1="1783.3" y1="34.5" x2="1833.5" y2="34.5" stroke="#ffff00" stroke-width="3"/>
<text x="1837" y="41" fill="#d6d6d6" font-size="13.33">Ppv</text>
<line x1="1783.3" y1="52.5" x2="1833.5" y2="52.5" stroke="#00ff00" stroke-width="3"/>
<text x="1837" y="59" fill="#d6d6d6" font-size="13.33">Ideal_P</text>
<rect x="1774.5" y="322.5" width="114" height="21" fill="#000" stroke="#d9d9d9" stroke-width="1" shape-rendering="crispEdges"/>
<path d="M1779.3 339.5 H1791.7 V329.5 H1804.7" stroke="#4dbeee" stroke-width="3" fill="none" stroke-linejoin="round"/>
<text x="1833" y="339.1" fill="#d6d6d6" font-size="13.33">&lt;V_PV&gt;</text>
<rect x="1806.5" y="620.5" width="82" height="21" fill="#000" stroke="#d9d9d9" stroke-width="1" shape-rendering="crispEdges"/>
<path d="M1811.3 637.5 H1823.5 V627.5 H1836.7" stroke="#ff00ff" stroke-width="1.2" fill="none"/>
<text x="1865" y="637.1" fill="#d6d6d6" font-size="13.33">Ipv</text>
<g shape-rendering="crispEdges"><rect x="1902" y="3" width="16" height="12" fill="#fff"/><rect x="1903" y="4" width="14" height="10" fill="#262626"/><rect x="1903" y="4" width="14" height="1" fill="#5a5a5a"/><rect x="1903" y="5" width="14" height="2" fill="#a8a8a8"/></g><rect x="1909.2" y="9" width="1.7" height="5" fill="#d0d0d0"/><path d="M1910 6.3 C1911.5 7.5 1913 8.8 1913.1 10 L1912.9 11.5 L1911.7 11.3 L1911 9.7 L1909 9.7 L1908.3 11.3 L1907.1 11.5 L1906.9 10 C1907 8.8 1908.5 7.5 1910 6.3 Z" fill="#fff"/>
</svg>
</body></html>
